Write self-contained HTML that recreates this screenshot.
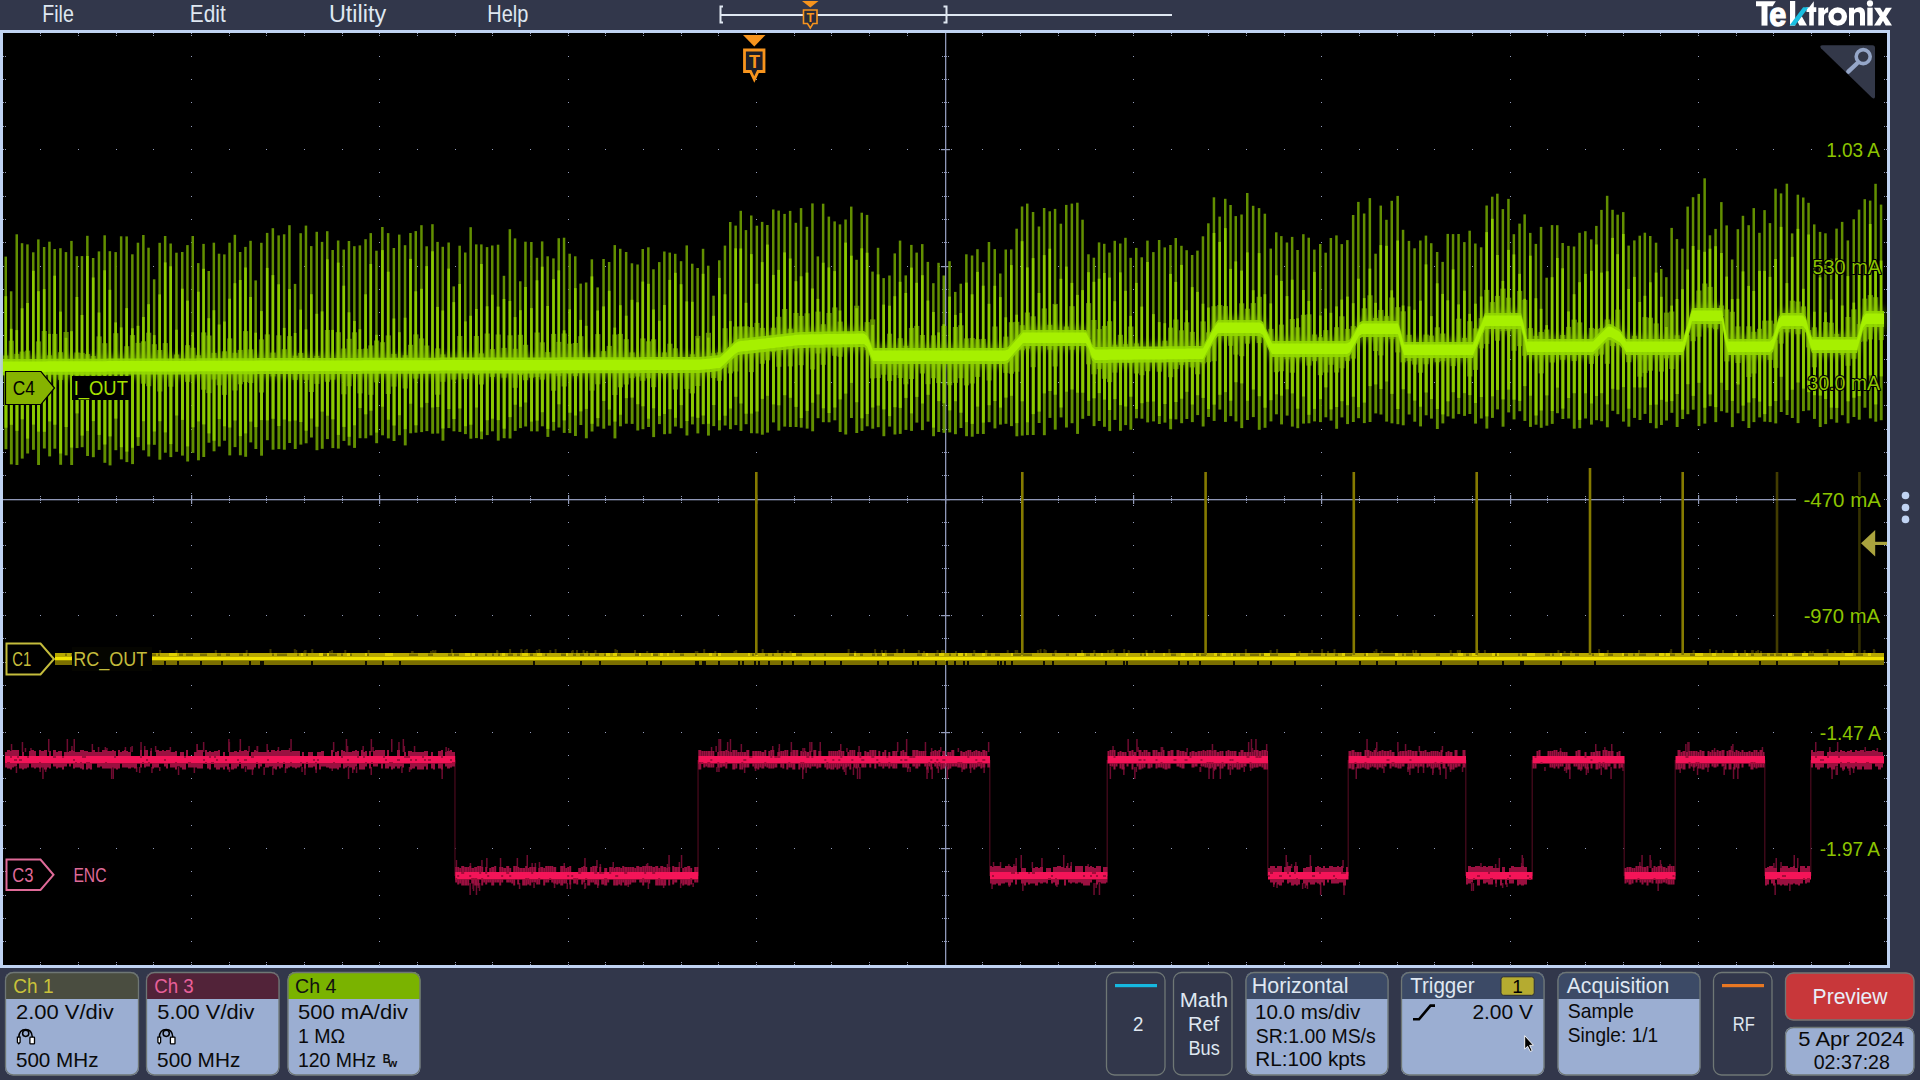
<!DOCTYPE html>
<html><head><meta charset="utf-8"><title>Tektronix</title>
<style>
html,body{margin:0;padding:0;background:#32374b;width:1920px;height:1080px;overflow:hidden}
svg{display:block}
text{font-family:"Liberation Sans", sans-serif}
</style></head><body>
<svg width="1920" height="1080" viewBox="0 0 1920 1080">
<defs><filter id="glow" x="-2%" y="-100%" width="104%" height="300%"><feGaussianBlur stdDeviation="3.5"/></filter></defs>
<rect x="0" y="0" width="1920" height="1080" fill="#32374b"/>

<text transform="translate(42.29,22) scale(0.8529,1)" x="0" y="0" font-size="23" fill="#dfe7f1" text-anchor="start" >File</text>
<text transform="translate(189.80,22) scale(0.9058,1)" x="0" y="0" font-size="23" fill="#dfe7f1" text-anchor="start" >Edit</text>
<text transform="translate(328.96,22) scale(1.0185,1)" x="0" y="0" font-size="23" fill="#dfe7f1" text-anchor="start" >Utility</text>
<text transform="translate(487.26,22) scale(0.8670,1)" x="0" y="0" font-size="23" fill="#dfe7f1" text-anchor="start" >Help</text>
<rect x="720" y="14" width="452" height="2" fill="#dfe7f1"/>
<path d="M723,6.5 H720.5 V22.5 H723" fill="none" stroke="#dfe7f1" stroke-width="2"/>
<path d="M943.5,6.5 H946.5 V22.5 H943.5" fill="none" stroke="#dfe7f1" stroke-width="2"/>
<path d="M802,1 L818.5,1 L810.3,7.5 Z" fill="#f7941d"/>
<path d="M803.5,10 H817 V23.5 H813 L810.3,28 L807.5,23.5 H803.5 Z" fill="#2a2d3a" stroke="#f7941d" stroke-width="1.6"/>
<text x="810.3" y="22" font-size="12.5" fill="#f7941d" text-anchor="middle" font-weight="bold">T</text>
<g fill="#ffffff"><path d="M1756,1.25 H1775.8 L1772.7,6.25 H1756 Z"/><rect x="1761.5" y="6" width="6" height="19.6"/><text x="1769.3" y="25.7" font-size="33" font-weight="bold" stroke="#fff" stroke-width="1.3" transform="translate(1769.3,25.7) scale(0.93,1) translate(-1769.3,-25.7)">e</text><rect x="1790" y="1" width="5.2" height="24.6"/><path d="M1799.4,25.6 H1807 L1801.8,16.3 L1797.6,21.8 Z"/><path d="M1809.2,7.3 L1813.8,1.25 V7.3 H1816.3 V12.1 H1813.8 V25.6 H1809.2 V12.1 H1806.5 V7.3 Z"/><path d="M1818.3,25.6 V7.8 H1824 V10.5 C1825,8.6 1826.5,7.5 1828.2,7.3 V12.4 C1825.6,12.6 1824,14 1824,16.2 V25.6 Z"/><path d="M1849,25.6 V7.8 H1854 V10 C1855.3,8.2 1857.3,7.3 1859.5,7.3 C1863,7.3 1865,9.6 1865,13.6 V25.6 H1860 V14.8 C1860,12.8 1859.2,12 1857.6,12 C1855.6,12 1854,13.2 1854,15.2 V25.6 Z"/><rect x="1867.3" y="7.7" width="5.4" height="17.9"/><circle cx="1870" cy="3.4" r="3.1"/><path d="M1874,7.7 H1880.2 L1883,12.6 L1885.8,7.7 H1891.9 L1886.2,16.4 L1892,25.6 H1885.7 L1883,20.8 L1880.2,25.6 H1874 L1879.8,16.4 Z"/></g><ellipse cx="1837.7" cy="16.55" rx="6.7" ry="6.6" fill="none" stroke="#ffffff" stroke-width="5.4"/><path d="M1789.5,25.4 H1795 L1808.6,7.2 H1803.1 Z" fill="#19bfe2"/>
<rect x="0" y="30" width="1890" height="938" fill="#c0d3f2"/>
<rect x="3" y="33" width="1884" height="932" fill="#000"/>
<g fill="#949dbb"><rect x="3" y="149" width="1" height="1"/><rect x="40" y="149" width="1" height="1"/><rect x="78" y="149" width="1" height="1"/><rect x="116" y="149" width="1" height="1"/><rect x="153" y="149" width="1" height="1"/><rect x="191" y="149" width="1" height="1"/><rect x="229" y="149" width="1" height="1"/><rect x="266" y="149" width="1" height="1"/><rect x="304" y="149" width="1" height="1"/><rect x="342" y="149" width="1" height="1"/><rect x="379" y="149" width="1" height="1"/><rect x="417" y="149" width="1" height="1"/><rect x="455" y="149" width="1" height="1"/><rect x="492" y="149" width="1" height="1"/><rect x="530" y="149" width="1" height="1"/><rect x="568" y="149" width="1" height="1"/><rect x="605" y="149" width="1" height="1"/><rect x="643" y="149" width="1" height="1"/><rect x="681" y="149" width="1" height="1"/><rect x="718" y="149" width="1" height="1"/><rect x="756" y="149" width="1" height="1"/><rect x="794" y="149" width="1" height="1"/><rect x="831" y="149" width="1" height="1"/><rect x="869" y="149" width="1" height="1"/><rect x="907" y="149" width="1" height="1"/><rect x="982" y="149" width="1" height="1"/><rect x="1020" y="149" width="1" height="1"/><rect x="1058" y="149" width="1" height="1"/><rect x="1095" y="149" width="1" height="1"/><rect x="1133" y="149" width="1" height="1"/><rect x="1171" y="149" width="1" height="1"/><rect x="1208" y="149" width="1" height="1"/><rect x="1246" y="149" width="1" height="1"/><rect x="1284" y="149" width="1" height="1"/><rect x="1321" y="149" width="1" height="1"/><rect x="1359" y="149" width="1" height="1"/><rect x="1397" y="149" width="1" height="1"/><rect x="1434" y="149" width="1" height="1"/><rect x="1472" y="149" width="1" height="1"/><rect x="1510" y="149" width="1" height="1"/><rect x="1547" y="149" width="1" height="1"/><rect x="1585" y="149" width="1" height="1"/><rect x="1623" y="149" width="1" height="1"/><rect x="1660" y="149" width="1" height="1"/><rect x="1698" y="149" width="1" height="1"/><rect x="1736" y="149" width="1" height="1"/><rect x="1773" y="149" width="1" height="1"/><rect x="1811" y="149" width="1" height="1"/><rect x="1849" y="149" width="1" height="1"/><rect x="1887" y="149" width="1" height="1"/><rect x="3" y="266" width="1" height="1"/><rect x="40" y="266" width="1" height="1"/><rect x="78" y="266" width="1" height="1"/><rect x="116" y="266" width="1" height="1"/><rect x="153" y="266" width="1" height="1"/><rect x="191" y="266" width="1" height="1"/><rect x="229" y="266" width="1" height="1"/><rect x="266" y="266" width="1" height="1"/><rect x="304" y="266" width="1" height="1"/><rect x="342" y="266" width="1" height="1"/><rect x="379" y="266" width="1" height="1"/><rect x="417" y="266" width="1" height="1"/><rect x="455" y="266" width="1" height="1"/><rect x="492" y="266" width="1" height="1"/><rect x="530" y="266" width="1" height="1"/><rect x="568" y="266" width="1" height="1"/><rect x="605" y="266" width="1" height="1"/><rect x="643" y="266" width="1" height="1"/><rect x="681" y="266" width="1" height="1"/><rect x="718" y="266" width="1" height="1"/><rect x="756" y="266" width="1" height="1"/><rect x="794" y="266" width="1" height="1"/><rect x="831" y="266" width="1" height="1"/><rect x="869" y="266" width="1" height="1"/><rect x="907" y="266" width="1" height="1"/><rect x="982" y="266" width="1" height="1"/><rect x="1020" y="266" width="1" height="1"/><rect x="1058" y="266" width="1" height="1"/><rect x="1095" y="266" width="1" height="1"/><rect x="1133" y="266" width="1" height="1"/><rect x="1171" y="266" width="1" height="1"/><rect x="1208" y="266" width="1" height="1"/><rect x="1246" y="266" width="1" height="1"/><rect x="1284" y="266" width="1" height="1"/><rect x="1321" y="266" width="1" height="1"/><rect x="1359" y="266" width="1" height="1"/><rect x="1397" y="266" width="1" height="1"/><rect x="1434" y="266" width="1" height="1"/><rect x="1472" y="266" width="1" height="1"/><rect x="1510" y="266" width="1" height="1"/><rect x="1547" y="266" width="1" height="1"/><rect x="1585" y="266" width="1" height="1"/><rect x="1623" y="266" width="1" height="1"/><rect x="1660" y="266" width="1" height="1"/><rect x="1698" y="266" width="1" height="1"/><rect x="1736" y="266" width="1" height="1"/><rect x="1773" y="266" width="1" height="1"/><rect x="1811" y="266" width="1" height="1"/><rect x="1849" y="266" width="1" height="1"/><rect x="1887" y="266" width="1" height="1"/><rect x="3" y="382" width="1" height="1"/><rect x="40" y="382" width="1" height="1"/><rect x="78" y="382" width="1" height="1"/><rect x="116" y="382" width="1" height="1"/><rect x="153" y="382" width="1" height="1"/><rect x="191" y="382" width="1" height="1"/><rect x="229" y="382" width="1" height="1"/><rect x="266" y="382" width="1" height="1"/><rect x="304" y="382" width="1" height="1"/><rect x="342" y="382" width="1" height="1"/><rect x="379" y="382" width="1" height="1"/><rect x="417" y="382" width="1" height="1"/><rect x="455" y="382" width="1" height="1"/><rect x="492" y="382" width="1" height="1"/><rect x="530" y="382" width="1" height="1"/><rect x="568" y="382" width="1" height="1"/><rect x="605" y="382" width="1" height="1"/><rect x="643" y="382" width="1" height="1"/><rect x="681" y="382" width="1" height="1"/><rect x="718" y="382" width="1" height="1"/><rect x="756" y="382" width="1" height="1"/><rect x="794" y="382" width="1" height="1"/><rect x="831" y="382" width="1" height="1"/><rect x="869" y="382" width="1" height="1"/><rect x="907" y="382" width="1" height="1"/><rect x="982" y="382" width="1" height="1"/><rect x="1020" y="382" width="1" height="1"/><rect x="1058" y="382" width="1" height="1"/><rect x="1095" y="382" width="1" height="1"/><rect x="1133" y="382" width="1" height="1"/><rect x="1171" y="382" width="1" height="1"/><rect x="1208" y="382" width="1" height="1"/><rect x="1246" y="382" width="1" height="1"/><rect x="1284" y="382" width="1" height="1"/><rect x="1321" y="382" width="1" height="1"/><rect x="1359" y="382" width="1" height="1"/><rect x="1397" y="382" width="1" height="1"/><rect x="1434" y="382" width="1" height="1"/><rect x="1472" y="382" width="1" height="1"/><rect x="1510" y="382" width="1" height="1"/><rect x="1547" y="382" width="1" height="1"/><rect x="1585" y="382" width="1" height="1"/><rect x="1623" y="382" width="1" height="1"/><rect x="1660" y="382" width="1" height="1"/><rect x="1698" y="382" width="1" height="1"/><rect x="1736" y="382" width="1" height="1"/><rect x="1773" y="382" width="1" height="1"/><rect x="1811" y="382" width="1" height="1"/><rect x="1849" y="382" width="1" height="1"/><rect x="1887" y="382" width="1" height="1"/><rect x="3" y="499" width="1" height="1"/><rect x="40" y="499" width="1" height="1"/><rect x="78" y="499" width="1" height="1"/><rect x="116" y="499" width="1" height="1"/><rect x="153" y="499" width="1" height="1"/><rect x="191" y="499" width="1" height="1"/><rect x="229" y="499" width="1" height="1"/><rect x="266" y="499" width="1" height="1"/><rect x="304" y="499" width="1" height="1"/><rect x="342" y="499" width="1" height="1"/><rect x="379" y="499" width="1" height="1"/><rect x="417" y="499" width="1" height="1"/><rect x="455" y="499" width="1" height="1"/><rect x="492" y="499" width="1" height="1"/><rect x="530" y="499" width="1" height="1"/><rect x="568" y="499" width="1" height="1"/><rect x="605" y="499" width="1" height="1"/><rect x="643" y="499" width="1" height="1"/><rect x="681" y="499" width="1" height="1"/><rect x="718" y="499" width="1" height="1"/><rect x="756" y="499" width="1" height="1"/><rect x="794" y="499" width="1" height="1"/><rect x="831" y="499" width="1" height="1"/><rect x="869" y="499" width="1" height="1"/><rect x="907" y="499" width="1" height="1"/><rect x="982" y="499" width="1" height="1"/><rect x="1020" y="499" width="1" height="1"/><rect x="1058" y="499" width="1" height="1"/><rect x="1095" y="499" width="1" height="1"/><rect x="1133" y="499" width="1" height="1"/><rect x="1171" y="499" width="1" height="1"/><rect x="1208" y="499" width="1" height="1"/><rect x="1246" y="499" width="1" height="1"/><rect x="1284" y="499" width="1" height="1"/><rect x="1321" y="499" width="1" height="1"/><rect x="1359" y="499" width="1" height="1"/><rect x="1397" y="499" width="1" height="1"/><rect x="1434" y="499" width="1" height="1"/><rect x="1472" y="499" width="1" height="1"/><rect x="1510" y="499" width="1" height="1"/><rect x="1547" y="499" width="1" height="1"/><rect x="1585" y="499" width="1" height="1"/><rect x="1623" y="499" width="1" height="1"/><rect x="1660" y="499" width="1" height="1"/><rect x="1698" y="499" width="1" height="1"/><rect x="1736" y="499" width="1" height="1"/><rect x="1773" y="499" width="1" height="1"/><rect x="1811" y="499" width="1" height="1"/><rect x="1849" y="499" width="1" height="1"/><rect x="1887" y="499" width="1" height="1"/><rect x="3" y="615" width="1" height="1"/><rect x="40" y="615" width="1" height="1"/><rect x="78" y="615" width="1" height="1"/><rect x="116" y="615" width="1" height="1"/><rect x="153" y="615" width="1" height="1"/><rect x="191" y="615" width="1" height="1"/><rect x="229" y="615" width="1" height="1"/><rect x="266" y="615" width="1" height="1"/><rect x="304" y="615" width="1" height="1"/><rect x="342" y="615" width="1" height="1"/><rect x="379" y="615" width="1" height="1"/><rect x="417" y="615" width="1" height="1"/><rect x="455" y="615" width="1" height="1"/><rect x="492" y="615" width="1" height="1"/><rect x="530" y="615" width="1" height="1"/><rect x="568" y="615" width="1" height="1"/><rect x="605" y="615" width="1" height="1"/><rect x="643" y="615" width="1" height="1"/><rect x="681" y="615" width="1" height="1"/><rect x="718" y="615" width="1" height="1"/><rect x="756" y="615" width="1" height="1"/><rect x="794" y="615" width="1" height="1"/><rect x="831" y="615" width="1" height="1"/><rect x="869" y="615" width="1" height="1"/><rect x="907" y="615" width="1" height="1"/><rect x="982" y="615" width="1" height="1"/><rect x="1020" y="615" width="1" height="1"/><rect x="1058" y="615" width="1" height="1"/><rect x="1095" y="615" width="1" height="1"/><rect x="1133" y="615" width="1" height="1"/><rect x="1171" y="615" width="1" height="1"/><rect x="1208" y="615" width="1" height="1"/><rect x="1246" y="615" width="1" height="1"/><rect x="1284" y="615" width="1" height="1"/><rect x="1321" y="615" width="1" height="1"/><rect x="1359" y="615" width="1" height="1"/><rect x="1397" y="615" width="1" height="1"/><rect x="1434" y="615" width="1" height="1"/><rect x="1472" y="615" width="1" height="1"/><rect x="1510" y="615" width="1" height="1"/><rect x="1547" y="615" width="1" height="1"/><rect x="1585" y="615" width="1" height="1"/><rect x="1623" y="615" width="1" height="1"/><rect x="1660" y="615" width="1" height="1"/><rect x="1698" y="615" width="1" height="1"/><rect x="1736" y="615" width="1" height="1"/><rect x="1773" y="615" width="1" height="1"/><rect x="1811" y="615" width="1" height="1"/><rect x="1849" y="615" width="1" height="1"/><rect x="1887" y="615" width="1" height="1"/><rect x="3" y="732" width="1" height="1"/><rect x="40" y="732" width="1" height="1"/><rect x="78" y="732" width="1" height="1"/><rect x="116" y="732" width="1" height="1"/><rect x="153" y="732" width="1" height="1"/><rect x="191" y="732" width="1" height="1"/><rect x="229" y="732" width="1" height="1"/><rect x="266" y="732" width="1" height="1"/><rect x="304" y="732" width="1" height="1"/><rect x="342" y="732" width="1" height="1"/><rect x="379" y="732" width="1" height="1"/><rect x="417" y="732" width="1" height="1"/><rect x="455" y="732" width="1" height="1"/><rect x="492" y="732" width="1" height="1"/><rect x="530" y="732" width="1" height="1"/><rect x="568" y="732" width="1" height="1"/><rect x="605" y="732" width="1" height="1"/><rect x="643" y="732" width="1" height="1"/><rect x="681" y="732" width="1" height="1"/><rect x="718" y="732" width="1" height="1"/><rect x="756" y="732" width="1" height="1"/><rect x="794" y="732" width="1" height="1"/><rect x="831" y="732" width="1" height="1"/><rect x="869" y="732" width="1" height="1"/><rect x="907" y="732" width="1" height="1"/><rect x="982" y="732" width="1" height="1"/><rect x="1020" y="732" width="1" height="1"/><rect x="1058" y="732" width="1" height="1"/><rect x="1095" y="732" width="1" height="1"/><rect x="1133" y="732" width="1" height="1"/><rect x="1171" y="732" width="1" height="1"/><rect x="1208" y="732" width="1" height="1"/><rect x="1246" y="732" width="1" height="1"/><rect x="1284" y="732" width="1" height="1"/><rect x="1321" y="732" width="1" height="1"/><rect x="1359" y="732" width="1" height="1"/><rect x="1397" y="732" width="1" height="1"/><rect x="1434" y="732" width="1" height="1"/><rect x="1472" y="732" width="1" height="1"/><rect x="1510" y="732" width="1" height="1"/><rect x="1547" y="732" width="1" height="1"/><rect x="1585" y="732" width="1" height="1"/><rect x="1623" y="732" width="1" height="1"/><rect x="1660" y="732" width="1" height="1"/><rect x="1698" y="732" width="1" height="1"/><rect x="1736" y="732" width="1" height="1"/><rect x="1773" y="732" width="1" height="1"/><rect x="1811" y="732" width="1" height="1"/><rect x="1849" y="732" width="1" height="1"/><rect x="1887" y="732" width="1" height="1"/><rect x="3" y="848" width="1" height="1"/><rect x="40" y="848" width="1" height="1"/><rect x="78" y="848" width="1" height="1"/><rect x="116" y="848" width="1" height="1"/><rect x="153" y="848" width="1" height="1"/><rect x="191" y="848" width="1" height="1"/><rect x="229" y="848" width="1" height="1"/><rect x="266" y="848" width="1" height="1"/><rect x="304" y="848" width="1" height="1"/><rect x="342" y="848" width="1" height="1"/><rect x="379" y="848" width="1" height="1"/><rect x="417" y="848" width="1" height="1"/><rect x="455" y="848" width="1" height="1"/><rect x="492" y="848" width="1" height="1"/><rect x="530" y="848" width="1" height="1"/><rect x="568" y="848" width="1" height="1"/><rect x="605" y="848" width="1" height="1"/><rect x="643" y="848" width="1" height="1"/><rect x="681" y="848" width="1" height="1"/><rect x="718" y="848" width="1" height="1"/><rect x="756" y="848" width="1" height="1"/><rect x="794" y="848" width="1" height="1"/><rect x="831" y="848" width="1" height="1"/><rect x="869" y="848" width="1" height="1"/><rect x="907" y="848" width="1" height="1"/><rect x="982" y="848" width="1" height="1"/><rect x="1020" y="848" width="1" height="1"/><rect x="1058" y="848" width="1" height="1"/><rect x="1095" y="848" width="1" height="1"/><rect x="1133" y="848" width="1" height="1"/><rect x="1171" y="848" width="1" height="1"/><rect x="1208" y="848" width="1" height="1"/><rect x="1246" y="848" width="1" height="1"/><rect x="1284" y="848" width="1" height="1"/><rect x="1321" y="848" width="1" height="1"/><rect x="1359" y="848" width="1" height="1"/><rect x="1397" y="848" width="1" height="1"/><rect x="1434" y="848" width="1" height="1"/><rect x="1472" y="848" width="1" height="1"/><rect x="1510" y="848" width="1" height="1"/><rect x="1547" y="848" width="1" height="1"/><rect x="1585" y="848" width="1" height="1"/><rect x="1623" y="848" width="1" height="1"/><rect x="1660" y="848" width="1" height="1"/><rect x="1698" y="848" width="1" height="1"/><rect x="1736" y="848" width="1" height="1"/><rect x="1773" y="848" width="1" height="1"/><rect x="1811" y="848" width="1" height="1"/><rect x="1849" y="848" width="1" height="1"/><rect x="1887" y="848" width="1" height="1"/><rect x="191" y="33" width="1" height="1"/><rect x="191" y="56" width="1" height="1"/><rect x="191" y="79" width="1" height="1"/><rect x="191" y="102" width="1" height="1"/><rect x="191" y="126" width="1" height="1"/><rect x="191" y="149" width="1" height="1"/><rect x="191" y="172" width="1" height="1"/><rect x="191" y="196" width="1" height="1"/><rect x="191" y="219" width="1" height="1"/><rect x="191" y="242" width="1" height="1"/><rect x="191" y="266" width="1" height="1"/><rect x="191" y="289" width="1" height="1"/><rect x="191" y="312" width="1" height="1"/><rect x="191" y="335" width="1" height="1"/><rect x="191" y="359" width="1" height="1"/><rect x="191" y="382" width="1" height="1"/><rect x="191" y="405" width="1" height="1"/><rect x="191" y="429" width="1" height="1"/><rect x="191" y="452" width="1" height="1"/><rect x="191" y="475" width="1" height="1"/><rect x="191" y="499" width="1" height="1"/><rect x="191" y="522" width="1" height="1"/><rect x="191" y="545" width="1" height="1"/><rect x="191" y="568" width="1" height="1"/><rect x="191" y="592" width="1" height="1"/><rect x="191" y="615" width="1" height="1"/><rect x="191" y="638" width="1" height="1"/><rect x="191" y="662" width="1" height="1"/><rect x="191" y="685" width="1" height="1"/><rect x="191" y="708" width="1" height="1"/><rect x="191" y="732" width="1" height="1"/><rect x="191" y="755" width="1" height="1"/><rect x="191" y="778" width="1" height="1"/><rect x="191" y="801" width="1" height="1"/><rect x="191" y="825" width="1" height="1"/><rect x="191" y="848" width="1" height="1"/><rect x="191" y="871" width="1" height="1"/><rect x="191" y="895" width="1" height="1"/><rect x="191" y="918" width="1" height="1"/><rect x="191" y="941" width="1" height="1"/><rect x="191" y="965" width="1" height="1"/><rect x="379" y="33" width="1" height="1"/><rect x="379" y="56" width="1" height="1"/><rect x="379" y="79" width="1" height="1"/><rect x="379" y="102" width="1" height="1"/><rect x="379" y="126" width="1" height="1"/><rect x="379" y="149" width="1" height="1"/><rect x="379" y="172" width="1" height="1"/><rect x="379" y="196" width="1" height="1"/><rect x="379" y="219" width="1" height="1"/><rect x="379" y="242" width="1" height="1"/><rect x="379" y="266" width="1" height="1"/><rect x="379" y="289" width="1" height="1"/><rect x="379" y="312" width="1" height="1"/><rect x="379" y="335" width="1" height="1"/><rect x="379" y="359" width="1" height="1"/><rect x="379" y="382" width="1" height="1"/><rect x="379" y="405" width="1" height="1"/><rect x="379" y="429" width="1" height="1"/><rect x="379" y="452" width="1" height="1"/><rect x="379" y="475" width="1" height="1"/><rect x="379" y="499" width="1" height="1"/><rect x="379" y="522" width="1" height="1"/><rect x="379" y="545" width="1" height="1"/><rect x="379" y="568" width="1" height="1"/><rect x="379" y="592" width="1" height="1"/><rect x="379" y="615" width="1" height="1"/><rect x="379" y="638" width="1" height="1"/><rect x="379" y="662" width="1" height="1"/><rect x="379" y="685" width="1" height="1"/><rect x="379" y="708" width="1" height="1"/><rect x="379" y="732" width="1" height="1"/><rect x="379" y="755" width="1" height="1"/><rect x="379" y="778" width="1" height="1"/><rect x="379" y="801" width="1" height="1"/><rect x="379" y="825" width="1" height="1"/><rect x="379" y="848" width="1" height="1"/><rect x="379" y="871" width="1" height="1"/><rect x="379" y="895" width="1" height="1"/><rect x="379" y="918" width="1" height="1"/><rect x="379" y="941" width="1" height="1"/><rect x="379" y="965" width="1" height="1"/><rect x="568" y="33" width="1" height="1"/><rect x="568" y="56" width="1" height="1"/><rect x="568" y="79" width="1" height="1"/><rect x="568" y="102" width="1" height="1"/><rect x="568" y="126" width="1" height="1"/><rect x="568" y="149" width="1" height="1"/><rect x="568" y="172" width="1" height="1"/><rect x="568" y="196" width="1" height="1"/><rect x="568" y="219" width="1" height="1"/><rect x="568" y="242" width="1" height="1"/><rect x="568" y="266" width="1" height="1"/><rect x="568" y="289" width="1" height="1"/><rect x="568" y="312" width="1" height="1"/><rect x="568" y="335" width="1" height="1"/><rect x="568" y="359" width="1" height="1"/><rect x="568" y="382" width="1" height="1"/><rect x="568" y="405" width="1" height="1"/><rect x="568" y="429" width="1" height="1"/><rect x="568" y="452" width="1" height="1"/><rect x="568" y="475" width="1" height="1"/><rect x="568" y="499" width="1" height="1"/><rect x="568" y="522" width="1" height="1"/><rect x="568" y="545" width="1" height="1"/><rect x="568" y="568" width="1" height="1"/><rect x="568" y="592" width="1" height="1"/><rect x="568" y="615" width="1" height="1"/><rect x="568" y="638" width="1" height="1"/><rect x="568" y="662" width="1" height="1"/><rect x="568" y="685" width="1" height="1"/><rect x="568" y="708" width="1" height="1"/><rect x="568" y="732" width="1" height="1"/><rect x="568" y="755" width="1" height="1"/><rect x="568" y="778" width="1" height="1"/><rect x="568" y="801" width="1" height="1"/><rect x="568" y="825" width="1" height="1"/><rect x="568" y="848" width="1" height="1"/><rect x="568" y="871" width="1" height="1"/><rect x="568" y="895" width="1" height="1"/><rect x="568" y="918" width="1" height="1"/><rect x="568" y="941" width="1" height="1"/><rect x="568" y="965" width="1" height="1"/><rect x="756" y="33" width="1" height="1"/><rect x="756" y="56" width="1" height="1"/><rect x="756" y="79" width="1" height="1"/><rect x="756" y="102" width="1" height="1"/><rect x="756" y="126" width="1" height="1"/><rect x="756" y="149" width="1" height="1"/><rect x="756" y="172" width="1" height="1"/><rect x="756" y="196" width="1" height="1"/><rect x="756" y="219" width="1" height="1"/><rect x="756" y="242" width="1" height="1"/><rect x="756" y="266" width="1" height="1"/><rect x="756" y="289" width="1" height="1"/><rect x="756" y="312" width="1" height="1"/><rect x="756" y="335" width="1" height="1"/><rect x="756" y="359" width="1" height="1"/><rect x="756" y="382" width="1" height="1"/><rect x="756" y="405" width="1" height="1"/><rect x="756" y="429" width="1" height="1"/><rect x="756" y="452" width="1" height="1"/><rect x="756" y="475" width="1" height="1"/><rect x="756" y="499" width="1" height="1"/><rect x="756" y="522" width="1" height="1"/><rect x="756" y="545" width="1" height="1"/><rect x="756" y="568" width="1" height="1"/><rect x="756" y="592" width="1" height="1"/><rect x="756" y="615" width="1" height="1"/><rect x="756" y="638" width="1" height="1"/><rect x="756" y="662" width="1" height="1"/><rect x="756" y="685" width="1" height="1"/><rect x="756" y="708" width="1" height="1"/><rect x="756" y="732" width="1" height="1"/><rect x="756" y="755" width="1" height="1"/><rect x="756" y="778" width="1" height="1"/><rect x="756" y="801" width="1" height="1"/><rect x="756" y="825" width="1" height="1"/><rect x="756" y="848" width="1" height="1"/><rect x="756" y="871" width="1" height="1"/><rect x="756" y="895" width="1" height="1"/><rect x="756" y="918" width="1" height="1"/><rect x="756" y="941" width="1" height="1"/><rect x="756" y="965" width="1" height="1"/><rect x="1133" y="33" width="1" height="1"/><rect x="1133" y="56" width="1" height="1"/><rect x="1133" y="79" width="1" height="1"/><rect x="1133" y="102" width="1" height="1"/><rect x="1133" y="126" width="1" height="1"/><rect x="1133" y="149" width="1" height="1"/><rect x="1133" y="172" width="1" height="1"/><rect x="1133" y="196" width="1" height="1"/><rect x="1133" y="219" width="1" height="1"/><rect x="1133" y="242" width="1" height="1"/><rect x="1133" y="266" width="1" height="1"/><rect x="1133" y="289" width="1" height="1"/><rect x="1133" y="312" width="1" height="1"/><rect x="1133" y="335" width="1" height="1"/><rect x="1133" y="359" width="1" height="1"/><rect x="1133" y="382" width="1" height="1"/><rect x="1133" y="405" width="1" height="1"/><rect x="1133" y="429" width="1" height="1"/><rect x="1133" y="452" width="1" height="1"/><rect x="1133" y="475" width="1" height="1"/><rect x="1133" y="499" width="1" height="1"/><rect x="1133" y="522" width="1" height="1"/><rect x="1133" y="545" width="1" height="1"/><rect x="1133" y="568" width="1" height="1"/><rect x="1133" y="592" width="1" height="1"/><rect x="1133" y="615" width="1" height="1"/><rect x="1133" y="638" width="1" height="1"/><rect x="1133" y="662" width="1" height="1"/><rect x="1133" y="685" width="1" height="1"/><rect x="1133" y="708" width="1" height="1"/><rect x="1133" y="732" width="1" height="1"/><rect x="1133" y="755" width="1" height="1"/><rect x="1133" y="778" width="1" height="1"/><rect x="1133" y="801" width="1" height="1"/><rect x="1133" y="825" width="1" height="1"/><rect x="1133" y="848" width="1" height="1"/><rect x="1133" y="871" width="1" height="1"/><rect x="1133" y="895" width="1" height="1"/><rect x="1133" y="918" width="1" height="1"/><rect x="1133" y="941" width="1" height="1"/><rect x="1133" y="965" width="1" height="1"/><rect x="1321" y="33" width="1" height="1"/><rect x="1321" y="56" width="1" height="1"/><rect x="1321" y="79" width="1" height="1"/><rect x="1321" y="102" width="1" height="1"/><rect x="1321" y="126" width="1" height="1"/><rect x="1321" y="149" width="1" height="1"/><rect x="1321" y="172" width="1" height="1"/><rect x="1321" y="196" width="1" height="1"/><rect x="1321" y="219" width="1" height="1"/><rect x="1321" y="242" width="1" height="1"/><rect x="1321" y="266" width="1" height="1"/><rect x="1321" y="289" width="1" height="1"/><rect x="1321" y="312" width="1" height="1"/><rect x="1321" y="335" width="1" height="1"/><rect x="1321" y="359" width="1" height="1"/><rect x="1321" y="382" width="1" height="1"/><rect x="1321" y="405" width="1" height="1"/><rect x="1321" y="429" width="1" height="1"/><rect x="1321" y="452" width="1" height="1"/><rect x="1321" y="475" width="1" height="1"/><rect x="1321" y="499" width="1" height="1"/><rect x="1321" y="522" width="1" height="1"/><rect x="1321" y="545" width="1" height="1"/><rect x="1321" y="568" width="1" height="1"/><rect x="1321" y="592" width="1" height="1"/><rect x="1321" y="615" width="1" height="1"/><rect x="1321" y="638" width="1" height="1"/><rect x="1321" y="662" width="1" height="1"/><rect x="1321" y="685" width="1" height="1"/><rect x="1321" y="708" width="1" height="1"/><rect x="1321" y="732" width="1" height="1"/><rect x="1321" y="755" width="1" height="1"/><rect x="1321" y="778" width="1" height="1"/><rect x="1321" y="801" width="1" height="1"/><rect x="1321" y="825" width="1" height="1"/><rect x="1321" y="848" width="1" height="1"/><rect x="1321" y="871" width="1" height="1"/><rect x="1321" y="895" width="1" height="1"/><rect x="1321" y="918" width="1" height="1"/><rect x="1321" y="941" width="1" height="1"/><rect x="1321" y="965" width="1" height="1"/><rect x="1510" y="33" width="1" height="1"/><rect x="1510" y="56" width="1" height="1"/><rect x="1510" y="79" width="1" height="1"/><rect x="1510" y="102" width="1" height="1"/><rect x="1510" y="126" width="1" height="1"/><rect x="1510" y="149" width="1" height="1"/><rect x="1510" y="172" width="1" height="1"/><rect x="1510" y="196" width="1" height="1"/><rect x="1510" y="219" width="1" height="1"/><rect x="1510" y="242" width="1" height="1"/><rect x="1510" y="266" width="1" height="1"/><rect x="1510" y="289" width="1" height="1"/><rect x="1510" y="312" width="1" height="1"/><rect x="1510" y="335" width="1" height="1"/><rect x="1510" y="359" width="1" height="1"/><rect x="1510" y="382" width="1" height="1"/><rect x="1510" y="405" width="1" height="1"/><rect x="1510" y="429" width="1" height="1"/><rect x="1510" y="452" width="1" height="1"/><rect x="1510" y="475" width="1" height="1"/><rect x="1510" y="499" width="1" height="1"/><rect x="1510" y="522" width="1" height="1"/><rect x="1510" y="545" width="1" height="1"/><rect x="1510" y="568" width="1" height="1"/><rect x="1510" y="592" width="1" height="1"/><rect x="1510" y="615" width="1" height="1"/><rect x="1510" y="638" width="1" height="1"/><rect x="1510" y="662" width="1" height="1"/><rect x="1510" y="685" width="1" height="1"/><rect x="1510" y="708" width="1" height="1"/><rect x="1510" y="732" width="1" height="1"/><rect x="1510" y="755" width="1" height="1"/><rect x="1510" y="778" width="1" height="1"/><rect x="1510" y="801" width="1" height="1"/><rect x="1510" y="825" width="1" height="1"/><rect x="1510" y="848" width="1" height="1"/><rect x="1510" y="871" width="1" height="1"/><rect x="1510" y="895" width="1" height="1"/><rect x="1510" y="918" width="1" height="1"/><rect x="1510" y="941" width="1" height="1"/><rect x="1510" y="965" width="1" height="1"/><rect x="1698" y="33" width="1" height="1"/><rect x="1698" y="56" width="1" height="1"/><rect x="1698" y="79" width="1" height="1"/><rect x="1698" y="102" width="1" height="1"/><rect x="1698" y="126" width="1" height="1"/><rect x="1698" y="149" width="1" height="1"/><rect x="1698" y="172" width="1" height="1"/><rect x="1698" y="196" width="1" height="1"/><rect x="1698" y="219" width="1" height="1"/><rect x="1698" y="242" width="1" height="1"/><rect x="1698" y="266" width="1" height="1"/><rect x="1698" y="289" width="1" height="1"/><rect x="1698" y="312" width="1" height="1"/><rect x="1698" y="335" width="1" height="1"/><rect x="1698" y="359" width="1" height="1"/><rect x="1698" y="382" width="1" height="1"/><rect x="1698" y="405" width="1" height="1"/><rect x="1698" y="429" width="1" height="1"/><rect x="1698" y="452" width="1" height="1"/><rect x="1698" y="475" width="1" height="1"/><rect x="1698" y="499" width="1" height="1"/><rect x="1698" y="522" width="1" height="1"/><rect x="1698" y="545" width="1" height="1"/><rect x="1698" y="568" width="1" height="1"/><rect x="1698" y="592" width="1" height="1"/><rect x="1698" y="615" width="1" height="1"/><rect x="1698" y="638" width="1" height="1"/><rect x="1698" y="662" width="1" height="1"/><rect x="1698" y="685" width="1" height="1"/><rect x="1698" y="708" width="1" height="1"/><rect x="1698" y="732" width="1" height="1"/><rect x="1698" y="755" width="1" height="1"/><rect x="1698" y="778" width="1" height="1"/><rect x="1698" y="801" width="1" height="1"/><rect x="1698" y="825" width="1" height="1"/><rect x="1698" y="848" width="1" height="1"/><rect x="1698" y="871" width="1" height="1"/><rect x="1698" y="895" width="1" height="1"/><rect x="1698" y="918" width="1" height="1"/><rect x="1698" y="941" width="1" height="1"/><rect x="1698" y="965" width="1" height="1"/><rect x="40" y="33" width="1" height="1"/><rect x="40" y="35" width="1" height="1"/><rect x="40" y="962" width="1" height="1"/><rect x="40" y="964" width="1" height="1"/><rect x="78" y="33" width="1" height="1"/><rect x="78" y="35" width="1" height="1"/><rect x="78" y="962" width="1" height="1"/><rect x="78" y="964" width="1" height="1"/><rect x="116" y="33" width="1" height="1"/><rect x="116" y="35" width="1" height="1"/><rect x="116" y="962" width="1" height="1"/><rect x="116" y="964" width="1" height="1"/><rect x="153" y="33" width="1" height="1"/><rect x="153" y="35" width="1" height="1"/><rect x="153" y="962" width="1" height="1"/><rect x="153" y="964" width="1" height="1"/><rect x="191" y="33" width="1" height="1"/><rect x="191" y="35" width="1" height="1"/><rect x="191" y="962" width="1" height="1"/><rect x="191" y="964" width="1" height="1"/><rect x="229" y="33" width="1" height="1"/><rect x="229" y="35" width="1" height="1"/><rect x="229" y="962" width="1" height="1"/><rect x="229" y="964" width="1" height="1"/><rect x="266" y="33" width="1" height="1"/><rect x="266" y="35" width="1" height="1"/><rect x="266" y="962" width="1" height="1"/><rect x="266" y="964" width="1" height="1"/><rect x="304" y="33" width="1" height="1"/><rect x="304" y="35" width="1" height="1"/><rect x="304" y="962" width="1" height="1"/><rect x="304" y="964" width="1" height="1"/><rect x="342" y="33" width="1" height="1"/><rect x="342" y="35" width="1" height="1"/><rect x="342" y="962" width="1" height="1"/><rect x="342" y="964" width="1" height="1"/><rect x="379" y="33" width="1" height="1"/><rect x="379" y="35" width="1" height="1"/><rect x="379" y="962" width="1" height="1"/><rect x="379" y="964" width="1" height="1"/><rect x="417" y="33" width="1" height="1"/><rect x="417" y="35" width="1" height="1"/><rect x="417" y="962" width="1" height="1"/><rect x="417" y="964" width="1" height="1"/><rect x="455" y="33" width="1" height="1"/><rect x="455" y="35" width="1" height="1"/><rect x="455" y="962" width="1" height="1"/><rect x="455" y="964" width="1" height="1"/><rect x="492" y="33" width="1" height="1"/><rect x="492" y="35" width="1" height="1"/><rect x="492" y="962" width="1" height="1"/><rect x="492" y="964" width="1" height="1"/><rect x="530" y="33" width="1" height="1"/><rect x="530" y="35" width="1" height="1"/><rect x="530" y="962" width="1" height="1"/><rect x="530" y="964" width="1" height="1"/><rect x="568" y="33" width="1" height="1"/><rect x="568" y="35" width="1" height="1"/><rect x="568" y="962" width="1" height="1"/><rect x="568" y="964" width="1" height="1"/><rect x="605" y="33" width="1" height="1"/><rect x="605" y="35" width="1" height="1"/><rect x="605" y="962" width="1" height="1"/><rect x="605" y="964" width="1" height="1"/><rect x="643" y="33" width="1" height="1"/><rect x="643" y="35" width="1" height="1"/><rect x="643" y="962" width="1" height="1"/><rect x="643" y="964" width="1" height="1"/><rect x="681" y="33" width="1" height="1"/><rect x="681" y="35" width="1" height="1"/><rect x="681" y="962" width="1" height="1"/><rect x="681" y="964" width="1" height="1"/><rect x="718" y="33" width="1" height="1"/><rect x="718" y="35" width="1" height="1"/><rect x="718" y="962" width="1" height="1"/><rect x="718" y="964" width="1" height="1"/><rect x="756" y="33" width="1" height="1"/><rect x="756" y="35" width="1" height="1"/><rect x="756" y="962" width="1" height="1"/><rect x="756" y="964" width="1" height="1"/><rect x="794" y="33" width="1" height="1"/><rect x="794" y="35" width="1" height="1"/><rect x="794" y="962" width="1" height="1"/><rect x="794" y="964" width="1" height="1"/><rect x="831" y="33" width="1" height="1"/><rect x="831" y="35" width="1" height="1"/><rect x="831" y="962" width="1" height="1"/><rect x="831" y="964" width="1" height="1"/><rect x="869" y="33" width="1" height="1"/><rect x="869" y="35" width="1" height="1"/><rect x="869" y="962" width="1" height="1"/><rect x="869" y="964" width="1" height="1"/><rect x="907" y="33" width="1" height="1"/><rect x="907" y="35" width="1" height="1"/><rect x="907" y="962" width="1" height="1"/><rect x="907" y="964" width="1" height="1"/><rect x="945" y="33" width="1" height="1"/><rect x="945" y="35" width="1" height="1"/><rect x="945" y="962" width="1" height="1"/><rect x="945" y="964" width="1" height="1"/><rect x="982" y="33" width="1" height="1"/><rect x="982" y="35" width="1" height="1"/><rect x="982" y="962" width="1" height="1"/><rect x="982" y="964" width="1" height="1"/><rect x="1020" y="33" width="1" height="1"/><rect x="1020" y="35" width="1" height="1"/><rect x="1020" y="962" width="1" height="1"/><rect x="1020" y="964" width="1" height="1"/><rect x="1058" y="33" width="1" height="1"/><rect x="1058" y="35" width="1" height="1"/><rect x="1058" y="962" width="1" height="1"/><rect x="1058" y="964" width="1" height="1"/><rect x="1095" y="33" width="1" height="1"/><rect x="1095" y="35" width="1" height="1"/><rect x="1095" y="962" width="1" height="1"/><rect x="1095" y="964" width="1" height="1"/><rect x="1133" y="33" width="1" height="1"/><rect x="1133" y="35" width="1" height="1"/><rect x="1133" y="962" width="1" height="1"/><rect x="1133" y="964" width="1" height="1"/><rect x="1171" y="33" width="1" height="1"/><rect x="1171" y="35" width="1" height="1"/><rect x="1171" y="962" width="1" height="1"/><rect x="1171" y="964" width="1" height="1"/><rect x="1208" y="33" width="1" height="1"/><rect x="1208" y="35" width="1" height="1"/><rect x="1208" y="962" width="1" height="1"/><rect x="1208" y="964" width="1" height="1"/><rect x="1246" y="33" width="1" height="1"/><rect x="1246" y="35" width="1" height="1"/><rect x="1246" y="962" width="1" height="1"/><rect x="1246" y="964" width="1" height="1"/><rect x="1284" y="33" width="1" height="1"/><rect x="1284" y="35" width="1" height="1"/><rect x="1284" y="962" width="1" height="1"/><rect x="1284" y="964" width="1" height="1"/><rect x="1321" y="33" width="1" height="1"/><rect x="1321" y="35" width="1" height="1"/><rect x="1321" y="962" width="1" height="1"/><rect x="1321" y="964" width="1" height="1"/><rect x="1359" y="33" width="1" height="1"/><rect x="1359" y="35" width="1" height="1"/><rect x="1359" y="962" width="1" height="1"/><rect x="1359" y="964" width="1" height="1"/><rect x="1397" y="33" width="1" height="1"/><rect x="1397" y="35" width="1" height="1"/><rect x="1397" y="962" width="1" height="1"/><rect x="1397" y="964" width="1" height="1"/><rect x="1434" y="33" width="1" height="1"/><rect x="1434" y="35" width="1" height="1"/><rect x="1434" y="962" width="1" height="1"/><rect x="1434" y="964" width="1" height="1"/><rect x="1472" y="33" width="1" height="1"/><rect x="1472" y="35" width="1" height="1"/><rect x="1472" y="962" width="1" height="1"/><rect x="1472" y="964" width="1" height="1"/><rect x="1510" y="33" width="1" height="1"/><rect x="1510" y="35" width="1" height="1"/><rect x="1510" y="962" width="1" height="1"/><rect x="1510" y="964" width="1" height="1"/><rect x="1547" y="33" width="1" height="1"/><rect x="1547" y="35" width="1" height="1"/><rect x="1547" y="962" width="1" height="1"/><rect x="1547" y="964" width="1" height="1"/><rect x="1585" y="33" width="1" height="1"/><rect x="1585" y="35" width="1" height="1"/><rect x="1585" y="962" width="1" height="1"/><rect x="1585" y="964" width="1" height="1"/><rect x="1623" y="33" width="1" height="1"/><rect x="1623" y="35" width="1" height="1"/><rect x="1623" y="962" width="1" height="1"/><rect x="1623" y="964" width="1" height="1"/><rect x="1660" y="33" width="1" height="1"/><rect x="1660" y="35" width="1" height="1"/><rect x="1660" y="962" width="1" height="1"/><rect x="1660" y="964" width="1" height="1"/><rect x="1698" y="33" width="1" height="1"/><rect x="1698" y="35" width="1" height="1"/><rect x="1698" y="962" width="1" height="1"/><rect x="1698" y="964" width="1" height="1"/><rect x="1736" y="33" width="1" height="1"/><rect x="1736" y="35" width="1" height="1"/><rect x="1736" y="962" width="1" height="1"/><rect x="1736" y="964" width="1" height="1"/><rect x="1773" y="33" width="1" height="1"/><rect x="1773" y="35" width="1" height="1"/><rect x="1773" y="962" width="1" height="1"/><rect x="1773" y="964" width="1" height="1"/><rect x="1811" y="33" width="1" height="1"/><rect x="1811" y="35" width="1" height="1"/><rect x="1811" y="962" width="1" height="1"/><rect x="1811" y="964" width="1" height="1"/><rect x="1849" y="33" width="1" height="1"/><rect x="1849" y="35" width="1" height="1"/><rect x="1849" y="962" width="1" height="1"/><rect x="1849" y="964" width="1" height="1"/><rect x="3" y="56" width="1" height="1"/><rect x="5" y="56" width="1" height="1"/><rect x="1884" y="56" width="1" height="1"/><rect x="1886" y="56" width="1" height="1"/><rect x="3" y="79" width="1" height="1"/><rect x="5" y="79" width="1" height="1"/><rect x="1884" y="79" width="1" height="1"/><rect x="1886" y="79" width="1" height="1"/><rect x="3" y="102" width="1" height="1"/><rect x="5" y="102" width="1" height="1"/><rect x="1884" y="102" width="1" height="1"/><rect x="1886" y="102" width="1" height="1"/><rect x="3" y="126" width="1" height="1"/><rect x="5" y="126" width="1" height="1"/><rect x="1884" y="126" width="1" height="1"/><rect x="1886" y="126" width="1" height="1"/><rect x="3" y="149" width="1" height="1"/><rect x="5" y="149" width="1" height="1"/><rect x="1884" y="149" width="1" height="1"/><rect x="1886" y="149" width="1" height="1"/><rect x="3" y="172" width="1" height="1"/><rect x="5" y="172" width="1" height="1"/><rect x="1884" y="172" width="1" height="1"/><rect x="1886" y="172" width="1" height="1"/><rect x="3" y="196" width="1" height="1"/><rect x="5" y="196" width="1" height="1"/><rect x="1884" y="196" width="1" height="1"/><rect x="1886" y="196" width="1" height="1"/><rect x="3" y="219" width="1" height="1"/><rect x="5" y="219" width="1" height="1"/><rect x="1884" y="219" width="1" height="1"/><rect x="1886" y="219" width="1" height="1"/><rect x="3" y="242" width="1" height="1"/><rect x="5" y="242" width="1" height="1"/><rect x="1884" y="242" width="1" height="1"/><rect x="1886" y="242" width="1" height="1"/><rect x="3" y="266" width="1" height="1"/><rect x="5" y="266" width="1" height="1"/><rect x="1884" y="266" width="1" height="1"/><rect x="1886" y="266" width="1" height="1"/><rect x="3" y="289" width="1" height="1"/><rect x="5" y="289" width="1" height="1"/><rect x="1884" y="289" width="1" height="1"/><rect x="1886" y="289" width="1" height="1"/><rect x="3" y="312" width="1" height="1"/><rect x="5" y="312" width="1" height="1"/><rect x="1884" y="312" width="1" height="1"/><rect x="1886" y="312" width="1" height="1"/><rect x="3" y="335" width="1" height="1"/><rect x="5" y="335" width="1" height="1"/><rect x="1884" y="335" width="1" height="1"/><rect x="1886" y="335" width="1" height="1"/><rect x="3" y="359" width="1" height="1"/><rect x="5" y="359" width="1" height="1"/><rect x="1884" y="359" width="1" height="1"/><rect x="1886" y="359" width="1" height="1"/><rect x="3" y="382" width="1" height="1"/><rect x="5" y="382" width="1" height="1"/><rect x="1884" y="382" width="1" height="1"/><rect x="1886" y="382" width="1" height="1"/><rect x="3" y="405" width="1" height="1"/><rect x="5" y="405" width="1" height="1"/><rect x="1884" y="405" width="1" height="1"/><rect x="1886" y="405" width="1" height="1"/><rect x="3" y="429" width="1" height="1"/><rect x="5" y="429" width="1" height="1"/><rect x="1884" y="429" width="1" height="1"/><rect x="1886" y="429" width="1" height="1"/><rect x="3" y="452" width="1" height="1"/><rect x="5" y="452" width="1" height="1"/><rect x="1884" y="452" width="1" height="1"/><rect x="1886" y="452" width="1" height="1"/><rect x="3" y="475" width="1" height="1"/><rect x="5" y="475" width="1" height="1"/><rect x="1884" y="475" width="1" height="1"/><rect x="1886" y="475" width="1" height="1"/><rect x="3" y="499" width="1" height="1"/><rect x="5" y="499" width="1" height="1"/><rect x="1884" y="499" width="1" height="1"/><rect x="1886" y="499" width="1" height="1"/><rect x="3" y="522" width="1" height="1"/><rect x="5" y="522" width="1" height="1"/><rect x="1884" y="522" width="1" height="1"/><rect x="1886" y="522" width="1" height="1"/><rect x="3" y="545" width="1" height="1"/><rect x="5" y="545" width="1" height="1"/><rect x="1884" y="545" width="1" height="1"/><rect x="1886" y="545" width="1" height="1"/><rect x="3" y="568" width="1" height="1"/><rect x="5" y="568" width="1" height="1"/><rect x="1884" y="568" width="1" height="1"/><rect x="1886" y="568" width="1" height="1"/><rect x="3" y="592" width="1" height="1"/><rect x="5" y="592" width="1" height="1"/><rect x="1884" y="592" width="1" height="1"/><rect x="1886" y="592" width="1" height="1"/><rect x="3" y="615" width="1" height="1"/><rect x="5" y="615" width="1" height="1"/><rect x="1884" y="615" width="1" height="1"/><rect x="1886" y="615" width="1" height="1"/><rect x="3" y="638" width="1" height="1"/><rect x="5" y="638" width="1" height="1"/><rect x="1884" y="638" width="1" height="1"/><rect x="1886" y="638" width="1" height="1"/><rect x="3" y="662" width="1" height="1"/><rect x="5" y="662" width="1" height="1"/><rect x="1884" y="662" width="1" height="1"/><rect x="1886" y="662" width="1" height="1"/><rect x="3" y="685" width="1" height="1"/><rect x="5" y="685" width="1" height="1"/><rect x="1884" y="685" width="1" height="1"/><rect x="1886" y="685" width="1" height="1"/><rect x="3" y="708" width="1" height="1"/><rect x="5" y="708" width="1" height="1"/><rect x="1884" y="708" width="1" height="1"/><rect x="1886" y="708" width="1" height="1"/><rect x="3" y="732" width="1" height="1"/><rect x="5" y="732" width="1" height="1"/><rect x="1884" y="732" width="1" height="1"/><rect x="1886" y="732" width="1" height="1"/><rect x="3" y="755" width="1" height="1"/><rect x="5" y="755" width="1" height="1"/><rect x="1884" y="755" width="1" height="1"/><rect x="1886" y="755" width="1" height="1"/><rect x="3" y="778" width="1" height="1"/><rect x="5" y="778" width="1" height="1"/><rect x="1884" y="778" width="1" height="1"/><rect x="1886" y="778" width="1" height="1"/><rect x="3" y="801" width="1" height="1"/><rect x="5" y="801" width="1" height="1"/><rect x="1884" y="801" width="1" height="1"/><rect x="1886" y="801" width="1" height="1"/><rect x="3" y="825" width="1" height="1"/><rect x="5" y="825" width="1" height="1"/><rect x="1884" y="825" width="1" height="1"/><rect x="1886" y="825" width="1" height="1"/><rect x="3" y="848" width="1" height="1"/><rect x="5" y="848" width="1" height="1"/><rect x="1884" y="848" width="1" height="1"/><rect x="1886" y="848" width="1" height="1"/><rect x="3" y="871" width="1" height="1"/><rect x="5" y="871" width="1" height="1"/><rect x="1884" y="871" width="1" height="1"/><rect x="1886" y="871" width="1" height="1"/><rect x="3" y="895" width="1" height="1"/><rect x="5" y="895" width="1" height="1"/><rect x="1884" y="895" width="1" height="1"/><rect x="1886" y="895" width="1" height="1"/><rect x="3" y="918" width="1" height="1"/><rect x="5" y="918" width="1" height="1"/><rect x="1884" y="918" width="1" height="1"/><rect x="1886" y="918" width="1" height="1"/><rect x="3" y="941" width="1" height="1"/><rect x="5" y="941" width="1" height="1"/><rect x="1884" y="941" width="1" height="1"/><rect x="1886" y="941" width="1" height="1"/><rect x="40" y="496" width="1" height="1"/><rect x="40" y="502" width="1" height="1"/><rect x="40" y="498" width="1" height="3"/><rect x="78" y="496" width="1" height="1"/><rect x="78" y="502" width="1" height="1"/><rect x="78" y="498" width="1" height="3"/><rect x="116" y="496" width="1" height="1"/><rect x="116" y="502" width="1" height="1"/><rect x="116" y="498" width="1" height="3"/><rect x="153" y="496" width="1" height="1"/><rect x="153" y="502" width="1" height="1"/><rect x="153" y="498" width="1" height="3"/><rect x="191" y="493" width="1" height="1"/><rect x="191" y="505" width="1" height="1"/><rect x="191" y="495" width="1.2" height="9"/><rect x="229" y="496" width="1" height="1"/><rect x="229" y="502" width="1" height="1"/><rect x="229" y="498" width="1" height="3"/><rect x="266" y="496" width="1" height="1"/><rect x="266" y="502" width="1" height="1"/><rect x="266" y="498" width="1" height="3"/><rect x="304" y="496" width="1" height="1"/><rect x="304" y="502" width="1" height="1"/><rect x="304" y="498" width="1" height="3"/><rect x="342" y="496" width="1" height="1"/><rect x="342" y="502" width="1" height="1"/><rect x="342" y="498" width="1" height="3"/><rect x="379" y="493" width="1" height="1"/><rect x="379" y="505" width="1" height="1"/><rect x="379" y="495" width="1.2" height="9"/><rect x="417" y="496" width="1" height="1"/><rect x="417" y="502" width="1" height="1"/><rect x="417" y="498" width="1" height="3"/><rect x="455" y="496" width="1" height="1"/><rect x="455" y="502" width="1" height="1"/><rect x="455" y="498" width="1" height="3"/><rect x="492" y="496" width="1" height="1"/><rect x="492" y="502" width="1" height="1"/><rect x="492" y="498" width="1" height="3"/><rect x="530" y="496" width="1" height="1"/><rect x="530" y="502" width="1" height="1"/><rect x="530" y="498" width="1" height="3"/><rect x="568" y="493" width="1" height="1"/><rect x="568" y="505" width="1" height="1"/><rect x="568" y="495" width="1.2" height="9"/><rect x="605" y="496" width="1" height="1"/><rect x="605" y="502" width="1" height="1"/><rect x="605" y="498" width="1" height="3"/><rect x="643" y="496" width="1" height="1"/><rect x="643" y="502" width="1" height="1"/><rect x="643" y="498" width="1" height="3"/><rect x="681" y="496" width="1" height="1"/><rect x="681" y="502" width="1" height="1"/><rect x="681" y="498" width="1" height="3"/><rect x="718" y="496" width="1" height="1"/><rect x="718" y="502" width="1" height="1"/><rect x="718" y="498" width="1" height="3"/><rect x="756" y="493" width="1" height="1"/><rect x="756" y="505" width="1" height="1"/><rect x="756" y="495" width="1.2" height="9"/><rect x="794" y="496" width="1" height="1"/><rect x="794" y="502" width="1" height="1"/><rect x="794" y="498" width="1" height="3"/><rect x="831" y="496" width="1" height="1"/><rect x="831" y="502" width="1" height="1"/><rect x="831" y="498" width="1" height="3"/><rect x="869" y="496" width="1" height="1"/><rect x="869" y="502" width="1" height="1"/><rect x="869" y="498" width="1" height="3"/><rect x="907" y="496" width="1" height="1"/><rect x="907" y="502" width="1" height="1"/><rect x="907" y="498" width="1" height="3"/><rect x="945" y="493" width="1" height="1"/><rect x="945" y="505" width="1" height="1"/><rect x="945" y="495" width="1.2" height="9"/><rect x="982" y="496" width="1" height="1"/><rect x="982" y="502" width="1" height="1"/><rect x="982" y="498" width="1" height="3"/><rect x="1020" y="496" width="1" height="1"/><rect x="1020" y="502" width="1" height="1"/><rect x="1020" y="498" width="1" height="3"/><rect x="1058" y="496" width="1" height="1"/><rect x="1058" y="502" width="1" height="1"/><rect x="1058" y="498" width="1" height="3"/><rect x="1095" y="496" width="1" height="1"/><rect x="1095" y="502" width="1" height="1"/><rect x="1095" y="498" width="1" height="3"/><rect x="1133" y="493" width="1" height="1"/><rect x="1133" y="505" width="1" height="1"/><rect x="1133" y="495" width="1.2" height="9"/><rect x="1171" y="496" width="1" height="1"/><rect x="1171" y="502" width="1" height="1"/><rect x="1171" y="498" width="1" height="3"/><rect x="1208" y="496" width="1" height="1"/><rect x="1208" y="502" width="1" height="1"/><rect x="1208" y="498" width="1" height="3"/><rect x="1246" y="496" width="1" height="1"/><rect x="1246" y="502" width="1" height="1"/><rect x="1246" y="498" width="1" height="3"/><rect x="1284" y="496" width="1" height="1"/><rect x="1284" y="502" width="1" height="1"/><rect x="1284" y="498" width="1" height="3"/><rect x="1321" y="493" width="1" height="1"/><rect x="1321" y="505" width="1" height="1"/><rect x="1321" y="495" width="1.2" height="9"/><rect x="1359" y="496" width="1" height="1"/><rect x="1359" y="502" width="1" height="1"/><rect x="1359" y="498" width="1" height="3"/><rect x="1397" y="496" width="1" height="1"/><rect x="1397" y="502" width="1" height="1"/><rect x="1397" y="498" width="1" height="3"/><rect x="1434" y="496" width="1" height="1"/><rect x="1434" y="502" width="1" height="1"/><rect x="1434" y="498" width="1" height="3"/><rect x="1472" y="496" width="1" height="1"/><rect x="1472" y="502" width="1" height="1"/><rect x="1472" y="498" width="1" height="3"/><rect x="1510" y="493" width="1" height="1"/><rect x="1510" y="505" width="1" height="1"/><rect x="1510" y="495" width="1.2" height="9"/><rect x="1547" y="496" width="1" height="1"/><rect x="1547" y="502" width="1" height="1"/><rect x="1547" y="498" width="1" height="3"/><rect x="1585" y="496" width="1" height="1"/><rect x="1585" y="502" width="1" height="1"/><rect x="1585" y="498" width="1" height="3"/><rect x="1623" y="496" width="1" height="1"/><rect x="1623" y="502" width="1" height="1"/><rect x="1623" y="498" width="1" height="3"/><rect x="1660" y="496" width="1" height="1"/><rect x="1660" y="502" width="1" height="1"/><rect x="1660" y="498" width="1" height="3"/><rect x="1698" y="493" width="1" height="1"/><rect x="1698" y="505" width="1" height="1"/><rect x="1698" y="495" width="1.2" height="9"/><rect x="1736" y="496" width="1" height="1"/><rect x="1736" y="502" width="1" height="1"/><rect x="1736" y="498" width="1" height="3"/><rect x="1773" y="496" width="1" height="1"/><rect x="1773" y="502" width="1" height="1"/><rect x="1773" y="498" width="1" height="3"/><rect x="942" y="56" width="1" height="1"/><rect x="948" y="56" width="1" height="1"/><rect x="944" y="56" width="3" height="1"/><rect x="942" y="79" width="1" height="1"/><rect x="948" y="79" width="1" height="1"/><rect x="944" y="79" width="3" height="1"/><rect x="942" y="102" width="1" height="1"/><rect x="948" y="102" width="1" height="1"/><rect x="944" y="102" width="3" height="1"/><rect x="942" y="126" width="1" height="1"/><rect x="948" y="126" width="1" height="1"/><rect x="944" y="126" width="3" height="1"/><rect x="939" y="149" width="1" height="1"/><rect x="951" y="149" width="1" height="1"/><rect x="941" y="149" width="9" height="1.2"/><rect x="942" y="172" width="1" height="1"/><rect x="948" y="172" width="1" height="1"/><rect x="944" y="172" width="3" height="1"/><rect x="942" y="196" width="1" height="1"/><rect x="948" y="196" width="1" height="1"/><rect x="944" y="196" width="3" height="1"/><rect x="942" y="219" width="1" height="1"/><rect x="948" y="219" width="1" height="1"/><rect x="944" y="219" width="3" height="1"/><rect x="942" y="242" width="1" height="1"/><rect x="948" y="242" width="1" height="1"/><rect x="944" y="242" width="3" height="1"/><rect x="939" y="266" width="1" height="1"/><rect x="951" y="266" width="1" height="1"/><rect x="941" y="266" width="9" height="1.2"/><rect x="942" y="289" width="1" height="1"/><rect x="948" y="289" width="1" height="1"/><rect x="944" y="289" width="3" height="1"/><rect x="942" y="312" width="1" height="1"/><rect x="948" y="312" width="1" height="1"/><rect x="944" y="312" width="3" height="1"/><rect x="942" y="335" width="1" height="1"/><rect x="948" y="335" width="1" height="1"/><rect x="944" y="335" width="3" height="1"/><rect x="942" y="359" width="1" height="1"/><rect x="948" y="359" width="1" height="1"/><rect x="944" y="359" width="3" height="1"/><rect x="939" y="382" width="1" height="1"/><rect x="951" y="382" width="1" height="1"/><rect x="941" y="382" width="9" height="1.2"/><rect x="942" y="405" width="1" height="1"/><rect x="948" y="405" width="1" height="1"/><rect x="944" y="405" width="3" height="1"/><rect x="942" y="429" width="1" height="1"/><rect x="948" y="429" width="1" height="1"/><rect x="944" y="429" width="3" height="1"/><rect x="942" y="452" width="1" height="1"/><rect x="948" y="452" width="1" height="1"/><rect x="944" y="452" width="3" height="1"/><rect x="942" y="475" width="1" height="1"/><rect x="948" y="475" width="1" height="1"/><rect x="944" y="475" width="3" height="1"/><rect x="939" y="499" width="1" height="1"/><rect x="951" y="499" width="1" height="1"/><rect x="941" y="499" width="9" height="1.2"/><rect x="942" y="522" width="1" height="1"/><rect x="948" y="522" width="1" height="1"/><rect x="944" y="522" width="3" height="1"/><rect x="942" y="545" width="1" height="1"/><rect x="948" y="545" width="1" height="1"/><rect x="944" y="545" width="3" height="1"/><rect x="942" y="568" width="1" height="1"/><rect x="948" y="568" width="1" height="1"/><rect x="944" y="568" width="3" height="1"/><rect x="942" y="592" width="1" height="1"/><rect x="948" y="592" width="1" height="1"/><rect x="944" y="592" width="3" height="1"/><rect x="939" y="615" width="1" height="1"/><rect x="951" y="615" width="1" height="1"/><rect x="941" y="615" width="9" height="1.2"/><rect x="942" y="638" width="1" height="1"/><rect x="948" y="638" width="1" height="1"/><rect x="944" y="638" width="3" height="1"/><rect x="942" y="662" width="1" height="1"/><rect x="948" y="662" width="1" height="1"/><rect x="944" y="662" width="3" height="1"/><rect x="942" y="685" width="1" height="1"/><rect x="948" y="685" width="1" height="1"/><rect x="944" y="685" width="3" height="1"/><rect x="942" y="708" width="1" height="1"/><rect x="948" y="708" width="1" height="1"/><rect x="944" y="708" width="3" height="1"/><rect x="939" y="732" width="1" height="1"/><rect x="951" y="732" width="1" height="1"/><rect x="941" y="732" width="9" height="1.2"/><rect x="942" y="755" width="1" height="1"/><rect x="948" y="755" width="1" height="1"/><rect x="944" y="755" width="3" height="1"/><rect x="942" y="778" width="1" height="1"/><rect x="948" y="778" width="1" height="1"/><rect x="944" y="778" width="3" height="1"/><rect x="942" y="801" width="1" height="1"/><rect x="948" y="801" width="1" height="1"/><rect x="944" y="801" width="3" height="1"/><rect x="942" y="825" width="1" height="1"/><rect x="948" y="825" width="1" height="1"/><rect x="944" y="825" width="3" height="1"/><rect x="939" y="848" width="1" height="1"/><rect x="951" y="848" width="1" height="1"/><rect x="941" y="848" width="9" height="1.2"/><rect x="942" y="871" width="1" height="1"/><rect x="948" y="871" width="1" height="1"/><rect x="944" y="871" width="3" height="1"/><rect x="942" y="895" width="1" height="1"/><rect x="948" y="895" width="1" height="1"/><rect x="944" y="895" width="3" height="1"/><rect x="942" y="918" width="1" height="1"/><rect x="948" y="918" width="1" height="1"/><rect x="944" y="918" width="3" height="1"/><rect x="942" y="941" width="1" height="1"/><rect x="948" y="941" width="1" height="1"/><rect x="944" y="941" width="3" height="1"/></g><rect x="945" y="33" width="1.3" height="932" fill="#8f98b8"/><rect x="3" y="499" width="1793" height="1.3" fill="#8f98b8"/>
<!--WAVES-->
<rect x="1823.8" y="140.0" width="60.2" height="20" fill="#000"/>
<rect x="1809.9" y="256.5" width="74.1" height="20" fill="#000"/>
<rect x="1804.0" y="373.0" width="80.0" height="20" fill="#000"/>
<rect x="1800.0" y="489.5" width="84.0" height="20" fill="#000"/>
<rect x="1800.7" y="606.0" width="83.3" height="20" fill="#000"/>
<rect x="1816.0" y="722.5" width="68.0" height="20" fill="#000"/>
<rect x="1816.5" y="839.0" width="67.5" height="20" fill="#000"/>
<g><g fill="#628f00"><rect x="4.5" y="256.6" width="2.5" height="110.4"/><rect x="9.9" y="291.3" width="2.5" height="75.7"/><rect x="15.5" y="234.3" width="2.5" height="132.7"/><rect x="20.8" y="243.2" width="2.5" height="123.8"/><rect x="26.2" y="244.4" width="2.5" height="122.5"/><rect x="32.0" y="252.3" width="2.5" height="114.7"/><rect x="37.1" y="239.4" width="2.5" height="127.5"/><rect x="42.9" y="247.0" width="2.5" height="119.9"/><rect x="48.2" y="241.7" width="2.5" height="125.2"/><rect x="53.4" y="249.0" width="2.5" height="117.9"/><rect x="59.2" y="248.2" width="2.5" height="118.6"/><rect x="64.7" y="252.1" width="2.5" height="114.6"/><rect x="70.2" y="240.9" width="2.5" height="125.9"/><rect x="75.6" y="256.2" width="2.5" height="110.6"/><rect x="80.7" y="256.1" width="2.5" height="110.6"/><rect x="86.1" y="235.8" width="2.5" height="130.9"/><rect x="91.9" y="258.0" width="2.5" height="108.7"/><rect x="97.7" y="251.4" width="2.5" height="115.3"/><rect x="103.4" y="235.3" width="2.5" height="131.4"/><rect x="108.6" y="251.2" width="2.5" height="115.4"/><rect x="114.4" y="252.1" width="2.5" height="114.5"/><rect x="119.9" y="236.3" width="2.5" height="130.3"/><rect x="125.4" y="236.4" width="2.5" height="130.2"/><rect x="131.1" y="254.3" width="2.5" height="112.3"/><rect x="136.7" y="242.7" width="2.5" height="123.9"/><rect x="142.1" y="235.0" width="2.5" height="131.6"/><rect x="147.3" y="247.7" width="2.5" height="118.8"/><rect x="152.9" y="279.3" width="2.5" height="87.2"/><rect x="158.4" y="242.8" width="2.5" height="123.6"/><rect x="163.9" y="236.0" width="2.5" height="130.4"/><rect x="169.4" y="243.5" width="2.5" height="122.9"/><rect x="175.2" y="252.7" width="2.5" height="113.7"/><rect x="181.0" y="252.0" width="2.5" height="114.4"/><rect x="186.2" y="245.1" width="2.5" height="121.2"/><rect x="191.5" y="236.0" width="2.5" height="130.4"/><rect x="197.0" y="263.1" width="2.5" height="103.3"/><rect x="202.3" y="243.9" width="2.5" height="122.4"/><rect x="207.5" y="271.0" width="2.5" height="95.3"/><rect x="212.6" y="242.7" width="2.5" height="123.6"/><rect x="217.8" y="253.7" width="2.5" height="112.6"/><rect x="223.1" y="254.4" width="2.5" height="111.9"/><rect x="228.3" y="242.7" width="2.5" height="123.5"/><rect x="233.6" y="234.8" width="2.5" height="131.4"/><rect x="238.9" y="252.0" width="2.5" height="114.2"/><rect x="244.2" y="246.9" width="2.5" height="119.3"/><rect x="249.3" y="240.8" width="2.5" height="125.4"/><rect x="254.4" y="280.4" width="2.5" height="85.7"/><rect x="260.1" y="242.8" width="2.5" height="123.4"/><rect x="265.9" y="232.9" width="2.5" height="133.3"/><rect x="271.6" y="228.2" width="2.5" height="137.9"/><rect x="277.4" y="235.4" width="2.5" height="130.7"/><rect x="282.9" y="234.3" width="2.5" height="131.7"/><rect x="288.2" y="225.2" width="2.5" height="140.9"/><rect x="293.8" y="283.9" width="2.5" height="82.2"/><rect x="299.4" y="233.2" width="2.5" height="132.8"/><rect x="304.7" y="225.6" width="2.5" height="140.4"/><rect x="310.0" y="246.1" width="2.5" height="119.9"/><rect x="315.5" y="231.8" width="2.5" height="134.1"/><rect x="320.8" y="241.9" width="2.5" height="124.0"/><rect x="326.0" y="231.2" width="2.5" height="134.8"/><rect x="331.4" y="250.0" width="2.5" height="115.9"/><rect x="336.9" y="240.5" width="2.5" height="125.4"/><rect x="342.5" y="249.6" width="2.5" height="116.3"/><rect x="347.7" y="241.0" width="2.5" height="124.9"/><rect x="353.1" y="246.2" width="2.5" height="119.7"/><rect x="358.6" y="245.4" width="2.5" height="120.4"/><rect x="364.3" y="239.2" width="2.5" height="126.6"/><rect x="369.5" y="233.1" width="2.5" height="132.7"/><rect x="375.2" y="250.7" width="2.5" height="115.1"/><rect x="381.1" y="227.0" width="2.5" height="138.8"/><rect x="386.9" y="233.1" width="2.5" height="132.7"/><rect x="392.6" y="248.0" width="2.5" height="117.8"/><rect x="398.0" y="234.6" width="2.5" height="131.1"/><rect x="403.8" y="245.2" width="2.5" height="120.5"/><rect x="409.2" y="233.0" width="2.5" height="132.7"/><rect x="414.5" y="231.1" width="2.5" height="134.6"/><rect x="420.2" y="225.2" width="2.5" height="140.5"/><rect x="425.4" y="246.3" width="2.5" height="119.4"/><rect x="431.2" y="224.2" width="2.5" height="141.4"/><rect x="436.3" y="241.9" width="2.5" height="123.8"/><rect x="441.5" y="246.8" width="2.5" height="118.8"/><rect x="447.4" y="242.5" width="2.5" height="123.1"/><rect x="452.5" y="286.4" width="2.5" height="79.3"/><rect x="458.4" y="245.7" width="2.5" height="119.9"/><rect x="464.0" y="252.5" width="2.5" height="113.1"/><rect x="469.4" y="227.2" width="2.5" height="138.4"/><rect x="475.0" y="244.4" width="2.5" height="121.1"/><rect x="480.1" y="244.4" width="2.5" height="121.2"/><rect x="485.8" y="247.1" width="2.5" height="118.5"/><rect x="491.0" y="245.5" width="2.5" height="120.0"/><rect x="496.8" y="244.7" width="2.5" height="120.8"/><rect x="502.7" y="275.8" width="2.5" height="89.7"/><rect x="508.6" y="229.2" width="2.5" height="136.3"/><rect x="513.8" y="238.4" width="2.5" height="127.0"/><rect x="519.0" y="281.3" width="2.5" height="84.2"/><rect x="524.2" y="241.7" width="2.5" height="123.7"/><rect x="530.1" y="242.0" width="2.5" height="123.4"/><rect x="535.7" y="257.8" width="2.5" height="107.6"/><rect x="540.9" y="241.4" width="2.5" height="124.0"/><rect x="546.4" y="256.3" width="2.5" height="109.1"/><rect x="552.2" y="258.4" width="2.5" height="106.9"/><rect x="557.5" y="238.2" width="2.5" height="127.1"/><rect x="562.8" y="237.7" width="2.5" height="127.7"/><rect x="568.4" y="253.7" width="2.5" height="111.6"/><rect x="574.0" y="256.3" width="2.5" height="109.1"/><rect x="579.4" y="283.6" width="2.5" height="81.7"/><rect x="584.9" y="282.5" width="2.5" height="82.8"/><rect x="590.6" y="259.3" width="2.5" height="106.0"/><rect x="596.4" y="287.4" width="2.5" height="77.8"/><rect x="602.3" y="259.0" width="2.5" height="106.3"/><rect x="607.9" y="262.0" width="2.5" height="103.2"/><rect x="613.5" y="245.1" width="2.5" height="120.1"/><rect x="619.0" y="248.8" width="2.5" height="116.4"/><rect x="624.9" y="252.0" width="2.5" height="113.2"/><rect x="630.7" y="263.3" width="2.5" height="101.9"/><rect x="636.3" y="264.5" width="2.5" height="100.6"/><rect x="641.5" y="249.0" width="2.5" height="116.1"/><rect x="647.1" y="247.3" width="2.5" height="117.8"/><rect x="652.2" y="269.3" width="2.5" height="95.8"/><rect x="658.0" y="262.1" width="2.5" height="103.0"/><rect x="663.1" y="251.5" width="2.5" height="113.6"/><rect x="668.5" y="252.6" width="2.5" height="112.5"/><rect x="674.0" y="253.8" width="2.5" height="111.3"/><rect x="679.8" y="261.2" width="2.5" height="103.9"/><rect x="685.5" y="245.4" width="2.5" height="119.6"/><rect x="691.0" y="263.7" width="2.5" height="101.3"/><rect x="696.4" y="268.0" width="2.5" height="97.0"/><rect x="701.8" y="248.8" width="2.5" height="116.0"/><rect x="707.0" y="265.7" width="2.5" height="98.6"/><rect x="712.3" y="295.7" width="2.5" height="68.1"/><rect x="718.0" y="260.3" width="2.5" height="102.9"/><rect x="723.7" y="245.6" width="2.5" height="113.9"/><rect x="729.0" y="222.0" width="2.5" height="132.5"/><rect x="734.4" y="225.6" width="2.5" height="123.9"/><rect x="739.5" y="210.8" width="2.5" height="136.0"/><rect x="744.7" y="230.1" width="2.5" height="116.0"/><rect x="750.0" y="215.5" width="2.5" height="130.1"/><rect x="755.6" y="225.7" width="2.5" height="119.2"/><rect x="760.9" y="221.9" width="2.5" height="122.5"/><rect x="766.1" y="225.0" width="2.5" height="118.8"/><rect x="772.0" y="209.5" width="2.5" height="133.6"/><rect x="777.4" y="210.6" width="2.5" height="131.9"/><rect x="783.3" y="213.9" width="2.5" height="127.9"/><rect x="788.9" y="210.9" width="2.5" height="130.3"/><rect x="794.6" y="222.8" width="2.5" height="117.8"/><rect x="799.8" y="208.1" width="2.5" height="131.9"/><rect x="805.7" y="226.8" width="2.5" height="113.1"/><rect x="811.2" y="203.4" width="2.5" height="136.4"/><rect x="816.6" y="256.4" width="2.5" height="83.3"/><rect x="821.9" y="203.7" width="2.5" height="136.0"/><rect x="827.6" y="216.6" width="2.5" height="123.0"/><rect x="833.4" y="221.4" width="2.5" height="118.1"/><rect x="838.7" y="224.4" width="2.5" height="115.0"/><rect x="844.3" y="219.5" width="2.5" height="119.8"/><rect x="850.0" y="206.6" width="2.5" height="132.6"/><rect x="855.3" y="259.8" width="2.5" height="79.4"/><rect x="860.5" y="212.7" width="2.5" height="126.3"/><rect x="865.8" y="214.9" width="2.5" height="124.1"/><rect x="871.3" y="271.6" width="2.5" height="80.3"/><rect x="876.8" y="247.8" width="2.5" height="108.2"/><rect x="882.4" y="278.1" width="2.5" height="77.9"/><rect x="888.2" y="275.5" width="2.5" height="80.5"/><rect x="893.5" y="253.4" width="2.5" height="102.6"/><rect x="898.8" y="240.6" width="2.5" height="115.4"/><rect x="904.5" y="275.4" width="2.5" height="80.6"/><rect x="910.1" y="244.9" width="2.5" height="111.1"/><rect x="915.4" y="252.6" width="2.5" height="103.4"/><rect x="921.0" y="244.1" width="2.5" height="111.9"/><rect x="926.6" y="261.9" width="2.5" height="94.1"/><rect x="932.1" y="283.2" width="2.5" height="72.8"/><rect x="937.3" y="262.8" width="2.5" height="93.2"/><rect x="942.5" y="275.5" width="2.5" height="80.5"/><rect x="948.3" y="261.2" width="2.5" height="94.8"/><rect x="954.0" y="291.9" width="2.5" height="64.1"/><rect x="959.5" y="283.7" width="2.5" height="72.3"/><rect x="965.1" y="254.3" width="2.5" height="101.7"/><rect x="970.8" y="255.5" width="2.5" height="100.5"/><rect x="976.2" y="249.2" width="2.5" height="106.8"/><rect x="981.9" y="262.2" width="2.5" height="93.8"/><rect x="987.7" y="242.0" width="2.5" height="114.0"/><rect x="993.5" y="249.1" width="2.5" height="106.9"/><rect x="999.0" y="273.5" width="2.5" height="82.5"/><rect x="1004.5" y="249.5" width="2.5" height="106.5"/><rect x="1010.0" y="249.4" width="2.5" height="103.2"/><rect x="1015.4" y="228.7" width="2.5" height="117.9"/><rect x="1020.8" y="206.5" width="2.5" height="133.9"/><rect x="1026.0" y="203.6" width="2.5" height="134.4"/><rect x="1031.8" y="212.0" width="2.5" height="126.0"/><rect x="1037.7" y="226.5" width="2.5" height="111.5"/><rect x="1042.9" y="208.0" width="2.5" height="130.0"/><rect x="1048.5" y="211.3" width="2.5" height="126.7"/><rect x="1053.8" y="208.9" width="2.5" height="129.1"/><rect x="1059.6" y="223.7" width="2.5" height="114.3"/><rect x="1065.0" y="204.9" width="2.5" height="133.1"/><rect x="1070.6" y="203.6" width="2.5" height="134.4"/><rect x="1076.1" y="202.7" width="2.5" height="135.3"/><rect x="1081.3" y="219.7" width="2.5" height="118.3"/><rect x="1087.2" y="254.3" width="2.5" height="84.2"/><rect x="1092.6" y="257.7" width="2.5" height="96.1"/><rect x="1097.8" y="242.4" width="2.5" height="112.6"/><rect x="1103.0" y="243.8" width="2.5" height="111.1"/><rect x="1108.2" y="252.6" width="2.5" height="102.3"/><rect x="1113.5" y="240.8" width="2.5" height="114.0"/><rect x="1119.0" y="243.5" width="2.5" height="111.3"/><rect x="1124.2" y="237.8" width="2.5" height="116.9"/><rect x="1129.4" y="257.8" width="2.5" height="96.8"/><rect x="1135.0" y="247.9" width="2.5" height="106.7"/><rect x="1140.5" y="257.3" width="2.5" height="97.3"/><rect x="1146.2" y="240.6" width="2.5" height="113.9"/><rect x="1152.1" y="252.1" width="2.5" height="102.4"/><rect x="1157.9" y="240.0" width="2.5" height="114.4"/><rect x="1163.5" y="247.4" width="2.5" height="106.9"/><rect x="1169.2" y="245.0" width="2.5" height="109.3"/><rect x="1174.5" y="238.0" width="2.5" height="116.2"/><rect x="1180.2" y="245.8" width="2.5" height="108.4"/><rect x="1185.4" y="250.2" width="2.5" height="104.0"/><rect x="1190.9" y="255.0" width="2.5" height="99.1"/><rect x="1196.2" y="250.6" width="2.5" height="103.4"/><rect x="1201.7" y="236.3" width="2.5" height="117.7"/><rect x="1207.1" y="223.3" width="2.5" height="123.1"/><rect x="1212.7" y="197.3" width="2.5" height="138.6"/><rect x="1218.4" y="216.6" width="2.5" height="111.4"/><rect x="1224.0" y="198.8" width="2.5" height="129.2"/><rect x="1229.3" y="205.0" width="2.5" height="123.0"/><rect x="1234.5" y="216.1" width="2.5" height="111.9"/><rect x="1240.3" y="214.5" width="2.5" height="113.5"/><rect x="1246.0" y="193.0" width="2.5" height="135.0"/><rect x="1251.9" y="205.8" width="2.5" height="122.2"/><rect x="1257.8" y="208.1" width="2.5" height="119.9"/><rect x="1263.6" y="213.7" width="2.5" height="117.7"/><rect x="1269.5" y="248.6" width="2.5" height="95.0"/><rect x="1275.0" y="232.3" width="2.5" height="116.7"/><rect x="1280.1" y="236.1" width="2.5" height="112.9"/><rect x="1285.7" y="242.5" width="2.5" height="106.5"/><rect x="1290.9" y="236.9" width="2.5" height="112.1"/><rect x="1296.3" y="250.0" width="2.5" height="99.0"/><rect x="1302.1" y="234.2" width="2.5" height="114.8"/><rect x="1307.5" y="237.7" width="2.5" height="111.3"/><rect x="1313.1" y="249.6" width="2.5" height="99.4"/><rect x="1319.0" y="244.0" width="2.5" height="105.0"/><rect x="1324.4" y="252.7" width="2.5" height="96.3"/><rect x="1329.6" y="238.0" width="2.5" height="111.0"/><rect x="1335.2" y="235.4" width="2.5" height="113.6"/><rect x="1340.5" y="244.1" width="2.5" height="104.9"/><rect x="1346.1" y="240.1" width="2.5" height="108.9"/><rect x="1351.9" y="215.0" width="2.5" height="128.8"/><rect x="1357.1" y="201.9" width="2.5" height="132.3"/><rect x="1362.9" y="213.5" width="2.5" height="115.5"/><rect x="1368.6" y="198.1" width="2.5" height="130.9"/><rect x="1374.3" y="253.7" width="2.5" height="75.3"/><rect x="1379.5" y="205.6" width="2.5" height="123.4"/><rect x="1385.2" y="219.8" width="2.5" height="109.2"/><rect x="1390.5" y="200.8" width="2.5" height="128.2"/><rect x="1396.4" y="195.9" width="2.5" height="133.1"/><rect x="1401.8" y="229.8" width="2.5" height="112.5"/><rect x="1407.7" y="240.9" width="2.5" height="109.1"/><rect x="1413.3" y="248.3" width="2.5" height="101.7"/><rect x="1419.1" y="240.5" width="2.5" height="109.5"/><rect x="1424.7" y="235.6" width="2.5" height="114.4"/><rect x="1430.0" y="243.2" width="2.5" height="106.8"/><rect x="1435.9" y="252.0" width="2.5" height="98.0"/><rect x="1441.4" y="261.9" width="2.5" height="88.1"/><rect x="1446.5" y="233.9" width="2.5" height="116.1"/><rect x="1451.8" y="234.1" width="2.5" height="115.9"/><rect x="1457.3" y="234.0" width="2.5" height="116.0"/><rect x="1463.1" y="242.1" width="2.5" height="107.9"/><rect x="1468.4" y="230.7" width="2.5" height="119.3"/><rect x="1474.1" y="243.5" width="2.5" height="103.8"/><rect x="1479.9" y="247.3" width="2.5" height="86.0"/><rect x="1485.4" y="205.5" width="2.5" height="115.5"/><rect x="1491.0" y="196.7" width="2.5" height="124.3"/><rect x="1496.1" y="193.7" width="2.5" height="127.3"/><rect x="1501.6" y="209.1" width="2.5" height="111.9"/><rect x="1507.2" y="198.9" width="2.5" height="122.1"/><rect x="1512.6" y="234.2" width="2.5" height="86.8"/><rect x="1518.3" y="223.6" width="2.5" height="97.4"/><rect x="1523.4" y="214.4" width="2.5" height="113.9"/><rect x="1529.0" y="232.9" width="2.5" height="114.1"/><rect x="1534.6" y="243.9" width="2.5" height="103.1"/><rect x="1539.8" y="226.9" width="2.5" height="120.1"/><rect x="1545.4" y="277.7" width="2.5" height="69.3"/><rect x="1550.8" y="225.1" width="2.5" height="121.9"/><rect x="1556.0" y="225.2" width="2.5" height="121.8"/><rect x="1561.4" y="243.0" width="2.5" height="104.0"/><rect x="1567.2" y="245.9" width="2.5" height="101.1"/><rect x="1572.8" y="246.5" width="2.5" height="100.5"/><rect x="1578.3" y="232.8" width="2.5" height="114.2"/><rect x="1584.1" y="231.2" width="2.5" height="115.8"/><rect x="1590.0" y="239.4" width="2.5" height="107.6"/><rect x="1595.1" y="225.9" width="2.5" height="119.0"/><rect x="1600.2" y="209.9" width="2.5" height="129.8"/><rect x="1605.9" y="195.8" width="2.5" height="138.3"/><rect x="1611.3" y="209.8" width="2.5" height="122.5"/><rect x="1616.4" y="214.7" width="2.5" height="120.6"/><rect x="1622.0" y="212.1" width="2.5" height="127.8"/><rect x="1627.4" y="245.6" width="2.5" height="101.4"/><rect x="1633.1" y="240.4" width="2.5" height="106.6"/><rect x="1638.5" y="235.7" width="2.5" height="111.3"/><rect x="1643.6" y="232.7" width="2.5" height="114.3"/><rect x="1649.0" y="236.0" width="2.5" height="111.0"/><rect x="1654.8" y="242.7" width="2.5" height="104.3"/><rect x="1660.0" y="268.9" width="2.5" height="78.1"/><rect x="1665.1" y="277.2" width="2.5" height="69.8"/><rect x="1670.4" y="227.9" width="2.5" height="119.1"/><rect x="1675.7" y="239.1" width="2.5" height="107.9"/><rect x="1681.2" y="248.7" width="2.5" height="98.3"/><rect x="1686.4" y="206.6" width="2.5" height="128.5"/><rect x="1691.8" y="197.2" width="2.5" height="119.5"/><rect x="1697.5" y="193.9" width="2.5" height="122.1"/><rect x="1703.4" y="178.3" width="2.5" height="137.7"/><rect x="1708.7" y="235.3" width="2.5" height="80.7"/><rect x="1714.3" y="228.9" width="2.5" height="87.1"/><rect x="1720.1" y="202.1" width="2.5" height="113.9"/><rect x="1725.4" y="225.4" width="2.5" height="111.8"/><rect x="1730.9" y="259.5" width="2.5" height="87.5"/><rect x="1736.6" y="229.2" width="2.5" height="117.8"/><rect x="1741.7" y="215.8" width="2.5" height="131.2"/><rect x="1747.4" y="225.2" width="2.5" height="121.8"/><rect x="1752.5" y="208.1" width="2.5" height="138.9"/><rect x="1758.2" y="232.8" width="2.5" height="114.2"/><rect x="1763.3" y="210.1" width="2.5" height="136.9"/><rect x="1768.7" y="223.1" width="2.5" height="123.9"/><rect x="1774.3" y="188.7" width="2.5" height="150.7"/><rect x="1779.8" y="193.4" width="2.5" height="128.1"/><rect x="1785.6" y="183.7" width="2.5" height="137.3"/><rect x="1790.9" y="233.4" width="2.5" height="87.6"/><rect x="1796.6" y="194.7" width="2.5" height="126.3"/><rect x="1802.0" y="197.5" width="2.5" height="123.5"/><rect x="1807.3" y="202.8" width="2.5" height="127.3"/><rect x="1813.0" y="224.4" width="2.5" height="120.6"/><rect x="1818.8" y="231.9" width="2.5" height="113.1"/><rect x="1824.2" y="233.3" width="2.5" height="111.7"/><rect x="1829.9" y="258.8" width="2.5" height="86.2"/><rect x="1835.3" y="228.6" width="2.5" height="116.4"/><rect x="1840.9" y="221.9" width="2.5" height="123.1"/><rect x="1846.6" y="240.4" width="2.5" height="104.6"/><rect x="1852.5" y="219.3" width="2.5" height="125.7"/><rect x="1857.8" y="209.6" width="2.5" height="132.4"/><rect x="1863.5" y="199.2" width="2.5" height="121.5"/><rect x="1868.9" y="200.6" width="2.5" height="118.4"/><rect x="1874.3" y="183.8" width="2.5" height="135.2"/><rect x="1879.8" y="204.6" width="2.5" height="114.4"/><rect x="4.5" y="367.0" width="2.9" height="82.2"/><rect x="9.9" y="367.0" width="2.9" height="97.4"/><rect x="15.5" y="367.0" width="2.9" height="98.0"/><rect x="20.8" y="366.9" width="2.9" height="91.7"/><rect x="26.2" y="366.9" width="2.9" height="86.6"/><rect x="32.0" y="366.9" width="2.9" height="82.9"/><rect x="37.1" y="366.9" width="2.9" height="98.1"/><rect x="42.9" y="366.9" width="2.9" height="81.6"/><rect x="48.2" y="366.8" width="2.9" height="89.6"/><rect x="53.4" y="366.8" width="2.9" height="81.9"/><rect x="59.2" y="366.8" width="2.9" height="98.0"/><rect x="64.7" y="366.8" width="2.9" height="88.6"/><rect x="70.2" y="366.8" width="2.9" height="98.2"/><rect x="75.6" y="366.8" width="2.9" height="81.3"/><rect x="80.7" y="366.7" width="2.9" height="80.5"/><rect x="86.1" y="366.7" width="2.9" height="89.3"/><rect x="91.9" y="366.7" width="2.9" height="90.5"/><rect x="97.7" y="366.7" width="2.9" height="83.2"/><rect x="103.4" y="366.7" width="2.9" height="96.1"/><rect x="108.6" y="366.6" width="2.9" height="98.8"/><rect x="114.4" y="366.6" width="2.9" height="83.6"/><rect x="119.9" y="366.6" width="2.9" height="92.8"/><rect x="125.4" y="366.6" width="2.9" height="95.5"/><rect x="131.1" y="366.6" width="2.9" height="97.5"/><rect x="136.7" y="366.5" width="2.9" height="79.4"/><rect x="142.1" y="366.5" width="2.9" height="83.8"/><rect x="147.3" y="366.5" width="2.9" height="90.0"/><rect x="152.9" y="366.5" width="2.9" height="78.3"/><rect x="158.4" y="366.5" width="2.9" height="93.2"/><rect x="163.9" y="366.5" width="2.9" height="86.2"/><rect x="169.4" y="366.4" width="2.9" height="90.7"/><rect x="175.2" y="366.4" width="2.9" height="85.4"/><rect x="181.0" y="366.4" width="2.9" height="89.2"/><rect x="186.2" y="366.4" width="2.9" height="95.1"/><rect x="191.5" y="366.4" width="2.9" height="86.5"/><rect x="197.0" y="366.3" width="2.9" height="94.0"/><rect x="202.3" y="366.3" width="2.9" height="90.7"/><rect x="207.5" y="366.3" width="2.9" height="76.4"/><rect x="212.6" y="366.3" width="2.9" height="85.0"/><rect x="217.8" y="366.3" width="2.9" height="80.2"/><rect x="223.1" y="366.3" width="2.9" height="74.4"/><rect x="228.3" y="366.2" width="2.9" height="89.2"/><rect x="233.6" y="366.2" width="2.9" height="80.9"/><rect x="238.9" y="366.2" width="2.9" height="89.1"/><rect x="244.2" y="366.2" width="2.9" height="90.6"/><rect x="249.3" y="366.2" width="2.9" height="76.2"/><rect x="254.4" y="366.2" width="2.9" height="82.8"/><rect x="260.1" y="366.1" width="2.9" height="89.6"/><rect x="265.9" y="366.1" width="2.9" height="74.1"/><rect x="271.6" y="366.1" width="2.9" height="83.6"/><rect x="277.4" y="366.1" width="2.9" height="83.0"/><rect x="282.9" y="366.1" width="2.9" height="83.6"/><rect x="288.2" y="366.0" width="2.9" height="77.0"/><rect x="293.8" y="366.0" width="2.9" height="83.0"/><rect x="299.4" y="366.0" width="2.9" height="78.6"/><rect x="304.7" y="366.0" width="2.9" height="77.3"/><rect x="310.0" y="366.0" width="2.9" height="71.5"/><rect x="315.5" y="366.0" width="2.9" height="84.2"/><rect x="320.8" y="365.9" width="2.9" height="82.9"/><rect x="326.0" y="365.9" width="2.9" height="73.2"/><rect x="331.4" y="365.9" width="2.9" height="82.2"/><rect x="336.9" y="365.9" width="2.9" height="82.7"/><rect x="342.5" y="365.9" width="2.9" height="75.0"/><rect x="347.7" y="365.9" width="2.9" height="79.6"/><rect x="353.1" y="365.9" width="2.9" height="82.0"/><rect x="358.6" y="365.9" width="2.9" height="72.3"/><rect x="364.3" y="365.8" width="2.9" height="72.5"/><rect x="369.5" y="365.8" width="2.9" height="69.6"/><rect x="375.2" y="365.8" width="2.9" height="77.4"/><rect x="381.1" y="365.8" width="2.9" height="69.5"/><rect x="386.9" y="365.8" width="2.9" height="72.6"/><rect x="392.6" y="365.8" width="2.9" height="75.2"/><rect x="398.0" y="365.8" width="2.9" height="69.4"/><rect x="403.8" y="365.7" width="2.9" height="79.7"/><rect x="409.2" y="365.7" width="2.9" height="67.6"/><rect x="414.5" y="365.7" width="2.9" height="67.0"/><rect x="420.2" y="365.7" width="2.9" height="66.4"/><rect x="425.4" y="365.7" width="2.9" height="65.4"/><rect x="431.2" y="365.7" width="2.9" height="68.0"/><rect x="436.3" y="365.7" width="2.9" height="67.8"/><rect x="441.5" y="365.6" width="2.9" height="75.1"/><rect x="447.4" y="365.6" width="2.9" height="62.5"/><rect x="452.5" y="365.6" width="2.9" height="65.7"/><rect x="458.4" y="365.6" width="2.9" height="66.3"/><rect x="464.0" y="365.6" width="2.9" height="68.5"/><rect x="469.4" y="365.6" width="2.9" height="73.1"/><rect x="475.0" y="365.6" width="2.9" height="72.5"/><rect x="480.1" y="365.5" width="2.9" height="73.7"/><rect x="485.8" y="365.5" width="2.9" height="69.6"/><rect x="491.0" y="365.5" width="2.9" height="65.8"/><rect x="496.8" y="365.5" width="2.9" height="75.1"/><rect x="502.7" y="365.5" width="2.9" height="72.7"/><rect x="508.6" y="365.5" width="2.9" height="73.0"/><rect x="513.8" y="365.5" width="2.9" height="65.4"/><rect x="519.0" y="365.5" width="2.9" height="62.6"/><rect x="524.2" y="365.4" width="2.9" height="61.1"/><rect x="530.1" y="365.4" width="2.9" height="65.9"/><rect x="535.7" y="365.4" width="2.9" height="66.0"/><rect x="540.9" y="365.4" width="2.9" height="60.9"/><rect x="546.4" y="365.4" width="2.9" height="71.5"/><rect x="552.2" y="365.4" width="2.9" height="65.2"/><rect x="557.5" y="365.4" width="2.9" height="62.1"/><rect x="562.8" y="365.3" width="2.9" height="67.6"/><rect x="568.4" y="365.3" width="2.9" height="67.8"/><rect x="574.0" y="365.3" width="2.9" height="70.7"/><rect x="579.4" y="365.3" width="2.9" height="59.7"/><rect x="584.9" y="365.3" width="2.9" height="73.0"/><rect x="590.6" y="365.3" width="2.9" height="66.2"/><rect x="596.4" y="365.3" width="2.9" height="61.2"/><rect x="602.3" y="365.2" width="2.9" height="63.5"/><rect x="607.9" y="365.2" width="2.9" height="60.4"/><rect x="613.5" y="365.2" width="2.9" height="73.2"/><rect x="619.0" y="365.2" width="2.9" height="61.1"/><rect x="624.9" y="365.2" width="2.9" height="58.5"/><rect x="630.7" y="365.2" width="2.9" height="58.7"/><rect x="636.3" y="365.2" width="2.9" height="65.3"/><rect x="641.5" y="365.1" width="2.9" height="64.1"/><rect x="647.1" y="365.1" width="2.9" height="61.9"/><rect x="652.2" y="365.1" width="2.9" height="72.0"/><rect x="658.0" y="365.1" width="2.9" height="59.0"/><rect x="663.1" y="365.1" width="2.9" height="69.1"/><rect x="668.5" y="365.1" width="2.9" height="68.6"/><rect x="674.0" y="365.1" width="2.9" height="61.4"/><rect x="679.8" y="365.1" width="2.9" height="63.1"/><rect x="685.5" y="365.0" width="2.9" height="70.5"/><rect x="691.0" y="365.0" width="2.9" height="59.4"/><rect x="696.4" y="365.0" width="2.9" height="68.4"/><rect x="701.8" y="364.8" width="2.9" height="59.4"/><rect x="707.0" y="364.3" width="2.9" height="71.3"/><rect x="712.3" y="363.8" width="2.9" height="62.3"/><rect x="718.0" y="363.2" width="2.9" height="67.2"/><rect x="723.7" y="359.5" width="2.9" height="66.0"/><rect x="729.0" y="354.5" width="2.9" height="74.7"/><rect x="734.4" y="349.5" width="2.9" height="75.6"/><rect x="739.5" y="346.7" width="2.9" height="84.2"/><rect x="744.7" y="346.1" width="2.9" height="78.1"/><rect x="750.0" y="345.6" width="2.9" height="87.6"/><rect x="755.6" y="344.9" width="2.9" height="88.5"/><rect x="760.9" y="344.3" width="2.9" height="90.4"/><rect x="766.1" y="343.8" width="2.9" height="88.8"/><rect x="772.0" y="343.1" width="2.9" height="79.3"/><rect x="777.4" y="342.5" width="2.9" height="88.1"/><rect x="783.3" y="341.9" width="2.9" height="84.7"/><rect x="788.9" y="341.2" width="2.9" height="85.8"/><rect x="794.6" y="340.6" width="2.9" height="86.4"/><rect x="799.8" y="340.0" width="2.9" height="87.6"/><rect x="805.7" y="339.9" width="2.9" height="88.7"/><rect x="811.2" y="339.8" width="2.9" height="91.5"/><rect x="816.6" y="339.7" width="2.9" height="78.5"/><rect x="821.9" y="339.7" width="2.9" height="82.5"/><rect x="827.6" y="339.6" width="2.9" height="82.7"/><rect x="833.4" y="339.5" width="2.9" height="80.8"/><rect x="838.7" y="339.4" width="2.9" height="92.6"/><rect x="844.3" y="339.3" width="2.9" height="95.2"/><rect x="850.0" y="339.2" width="2.9" height="78.8"/><rect x="855.3" y="339.2" width="2.9" height="93.8"/><rect x="860.5" y="339.1" width="2.9" height="91.8"/><rect x="865.8" y="339.0" width="2.9" height="87.3"/><rect x="871.3" y="351.9" width="2.9" height="76.8"/><rect x="876.8" y="356.0" width="2.9" height="71.2"/><rect x="882.4" y="356.0" width="2.9" height="80.2"/><rect x="888.2" y="356.0" width="2.9" height="70.6"/><rect x="893.5" y="356.0" width="2.9" height="78.5"/><rect x="898.8" y="356.0" width="2.9" height="77.9"/><rect x="904.5" y="356.0" width="2.9" height="73.9"/><rect x="910.1" y="356.0" width="2.9" height="74.9"/><rect x="915.4" y="356.0" width="2.9" height="66.6"/><rect x="921.0" y="356.0" width="2.9" height="74.1"/><rect x="926.6" y="356.0" width="2.9" height="65.6"/><rect x="932.1" y="356.0" width="2.9" height="80.2"/><rect x="937.3" y="356.0" width="2.9" height="76.0"/><rect x="942.5" y="356.0" width="2.9" height="76.8"/><rect x="948.3" y="356.0" width="2.9" height="76.4"/><rect x="954.0" y="356.0" width="2.9" height="78.2"/><rect x="959.5" y="356.0" width="2.9" height="72.0"/><rect x="965.1" y="356.0" width="2.9" height="80.2"/><rect x="970.8" y="356.0" width="2.9" height="80.7"/><rect x="976.2" y="356.0" width="2.9" height="77.9"/><rect x="981.9" y="356.0" width="2.9" height="78.0"/><rect x="987.7" y="356.0" width="2.9" height="66.2"/><rect x="993.5" y="356.0" width="2.9" height="72.4"/><rect x="999.0" y="356.0" width="2.9" height="68.6"/><rect x="1004.5" y="356.0" width="2.9" height="67.8"/><rect x="1010.0" y="352.6" width="2.9" height="73.5"/><rect x="1015.4" y="346.6" width="2.9" height="89.7"/><rect x="1020.8" y="340.5" width="2.9" height="95.1"/><rect x="1026.0" y="338.0" width="2.9" height="97.1"/><rect x="1031.8" y="338.0" width="2.9" height="97.0"/><rect x="1037.7" y="338.0" width="2.9" height="85.0"/><rect x="1042.9" y="338.0" width="2.9" height="97.2"/><rect x="1048.5" y="338.0" width="2.9" height="79.9"/><rect x="1053.8" y="338.0" width="2.9" height="91.6"/><rect x="1059.6" y="338.0" width="2.9" height="79.4"/><rect x="1065.0" y="338.0" width="2.9" height="89.5"/><rect x="1070.6" y="338.0" width="2.9" height="85.2"/><rect x="1076.1" y="338.0" width="2.9" height="95.9"/><rect x="1081.3" y="338.0" width="2.9" height="80.8"/><rect x="1087.2" y="338.5" width="2.9" height="77.4"/><rect x="1092.6" y="353.7" width="2.9" height="72.4"/><rect x="1097.8" y="355.0" width="2.9" height="66.0"/><rect x="1103.0" y="354.9" width="2.9" height="71.9"/><rect x="1108.2" y="354.9" width="2.9" height="76.2"/><rect x="1113.5" y="354.8" width="2.9" height="65.1"/><rect x="1119.0" y="354.8" width="2.9" height="76.0"/><rect x="1124.2" y="354.7" width="2.9" height="70.4"/><rect x="1129.4" y="354.7" width="2.9" height="75.0"/><rect x="1135.0" y="354.6" width="2.9" height="63.7"/><rect x="1140.5" y="354.6" width="2.9" height="64.1"/><rect x="1146.2" y="354.5" width="2.9" height="67.9"/><rect x="1152.1" y="354.5" width="2.9" height="66.9"/><rect x="1157.9" y="354.4" width="2.9" height="69.6"/><rect x="1163.5" y="354.4" width="2.9" height="68.2"/><rect x="1169.2" y="354.3" width="2.9" height="75.0"/><rect x="1174.5" y="354.3" width="2.9" height="65.1"/><rect x="1180.2" y="354.2" width="2.9" height="69.0"/><rect x="1185.4" y="354.2" width="2.9" height="64.8"/><rect x="1190.9" y="354.1" width="2.9" height="68.0"/><rect x="1196.2" y="354.1" width="2.9" height="61.0"/><rect x="1201.7" y="354.0" width="2.9" height="72.5"/><rect x="1207.1" y="346.4" width="2.9" height="70.6"/><rect x="1212.7" y="335.9" width="2.9" height="85.0"/><rect x="1218.4" y="328.0" width="2.9" height="81.6"/><rect x="1224.0" y="328.0" width="2.9" height="93.9"/><rect x="1229.3" y="328.0" width="2.9" height="88.1"/><rect x="1234.5" y="328.0" width="2.9" height="93.4"/><rect x="1240.3" y="328.0" width="2.9" height="100.1"/><rect x="1246.0" y="328.0" width="2.9" height="92.0"/><rect x="1251.9" y="328.0" width="2.9" height="89.1"/><rect x="1257.8" y="328.0" width="2.9" height="101.8"/><rect x="1263.6" y="331.5" width="2.9" height="96.3"/><rect x="1269.5" y="343.7" width="2.9" height="77.7"/><rect x="1275.0" y="349.0" width="2.9" height="65.3"/><rect x="1280.1" y="349.0" width="2.9" height="75.4"/><rect x="1285.7" y="349.0" width="2.9" height="66.6"/><rect x="1290.9" y="349.0" width="2.9" height="77.6"/><rect x="1296.3" y="349.0" width="2.9" height="79.2"/><rect x="1302.1" y="349.0" width="2.9" height="74.6"/><rect x="1307.5" y="349.0" width="2.9" height="74.3"/><rect x="1313.1" y="349.0" width="2.9" height="72.4"/><rect x="1319.0" y="349.0" width="2.9" height="73.1"/><rect x="1324.4" y="349.0" width="2.9" height="68.3"/><rect x="1329.6" y="349.0" width="2.9" height="71.6"/><rect x="1335.2" y="349.0" width="2.9" height="79.8"/><rect x="1340.5" y="349.0" width="2.9" height="68.4"/><rect x="1346.1" y="349.0" width="2.9" height="75.1"/><rect x="1351.9" y="343.8" width="2.9" height="78.2"/><rect x="1357.1" y="334.2" width="2.9" height="84.0"/><rect x="1362.9" y="329.0" width="2.9" height="94.1"/><rect x="1368.6" y="329.0" width="2.9" height="93.0"/><rect x="1374.3" y="329.0" width="2.9" height="84.4"/><rect x="1379.5" y="329.0" width="2.9" height="85.5"/><rect x="1385.2" y="329.0" width="2.9" height="92.6"/><rect x="1390.5" y="329.0" width="2.9" height="94.3"/><rect x="1396.4" y="329.0" width="2.9" height="95.2"/><rect x="1401.8" y="342.3" width="2.9" height="83.0"/><rect x="1407.7" y="350.0" width="2.9" height="64.5"/><rect x="1413.3" y="350.0" width="2.9" height="71.7"/><rect x="1419.1" y="350.0" width="2.9" height="76.4"/><rect x="1424.7" y="350.0" width="2.9" height="65.3"/><rect x="1430.0" y="350.0" width="2.9" height="68.6"/><rect x="1435.9" y="350.0" width="2.9" height="79.0"/><rect x="1441.4" y="350.0" width="2.9" height="73.4"/><rect x="1446.5" y="350.0" width="2.9" height="66.4"/><rect x="1451.8" y="350.0" width="2.9" height="68.6"/><rect x="1457.3" y="350.0" width="2.9" height="64.1"/><rect x="1463.1" y="350.0" width="2.9" height="65.9"/><rect x="1468.4" y="350.0" width="2.9" height="64.0"/><rect x="1474.1" y="347.2" width="2.9" height="76.4"/><rect x="1479.9" y="333.3" width="2.9" height="85.2"/><rect x="1485.4" y="321.0" width="2.9" height="107.6"/><rect x="1491.0" y="321.0" width="2.9" height="96.9"/><rect x="1496.1" y="321.0" width="2.9" height="88.4"/><rect x="1501.6" y="321.0" width="2.9" height="105.7"/><rect x="1507.2" y="321.0" width="2.9" height="91.4"/><rect x="1512.6" y="321.0" width="2.9" height="98.4"/><rect x="1518.3" y="321.0" width="2.9" height="90.2"/><rect x="1523.4" y="328.3" width="2.9" height="92.6"/><rect x="1529.0" y="347.0" width="2.9" height="79.9"/><rect x="1534.6" y="347.0" width="2.9" height="77.7"/><rect x="1539.8" y="347.0" width="2.9" height="80.8"/><rect x="1545.4" y="347.0" width="2.9" height="78.7"/><rect x="1550.8" y="347.0" width="2.9" height="76.9"/><rect x="1556.0" y="347.0" width="2.9" height="66.2"/><rect x="1561.4" y="347.0" width="2.9" height="72.0"/><rect x="1567.2" y="347.0" width="2.9" height="71.5"/><rect x="1572.8" y="347.0" width="2.9" height="81.7"/><rect x="1578.3" y="347.0" width="2.9" height="81.2"/><rect x="1584.1" y="347.0" width="2.9" height="71.5"/><rect x="1590.0" y="347.0" width="2.9" height="77.6"/><rect x="1595.1" y="344.9" width="2.9" height="75.3"/><rect x="1600.2" y="339.8" width="2.9" height="81.4"/><rect x="1605.9" y="334.1" width="2.9" height="93.2"/><rect x="1611.3" y="332.3" width="2.9" height="78.5"/><rect x="1616.4" y="335.3" width="2.9" height="78.9"/><rect x="1622.0" y="339.8" width="2.9" height="81.8"/><rect x="1627.4" y="347.0" width="2.9" height="79.7"/><rect x="1633.1" y="347.0" width="2.9" height="70.9"/><rect x="1638.5" y="347.0" width="2.9" height="73.0"/><rect x="1643.6" y="347.0" width="2.9" height="66.9"/><rect x="1649.0" y="347.0" width="2.9" height="76.1"/><rect x="1654.8" y="347.0" width="2.9" height="81.3"/><rect x="1660.0" y="347.0" width="2.9" height="78.0"/><rect x="1665.1" y="347.0" width="2.9" height="73.5"/><rect x="1670.4" y="347.0" width="2.9" height="65.8"/><rect x="1675.7" y="347.0" width="2.9" height="80.0"/><rect x="1681.2" y="347.0" width="2.9" height="72.0"/><rect x="1686.4" y="335.1" width="2.9" height="79.1"/><rect x="1691.8" y="316.7" width="2.9" height="93.0"/><rect x="1697.5" y="316.0" width="2.9" height="110.1"/><rect x="1703.4" y="316.0" width="2.9" height="107.6"/><rect x="1708.7" y="316.0" width="2.9" height="90.2"/><rect x="1714.3" y="316.0" width="2.9" height="106.1"/><rect x="1720.1" y="316.0" width="2.9" height="95.2"/><rect x="1725.4" y="337.2" width="2.9" height="75.5"/><rect x="1730.9" y="347.0" width="2.9" height="80.1"/><rect x="1736.6" y="347.0" width="2.9" height="66.3"/><rect x="1741.7" y="347.0" width="2.9" height="74.1"/><rect x="1747.4" y="347.0" width="2.9" height="81.0"/><rect x="1752.5" y="347.0" width="2.9" height="75.1"/><rect x="1758.2" y="347.0" width="2.9" height="70.4"/><rect x="1763.3" y="347.0" width="2.9" height="74.7"/><rect x="1768.7" y="347.0" width="2.9" height="75.1"/><rect x="1774.3" y="339.5" width="2.9" height="83.9"/><rect x="1779.8" y="321.5" width="2.9" height="90.5"/><rect x="1785.6" y="321.0" width="2.9" height="94.0"/><rect x="1790.9" y="321.0" width="2.9" height="97.0"/><rect x="1796.6" y="321.0" width="2.9" height="102.1"/><rect x="1802.0" y="321.0" width="2.9" height="90.1"/><rect x="1807.3" y="330.1" width="2.9" height="80.3"/><rect x="1813.0" y="345.0" width="2.9" height="73.9"/><rect x="1818.8" y="345.0" width="2.9" height="82.0"/><rect x="1824.2" y="345.0" width="2.9" height="79.1"/><rect x="1829.9" y="345.0" width="2.9" height="74.2"/><rect x="1835.3" y="345.0" width="2.9" height="77.7"/><rect x="1840.9" y="345.0" width="2.9" height="70.2"/><rect x="1846.6" y="345.0" width="2.9" height="78.3"/><rect x="1852.5" y="345.0" width="2.9" height="72.0"/><rect x="1857.8" y="342.0" width="2.9" height="77.7"/><rect x="1863.5" y="320.7" width="2.9" height="87.0"/><rect x="1868.9" y="319.0" width="2.9" height="99.4"/><rect x="1874.3" y="319.0" width="2.9" height="102.7"/><rect x="1879.8" y="319.0" width="2.9" height="101.2"/></g><g fill="#72a800" opacity="0.75"><rect x="3.3" y="355.5" width="5.2" height="11.5"/><rect x="3.3" y="367.0" width="5.2" height="8.8"/><rect x="8.7" y="340.7" width="5.2" height="26.3"/><rect x="14.3" y="353.9" width="5.2" height="13.1"/><rect x="14.3" y="367.0" width="5.2" height="26.0"/><rect x="19.6" y="351.6" width="5.2" height="15.4"/><rect x="25.0" y="350.6" width="5.2" height="16.3"/><rect x="25.0" y="366.9" width="5.2" height="19.6"/><rect x="30.8" y="366.9" width="5.2" height="18.8"/><rect x="35.9" y="341.4" width="5.2" height="25.5"/><rect x="35.9" y="366.9" width="5.2" height="18.0"/><rect x="41.7" y="331.0" width="5.2" height="35.8"/><rect x="47.0" y="355.3" width="5.2" height="11.5"/><rect x="52.2" y="333.9" width="5.2" height="33.0"/><rect x="58.0" y="352.2" width="5.2" height="14.6"/><rect x="58.0" y="366.8" width="5.2" height="13.1"/><rect x="63.5" y="332.0" width="5.2" height="34.8"/><rect x="74.4" y="352.5" width="5.2" height="14.2"/><rect x="74.4" y="366.8" width="5.2" height="9.2"/><rect x="79.5" y="352.9" width="5.2" height="13.9"/><rect x="79.5" y="366.7" width="5.2" height="15.6"/><rect x="84.9" y="354.1" width="5.2" height="12.7"/><rect x="84.9" y="366.7" width="5.2" height="13.8"/><rect x="90.7" y="356.0" width="5.2" height="10.7"/><rect x="90.7" y="366.7" width="5.2" height="29.5"/><rect x="96.5" y="336.4" width="5.2" height="30.3"/><rect x="96.5" y="366.7" width="5.2" height="12.9"/><rect x="102.2" y="343.2" width="5.2" height="23.5"/><rect x="102.2" y="366.7" width="5.2" height="8.6"/><rect x="113.2" y="333.2" width="5.2" height="33.4"/><rect x="124.2" y="346.2" width="5.2" height="20.4"/><rect x="129.9" y="335.1" width="5.2" height="31.5"/><rect x="135.5" y="342.9" width="5.2" height="23.7"/><rect x="140.9" y="341.3" width="5.2" height="25.2"/><rect x="140.9" y="366.5" width="5.2" height="17.2"/><rect x="146.1" y="332.7" width="5.2" height="33.9"/><rect x="146.1" y="366.5" width="5.2" height="19.7"/><rect x="151.7" y="344.2" width="5.2" height="22.3"/><rect x="157.2" y="350.0" width="5.2" height="16.5"/><rect x="157.2" y="366.5" width="5.2" height="25.0"/><rect x="162.7" y="343.1" width="5.2" height="23.3"/><rect x="168.2" y="366.4" width="5.2" height="20.3"/><rect x="174.0" y="354.5" width="5.2" height="11.9"/><rect x="185.0" y="345.2" width="5.2" height="21.2"/><rect x="185.0" y="366.4" width="5.2" height="15.5"/><rect x="190.3" y="347.7" width="5.2" height="18.6"/><rect x="195.8" y="355.3" width="5.2" height="11.0"/><rect x="201.1" y="332.4" width="5.2" height="33.9"/><rect x="201.1" y="366.3" width="5.2" height="23.4"/><rect x="206.3" y="335.5" width="5.2" height="30.8"/><rect x="206.3" y="366.3" width="5.2" height="26.8"/><rect x="211.4" y="352.9" width="5.2" height="13.4"/><rect x="211.4" y="366.3" width="5.2" height="13.2"/><rect x="216.6" y="366.3" width="5.2" height="19.0"/><rect x="221.9" y="351.3" width="5.2" height="14.9"/><rect x="221.9" y="366.3" width="5.2" height="28.6"/><rect x="227.1" y="338.4" width="5.2" height="27.9"/><rect x="232.4" y="352.8" width="5.2" height="13.4"/><rect x="232.4" y="366.2" width="5.2" height="24.3"/><rect x="237.7" y="349.9" width="5.2" height="16.3"/><rect x="237.7" y="366.2" width="5.2" height="18.1"/><rect x="243.0" y="331.1" width="5.2" height="35.1"/><rect x="243.0" y="366.2" width="5.2" height="15.8"/><rect x="248.1" y="349.3" width="5.2" height="16.9"/><rect x="248.1" y="366.2" width="5.2" height="16.8"/><rect x="258.9" y="339.4" width="5.2" height="26.7"/><rect x="258.9" y="366.1" width="5.2" height="26.4"/><rect x="264.7" y="334.4" width="5.2" height="31.7"/><rect x="270.4" y="352.6" width="5.2" height="13.5"/><rect x="270.4" y="366.1" width="5.2" height="10.3"/><rect x="276.2" y="335.3" width="5.2" height="30.7"/><rect x="281.7" y="349.2" width="5.2" height="16.9"/><rect x="287.0" y="336.1" width="5.2" height="29.9"/><rect x="292.6" y="355.7" width="5.2" height="10.3"/><rect x="292.6" y="366.0" width="5.2" height="13.9"/><rect x="298.2" y="352.9" width="5.2" height="13.1"/><rect x="303.5" y="366.0" width="5.2" height="13.9"/><rect x="308.8" y="366.0" width="5.2" height="26.0"/><rect x="314.3" y="355.9" width="5.2" height="10.1"/><rect x="314.3" y="366.0" width="5.2" height="17.9"/><rect x="324.8" y="330.0" width="5.2" height="36.0"/><rect x="324.8" y="365.9" width="5.2" height="15.9"/><rect x="330.2" y="365.9" width="5.2" height="13.8"/><rect x="335.7" y="332.2" width="5.2" height="33.7"/><rect x="341.3" y="348.5" width="5.2" height="17.4"/><rect x="341.3" y="365.9" width="5.2" height="28.4"/><rect x="346.5" y="338.8" width="5.2" height="27.1"/><rect x="346.5" y="365.9" width="5.2" height="20.3"/><rect x="351.9" y="332.3" width="5.2" height="33.6"/><rect x="357.4" y="349.1" width="5.2" height="16.7"/><rect x="357.4" y="365.9" width="5.2" height="27.5"/><rect x="363.1" y="348.6" width="5.2" height="17.2"/><rect x="368.3" y="345.4" width="5.2" height="20.4"/><rect x="368.3" y="365.8" width="5.2" height="29.0"/><rect x="374.0" y="340.5" width="5.2" height="25.3"/><rect x="374.0" y="365.8" width="5.2" height="16.6"/><rect x="379.9" y="342.2" width="5.2" height="23.6"/><rect x="385.7" y="335.4" width="5.2" height="30.3"/><rect x="385.7" y="365.8" width="5.2" height="28.2"/><rect x="391.4" y="353.9" width="5.2" height="11.8"/><rect x="391.4" y="365.8" width="5.2" height="20.8"/><rect x="402.6" y="355.2" width="5.2" height="10.6"/><rect x="402.6" y="365.7" width="5.2" height="22.8"/><rect x="408.0" y="344.8" width="5.2" height="20.9"/><rect x="413.3" y="334.4" width="5.2" height="31.3"/><rect x="413.3" y="365.7" width="5.2" height="12.9"/><rect x="419.0" y="338.4" width="5.2" height="27.3"/><rect x="424.2" y="345.5" width="5.2" height="20.2"/><rect x="435.1" y="348.4" width="5.2" height="17.3"/><rect x="435.1" y="365.7" width="5.2" height="29.0"/><rect x="440.3" y="354.4" width="5.2" height="11.3"/><rect x="440.3" y="365.6" width="5.2" height="16.2"/><rect x="451.3" y="365.6" width="5.2" height="14.0"/><rect x="457.2" y="336.0" width="5.2" height="29.6"/><rect x="462.8" y="365.6" width="5.2" height="13.5"/><rect x="473.8" y="336.0" width="5.2" height="29.6"/><rect x="473.8" y="365.6" width="5.2" height="9.4"/><rect x="478.9" y="353.4" width="5.2" height="12.2"/><rect x="478.9" y="365.5" width="5.2" height="19.0"/><rect x="484.6" y="333.5" width="5.2" height="32.0"/><rect x="489.8" y="349.1" width="5.2" height="16.4"/><rect x="489.8" y="365.5" width="5.2" height="11.4"/><rect x="495.6" y="334.5" width="5.2" height="31.0"/><rect x="501.5" y="347.9" width="5.2" height="17.6"/><rect x="501.5" y="365.5" width="5.2" height="12.2"/><rect x="507.4" y="335.3" width="5.2" height="30.2"/><rect x="512.6" y="348.8" width="5.2" height="16.6"/><rect x="512.6" y="365.5" width="5.2" height="22.3"/><rect x="517.8" y="334.8" width="5.2" height="30.7"/><rect x="517.8" y="365.5" width="5.2" height="9.4"/><rect x="523.0" y="344.8" width="5.2" height="20.7"/><rect x="523.0" y="365.4" width="5.2" height="14.8"/><rect x="528.9" y="365.4" width="5.2" height="12.3"/><rect x="534.5" y="332.5" width="5.2" height="33.0"/><rect x="534.5" y="365.4" width="5.2" height="11.6"/><rect x="539.7" y="342.3" width="5.2" height="23.1"/><rect x="539.7" y="365.4" width="5.2" height="14.2"/><rect x="545.2" y="352.1" width="5.2" height="13.3"/><rect x="551.0" y="333.9" width="5.2" height="31.4"/><rect x="551.0" y="365.4" width="5.2" height="25.3"/><rect x="556.3" y="341.9" width="5.2" height="23.5"/><rect x="556.3" y="365.4" width="5.2" height="10.7"/><rect x="561.6" y="333.5" width="5.2" height="31.8"/><rect x="561.6" y="365.3" width="5.2" height="21.2"/><rect x="567.2" y="343.7" width="5.2" height="21.6"/><rect x="567.2" y="365.3" width="5.2" height="8.5"/><rect x="572.8" y="343.0" width="5.2" height="22.3"/><rect x="572.8" y="365.3" width="5.2" height="10.8"/><rect x="578.2" y="336.2" width="5.2" height="29.1"/><rect x="589.4" y="365.3" width="5.2" height="25.3"/><rect x="595.2" y="334.1" width="5.2" height="31.2"/><rect x="595.2" y="365.3" width="5.2" height="19.0"/><rect x="601.1" y="351.1" width="5.2" height="14.2"/><rect x="606.7" y="345.9" width="5.2" height="19.4"/><rect x="612.3" y="334.5" width="5.2" height="30.7"/><rect x="612.3" y="365.2" width="5.2" height="29.8"/><rect x="617.8" y="333.9" width="5.2" height="31.3"/><rect x="617.8" y="365.2" width="5.2" height="22.1"/><rect x="623.7" y="339.2" width="5.2" height="26.0"/><rect x="623.7" y="365.2" width="5.2" height="19.3"/><rect x="629.5" y="352.4" width="5.2" height="12.8"/><rect x="629.5" y="365.2" width="5.2" height="12.9"/><rect x="635.1" y="365.2" width="5.2" height="11.3"/><rect x="640.3" y="338.4" width="5.2" height="26.8"/><rect x="640.3" y="365.1" width="5.2" height="15.7"/><rect x="645.9" y="341.3" width="5.2" height="23.8"/><rect x="645.9" y="365.1" width="5.2" height="13.2"/><rect x="651.0" y="339.3" width="5.2" height="25.8"/><rect x="651.0" y="365.1" width="5.2" height="22.1"/><rect x="661.9" y="352.4" width="5.2" height="12.7"/><rect x="661.9" y="365.1" width="5.2" height="8.9"/><rect x="667.3" y="343.7" width="5.2" height="21.3"/><rect x="672.8" y="348.3" width="5.2" height="16.8"/><rect x="672.8" y="365.1" width="5.2" height="24.4"/><rect x="684.3" y="365.0" width="5.2" height="23.9"/><rect x="689.8" y="354.3" width="5.2" height="10.7"/><rect x="689.8" y="365.0" width="5.2" height="28.4"/><rect x="695.2" y="335.9" width="5.2" height="29.2"/><rect x="695.2" y="365.0" width="5.2" height="21.0"/><rect x="705.8" y="332.8" width="5.2" height="31.5"/><rect x="711.1" y="353.2" width="5.2" height="10.5"/><rect x="711.1" y="363.8" width="5.2" height="14.2"/><rect x="716.8" y="352.4" width="5.2" height="10.8"/><rect x="716.8" y="363.2" width="5.2" height="17.6"/><rect x="722.5" y="328.2" width="5.2" height="31.3"/><rect x="722.5" y="359.5" width="5.2" height="8.0"/><rect x="727.8" y="354.5" width="5.2" height="18.9"/><rect x="733.2" y="326.5" width="5.2" height="23.0"/><rect x="733.2" y="349.5" width="5.2" height="22.0"/><rect x="738.3" y="326.5" width="5.2" height="20.3"/><rect x="743.5" y="326.3" width="5.2" height="19.9"/><rect x="748.8" y="327.1" width="5.2" height="18.5"/><rect x="748.8" y="345.6" width="5.2" height="26.5"/><rect x="754.4" y="322.9" width="5.2" height="22.0"/><rect x="759.7" y="327.9" width="5.2" height="16.4"/><rect x="759.7" y="344.3" width="5.2" height="19.5"/><rect x="764.9" y="343.8" width="5.2" height="16.5"/><rect x="770.8" y="327.7" width="5.2" height="15.4"/><rect x="770.8" y="343.1" width="5.2" height="8.7"/><rect x="776.2" y="316.8" width="5.2" height="25.7"/><rect x="776.2" y="342.5" width="5.2" height="24.3"/><rect x="782.1" y="309.0" width="5.2" height="32.9"/><rect x="787.7" y="328.7" width="5.2" height="12.5"/><rect x="787.7" y="341.2" width="5.2" height="25.2"/><rect x="793.4" y="313.0" width="5.2" height="27.6"/><rect x="798.6" y="315.9" width="5.2" height="24.1"/><rect x="798.6" y="340.0" width="5.2" height="25.2"/><rect x="804.5" y="313.3" width="5.2" height="26.6"/><rect x="810.0" y="339.8" width="5.2" height="29.7"/><rect x="815.4" y="311.6" width="5.2" height="28.2"/><rect x="815.4" y="339.7" width="5.2" height="13.8"/><rect x="820.7" y="324.2" width="5.2" height="15.5"/><rect x="820.7" y="339.7" width="5.2" height="25.1"/><rect x="826.4" y="313.0" width="5.2" height="26.6"/><rect x="832.2" y="307.4" width="5.2" height="32.1"/><rect x="832.2" y="339.5" width="5.2" height="16.3"/><rect x="837.5" y="321.6" width="5.2" height="17.8"/><rect x="837.5" y="339.4" width="5.2" height="17.4"/><rect x="854.1" y="305.7" width="5.2" height="33.5"/><rect x="864.6" y="322.1" width="5.2" height="16.9"/><rect x="864.6" y="339.0" width="5.2" height="11.1"/><rect x="870.1" y="319.4" width="5.2" height="32.4"/><rect x="870.1" y="351.9" width="5.2" height="26.5"/><rect x="875.6" y="356.0" width="5.2" height="22.0"/><rect x="881.2" y="356.0" width="5.2" height="18.7"/><rect x="887.0" y="333.7" width="5.2" height="22.3"/><rect x="887.0" y="356.0" width="5.2" height="25.0"/><rect x="892.3" y="356.0" width="5.2" height="19.1"/><rect x="897.6" y="338.2" width="5.2" height="17.8"/><rect x="897.6" y="356.0" width="5.2" height="22.0"/><rect x="903.3" y="345.8" width="5.2" height="10.2"/><rect x="903.3" y="356.0" width="5.2" height="28.3"/><rect x="908.9" y="327.9" width="5.2" height="28.1"/><rect x="908.9" y="356.0" width="5.2" height="23.0"/><rect x="914.2" y="325.9" width="5.2" height="30.1"/><rect x="919.8" y="335.0" width="5.2" height="21.0"/><rect x="919.8" y="356.0" width="5.2" height="17.5"/><rect x="925.4" y="356.0" width="5.2" height="28.2"/><rect x="930.9" y="335.3" width="5.2" height="20.7"/><rect x="930.9" y="356.0" width="5.2" height="22.2"/><rect x="936.1" y="356.0" width="5.2" height="27.1"/><rect x="941.3" y="325.9" width="5.2" height="30.1"/><rect x="947.1" y="356.0" width="5.2" height="29.2"/><rect x="952.8" y="327.0" width="5.2" height="29.0"/><rect x="952.8" y="356.0" width="5.2" height="26.9"/><rect x="958.3" y="325.3" width="5.2" height="30.7"/><rect x="958.3" y="356.0" width="5.2" height="22.2"/><rect x="963.9" y="338.4" width="5.2" height="17.6"/><rect x="963.9" y="356.0" width="5.2" height="29.4"/><rect x="969.6" y="338.0" width="5.2" height="18.0"/><rect x="969.6" y="356.0" width="5.2" height="27.5"/><rect x="975.0" y="339.2" width="5.2" height="16.8"/><rect x="975.0" y="356.0" width="5.2" height="20.9"/><rect x="980.7" y="338.9" width="5.2" height="17.1"/><rect x="986.5" y="356.0" width="5.2" height="24.5"/><rect x="992.3" y="326.5" width="5.2" height="29.5"/><rect x="1003.3" y="336.6" width="5.2" height="19.4"/><rect x="1003.3" y="356.0" width="5.2" height="16.9"/><rect x="1008.8" y="322.2" width="5.2" height="30.5"/><rect x="1008.8" y="352.6" width="5.2" height="21.1"/><rect x="1014.2" y="321.8" width="5.2" height="24.7"/><rect x="1014.2" y="346.6" width="5.2" height="25.1"/><rect x="1019.6" y="325.2" width="5.2" height="15.2"/><rect x="1019.6" y="340.5" width="5.2" height="9.8"/><rect x="1024.8" y="312.5" width="5.2" height="25.5"/><rect x="1024.8" y="338.0" width="5.2" height="10.6"/><rect x="1030.6" y="316.3" width="5.2" height="21.7"/><rect x="1030.6" y="338.0" width="5.2" height="29.2"/><rect x="1041.7" y="308.4" width="5.2" height="29.6"/><rect x="1047.3" y="324.8" width="5.2" height="13.2"/><rect x="1047.3" y="338.0" width="5.2" height="11.7"/><rect x="1052.6" y="303.9" width="5.2" height="34.1"/><rect x="1052.6" y="338.0" width="5.2" height="28.5"/><rect x="1063.8" y="326.5" width="5.2" height="11.5"/><rect x="1069.4" y="306.2" width="5.2" height="31.8"/><rect x="1069.4" y="338.0" width="5.2" height="11.7"/><rect x="1086.0" y="303.1" width="5.2" height="35.4"/><rect x="1086.0" y="338.5" width="5.2" height="25.8"/><rect x="1091.4" y="320.0" width="5.2" height="33.7"/><rect x="1091.4" y="353.7" width="5.2" height="20.6"/><rect x="1096.6" y="329.1" width="5.2" height="25.8"/><rect x="1096.6" y="355.0" width="5.2" height="14.0"/><rect x="1101.8" y="325.9" width="5.2" height="29.1"/><rect x="1101.8" y="354.9" width="5.2" height="23.9"/><rect x="1107.0" y="321.2" width="5.2" height="33.7"/><rect x="1107.0" y="354.9" width="5.2" height="27.2"/><rect x="1112.3" y="344.7" width="5.2" height="10.1"/><rect x="1112.3" y="354.8" width="5.2" height="17.8"/><rect x="1117.8" y="334.8" width="5.2" height="19.9"/><rect x="1123.0" y="344.2" width="5.2" height="10.5"/><rect x="1128.2" y="326.5" width="5.2" height="28.2"/><rect x="1128.2" y="354.7" width="5.2" height="8.4"/><rect x="1133.8" y="343.4" width="5.2" height="11.2"/><rect x="1133.8" y="354.6" width="5.2" height="18.9"/><rect x="1139.3" y="354.6" width="5.2" height="20.6"/><rect x="1145.0" y="354.5" width="5.2" height="16.7"/><rect x="1156.7" y="354.4" width="5.2" height="17.3"/><rect x="1162.3" y="340.7" width="5.2" height="13.6"/><rect x="1168.0" y="327.6" width="5.2" height="26.7"/><rect x="1168.0" y="354.3" width="5.2" height="22.9"/><rect x="1173.3" y="319.5" width="5.2" height="34.7"/><rect x="1173.3" y="354.3" width="5.2" height="14.7"/><rect x="1179.0" y="330.3" width="5.2" height="23.9"/><rect x="1179.0" y="354.2" width="5.2" height="10.7"/><rect x="1184.2" y="322.3" width="5.2" height="31.8"/><rect x="1189.7" y="331.9" width="5.2" height="22.2"/><rect x="1189.7" y="354.1" width="5.2" height="13.3"/><rect x="1195.0" y="354.1" width="5.2" height="20.2"/><rect x="1200.5" y="321.4" width="5.2" height="32.7"/><rect x="1200.5" y="354.0" width="5.2" height="9.4"/><rect x="1205.9" y="332.4" width="5.2" height="14.0"/><rect x="1205.9" y="346.4" width="5.2" height="15.8"/><rect x="1211.5" y="306.2" width="5.2" height="29.8"/><rect x="1211.5" y="335.9" width="5.2" height="25.3"/><rect x="1217.2" y="305.1" width="5.2" height="22.9"/><rect x="1222.8" y="306.1" width="5.2" height="21.9"/><rect x="1228.1" y="328.0" width="5.2" height="17.8"/><rect x="1233.3" y="328.0" width="5.2" height="26.6"/><rect x="1239.1" y="303.3" width="5.2" height="24.7"/><rect x="1239.1" y="328.0" width="5.2" height="28.2"/><rect x="1244.8" y="308.7" width="5.2" height="19.3"/><rect x="1244.8" y="328.0" width="5.2" height="15.7"/><rect x="1250.7" y="303.1" width="5.2" height="24.9"/><rect x="1256.6" y="296.8" width="5.2" height="31.2"/><rect x="1256.6" y="328.0" width="5.2" height="15.0"/><rect x="1268.3" y="328.9" width="5.2" height="14.7"/><rect x="1273.8" y="349.0" width="5.2" height="23.2"/><rect x="1278.9" y="324.6" width="5.2" height="24.4"/><rect x="1278.9" y="349.0" width="5.2" height="22.2"/><rect x="1284.5" y="349.0" width="5.2" height="10.2"/><rect x="1289.7" y="319.0" width="5.2" height="30.0"/><rect x="1289.7" y="349.0" width="5.2" height="23.7"/><rect x="1295.1" y="327.3" width="5.2" height="21.7"/><rect x="1295.1" y="349.0" width="5.2" height="9.2"/><rect x="1300.9" y="314.8" width="5.2" height="34.2"/><rect x="1306.3" y="314.3" width="5.2" height="34.7"/><rect x="1306.3" y="349.0" width="5.2" height="16.6"/><rect x="1311.9" y="334.5" width="5.2" height="14.5"/><rect x="1311.9" y="349.0" width="5.2" height="12.1"/><rect x="1317.8" y="337.3" width="5.2" height="11.7"/><rect x="1317.8" y="349.0" width="5.2" height="26.2"/><rect x="1323.2" y="330.1" width="5.2" height="18.9"/><rect x="1323.2" y="349.0" width="5.2" height="23.5"/><rect x="1328.4" y="349.0" width="5.2" height="15.8"/><rect x="1334.0" y="327.2" width="5.2" height="21.8"/><rect x="1334.0" y="349.0" width="5.2" height="23.5"/><rect x="1339.3" y="316.3" width="5.2" height="32.7"/><rect x="1339.3" y="349.0" width="5.2" height="19.3"/><rect x="1344.9" y="328.9" width="5.2" height="20.1"/><rect x="1344.9" y="349.0" width="5.2" height="11.9"/><rect x="1350.7" y="326.1" width="5.2" height="17.7"/><rect x="1350.7" y="343.8" width="5.2" height="14.8"/><rect x="1361.7" y="308.3" width="5.2" height="20.7"/><rect x="1367.4" y="295.3" width="5.2" height="33.7"/><rect x="1373.1" y="318.0" width="5.2" height="11.0"/><rect x="1373.1" y="329.0" width="5.2" height="22.0"/><rect x="1378.3" y="309.9" width="5.2" height="19.1"/><rect x="1378.3" y="329.0" width="5.2" height="26.4"/><rect x="1384.0" y="316.1" width="5.2" height="12.9"/><rect x="1389.3" y="297.5" width="5.2" height="31.5"/><rect x="1389.3" y="329.0" width="5.2" height="10.0"/><rect x="1395.2" y="307.2" width="5.2" height="21.8"/><rect x="1395.2" y="329.0" width="5.2" height="23.4"/><rect x="1400.6" y="311.3" width="5.2" height="30.9"/><rect x="1400.6" y="342.3" width="5.2" height="20.0"/><rect x="1406.5" y="334.8" width="5.2" height="15.2"/><rect x="1406.5" y="350.0" width="5.2" height="11.0"/><rect x="1412.1" y="350.0" width="5.2" height="14.6"/><rect x="1417.9" y="350.0" width="5.2" height="22.7"/><rect x="1423.5" y="334.6" width="5.2" height="15.4"/><rect x="1423.5" y="350.0" width="5.2" height="14.2"/><rect x="1428.8" y="335.6" width="5.2" height="14.4"/><rect x="1428.8" y="350.0" width="5.2" height="8.2"/><rect x="1434.7" y="327.3" width="5.2" height="22.7"/><rect x="1434.7" y="350.0" width="5.2" height="12.2"/><rect x="1440.2" y="333.5" width="5.2" height="16.5"/><rect x="1440.2" y="350.0" width="5.2" height="11.1"/><rect x="1450.6" y="350.0" width="5.2" height="16.1"/><rect x="1456.1" y="318.7" width="5.2" height="31.3"/><rect x="1461.9" y="337.9" width="5.2" height="12.1"/><rect x="1467.2" y="321.2" width="5.2" height="28.8"/><rect x="1467.2" y="350.0" width="5.2" height="26.5"/><rect x="1472.9" y="328.4" width="5.2" height="18.8"/><rect x="1472.9" y="347.2" width="5.2" height="22.7"/><rect x="1478.7" y="318.2" width="5.2" height="15.1"/><rect x="1478.7" y="333.3" width="5.2" height="15.1"/><rect x="1484.2" y="289.9" width="5.2" height="31.1"/><rect x="1484.2" y="321.0" width="5.2" height="22.9"/><rect x="1489.8" y="302.1" width="5.2" height="18.9"/><rect x="1494.9" y="295.9" width="5.2" height="25.1"/><rect x="1494.9" y="321.0" width="5.2" height="19.7"/><rect x="1500.4" y="288.6" width="5.2" height="32.4"/><rect x="1500.4" y="321.0" width="5.2" height="10.1"/><rect x="1506.0" y="297.7" width="5.2" height="23.3"/><rect x="1506.0" y="321.0" width="5.2" height="9.8"/><rect x="1511.4" y="321.0" width="5.2" height="29.8"/><rect x="1517.1" y="290.9" width="5.2" height="30.1"/><rect x="1517.1" y="321.0" width="5.2" height="25.1"/><rect x="1522.2" y="299.9" width="5.2" height="28.4"/><rect x="1522.2" y="328.3" width="5.2" height="27.5"/><rect x="1527.8" y="328.1" width="5.2" height="18.9"/><rect x="1533.4" y="335.9" width="5.2" height="11.1"/><rect x="1538.6" y="332.0" width="5.2" height="15.0"/><rect x="1538.6" y="347.0" width="5.2" height="26.4"/><rect x="1544.2" y="329.5" width="5.2" height="17.5"/><rect x="1549.6" y="347.0" width="5.2" height="15.5"/><rect x="1560.2" y="335.0" width="5.2" height="12.0"/><rect x="1560.2" y="347.0" width="5.2" height="12.8"/><rect x="1566.0" y="326.9" width="5.2" height="20.1"/><rect x="1566.0" y="347.0" width="5.2" height="8.1"/><rect x="1571.6" y="319.6" width="5.2" height="27.4"/><rect x="1571.6" y="347.0" width="5.2" height="14.0"/><rect x="1577.1" y="322.4" width="5.2" height="24.6"/><rect x="1588.8" y="327.9" width="5.2" height="19.1"/><rect x="1588.8" y="347.0" width="5.2" height="16.9"/><rect x="1593.9" y="328.8" width="5.2" height="16.1"/><rect x="1593.9" y="344.9" width="5.2" height="11.0"/><rect x="1599.0" y="328.1" width="5.2" height="11.7"/><rect x="1599.0" y="339.8" width="5.2" height="14.8"/><rect x="1604.7" y="319.5" width="5.2" height="14.6"/><rect x="1604.7" y="334.1" width="5.2" height="29.7"/><rect x="1610.1" y="332.3" width="5.2" height="13.7"/><rect x="1615.2" y="309.6" width="5.2" height="25.7"/><rect x="1626.2" y="347.0" width="5.2" height="15.2"/><rect x="1631.9" y="335.8" width="5.2" height="11.2"/><rect x="1637.3" y="347.0" width="5.2" height="29.7"/><rect x="1642.4" y="317.1" width="5.2" height="29.9"/><rect x="1642.4" y="347.0" width="5.2" height="25.9"/><rect x="1647.8" y="317.7" width="5.2" height="29.3"/><rect x="1647.8" y="347.0" width="5.2" height="23.7"/><rect x="1653.6" y="323.4" width="5.2" height="23.6"/><rect x="1658.8" y="347.0" width="5.2" height="24.6"/><rect x="1663.9" y="312.6" width="5.2" height="34.4"/><rect x="1663.9" y="347.0" width="5.2" height="11.3"/><rect x="1669.2" y="311.5" width="5.2" height="35.5"/><rect x="1669.2" y="347.0" width="5.2" height="22.0"/><rect x="1674.5" y="335.3" width="5.2" height="11.7"/><rect x="1690.6" y="316.7" width="5.2" height="24.5"/><rect x="1696.3" y="290.5" width="5.2" height="25.5"/><rect x="1696.3" y="316.0" width="5.2" height="20.7"/><rect x="1702.2" y="283.5" width="5.2" height="32.5"/><rect x="1707.5" y="286.9" width="5.2" height="29.1"/><rect x="1707.5" y="316.0" width="5.2" height="11.7"/><rect x="1713.1" y="316.0" width="5.2" height="13.2"/><rect x="1718.9" y="305.5" width="5.2" height="10.5"/><rect x="1724.2" y="309.4" width="5.2" height="27.8"/><rect x="1724.2" y="337.2" width="5.2" height="24.2"/><rect x="1729.7" y="311.8" width="5.2" height="35.2"/><rect x="1735.4" y="326.4" width="5.2" height="20.6"/><rect x="1735.4" y="347.0" width="5.2" height="16.0"/><rect x="1746.2" y="326.3" width="5.2" height="20.7"/><rect x="1746.2" y="347.0" width="5.2" height="30.0"/><rect x="1751.3" y="331.8" width="5.2" height="15.2"/><rect x="1751.3" y="347.0" width="5.2" height="26.5"/><rect x="1757.0" y="328.8" width="5.2" height="18.2"/><rect x="1762.1" y="320.6" width="5.2" height="26.4"/><rect x="1767.5" y="320.6" width="5.2" height="26.4"/><rect x="1767.5" y="347.0" width="5.2" height="12.9"/><rect x="1773.1" y="323.7" width="5.2" height="15.8"/><rect x="1773.1" y="339.5" width="5.2" height="28.4"/><rect x="1778.6" y="321.5" width="5.2" height="22.1"/><rect x="1784.4" y="321.0" width="5.2" height="11.4"/><rect x="1789.7" y="300.7" width="5.2" height="20.3"/><rect x="1795.4" y="301.5" width="5.2" height="19.5"/><rect x="1795.4" y="321.0" width="5.2" height="13.2"/><rect x="1800.8" y="306.4" width="5.2" height="14.6"/><rect x="1806.1" y="330.1" width="5.2" height="17.3"/><rect x="1811.8" y="327.3" width="5.2" height="17.7"/><rect x="1811.8" y="345.0" width="5.2" height="22.3"/><rect x="1823.0" y="322.1" width="5.2" height="22.9"/><rect x="1828.7" y="322.7" width="5.2" height="22.3"/><rect x="1834.1" y="333.9" width="5.2" height="11.1"/><rect x="1839.7" y="345.0" width="5.2" height="9.9"/><rect x="1845.4" y="317.0" width="5.2" height="28.0"/><rect x="1845.4" y="345.0" width="5.2" height="20.8"/><rect x="1851.3" y="309.3" width="5.2" height="35.7"/><rect x="1851.3" y="345.0" width="5.2" height="13.8"/><rect x="1856.6" y="324.1" width="5.2" height="17.9"/><rect x="1862.3" y="298.6" width="5.2" height="22.1"/><rect x="1862.3" y="320.7" width="5.2" height="20.8"/><rect x="1867.7" y="295.1" width="5.2" height="23.9"/><rect x="1867.7" y="319.0" width="5.2" height="20.4"/><rect x="1873.1" y="297.2" width="5.2" height="21.8"/><rect x="1878.6" y="319.0" width="5.2" height="21.1"/></g><path d="M3,356.0 L6,356.0 L9,356.0 L12,356.0 L15,356.0 L18,355.9 L21,355.9 L24,355.9 L27,355.9 L30,355.9 L33,355.9 L36,355.9 L39,355.9 L42,355.9 L45,355.9 L48,355.8 L51,355.8 L54,355.8 L57,355.8 L60,355.8 L63,355.8 L66,355.8 L69,355.8 L72,355.8 L75,355.8 L78,355.7 L81,355.7 L84,355.7 L87,355.7 L90,355.7 L93,355.7 L96,355.7 L99,355.7 L102,355.7 L105,355.7 L108,355.6 L111,355.6 L114,355.6 L117,355.6 L120,355.6 L123,355.6 L126,355.6 L129,355.6 L132,355.6 L135,355.6 L138,355.5 L141,355.5 L144,355.5 L147,355.5 L150,355.5 L153,355.5 L156,355.5 L159,355.5 L162,355.5 L165,355.5 L168,355.4 L171,355.4 L174,355.4 L177,355.4 L180,355.4 L183,355.4 L186,355.4 L189,355.4 L192,355.4 L195,355.4 L198,355.3 L201,355.3 L204,355.3 L207,355.3 L210,355.3 L213,355.3 L216,355.3 L219,355.3 L222,355.3 L225,355.3 L228,355.2 L231,355.2 L234,355.2 L237,355.2 L240,355.2 L243,355.2 L246,355.2 L249,355.2 L252,355.2 L255,355.2 L258,355.1 L261,355.1 L264,355.1 L267,355.1 L270,355.1 L273,355.1 L276,355.1 L279,355.1 L282,355.1 L285,355.1 L288,355.0 L291,355.0 L294,355.0 L297,355.0 L300,355.0 L303,355.0 L306,355.0 L309,355.0 L312,355.0 L315,355.0 L318,355.0 L321,354.9 L324,354.9 L327,354.9 L330,354.9 L333,354.9 L336,354.9 L339,354.9 L342,354.9 L345,354.9 L348,354.9 L351,354.9 L354,354.9 L357,354.9 L360,354.9 L363,354.8 L366,354.8 L369,354.8 L372,354.8 L375,354.8 L378,354.8 L381,354.8 L384,354.8 L387,354.8 L390,354.8 L393,354.8 L396,354.8 L399,354.8 L402,354.7 L405,354.7 L408,354.7 L411,354.7 L414,354.7 L417,354.7 L420,354.7 L423,354.7 L426,354.7 L429,354.7 L432,354.7 L435,354.7 L438,354.7 L441,354.6 L444,354.6 L447,354.6 L450,354.6 L453,354.6 L456,354.6 L459,354.6 L462,354.6 L465,354.6 L468,354.6 L471,354.6 L474,354.6 L477,354.6 L480,354.6 L483,354.5 L486,354.5 L489,354.5 L492,354.5 L495,354.5 L498,354.5 L501,354.5 L504,354.5 L507,354.5 L510,354.5 L513,354.5 L516,354.5 L519,354.5 L522,354.4 L525,354.4 L528,354.4 L531,354.4 L534,354.4 L537,354.4 L540,354.4 L543,354.4 L546,354.4 L549,354.4 L552,354.4 L555,354.4 L558,354.4 L561,354.3 L564,354.3 L567,354.3 L570,354.3 L573,354.3 L576,354.3 L579,354.3 L582,354.3 L585,354.3 L588,354.3 L591,354.3 L594,354.3 L597,354.3 L600,354.2 L603,354.2 L606,354.2 L609,354.2 L612,354.2 L615,354.2 L618,354.2 L621,354.2 L624,354.2 L627,354.2 L630,354.2 L633,354.2 L636,354.2 L639,354.2 L642,354.1 L645,354.1 L648,354.1 L651,354.1 L654,354.1 L657,354.1 L660,354.1 L663,354.1 L666,354.1 L669,354.1 L672,354.1 L675,354.1 L678,354.1 L681,354.0 L684,354.0 L687,354.0 L690,354.0 L693,354.0 L696,354.0 L699,354.0 L702,353.8 L705,353.5 L708,353.2 L711,352.9 L714,352.6 L717,352.3 L720,352.0 L723,349.2 L726,346.4 L729,343.5 L732,340.7 L735,337.9 L738,335.9 L741,335.6 L744,335.2 L747,334.9 L750,334.6 L753,334.2 L756,333.9 L759,333.6 L762,333.2 L765,332.9 L768,332.6 L771,332.2 L774,331.9 L777,331.6 L780,331.2 L783,330.9 L786,330.6 L789,330.2 L792,329.9 L795,329.6 L798,329.2 L801,329.0 L804,328.9 L807,328.9 L810,328.8 L813,328.8 L816,328.8 L819,328.7 L822,328.7 L825,328.6 L828,328.6 L831,328.5 L834,328.5 L837,328.4 L840,328.4 L843,328.3 L846,328.3 L849,328.3 L852,328.2 L855,328.2 L858,328.1 L861,328.1 L864,328.0 L867,330.4 L870,337.7 L873,345.0 L876,345.0 L879,345.0 L882,345.0 L885,345.0 L888,345.0 L891,345.0 L894,345.0 L897,345.0 L900,345.0 L903,345.0 L906,345.0 L909,345.0 L912,345.0 L915,345.0 L918,345.0 L921,345.0 L924,345.0 L927,345.0 L930,345.0 L933,345.0 L936,345.0 L939,345.0 L942,345.0 L945,345.0 L948,345.0 L951,345.0 L954,345.0 L957,345.0 L960,345.0 L963,345.0 L966,345.0 L969,345.0 L972,345.0 L975,345.0 L978,345.0 L981,345.0 L984,345.0 L987,345.0 L990,345.0 L993,345.0 L996,345.0 L999,345.0 L1002,345.0 L1005,345.0 L1008,343.9 L1011,340.5 L1014,337.1 L1017,333.8 L1020,330.4 L1023,327.0 L1026,327.0 L1029,327.0 L1032,327.0 L1035,327.0 L1038,327.0 L1041,327.0 L1044,327.0 L1047,327.0 L1050,327.0 L1053,327.0 L1056,327.0 L1059,327.0 L1062,327.0 L1065,327.0 L1068,327.0 L1071,327.0 L1074,327.0 L1077,327.0 L1080,327.0 L1083,327.0 L1086,327.0 L1089,332.7 L1092,341.2 L1095,344.0 L1098,344.0 L1101,343.9 L1104,343.9 L1107,343.9 L1110,343.8 L1113,343.8 L1116,343.8 L1119,343.8 L1122,343.7 L1125,343.7 L1128,343.7 L1131,343.7 L1134,343.6 L1137,343.6 L1140,343.6 L1143,343.5 L1146,343.5 L1149,343.5 L1152,343.5 L1155,343.4 L1158,343.4 L1161,343.4 L1164,343.4 L1167,343.3 L1170,343.3 L1173,343.3 L1176,343.2 L1179,343.2 L1182,343.2 L1185,343.2 L1188,343.1 L1191,343.1 L1194,343.1 L1197,343.1 L1200,343.0 L1203,343.0 L1206,337.4 L1209,331.9 L1212,326.3 L1215,320.7 L1218,317.0 L1221,317.0 L1224,317.0 L1227,317.0 L1230,317.0 L1233,317.0 L1236,317.0 L1239,317.0 L1242,317.0 L1245,317.0 L1248,317.0 L1251,317.0 L1254,317.0 L1257,317.0 L1260,317.0 L1263,319.1 L1266,325.4 L1269,331.7 L1272,338.0 L1275,338.0 L1278,338.0 L1281,338.0 L1284,338.0 L1287,338.0 L1290,338.0 L1293,338.0 L1296,338.0 L1299,338.0 L1302,338.0 L1305,338.0 L1308,338.0 L1311,338.0 L1314,338.0 L1317,338.0 L1320,338.0 L1323,338.0 L1326,338.0 L1329,338.0 L1332,338.0 L1335,338.0 L1338,338.0 L1341,338.0 L1344,338.0 L1347,338.0 L1350,336.2 L1353,330.7 L1356,325.3 L1359,319.8 L1362,318.0 L1365,318.0 L1368,318.0 L1371,318.0 L1374,318.0 L1377,318.0 L1380,318.0 L1383,318.0 L1386,318.0 L1389,318.0 L1392,318.0 L1395,318.0 L1398,318.0 L1401,328.5 L1404,339.0 L1407,339.0 L1410,339.0 L1413,339.0 L1416,339.0 L1419,339.0 L1422,339.0 L1425,339.0 L1428,339.0 L1431,339.0 L1434,339.0 L1437,339.0 L1440,339.0 L1443,339.0 L1446,339.0 L1449,339.0 L1452,339.0 L1455,339.0 L1458,339.0 L1461,339.0 L1464,339.0 L1467,339.0 L1470,339.0 L1473,339.0 L1476,331.8 L1479,324.5 L1482,317.2 L1485,310.0 L1488,310.0 L1491,310.0 L1494,310.0 L1497,310.0 L1500,310.0 L1503,310.0 L1506,310.0 L1509,310.0 L1512,310.0 L1515,310.0 L1518,310.0 L1521,310.0 L1524,320.4 L1527,336.0 L1530,336.0 L1533,336.0 L1536,336.0 L1539,336.0 L1542,336.0 L1545,336.0 L1548,336.0 L1551,336.0 L1554,336.0 L1557,336.0 L1560,336.0 L1563,336.0 L1566,336.0 L1569,336.0 L1572,336.0 L1575,336.0 L1578,336.0 L1581,336.0 L1584,336.0 L1587,336.0 L1590,336.0 L1593,336.0 L1596,333.0 L1599,330.0 L1602,327.0 L1605,324.0 L1608,321.0 L1611,321.2 L1614,322.9 L1617,324.7 L1620,326.4 L1623,330.6 L1626,336.0 L1629,336.0 L1632,336.0 L1635,336.0 L1638,336.0 L1641,336.0 L1644,336.0 L1647,336.0 L1650,336.0 L1653,336.0 L1656,336.0 L1659,336.0 L1662,336.0 L1665,336.0 L1668,336.0 L1671,336.0 L1674,336.0 L1677,336.0 L1680,336.0 L1683,336.0 L1686,325.7 L1689,315.3 L1692,305.0 L1695,305.0 L1698,305.0 L1701,305.0 L1704,305.0 L1707,305.0 L1710,305.0 L1713,305.0 L1716,305.0 L1719,305.0 L1722,305.0 L1725,323.6 L1728,336.0 L1731,336.0 L1734,336.0 L1737,336.0 L1740,336.0 L1743,336.0 L1746,336.0 L1749,336.0 L1752,336.0 L1755,336.0 L1758,336.0 L1761,336.0 L1764,336.0 L1767,336.0 L1770,336.0 L1773,332.8 L1776,323.0 L1779,313.2 L1782,310.0 L1785,310.0 L1788,310.0 L1791,310.0 L1794,310.0 L1797,310.0 L1800,310.0 L1803,310.0 L1806,314.0 L1809,326.0 L1812,334.0 L1815,334.0 L1818,334.0 L1821,334.0 L1824,334.0 L1827,334.0 L1830,334.0 L1833,334.0 L1836,334.0 L1839,334.0 L1842,334.0 L1845,334.0 L1848,334.0 L1851,334.0 L1854,334.0 L1857,334.0 L1860,322.9 L1863,311.7 L1866,308.0 L1869,308.0 L1872,308.0 L1875,308.0 L1878,308.0 L1881,308.0 L1884,308.0 L1884,330.0 L1881,330.0 L1878,330.0 L1875,330.0 L1872,330.0 L1869,330.0 L1866,330.0 L1863,333.7 L1860,344.9 L1857,356.0 L1854,356.0 L1851,356.0 L1848,356.0 L1845,356.0 L1842,356.0 L1839,356.0 L1836,356.0 L1833,356.0 L1830,356.0 L1827,356.0 L1824,356.0 L1821,356.0 L1818,356.0 L1815,356.0 L1812,356.0 L1809,348.0 L1806,336.0 L1803,332.0 L1800,332.0 L1797,332.0 L1794,332.0 L1791,332.0 L1788,332.0 L1785,332.0 L1782,332.0 L1779,335.2 L1776,345.0 L1773,354.8 L1770,358.0 L1767,358.0 L1764,358.0 L1761,358.0 L1758,358.0 L1755,358.0 L1752,358.0 L1749,358.0 L1746,358.0 L1743,358.0 L1740,358.0 L1737,358.0 L1734,358.0 L1731,358.0 L1728,358.0 L1725,345.6 L1722,327.0 L1719,327.0 L1716,327.0 L1713,327.0 L1710,327.0 L1707,327.0 L1704,327.0 L1701,327.0 L1698,327.0 L1695,327.0 L1692,327.0 L1689,337.3 L1686,347.7 L1683,358.0 L1680,358.0 L1677,358.0 L1674,358.0 L1671,358.0 L1668,358.0 L1665,358.0 L1662,358.0 L1659,358.0 L1656,358.0 L1653,358.0 L1650,358.0 L1647,358.0 L1644,358.0 L1641,358.0 L1638,358.0 L1635,358.0 L1632,358.0 L1629,358.0 L1626,358.0 L1623,352.6 L1620,348.4 L1617,346.7 L1614,344.9 L1611,343.2 L1608,343.0 L1605,346.0 L1602,349.0 L1599,352.0 L1596,355.0 L1593,358.0 L1590,358.0 L1587,358.0 L1584,358.0 L1581,358.0 L1578,358.0 L1575,358.0 L1572,358.0 L1569,358.0 L1566,358.0 L1563,358.0 L1560,358.0 L1557,358.0 L1554,358.0 L1551,358.0 L1548,358.0 L1545,358.0 L1542,358.0 L1539,358.0 L1536,358.0 L1533,358.0 L1530,358.0 L1527,358.0 L1524,342.4 L1521,332.0 L1518,332.0 L1515,332.0 L1512,332.0 L1509,332.0 L1506,332.0 L1503,332.0 L1500,332.0 L1497,332.0 L1494,332.0 L1491,332.0 L1488,332.0 L1485,332.0 L1482,339.2 L1479,346.5 L1476,353.8 L1473,361.0 L1470,361.0 L1467,361.0 L1464,361.0 L1461,361.0 L1458,361.0 L1455,361.0 L1452,361.0 L1449,361.0 L1446,361.0 L1443,361.0 L1440,361.0 L1437,361.0 L1434,361.0 L1431,361.0 L1428,361.0 L1425,361.0 L1422,361.0 L1419,361.0 L1416,361.0 L1413,361.0 L1410,361.0 L1407,361.0 L1404,361.0 L1401,350.5 L1398,340.0 L1395,340.0 L1392,340.0 L1389,340.0 L1386,340.0 L1383,340.0 L1380,340.0 L1377,340.0 L1374,340.0 L1371,340.0 L1368,340.0 L1365,340.0 L1362,340.0 L1359,341.8 L1356,347.3 L1353,352.7 L1350,358.2 L1347,360.0 L1344,360.0 L1341,360.0 L1338,360.0 L1335,360.0 L1332,360.0 L1329,360.0 L1326,360.0 L1323,360.0 L1320,360.0 L1317,360.0 L1314,360.0 L1311,360.0 L1308,360.0 L1305,360.0 L1302,360.0 L1299,360.0 L1296,360.0 L1293,360.0 L1290,360.0 L1287,360.0 L1284,360.0 L1281,360.0 L1278,360.0 L1275,360.0 L1272,360.0 L1269,353.7 L1266,347.4 L1263,341.1 L1260,339.0 L1257,339.0 L1254,339.0 L1251,339.0 L1248,339.0 L1245,339.0 L1242,339.0 L1239,339.0 L1236,339.0 L1233,339.0 L1230,339.0 L1227,339.0 L1224,339.0 L1221,339.0 L1218,339.0 L1215,342.7 L1212,348.3 L1209,353.9 L1206,359.4 L1203,365.0 L1200,365.0 L1197,365.1 L1194,365.1 L1191,365.1 L1188,365.1 L1185,365.2 L1182,365.2 L1179,365.2 L1176,365.2 L1173,365.3 L1170,365.3 L1167,365.3 L1164,365.4 L1161,365.4 L1158,365.4 L1155,365.4 L1152,365.5 L1149,365.5 L1146,365.5 L1143,365.5 L1140,365.6 L1137,365.6 L1134,365.6 L1131,365.7 L1128,365.7 L1125,365.7 L1122,365.7 L1119,365.8 L1116,365.8 L1113,365.8 L1110,365.8 L1107,365.9 L1104,365.9 L1101,365.9 L1098,366.0 L1095,366.0 L1092,363.2 L1089,354.7 L1086,349.0 L1083,349.0 L1080,349.0 L1077,349.0 L1074,349.0 L1071,349.0 L1068,349.0 L1065,349.0 L1062,349.0 L1059,349.0 L1056,349.0 L1053,349.0 L1050,349.0 L1047,349.0 L1044,349.0 L1041,349.0 L1038,349.0 L1035,349.0 L1032,349.0 L1029,349.0 L1026,349.0 L1023,349.0 L1020,352.4 L1017,355.8 L1014,359.1 L1011,362.5 L1008,365.9 L1005,367.0 L1002,367.0 L999,367.0 L996,367.0 L993,367.0 L990,367.0 L987,367.0 L984,367.0 L981,367.0 L978,367.0 L975,367.0 L972,367.0 L969,367.0 L966,367.0 L963,367.0 L960,367.0 L957,367.0 L954,367.0 L951,367.0 L948,367.0 L945,367.0 L942,367.0 L939,367.0 L936,367.0 L933,367.0 L930,367.0 L927,367.0 L924,367.0 L921,367.0 L918,367.0 L915,367.0 L912,367.0 L909,367.0 L906,367.0 L903,367.0 L900,367.0 L897,367.0 L894,367.0 L891,367.0 L888,367.0 L885,367.0 L882,367.0 L879,367.0 L876,367.0 L873,367.0 L870,359.7 L867,352.4 L864,350.0 L861,350.1 L858,350.1 L855,350.2 L852,350.2 L849,350.3 L846,350.3 L843,350.3 L840,350.4 L837,350.4 L834,350.5 L831,350.5 L828,350.6 L825,350.6 L822,350.7 L819,350.7 L816,350.8 L813,350.8 L810,350.8 L807,350.9 L804,350.9 L801,351.0 L798,351.2 L795,351.6 L792,351.9 L789,352.2 L786,352.6 L783,352.9 L780,353.2 L777,353.6 L774,353.9 L771,354.2 L768,354.6 L765,354.9 L762,355.2 L759,355.6 L756,355.9 L753,356.2 L750,356.6 L747,356.9 L744,357.2 L741,357.6 L738,357.9 L735,359.9 L732,362.7 L729,365.5 L726,368.4 L723,371.2 L720,374.0 L717,374.3 L714,374.6 L711,374.9 L708,375.2 L705,375.5 L702,375.8 L699,376.0 L696,376.0 L693,376.0 L690,376.0 L687,376.0 L684,376.0 L681,376.0 L678,376.1 L675,376.1 L672,376.1 L669,376.1 L666,376.1 L663,376.1 L660,376.1 L657,376.1 L654,376.1 L651,376.1 L648,376.1 L645,376.1 L642,376.1 L639,376.2 L636,376.2 L633,376.2 L630,376.2 L627,376.2 L624,376.2 L621,376.2 L618,376.2 L615,376.2 L612,376.2 L609,376.2 L606,376.2 L603,376.2 L600,376.2 L597,376.3 L594,376.3 L591,376.3 L588,376.3 L585,376.3 L582,376.3 L579,376.3 L576,376.3 L573,376.3 L570,376.3 L567,376.3 L564,376.3 L561,376.3 L558,376.4 L555,376.4 L552,376.4 L549,376.4 L546,376.4 L543,376.4 L540,376.4 L537,376.4 L534,376.4 L531,376.4 L528,376.4 L525,376.4 L522,376.4 L519,376.5 L516,376.5 L513,376.5 L510,376.5 L507,376.5 L504,376.5 L501,376.5 L498,376.5 L495,376.5 L492,376.5 L489,376.5 L486,376.5 L483,376.5 L480,376.6 L477,376.6 L474,376.6 L471,376.6 L468,376.6 L465,376.6 L462,376.6 L459,376.6 L456,376.6 L453,376.6 L450,376.6 L447,376.6 L444,376.6 L441,376.6 L438,376.7 L435,376.7 L432,376.7 L429,376.7 L426,376.7 L423,376.7 L420,376.7 L417,376.7 L414,376.7 L411,376.7 L408,376.7 L405,376.7 L402,376.7 L399,376.8 L396,376.8 L393,376.8 L390,376.8 L387,376.8 L384,376.8 L381,376.8 L378,376.8 L375,376.8 L372,376.8 L369,376.8 L366,376.8 L363,376.8 L360,376.9 L357,376.9 L354,376.9 L351,376.9 L348,376.9 L345,376.9 L342,376.9 L339,376.9 L336,376.9 L333,376.9 L330,376.9 L327,376.9 L324,376.9 L321,376.9 L318,377.0 L315,377.0 L312,377.0 L309,377.0 L306,377.0 L303,377.0 L300,377.0 L297,377.0 L294,377.0 L291,377.0 L288,377.0 L285,377.1 L282,377.1 L279,377.1 L276,377.1 L273,377.1 L270,377.1 L267,377.1 L264,377.1 L261,377.1 L258,377.1 L255,377.2 L252,377.2 L249,377.2 L246,377.2 L243,377.2 L240,377.2 L237,377.2 L234,377.2 L231,377.2 L228,377.2 L225,377.3 L222,377.3 L219,377.3 L216,377.3 L213,377.3 L210,377.3 L207,377.3 L204,377.3 L201,377.3 L198,377.3 L195,377.4 L192,377.4 L189,377.4 L186,377.4 L183,377.4 L180,377.4 L177,377.4 L174,377.4 L171,377.4 L168,377.4 L165,377.5 L162,377.5 L159,377.5 L156,377.5 L153,377.5 L150,377.5 L147,377.5 L144,377.5 L141,377.5 L138,377.5 L135,377.6 L132,377.6 L129,377.6 L126,377.6 L123,377.6 L120,377.6 L117,377.6 L114,377.6 L111,377.6 L108,377.6 L105,377.7 L102,377.7 L99,377.7 L96,377.7 L93,377.7 L90,377.7 L87,377.7 L84,377.7 L81,377.7 L78,377.7 L75,377.8 L72,377.8 L69,377.8 L66,377.8 L63,377.8 L60,377.8 L57,377.8 L54,377.8 L51,377.8 L48,377.8 L45,377.9 L42,377.9 L39,377.9 L36,377.9 L33,377.9 L30,377.9 L27,377.9 L24,377.9 L21,377.9 L18,377.9 L15,378.0 L12,378.0 L9,378.0 L6,378.0 L3,378.0 Z" fill="#88cc00" opacity="0.55" filter="url(#glow)"/><g fill="#8cca00"><rect x="4.5" y="296.2" width="2.6" height="72.7"/><rect x="9.9" y="328.8" width="2.6" height="40.2"/><rect x="15.5" y="330.1" width="2.6" height="38.9"/><rect x="20.8" y="308.3" width="2.6" height="60.6"/><rect x="26.2" y="303.0" width="2.6" height="65.9"/><rect x="32.0" y="270.8" width="2.6" height="98.1"/><rect x="37.1" y="291.2" width="2.6" height="77.7"/><rect x="42.9" y="289.1" width="2.6" height="79.7"/><rect x="48.2" y="333.9" width="2.6" height="35.0"/><rect x="53.4" y="275.7" width="2.6" height="93.1"/><rect x="59.2" y="311.6" width="2.6" height="57.2"/><rect x="64.7" y="337.8" width="2.6" height="30.9"/><rect x="70.2" y="331.2" width="2.6" height="37.5"/><rect x="75.6" y="297.0" width="2.6" height="71.7"/><rect x="80.7" y="315.0" width="2.6" height="53.8"/><rect x="86.1" y="256.0" width="2.6" height="112.7"/><rect x="91.9" y="277.5" width="2.6" height="91.2"/><rect x="97.7" y="312.5" width="2.6" height="56.2"/><rect x="103.4" y="270.3" width="2.6" height="98.4"/><rect x="108.6" y="289.8" width="2.6" height="78.8"/><rect x="114.4" y="322.4" width="2.6" height="46.2"/><rect x="119.9" y="327.4" width="2.6" height="41.2"/><rect x="125.4" y="308.1" width="2.6" height="60.5"/><rect x="131.1" y="328.3" width="2.6" height="40.3"/><rect x="136.7" y="325.8" width="2.6" height="42.7"/><rect x="142.1" y="317.0" width="2.6" height="51.6"/><rect x="147.3" y="304.2" width="2.6" height="64.4"/><rect x="152.9" y="335.1" width="2.6" height="33.4"/><rect x="158.4" y="294.4" width="2.6" height="74.1"/><rect x="163.9" y="262.4" width="2.6" height="106.0"/><rect x="169.4" y="266.3" width="2.6" height="102.1"/><rect x="175.2" y="329.7" width="2.6" height="38.7"/><rect x="181.0" y="288.7" width="2.6" height="79.7"/><rect x="186.2" y="300.6" width="2.6" height="67.8"/><rect x="191.5" y="332.3" width="2.6" height="36.1"/><rect x="197.0" y="291.7" width="2.6" height="76.7"/><rect x="202.3" y="268.8" width="2.6" height="99.6"/><rect x="207.5" y="318.2" width="2.6" height="50.2"/><rect x="212.6" y="310.2" width="2.6" height="58.1"/><rect x="217.8" y="324.5" width="2.6" height="43.8"/><rect x="223.1" y="321.5" width="2.6" height="46.8"/><rect x="228.3" y="298.7" width="2.6" height="69.6"/><rect x="233.6" y="283.2" width="2.6" height="85.0"/><rect x="238.9" y="280.0" width="2.6" height="88.2"/><rect x="244.2" y="267.5" width="2.6" height="100.7"/><rect x="249.3" y="297.0" width="2.6" height="71.2"/><rect x="254.4" y="332.7" width="2.6" height="35.4"/><rect x="260.1" y="311.1" width="2.6" height="57.0"/><rect x="265.9" y="267.9" width="2.6" height="100.3"/><rect x="271.6" y="275.1" width="2.6" height="93.0"/><rect x="277.4" y="284.3" width="2.6" height="83.8"/><rect x="282.9" y="327.9" width="2.6" height="40.2"/><rect x="288.2" y="289.1" width="2.6" height="79.0"/><rect x="293.8" y="333.0" width="2.6" height="35.1"/><rect x="299.4" y="309.6" width="2.6" height="58.4"/><rect x="304.7" y="329.4" width="2.6" height="38.6"/><rect x="310.0" y="294.2" width="2.6" height="73.8"/><rect x="315.5" y="313.8" width="2.6" height="54.1"/><rect x="320.8" y="311.4" width="2.6" height="56.5"/><rect x="326.0" y="259.3" width="2.6" height="108.6"/><rect x="331.4" y="329.9" width="2.6" height="38.1"/><rect x="336.9" y="262.6" width="2.6" height="105.3"/><rect x="342.5" y="285.7" width="2.6" height="82.2"/><rect x="347.7" y="312.3" width="2.6" height="55.5"/><rect x="353.1" y="321.0" width="2.6" height="46.8"/><rect x="358.6" y="329.2" width="2.6" height="38.7"/><rect x="364.3" y="294.3" width="2.6" height="73.5"/><rect x="369.5" y="264.0" width="2.6" height="103.9"/><rect x="375.2" y="334.8" width="2.6" height="33.0"/><rect x="381.1" y="250.1" width="2.6" height="117.7"/><rect x="386.9" y="271.7" width="2.6" height="96.1"/><rect x="392.6" y="318.5" width="2.6" height="49.2"/><rect x="398.0" y="332.2" width="2.6" height="35.6"/><rect x="403.8" y="317.7" width="2.6" height="50.0"/><rect x="409.2" y="258.9" width="2.6" height="108.8"/><rect x="414.5" y="291.3" width="2.6" height="76.4"/><rect x="420.2" y="288.8" width="2.6" height="78.9"/><rect x="425.4" y="266.1" width="2.6" height="101.6"/><rect x="431.2" y="251.3" width="2.6" height="116.4"/><rect x="436.3" y="306.9" width="2.6" height="60.7"/><rect x="441.5" y="310.5" width="2.6" height="57.1"/><rect x="447.4" y="268.6" width="2.6" height="99.0"/><rect x="452.5" y="302.1" width="2.6" height="65.6"/><rect x="458.4" y="284.0" width="2.6" height="83.6"/><rect x="464.0" y="321.4" width="2.6" height="46.2"/><rect x="469.4" y="315.8" width="2.6" height="51.8"/><rect x="475.0" y="309.0" width="2.6" height="58.6"/><rect x="480.1" y="264.0" width="2.6" height="103.6"/><rect x="485.8" y="306.3" width="2.6" height="61.3"/><rect x="491.0" y="294.7" width="2.6" height="72.8"/><rect x="496.8" y="306.6" width="2.6" height="60.9"/><rect x="502.7" y="299.0" width="2.6" height="68.5"/><rect x="508.6" y="301.0" width="2.6" height="66.5"/><rect x="513.8" y="317.1" width="2.6" height="50.4"/><rect x="519.0" y="310.2" width="2.6" height="57.3"/><rect x="524.2" y="287.0" width="2.6" height="80.4"/><rect x="530.1" y="308.1" width="2.6" height="59.3"/><rect x="535.7" y="280.3" width="2.6" height="87.1"/><rect x="540.9" y="266.7" width="2.6" height="100.7"/><rect x="546.4" y="306.0" width="2.6" height="61.4"/><rect x="552.2" y="279.2" width="2.6" height="88.2"/><rect x="557.5" y="270.3" width="2.6" height="97.0"/><rect x="562.8" y="330.3" width="2.6" height="37.1"/><rect x="568.4" y="309.3" width="2.6" height="58.0"/><rect x="574.0" y="288.1" width="2.6" height="79.2"/><rect x="579.4" y="319.9" width="2.6" height="47.4"/><rect x="584.9" y="325.8" width="2.6" height="41.4"/><rect x="590.6" y="276.4" width="2.6" height="90.9"/><rect x="596.4" y="310.5" width="2.6" height="56.8"/><rect x="602.3" y="306.4" width="2.6" height="60.8"/><rect x="607.9" y="290.8" width="2.6" height="76.4"/><rect x="613.5" y="327.6" width="2.6" height="39.6"/><rect x="619.0" y="305.2" width="2.6" height="62.0"/><rect x="624.9" y="315.7" width="2.6" height="51.5"/><rect x="630.7" y="299.8" width="2.6" height="67.4"/><rect x="636.3" y="302.3" width="2.6" height="64.8"/><rect x="641.5" y="281.6" width="2.6" height="85.5"/><rect x="647.1" y="283.8" width="2.6" height="83.3"/><rect x="652.2" y="309.5" width="2.6" height="57.6"/><rect x="658.0" y="320.8" width="2.6" height="46.3"/><rect x="663.1" y="305.0" width="2.6" height="62.1"/><rect x="668.5" y="279.9" width="2.6" height="87.2"/><rect x="674.0" y="272.8" width="2.6" height="94.3"/><rect x="679.8" y="284.2" width="2.6" height="82.8"/><rect x="685.5" y="301.4" width="2.6" height="65.6"/><rect x="691.0" y="301.8" width="2.6" height="65.2"/><rect x="696.4" y="338.3" width="2.6" height="28.7"/><rect x="701.8" y="273.8" width="2.6" height="93.0"/><rect x="707.0" y="337.6" width="2.6" height="28.7"/><rect x="712.3" y="315.8" width="2.6" height="50.0"/><rect x="718.0" y="277.9" width="2.6" height="87.3"/><rect x="723.7" y="294.3" width="2.6" height="67.2"/><rect x="729.0" y="321.1" width="2.6" height="35.5"/><rect x="734.4" y="248.3" width="2.6" height="103.2"/><rect x="739.5" y="248.5" width="2.6" height="100.2"/><rect x="744.7" y="302.8" width="2.6" height="45.4"/><rect x="750.0" y="254.1" width="2.6" height="93.4"/><rect x="755.6" y="283.8" width="2.6" height="63.2"/><rect x="760.9" y="262.1" width="2.6" height="84.3"/><rect x="766.1" y="244.6" width="2.6" height="101.2"/><rect x="772.0" y="274.9" width="2.6" height="70.3"/><rect x="777.4" y="269.9" width="2.6" height="74.6"/><rect x="783.3" y="252.4" width="2.6" height="91.5"/><rect x="788.9" y="258.5" width="2.6" height="84.7"/><rect x="794.6" y="281.2" width="2.6" height="61.4"/><rect x="799.8" y="276.3" width="2.6" height="65.7"/><rect x="805.7" y="272.6" width="2.6" height="69.3"/><rect x="811.2" y="288.5" width="2.6" height="53.3"/><rect x="816.6" y="298.9" width="2.6" height="42.8"/><rect x="821.9" y="262.7" width="2.6" height="79.0"/><rect x="827.6" y="267.4" width="2.6" height="74.2"/><rect x="833.4" y="271.1" width="2.6" height="70.4"/><rect x="838.7" y="310.5" width="2.6" height="30.9"/><rect x="844.3" y="242.6" width="2.6" height="98.7"/><rect x="850.0" y="255.7" width="2.6" height="85.5"/><rect x="855.3" y="308.2" width="2.6" height="33.0"/><rect x="860.5" y="248.3" width="2.6" height="92.8"/><rect x="865.8" y="252.7" width="2.6" height="88.3"/><rect x="871.3" y="324.8" width="2.6" height="29.0"/><rect x="876.8" y="274.4" width="2.6" height="83.6"/><rect x="882.4" y="304.6" width="2.6" height="53.4"/><rect x="888.2" y="305.7" width="2.6" height="52.3"/><rect x="893.5" y="296.2" width="2.6" height="61.8"/><rect x="898.8" y="281.8" width="2.6" height="76.2"/><rect x="904.5" y="293.0" width="2.6" height="65.0"/><rect x="910.1" y="267.6" width="2.6" height="90.4"/><rect x="915.4" y="282.8" width="2.6" height="75.2"/><rect x="921.0" y="275.2" width="2.6" height="82.8"/><rect x="926.6" y="300.5" width="2.6" height="57.5"/><rect x="932.1" y="312.0" width="2.6" height="46.0"/><rect x="937.3" y="332.4" width="2.6" height="25.6"/><rect x="942.5" y="324.2" width="2.6" height="33.8"/><rect x="948.3" y="296.6" width="2.6" height="61.4"/><rect x="954.0" y="314.9" width="2.6" height="43.1"/><rect x="959.5" y="313.0" width="2.6" height="45.0"/><rect x="965.1" y="282.6" width="2.6" height="75.4"/><rect x="970.8" y="294.3" width="2.6" height="63.7"/><rect x="976.2" y="271.9" width="2.6" height="86.1"/><rect x="981.9" y="285.7" width="2.6" height="72.3"/><rect x="987.7" y="303.8" width="2.6" height="54.2"/><rect x="993.5" y="285.8" width="2.6" height="72.2"/><rect x="999.0" y="297.1" width="2.6" height="60.9"/><rect x="1004.5" y="317.3" width="2.6" height="40.7"/><rect x="1010.0" y="265.1" width="2.6" height="89.6"/><rect x="1015.4" y="314.7" width="2.6" height="33.8"/><rect x="1020.8" y="241.2" width="2.6" height="101.3"/><rect x="1026.0" y="267.4" width="2.6" height="72.6"/><rect x="1031.8" y="258.1" width="2.6" height="81.9"/><rect x="1037.7" y="293.0" width="2.6" height="47.0"/><rect x="1042.9" y="255.1" width="2.6" height="84.9"/><rect x="1048.5" y="248.7" width="2.6" height="91.3"/><rect x="1053.8" y="304.7" width="2.6" height="35.3"/><rect x="1059.6" y="278.8" width="2.6" height="61.2"/><rect x="1065.0" y="266.6" width="2.6" height="73.4"/><rect x="1070.6" y="282.9" width="2.6" height="57.1"/><rect x="1076.1" y="294.9" width="2.6" height="45.1"/><rect x="1081.3" y="290.1" width="2.6" height="49.9"/><rect x="1087.2" y="272.2" width="2.6" height="68.3"/><rect x="1092.6" y="281.8" width="2.6" height="74.0"/><rect x="1097.8" y="278.7" width="2.6" height="78.2"/><rect x="1103.0" y="273.0" width="2.6" height="83.9"/><rect x="1108.2" y="277.6" width="2.6" height="79.3"/><rect x="1113.5" y="301.2" width="2.6" height="55.6"/><rect x="1119.0" y="272.4" width="2.6" height="84.3"/><rect x="1124.2" y="290.8" width="2.6" height="65.9"/><rect x="1129.4" y="315.9" width="2.6" height="40.8"/><rect x="1135.0" y="282.9" width="2.6" height="73.7"/><rect x="1140.5" y="306.6" width="2.6" height="50.0"/><rect x="1146.2" y="262.0" width="2.6" height="94.5"/><rect x="1152.1" y="314.1" width="2.6" height="42.4"/><rect x="1157.9" y="322.1" width="2.6" height="34.3"/><rect x="1163.5" y="323.2" width="2.6" height="33.2"/><rect x="1169.2" y="273.9" width="2.6" height="82.4"/><rect x="1174.5" y="281.9" width="2.6" height="74.4"/><rect x="1180.2" y="264.9" width="2.6" height="91.3"/><rect x="1185.4" y="310.2" width="2.6" height="46.0"/><rect x="1190.9" y="287.1" width="2.6" height="69.0"/><rect x="1196.2" y="291.9" width="2.6" height="64.2"/><rect x="1201.7" y="303.7" width="2.6" height="52.3"/><rect x="1207.1" y="307.5" width="2.6" height="40.8"/><rect x="1212.7" y="233.0" width="2.6" height="105.0"/><rect x="1218.4" y="241.9" width="2.6" height="88.1"/><rect x="1224.0" y="228.1" width="2.6" height="101.9"/><rect x="1229.3" y="268.9" width="2.6" height="61.1"/><rect x="1234.5" y="261.4" width="2.6" height="68.6"/><rect x="1240.3" y="270.6" width="2.6" height="59.4"/><rect x="1246.0" y="252.4" width="2.6" height="77.6"/><rect x="1251.9" y="290.2" width="2.6" height="39.8"/><rect x="1257.8" y="253.1" width="2.6" height="76.9"/><rect x="1263.6" y="294.2" width="2.6" height="39.2"/><rect x="1269.5" y="303.4" width="2.6" height="42.3"/><rect x="1275.0" y="275.3" width="2.6" height="75.7"/><rect x="1280.1" y="281.0" width="2.6" height="70.0"/><rect x="1285.7" y="296.1" width="2.6" height="54.9"/><rect x="1290.9" y="279.7" width="2.6" height="71.3"/><rect x="1296.3" y="318.3" width="2.6" height="32.7"/><rect x="1302.1" y="290.0" width="2.6" height="61.0"/><rect x="1307.5" y="300.9" width="2.6" height="50.1"/><rect x="1313.1" y="271.9" width="2.6" height="79.1"/><rect x="1319.0" y="315.5" width="2.6" height="35.5"/><rect x="1324.4" y="308.5" width="2.6" height="42.5"/><rect x="1329.6" y="312.8" width="2.6" height="38.2"/><rect x="1335.2" y="306.4" width="2.6" height="44.6"/><rect x="1340.5" y="299.6" width="2.6" height="51.4"/><rect x="1346.1" y="296.6" width="2.6" height="54.4"/><rect x="1351.9" y="303.2" width="2.6" height="42.6"/><rect x="1357.1" y="278.7" width="2.6" height="57.5"/><rect x="1362.9" y="298.1" width="2.6" height="32.9"/><rect x="1368.6" y="268.6" width="2.6" height="62.4"/><rect x="1374.3" y="302.8" width="2.6" height="28.2"/><rect x="1379.5" y="245.1" width="2.6" height="85.9"/><rect x="1385.2" y="245.8" width="2.6" height="85.2"/><rect x="1390.5" y="290.3" width="2.6" height="40.7"/><rect x="1396.4" y="240.5" width="2.6" height="90.5"/><rect x="1401.8" y="305.5" width="2.6" height="38.7"/><rect x="1407.7" y="306.4" width="2.6" height="45.6"/><rect x="1413.3" y="309.8" width="2.6" height="42.2"/><rect x="1419.1" y="300.7" width="2.6" height="51.3"/><rect x="1424.7" y="264.4" width="2.6" height="87.6"/><rect x="1430.0" y="316.1" width="2.6" height="35.9"/><rect x="1435.9" y="283.3" width="2.6" height="68.7"/><rect x="1441.4" y="293.9" width="2.6" height="58.1"/><rect x="1446.5" y="300.3" width="2.6" height="51.7"/><rect x="1451.8" y="269.4" width="2.6" height="82.6"/><rect x="1457.3" y="304.4" width="2.6" height="47.6"/><rect x="1463.1" y="290.7" width="2.6" height="61.3"/><rect x="1468.4" y="313.8" width="2.6" height="38.2"/><rect x="1474.1" y="303.7" width="2.6" height="45.6"/><rect x="1479.9" y="296.5" width="2.6" height="38.8"/><rect x="1485.4" y="232.1" width="2.6" height="90.9"/><rect x="1491.0" y="218.8" width="2.6" height="104.2"/><rect x="1496.1" y="255.0" width="2.6" height="68.0"/><rect x="1501.6" y="280.9" width="2.6" height="42.1"/><rect x="1507.2" y="249.9" width="2.6" height="73.1"/><rect x="1512.6" y="254.4" width="2.6" height="68.6"/><rect x="1518.3" y="273.8" width="2.6" height="49.2"/><rect x="1523.4" y="298.8" width="2.6" height="31.5"/><rect x="1529.0" y="255.7" width="2.6" height="93.3"/><rect x="1534.6" y="298.2" width="2.6" height="50.8"/><rect x="1539.8" y="308.8" width="2.6" height="40.2"/><rect x="1545.4" y="325.1" width="2.6" height="23.9"/><rect x="1550.8" y="277.2" width="2.6" height="71.8"/><rect x="1556.0" y="258.0" width="2.6" height="91.0"/><rect x="1561.4" y="268.3" width="2.6" height="80.7"/><rect x="1567.2" y="311.4" width="2.6" height="37.6"/><rect x="1572.8" y="294.2" width="2.6" height="54.8"/><rect x="1578.3" y="282.2" width="2.6" height="66.8"/><rect x="1584.1" y="273.9" width="2.6" height="75.1"/><rect x="1590.0" y="270.8" width="2.6" height="78.2"/><rect x="1595.1" y="244.5" width="2.6" height="102.3"/><rect x="1600.2" y="272.6" width="2.6" height="69.2"/><rect x="1605.9" y="271.3" width="2.6" height="64.8"/><rect x="1611.3" y="237.9" width="2.6" height="96.5"/><rect x="1616.4" y="254.2" width="2.6" height="83.1"/><rect x="1622.0" y="234.0" width="2.6" height="107.8"/><rect x="1627.4" y="289.0" width="2.6" height="60.0"/><rect x="1633.1" y="276.9" width="2.6" height="72.1"/><rect x="1638.5" y="302.0" width="2.6" height="47.0"/><rect x="1643.6" y="295.8" width="2.6" height="53.2"/><rect x="1649.0" y="282.3" width="2.6" height="66.7"/><rect x="1654.8" y="272.6" width="2.6" height="76.4"/><rect x="1660.0" y="296.8" width="2.6" height="52.2"/><rect x="1665.1" y="327.0" width="2.6" height="22.0"/><rect x="1670.4" y="305.6" width="2.6" height="43.4"/><rect x="1675.7" y="299.0" width="2.6" height="50.0"/><rect x="1681.2" y="289.2" width="2.6" height="59.8"/><rect x="1686.4" y="269.5" width="2.6" height="67.6"/><rect x="1691.8" y="246.0" width="2.6" height="72.7"/><rect x="1697.5" y="249.9" width="2.6" height="68.1"/><rect x="1703.4" y="251.8" width="2.6" height="66.2"/><rect x="1708.7" y="248.7" width="2.6" height="69.3"/><rect x="1714.3" y="246.2" width="2.6" height="71.8"/><rect x="1720.1" y="253.0" width="2.6" height="65.0"/><rect x="1725.4" y="276.6" width="2.6" height="62.7"/><rect x="1730.9" y="299.1" width="2.6" height="49.9"/><rect x="1736.6" y="298.8" width="2.6" height="50.2"/><rect x="1741.7" y="271.4" width="2.6" height="77.6"/><rect x="1747.4" y="285.9" width="2.6" height="63.1"/><rect x="1752.5" y="291.0" width="2.6" height="58.0"/><rect x="1758.2" y="270.9" width="2.6" height="78.1"/><rect x="1763.3" y="270.9" width="2.6" height="78.1"/><rect x="1768.7" y="276.9" width="2.6" height="72.1"/><rect x="1774.3" y="259.0" width="2.6" height="82.5"/><rect x="1779.8" y="226.9" width="2.6" height="96.6"/><rect x="1785.6" y="283.1" width="2.6" height="39.9"/><rect x="1790.9" y="256.9" width="2.6" height="66.1"/><rect x="1796.6" y="228.9" width="2.6" height="94.1"/><rect x="1802.0" y="288.8" width="2.6" height="34.2"/><rect x="1807.3" y="234.5" width="2.6" height="97.6"/><rect x="1813.0" y="311.7" width="2.6" height="35.3"/><rect x="1818.8" y="277.4" width="2.6" height="69.6"/><rect x="1824.2" y="312.3" width="2.6" height="34.7"/><rect x="1829.9" y="299.5" width="2.6" height="47.5"/><rect x="1835.3" y="258.3" width="2.6" height="88.7"/><rect x="1840.9" y="305.5" width="2.6" height="41.5"/><rect x="1846.6" y="276.1" width="2.6" height="70.9"/><rect x="1852.5" y="302.6" width="2.6" height="44.4"/><rect x="1857.8" y="264.8" width="2.6" height="79.2"/><rect x="1863.5" y="275.6" width="2.6" height="47.1"/><rect x="1868.9" y="224.0" width="2.6" height="97.0"/><rect x="1874.3" y="261.5" width="2.6" height="59.5"/><rect x="1879.8" y="260.6" width="2.6" height="60.4"/><rect x="4.5" y="367.0" width="2.9" height="60.7"/><rect x="9.9" y="367.0" width="2.9" height="57.8"/><rect x="15.5" y="367.0" width="2.9" height="63.8"/><rect x="20.8" y="366.9" width="2.9" height="52.4"/><rect x="26.2" y="366.9" width="2.9" height="71.7"/><rect x="32.0" y="366.9" width="2.9" height="57.7"/><rect x="37.1" y="366.9" width="2.9" height="64.7"/><rect x="42.9" y="366.9" width="2.9" height="64.9"/><rect x="48.2" y="366.8" width="2.9" height="54.6"/><rect x="53.4" y="366.8" width="2.9" height="57.9"/><rect x="59.2" y="366.8" width="2.9" height="86.7"/><rect x="64.7" y="366.8" width="2.9" height="60.2"/><rect x="70.2" y="366.8" width="2.9" height="80.8"/><rect x="75.6" y="366.8" width="2.9" height="46.6"/><rect x="80.7" y="366.7" width="2.9" height="68.9"/><rect x="86.1" y="366.7" width="2.9" height="64.2"/><rect x="91.9" y="366.7" width="2.9" height="54.4"/><rect x="97.7" y="366.7" width="2.9" height="68.2"/><rect x="103.4" y="366.7" width="2.9" height="77.8"/><rect x="108.6" y="366.6" width="2.9" height="69.8"/><rect x="114.4" y="366.6" width="2.9" height="52.0"/><rect x="119.9" y="366.6" width="2.9" height="80.6"/><rect x="125.4" y="366.6" width="2.9" height="85.0"/><rect x="131.1" y="366.6" width="2.9" height="81.1"/><rect x="136.7" y="366.5" width="2.9" height="70.7"/><rect x="142.1" y="366.5" width="2.9" height="54.7"/><rect x="147.3" y="366.5" width="2.9" height="78.0"/><rect x="152.9" y="366.5" width="2.9" height="65.0"/><rect x="158.4" y="366.5" width="2.9" height="54.7"/><rect x="163.9" y="366.5" width="2.9" height="65.9"/><rect x="169.4" y="366.4" width="2.9" height="77.7"/><rect x="175.2" y="366.4" width="2.9" height="49.1"/><rect x="181.0" y="366.4" width="2.9" height="53.5"/><rect x="186.2" y="366.4" width="2.9" height="80.0"/><rect x="191.5" y="366.4" width="2.9" height="60.9"/><rect x="197.0" y="366.3" width="2.9" height="55.1"/><rect x="202.3" y="366.3" width="2.9" height="58.1"/><rect x="207.5" y="366.3" width="2.9" height="67.1"/><rect x="212.6" y="366.3" width="2.9" height="74.4"/><rect x="217.8" y="366.3" width="2.9" height="52.7"/><rect x="223.1" y="366.3" width="2.9" height="60.0"/><rect x="228.3" y="366.2" width="2.9" height="61.3"/><rect x="233.6" y="366.2" width="2.9" height="54.3"/><rect x="238.9" y="366.2" width="2.9" height="69.9"/><rect x="244.2" y="366.2" width="2.9" height="67.2"/><rect x="249.3" y="366.2" width="2.9" height="55.4"/><rect x="254.4" y="366.2" width="2.9" height="60.9"/><rect x="260.1" y="366.1" width="2.9" height="54.0"/><rect x="265.9" y="366.1" width="2.9" height="54.3"/><rect x="271.6" y="366.1" width="2.9" height="52.7"/><rect x="277.4" y="366.1" width="2.9" height="59.9"/><rect x="282.9" y="366.1" width="2.9" height="53.4"/><rect x="288.2" y="366.0" width="2.9" height="55.3"/><rect x="293.8" y="366.0" width="2.9" height="54.5"/><rect x="299.4" y="366.0" width="2.9" height="56.0"/><rect x="304.7" y="366.0" width="2.9" height="64.7"/><rect x="310.0" y="366.0" width="2.9" height="52.5"/><rect x="315.5" y="366.0" width="2.9" height="60.7"/><rect x="320.8" y="365.9" width="2.9" height="45.7"/><rect x="326.0" y="365.9" width="2.9" height="49.8"/><rect x="331.4" y="365.9" width="2.9" height="53.4"/><rect x="336.9" y="365.9" width="2.9" height="69.0"/><rect x="342.5" y="365.9" width="2.9" height="61.0"/><rect x="347.7" y="365.9" width="2.9" height="70.9"/><rect x="353.1" y="365.9" width="2.9" height="59.4"/><rect x="358.6" y="365.9" width="2.9" height="42.1"/><rect x="364.3" y="365.8" width="2.9" height="48.5"/><rect x="369.5" y="365.8" width="2.9" height="44.9"/><rect x="375.2" y="365.8" width="2.9" height="66.8"/><rect x="381.1" y="365.8" width="2.9" height="40.9"/><rect x="386.9" y="365.8" width="2.9" height="53.9"/><rect x="392.6" y="365.8" width="2.9" height="59.7"/><rect x="398.0" y="365.8" width="2.9" height="49.4"/><rect x="403.8" y="365.7" width="2.9" height="63.5"/><rect x="409.2" y="365.7" width="2.9" height="38.0"/><rect x="414.5" y="365.7" width="2.9" height="59.6"/><rect x="420.2" y="365.7" width="2.9" height="41.7"/><rect x="425.4" y="365.7" width="2.9" height="37.2"/><rect x="431.2" y="365.7" width="2.9" height="41.8"/><rect x="436.3" y="365.7" width="2.9" height="41.3"/><rect x="441.5" y="365.6" width="2.9" height="62.9"/><rect x="447.4" y="365.6" width="2.9" height="43.4"/><rect x="452.5" y="365.6" width="2.9" height="53.4"/><rect x="458.4" y="365.6" width="2.9" height="42.9"/><rect x="464.0" y="365.6" width="2.9" height="60.6"/><rect x="469.4" y="365.6" width="2.9" height="59.1"/><rect x="475.0" y="365.6" width="2.9" height="41.9"/><rect x="480.1" y="365.5" width="2.9" height="66.0"/><rect x="485.8" y="365.5" width="2.9" height="54.7"/><rect x="491.0" y="365.5" width="2.9" height="53.2"/><rect x="496.8" y="365.5" width="2.9" height="54.6"/><rect x="502.7" y="365.5" width="2.9" height="63.2"/><rect x="508.6" y="365.5" width="2.9" height="51.6"/><rect x="513.8" y="365.5" width="2.9" height="39.2"/><rect x="519.0" y="365.5" width="2.9" height="41.3"/><rect x="524.2" y="365.4" width="2.9" height="37.1"/><rect x="530.1" y="365.4" width="2.9" height="56.2"/><rect x="535.7" y="365.4" width="2.9" height="55.2"/><rect x="540.9" y="365.4" width="2.9" height="46.8"/><rect x="546.4" y="365.4" width="2.9" height="63.5"/><rect x="552.2" y="365.4" width="2.9" height="56.5"/><rect x="557.5" y="365.4" width="2.9" height="38.9"/><rect x="562.8" y="365.3" width="2.9" height="55.1"/><rect x="568.4" y="365.3" width="2.9" height="47.4"/><rect x="574.0" y="365.3" width="2.9" height="50.2"/><rect x="579.4" y="365.3" width="2.9" height="46.1"/><rect x="584.9" y="365.3" width="2.9" height="43.6"/><rect x="590.6" y="365.3" width="2.9" height="58.5"/><rect x="596.4" y="365.3" width="2.9" height="52.8"/><rect x="602.3" y="365.2" width="2.9" height="35.7"/><rect x="607.9" y="365.2" width="2.9" height="44.4"/><rect x="613.5" y="365.2" width="2.9" height="56.4"/><rect x="619.0" y="365.2" width="2.9" height="49.5"/><rect x="624.9" y="365.2" width="2.9" height="32.9"/><rect x="630.7" y="365.2" width="2.9" height="32.4"/><rect x="636.3" y="365.2" width="2.9" height="39.0"/><rect x="641.5" y="365.1" width="2.9" height="41.2"/><rect x="647.1" y="365.1" width="2.9" height="53.6"/><rect x="652.2" y="365.1" width="2.9" height="43.2"/><rect x="658.0" y="365.1" width="2.9" height="50.8"/><rect x="663.1" y="365.1" width="2.9" height="48.9"/><rect x="668.5" y="365.1" width="2.9" height="44.1"/><rect x="674.0" y="365.1" width="2.9" height="52.7"/><rect x="679.8" y="365.1" width="2.9" height="40.0"/><rect x="685.5" y="365.0" width="2.9" height="56.0"/><rect x="691.0" y="365.0" width="2.9" height="51.6"/><rect x="696.4" y="365.0" width="2.9" height="52.8"/><rect x="701.8" y="364.8" width="2.9" height="50.7"/><rect x="707.0" y="364.3" width="2.9" height="59.5"/><rect x="712.3" y="363.8" width="2.9" height="41.2"/><rect x="718.0" y="363.2" width="2.9" height="57.0"/><rect x="723.7" y="359.5" width="2.9" height="56.2"/><rect x="729.0" y="354.5" width="2.9" height="54.0"/><rect x="734.4" y="349.5" width="2.9" height="47.3"/><rect x="739.5" y="346.7" width="2.9" height="56.8"/><rect x="744.7" y="346.1" width="2.9" height="67.6"/><rect x="750.0" y="345.6" width="2.9" height="68.0"/><rect x="755.6" y="344.9" width="2.9" height="66.6"/><rect x="760.9" y="344.3" width="2.9" height="54.6"/><rect x="766.1" y="343.8" width="2.9" height="52.0"/><rect x="772.0" y="343.1" width="2.9" height="61.3"/><rect x="777.4" y="342.5" width="2.9" height="62.8"/><rect x="783.3" y="341.9" width="2.9" height="53.3"/><rect x="788.9" y="341.2" width="2.9" height="56.6"/><rect x="794.6" y="340.6" width="2.9" height="66.3"/><rect x="799.8" y="340.0" width="2.9" height="78.0"/><rect x="805.7" y="339.9" width="2.9" height="71.0"/><rect x="811.2" y="339.8" width="2.9" height="62.9"/><rect x="816.6" y="339.7" width="2.9" height="54.7"/><rect x="821.9" y="339.7" width="2.9" height="68.6"/><rect x="827.6" y="339.6" width="2.9" height="73.4"/><rect x="833.4" y="339.5" width="2.9" height="68.0"/><rect x="838.7" y="339.4" width="2.9" height="60.0"/><rect x="844.3" y="339.3" width="2.9" height="54.3"/><rect x="850.0" y="339.2" width="2.9" height="43.7"/><rect x="855.3" y="339.2" width="2.9" height="63.0"/><rect x="860.5" y="339.1" width="2.9" height="79.2"/><rect x="865.8" y="339.0" width="2.9" height="75.0"/><rect x="871.3" y="351.9" width="2.9" height="55.6"/><rect x="876.8" y="356.0" width="2.9" height="49.6"/><rect x="882.4" y="356.0" width="2.9" height="53.4"/><rect x="888.2" y="356.0" width="2.9" height="60.1"/><rect x="893.5" y="356.0" width="2.9" height="51.2"/><rect x="898.8" y="356.0" width="2.9" height="51.9"/><rect x="904.5" y="356.0" width="2.9" height="41.9"/><rect x="910.1" y="356.0" width="2.9" height="57.4"/><rect x="915.4" y="356.0" width="2.9" height="40.9"/><rect x="921.0" y="356.0" width="2.9" height="47.5"/><rect x="926.6" y="356.0" width="2.9" height="38.8"/><rect x="932.1" y="356.0" width="2.9" height="71.6"/><rect x="937.3" y="356.0" width="2.9" height="45.1"/><rect x="942.5" y="356.0" width="2.9" height="47.3"/><rect x="948.3" y="356.0" width="2.9" height="54.4"/><rect x="954.0" y="356.0" width="2.9" height="45.2"/><rect x="959.5" y="356.0" width="2.9" height="56.7"/><rect x="965.1" y="356.0" width="2.9" height="66.1"/><rect x="970.8" y="356.0" width="2.9" height="67.9"/><rect x="976.2" y="356.0" width="2.9" height="50.6"/><rect x="981.9" y="356.0" width="2.9" height="66.6"/><rect x="987.7" y="356.0" width="2.9" height="49.2"/><rect x="993.5" y="356.0" width="2.9" height="45.0"/><rect x="999.0" y="356.0" width="2.9" height="51.6"/><rect x="1004.5" y="356.0" width="2.9" height="41.6"/><rect x="1010.0" y="352.6" width="2.9" height="43.2"/><rect x="1015.4" y="346.6" width="2.9" height="76.5"/><rect x="1020.8" y="340.5" width="2.9" height="60.8"/><rect x="1026.0" y="338.0" width="2.9" height="84.3"/><rect x="1031.8" y="338.0" width="2.9" height="76.1"/><rect x="1037.7" y="338.0" width="2.9" height="73.6"/><rect x="1042.9" y="338.0" width="2.9" height="55.4"/><rect x="1048.5" y="338.0" width="2.9" height="53.0"/><rect x="1053.8" y="338.0" width="2.9" height="56.7"/><rect x="1059.6" y="338.0" width="2.9" height="69.5"/><rect x="1065.0" y="338.0" width="2.9" height="53.7"/><rect x="1070.6" y="338.0" width="2.9" height="51.5"/><rect x="1076.1" y="338.0" width="2.9" height="54.7"/><rect x="1081.3" y="338.0" width="2.9" height="54.7"/><rect x="1087.2" y="338.5" width="2.9" height="62.3"/><rect x="1092.6" y="353.7" width="2.9" height="44.6"/><rect x="1097.8" y="355.0" width="2.9" height="38.1"/><rect x="1103.0" y="354.9" width="2.9" height="44.7"/><rect x="1108.2" y="354.9" width="2.9" height="55.1"/><rect x="1113.5" y="354.8" width="2.9" height="44.3"/><rect x="1119.0" y="354.8" width="2.9" height="50.3"/><rect x="1124.2" y="354.7" width="2.9" height="51.8"/><rect x="1129.4" y="354.7" width="2.9" height="42.0"/><rect x="1135.0" y="354.6" width="2.9" height="54.4"/><rect x="1140.5" y="354.6" width="2.9" height="48.6"/><rect x="1146.2" y="354.5" width="2.9" height="47.3"/><rect x="1152.1" y="354.5" width="2.9" height="47.0"/><rect x="1157.9" y="354.4" width="2.9" height="61.6"/><rect x="1163.5" y="354.4" width="2.9" height="49.6"/><rect x="1169.2" y="354.3" width="2.9" height="64.5"/><rect x="1174.5" y="354.3" width="2.9" height="47.7"/><rect x="1180.2" y="354.2" width="2.9" height="44.5"/><rect x="1185.4" y="354.2" width="2.9" height="37.6"/><rect x="1190.9" y="354.1" width="2.9" height="50.4"/><rect x="1196.2" y="354.1" width="2.9" height="41.1"/><rect x="1201.7" y="354.0" width="2.9" height="43.9"/><rect x="1207.1" y="346.4" width="2.9" height="62.6"/><rect x="1212.7" y="335.9" width="2.9" height="68.7"/><rect x="1218.4" y="328.0" width="2.9" height="66.8"/><rect x="1224.0" y="328.0" width="2.9" height="64.1"/><rect x="1229.3" y="328.0" width="2.9" height="72.7"/><rect x="1234.5" y="328.0" width="2.9" height="54.2"/><rect x="1240.3" y="328.0" width="2.9" height="55.4"/><rect x="1246.0" y="328.0" width="2.9" height="72.7"/><rect x="1251.9" y="328.0" width="2.9" height="61.5"/><rect x="1257.8" y="328.0" width="2.9" height="68.2"/><rect x="1263.6" y="331.5" width="2.9" height="76.2"/><rect x="1269.5" y="343.7" width="2.9" height="56.5"/><rect x="1275.0" y="349.0" width="2.9" height="45.3"/><rect x="1280.1" y="349.0" width="2.9" height="46.7"/><rect x="1285.7" y="349.0" width="2.9" height="40.3"/><rect x="1290.9" y="349.0" width="2.9" height="44.4"/><rect x="1296.3" y="349.0" width="2.9" height="59.7"/><rect x="1302.1" y="349.0" width="2.9" height="47.5"/><rect x="1307.5" y="349.0" width="2.9" height="65.8"/><rect x="1313.1" y="349.0" width="2.9" height="59.9"/><rect x="1319.0" y="349.0" width="2.9" height="50.1"/><rect x="1324.4" y="349.0" width="2.9" height="38.4"/><rect x="1329.6" y="349.0" width="2.9" height="60.4"/><rect x="1335.2" y="349.0" width="2.9" height="58.0"/><rect x="1340.5" y="349.0" width="2.9" height="52.2"/><rect x="1346.1" y="349.0" width="2.9" height="56.2"/><rect x="1351.9" y="343.8" width="2.9" height="52.9"/><rect x="1357.1" y="334.2" width="2.9" height="72.9"/><rect x="1362.9" y="329.0" width="2.9" height="73.6"/><rect x="1368.6" y="329.0" width="2.9" height="57.1"/><rect x="1374.3" y="329.0" width="2.9" height="55.4"/><rect x="1379.5" y="329.0" width="2.9" height="60.0"/><rect x="1385.2" y="329.0" width="2.9" height="52.5"/><rect x="1390.5" y="329.0" width="2.9" height="64.9"/><rect x="1396.4" y="329.0" width="2.9" height="80.0"/><rect x="1401.8" y="342.3" width="2.9" height="46.9"/><rect x="1407.7" y="350.0" width="2.9" height="43.5"/><rect x="1413.3" y="350.0" width="2.9" height="50.6"/><rect x="1419.1" y="350.0" width="2.9" height="56.7"/><rect x="1424.7" y="350.0" width="2.9" height="42.5"/><rect x="1430.0" y="350.0" width="2.9" height="49.0"/><rect x="1435.9" y="350.0" width="2.9" height="59.0"/><rect x="1441.4" y="350.0" width="2.9" height="64.4"/><rect x="1446.5" y="350.0" width="2.9" height="51.3"/><rect x="1451.8" y="350.0" width="2.9" height="42.2"/><rect x="1457.3" y="350.0" width="2.9" height="47.9"/><rect x="1463.1" y="350.0" width="2.9" height="43.1"/><rect x="1468.4" y="350.0" width="2.9" height="45.1"/><rect x="1474.1" y="347.2" width="2.9" height="55.8"/><rect x="1479.9" y="333.3" width="2.9" height="63.7"/><rect x="1485.4" y="321.0" width="2.9" height="95.4"/><rect x="1491.0" y="321.0" width="2.9" height="75.3"/><rect x="1496.1" y="321.0" width="2.9" height="69.0"/><rect x="1501.6" y="321.0" width="2.9" height="78.4"/><rect x="1507.2" y="321.0" width="2.9" height="68.6"/><rect x="1512.6" y="321.0" width="2.9" height="78.7"/><rect x="1518.3" y="321.0" width="2.9" height="79.9"/><rect x="1523.4" y="328.3" width="2.9" height="57.8"/><rect x="1529.0" y="347.0" width="2.9" height="48.7"/><rect x="1534.6" y="347.0" width="2.9" height="68.5"/><rect x="1539.8" y="347.0" width="2.9" height="63.5"/><rect x="1545.4" y="347.0" width="2.9" height="48.4"/><rect x="1550.8" y="347.0" width="2.9" height="64.0"/><rect x="1556.0" y="347.0" width="2.9" height="40.6"/><rect x="1561.4" y="347.0" width="2.9" height="61.6"/><rect x="1567.2" y="347.0" width="2.9" height="51.0"/><rect x="1572.8" y="347.0" width="2.9" height="46.2"/><rect x="1578.3" y="347.0" width="2.9" height="72.9"/><rect x="1584.1" y="347.0" width="2.9" height="46.3"/><rect x="1590.0" y="347.0" width="2.9" height="56.5"/><rect x="1595.1" y="344.9" width="2.9" height="51.1"/><rect x="1600.2" y="339.8" width="2.9" height="53.4"/><rect x="1605.9" y="334.1" width="2.9" height="70.3"/><rect x="1611.3" y="332.3" width="2.9" height="56.5"/><rect x="1616.4" y="335.3" width="2.9" height="54.4"/><rect x="1622.0" y="339.8" width="2.9" height="47.3"/><rect x="1627.4" y="347.0" width="2.9" height="61.7"/><rect x="1633.1" y="347.0" width="2.9" height="40.4"/><rect x="1638.5" y="347.0" width="2.9" height="40.5"/><rect x="1643.6" y="347.0" width="2.9" height="40.5"/><rect x="1649.0" y="347.0" width="2.9" height="57.9"/><rect x="1654.8" y="347.0" width="2.9" height="57.6"/><rect x="1660.0" y="347.0" width="2.9" height="52.8"/><rect x="1665.1" y="347.0" width="2.9" height="54.7"/><rect x="1670.4" y="347.0" width="2.9" height="54.1"/><rect x="1675.7" y="347.0" width="2.9" height="47.0"/><rect x="1681.2" y="347.0" width="2.9" height="62.7"/><rect x="1686.4" y="335.1" width="2.9" height="49.1"/><rect x="1691.8" y="316.7" width="2.9" height="79.2"/><rect x="1697.5" y="316.0" width="2.9" height="66.8"/><rect x="1703.4" y="316.0" width="2.9" height="91.7"/><rect x="1708.7" y="316.0" width="2.9" height="78.4"/><rect x="1714.3" y="316.0" width="2.9" height="91.1"/><rect x="1720.1" y="316.0" width="2.9" height="66.7"/><rect x="1725.4" y="337.2" width="2.9" height="52.8"/><rect x="1730.9" y="347.0" width="2.9" height="53.9"/><rect x="1736.6" y="347.0" width="2.9" height="37.5"/><rect x="1741.7" y="347.0" width="2.9" height="58.6"/><rect x="1747.4" y="347.0" width="2.9" height="55.5"/><rect x="1752.5" y="347.0" width="2.9" height="51.2"/><rect x="1758.2" y="347.0" width="2.9" height="54.6"/><rect x="1763.3" y="347.0" width="2.9" height="67.1"/><rect x="1768.7" y="347.0" width="2.9" height="59.1"/><rect x="1774.3" y="339.5" width="2.9" height="61.5"/><rect x="1779.8" y="321.5" width="2.9" height="55.3"/><rect x="1785.6" y="321.0" width="2.9" height="79.1"/><rect x="1790.9" y="321.0" width="2.9" height="68.7"/><rect x="1796.6" y="321.0" width="2.9" height="61.5"/><rect x="1802.0" y="321.0" width="2.9" height="67.6"/><rect x="1807.3" y="330.1" width="2.9" height="62.0"/><rect x="1813.0" y="345.0" width="2.9" height="50.2"/><rect x="1818.8" y="345.0" width="2.9" height="50.6"/><rect x="1824.2" y="345.0" width="2.9" height="54.0"/><rect x="1829.9" y="345.0" width="2.9" height="62.6"/><rect x="1835.3" y="345.0" width="2.9" height="62.9"/><rect x="1840.9" y="345.0" width="2.9" height="40.5"/><rect x="1846.6" y="345.0" width="2.9" height="56.3"/><rect x="1852.5" y="345.0" width="2.9" height="52.7"/><rect x="1857.8" y="342.0" width="2.9" height="54.1"/><rect x="1863.5" y="320.7" width="2.9" height="64.2"/><rect x="1868.9" y="319.0" width="2.9" height="56.4"/><rect x="1874.3" y="319.0" width="2.9" height="85.4"/><rect x="1879.8" y="319.0" width="2.9" height="57.4"/></g><path d="M3,359.0 L6,359.0 L9,359.0 L12,359.0 L15,359.0 L18,358.9 L21,358.9 L24,358.9 L27,358.9 L30,358.9 L33,358.9 L36,358.9 L39,358.9 L42,358.9 L45,358.9 L48,358.8 L51,358.8 L54,358.8 L57,358.8 L60,358.8 L63,358.8 L66,358.8 L69,358.8 L72,358.8 L75,358.8 L78,358.7 L81,358.7 L84,358.7 L87,358.7 L90,358.7 L93,358.7 L96,358.7 L99,358.7 L102,358.7 L105,358.7 L108,358.6 L111,358.6 L114,358.6 L117,358.6 L120,358.6 L123,358.6 L126,358.6 L129,358.6 L132,358.6 L135,358.6 L138,358.5 L141,358.5 L144,358.5 L147,358.5 L150,358.5 L153,358.5 L156,358.5 L159,358.5 L162,358.5 L165,358.5 L168,358.4 L171,358.4 L174,358.4 L177,358.4 L180,358.4 L183,358.4 L186,358.4 L189,358.4 L192,358.4 L195,358.4 L198,358.3 L201,358.3 L204,358.3 L207,358.3 L210,358.3 L213,358.3 L216,358.3 L219,358.3 L222,358.3 L225,358.3 L228,358.2 L231,358.2 L234,358.2 L237,358.2 L240,358.2 L243,358.2 L246,358.2 L249,358.2 L252,358.2 L255,358.2 L258,358.1 L261,358.1 L264,358.1 L267,358.1 L270,358.1 L273,358.1 L276,358.1 L279,358.1 L282,358.1 L285,358.1 L288,358.0 L291,358.0 L294,358.0 L297,358.0 L300,358.0 L303,358.0 L306,358.0 L309,358.0 L312,358.0 L315,358.0 L318,358.0 L321,357.9 L324,357.9 L327,357.9 L330,357.9 L333,357.9 L336,357.9 L339,357.9 L342,357.9 L345,357.9 L348,357.9 L351,357.9 L354,357.9 L357,357.9 L360,357.9 L363,357.8 L366,357.8 L369,357.8 L372,357.8 L375,357.8 L378,357.8 L381,357.8 L384,357.8 L387,357.8 L390,357.8 L393,357.8 L396,357.8 L399,357.8 L402,357.7 L405,357.7 L408,357.7 L411,357.7 L414,357.7 L417,357.7 L420,357.7 L423,357.7 L426,357.7 L429,357.7 L432,357.7 L435,357.7 L438,357.7 L441,357.6 L444,357.6 L447,357.6 L450,357.6 L453,357.6 L456,357.6 L459,357.6 L462,357.6 L465,357.6 L468,357.6 L471,357.6 L474,357.6 L477,357.6 L480,357.6 L483,357.5 L486,357.5 L489,357.5 L492,357.5 L495,357.5 L498,357.5 L501,357.5 L504,357.5 L507,357.5 L510,357.5 L513,357.5 L516,357.5 L519,357.5 L522,357.4 L525,357.4 L528,357.4 L531,357.4 L534,357.4 L537,357.4 L540,357.4 L543,357.4 L546,357.4 L549,357.4 L552,357.4 L555,357.4 L558,357.4 L561,357.3 L564,357.3 L567,357.3 L570,357.3 L573,357.3 L576,357.3 L579,357.3 L582,357.3 L585,357.3 L588,357.3 L591,357.3 L594,357.3 L597,357.3 L600,357.2 L603,357.2 L606,357.2 L609,357.2 L612,357.2 L615,357.2 L618,357.2 L621,357.2 L624,357.2 L627,357.2 L630,357.2 L633,357.2 L636,357.2 L639,357.2 L642,357.1 L645,357.1 L648,357.1 L651,357.1 L654,357.1 L657,357.1 L660,357.1 L663,357.1 L666,357.1 L669,357.1 L672,357.1 L675,357.1 L678,357.1 L681,357.0 L684,357.0 L687,357.0 L690,357.0 L693,357.0 L696,357.0 L699,357.0 L702,356.8 L705,356.5 L708,356.2 L711,355.9 L714,355.6 L717,355.3 L720,355.0 L723,352.2 L726,349.4 L729,346.5 L732,343.7 L735,340.9 L738,338.9 L741,338.6 L744,338.2 L747,337.9 L750,337.6 L753,337.2 L756,336.9 L759,336.6 L762,336.2 L765,335.9 L768,335.6 L771,335.2 L774,334.9 L777,334.6 L780,334.2 L783,333.9 L786,333.6 L789,333.2 L792,332.9 L795,332.6 L798,332.2 L801,332.0 L804,331.9 L807,331.9 L810,331.8 L813,331.8 L816,331.8 L819,331.7 L822,331.7 L825,331.6 L828,331.6 L831,331.5 L834,331.5 L837,331.4 L840,331.4 L843,331.3 L846,331.3 L849,331.3 L852,331.2 L855,331.2 L858,331.1 L861,331.1 L864,331.0 L867,333.4 L870,340.7 L873,348.0 L876,348.0 L879,348.0 L882,348.0 L885,348.0 L888,348.0 L891,348.0 L894,348.0 L897,348.0 L900,348.0 L903,348.0 L906,348.0 L909,348.0 L912,348.0 L915,348.0 L918,348.0 L921,348.0 L924,348.0 L927,348.0 L930,348.0 L933,348.0 L936,348.0 L939,348.0 L942,348.0 L945,348.0 L948,348.0 L951,348.0 L954,348.0 L957,348.0 L960,348.0 L963,348.0 L966,348.0 L969,348.0 L972,348.0 L975,348.0 L978,348.0 L981,348.0 L984,348.0 L987,348.0 L990,348.0 L993,348.0 L996,348.0 L999,348.0 L1002,348.0 L1005,348.0 L1008,346.9 L1011,343.5 L1014,340.1 L1017,336.8 L1020,333.4 L1023,330.0 L1026,330.0 L1029,330.0 L1032,330.0 L1035,330.0 L1038,330.0 L1041,330.0 L1044,330.0 L1047,330.0 L1050,330.0 L1053,330.0 L1056,330.0 L1059,330.0 L1062,330.0 L1065,330.0 L1068,330.0 L1071,330.0 L1074,330.0 L1077,330.0 L1080,330.0 L1083,330.0 L1086,330.0 L1089,335.7 L1092,344.2 L1095,347.0 L1098,347.0 L1101,346.9 L1104,346.9 L1107,346.9 L1110,346.8 L1113,346.8 L1116,346.8 L1119,346.8 L1122,346.7 L1125,346.7 L1128,346.7 L1131,346.7 L1134,346.6 L1137,346.6 L1140,346.6 L1143,346.5 L1146,346.5 L1149,346.5 L1152,346.5 L1155,346.4 L1158,346.4 L1161,346.4 L1164,346.4 L1167,346.3 L1170,346.3 L1173,346.3 L1176,346.2 L1179,346.2 L1182,346.2 L1185,346.2 L1188,346.1 L1191,346.1 L1194,346.1 L1197,346.1 L1200,346.0 L1203,346.0 L1206,340.4 L1209,334.9 L1212,329.3 L1215,323.7 L1218,320.0 L1221,320.0 L1224,320.0 L1227,320.0 L1230,320.0 L1233,320.0 L1236,320.0 L1239,320.0 L1242,320.0 L1245,320.0 L1248,320.0 L1251,320.0 L1254,320.0 L1257,320.0 L1260,320.0 L1263,322.1 L1266,328.4 L1269,334.7 L1272,341.0 L1275,341.0 L1278,341.0 L1281,341.0 L1284,341.0 L1287,341.0 L1290,341.0 L1293,341.0 L1296,341.0 L1299,341.0 L1302,341.0 L1305,341.0 L1308,341.0 L1311,341.0 L1314,341.0 L1317,341.0 L1320,341.0 L1323,341.0 L1326,341.0 L1329,341.0 L1332,341.0 L1335,341.0 L1338,341.0 L1341,341.0 L1344,341.0 L1347,341.0 L1350,339.2 L1353,333.7 L1356,328.3 L1359,322.8 L1362,321.0 L1365,321.0 L1368,321.0 L1371,321.0 L1374,321.0 L1377,321.0 L1380,321.0 L1383,321.0 L1386,321.0 L1389,321.0 L1392,321.0 L1395,321.0 L1398,321.0 L1401,331.5 L1404,342.0 L1407,342.0 L1410,342.0 L1413,342.0 L1416,342.0 L1419,342.0 L1422,342.0 L1425,342.0 L1428,342.0 L1431,342.0 L1434,342.0 L1437,342.0 L1440,342.0 L1443,342.0 L1446,342.0 L1449,342.0 L1452,342.0 L1455,342.0 L1458,342.0 L1461,342.0 L1464,342.0 L1467,342.0 L1470,342.0 L1473,342.0 L1476,334.8 L1479,327.5 L1482,320.2 L1485,313.0 L1488,313.0 L1491,313.0 L1494,313.0 L1497,313.0 L1500,313.0 L1503,313.0 L1506,313.0 L1509,313.0 L1512,313.0 L1515,313.0 L1518,313.0 L1521,313.0 L1524,323.4 L1527,339.0 L1530,339.0 L1533,339.0 L1536,339.0 L1539,339.0 L1542,339.0 L1545,339.0 L1548,339.0 L1551,339.0 L1554,339.0 L1557,339.0 L1560,339.0 L1563,339.0 L1566,339.0 L1569,339.0 L1572,339.0 L1575,339.0 L1578,339.0 L1581,339.0 L1584,339.0 L1587,339.0 L1590,339.0 L1593,339.0 L1596,336.0 L1599,333.0 L1602,330.0 L1605,327.0 L1608,324.0 L1611,324.2 L1614,325.9 L1617,327.7 L1620,329.4 L1623,333.6 L1626,339.0 L1629,339.0 L1632,339.0 L1635,339.0 L1638,339.0 L1641,339.0 L1644,339.0 L1647,339.0 L1650,339.0 L1653,339.0 L1656,339.0 L1659,339.0 L1662,339.0 L1665,339.0 L1668,339.0 L1671,339.0 L1674,339.0 L1677,339.0 L1680,339.0 L1683,339.0 L1686,328.7 L1689,318.3 L1692,308.0 L1695,308.0 L1698,308.0 L1701,308.0 L1704,308.0 L1707,308.0 L1710,308.0 L1713,308.0 L1716,308.0 L1719,308.0 L1722,308.0 L1725,326.6 L1728,339.0 L1731,339.0 L1734,339.0 L1737,339.0 L1740,339.0 L1743,339.0 L1746,339.0 L1749,339.0 L1752,339.0 L1755,339.0 L1758,339.0 L1761,339.0 L1764,339.0 L1767,339.0 L1770,339.0 L1773,335.8 L1776,326.0 L1779,316.2 L1782,313.0 L1785,313.0 L1788,313.0 L1791,313.0 L1794,313.0 L1797,313.0 L1800,313.0 L1803,313.0 L1806,317.0 L1809,329.0 L1812,337.0 L1815,337.0 L1818,337.0 L1821,337.0 L1824,337.0 L1827,337.0 L1830,337.0 L1833,337.0 L1836,337.0 L1839,337.0 L1842,337.0 L1845,337.0 L1848,337.0 L1851,337.0 L1854,337.0 L1857,337.0 L1860,325.9 L1863,314.7 L1866,311.0 L1869,311.0 L1872,311.0 L1875,311.0 L1878,311.0 L1881,311.0 L1884,311.0 L1884,327.0 L1881,327.0 L1878,327.0 L1875,327.0 L1872,327.0 L1869,327.0 L1866,327.0 L1863,330.7 L1860,341.9 L1857,353.0 L1854,353.0 L1851,353.0 L1848,353.0 L1845,353.0 L1842,353.0 L1839,353.0 L1836,353.0 L1833,353.0 L1830,353.0 L1827,353.0 L1824,353.0 L1821,353.0 L1818,353.0 L1815,353.0 L1812,353.0 L1809,345.0 L1806,333.0 L1803,329.0 L1800,329.0 L1797,329.0 L1794,329.0 L1791,329.0 L1788,329.0 L1785,329.0 L1782,329.0 L1779,332.2 L1776,342.0 L1773,351.8 L1770,355.0 L1767,355.0 L1764,355.0 L1761,355.0 L1758,355.0 L1755,355.0 L1752,355.0 L1749,355.0 L1746,355.0 L1743,355.0 L1740,355.0 L1737,355.0 L1734,355.0 L1731,355.0 L1728,355.0 L1725,342.6 L1722,324.0 L1719,324.0 L1716,324.0 L1713,324.0 L1710,324.0 L1707,324.0 L1704,324.0 L1701,324.0 L1698,324.0 L1695,324.0 L1692,324.0 L1689,334.3 L1686,344.7 L1683,355.0 L1680,355.0 L1677,355.0 L1674,355.0 L1671,355.0 L1668,355.0 L1665,355.0 L1662,355.0 L1659,355.0 L1656,355.0 L1653,355.0 L1650,355.0 L1647,355.0 L1644,355.0 L1641,355.0 L1638,355.0 L1635,355.0 L1632,355.0 L1629,355.0 L1626,355.0 L1623,349.6 L1620,345.4 L1617,343.7 L1614,341.9 L1611,340.2 L1608,340.0 L1605,343.0 L1602,346.0 L1599,349.0 L1596,352.0 L1593,355.0 L1590,355.0 L1587,355.0 L1584,355.0 L1581,355.0 L1578,355.0 L1575,355.0 L1572,355.0 L1569,355.0 L1566,355.0 L1563,355.0 L1560,355.0 L1557,355.0 L1554,355.0 L1551,355.0 L1548,355.0 L1545,355.0 L1542,355.0 L1539,355.0 L1536,355.0 L1533,355.0 L1530,355.0 L1527,355.0 L1524,339.4 L1521,329.0 L1518,329.0 L1515,329.0 L1512,329.0 L1509,329.0 L1506,329.0 L1503,329.0 L1500,329.0 L1497,329.0 L1494,329.0 L1491,329.0 L1488,329.0 L1485,329.0 L1482,336.2 L1479,343.5 L1476,350.8 L1473,358.0 L1470,358.0 L1467,358.0 L1464,358.0 L1461,358.0 L1458,358.0 L1455,358.0 L1452,358.0 L1449,358.0 L1446,358.0 L1443,358.0 L1440,358.0 L1437,358.0 L1434,358.0 L1431,358.0 L1428,358.0 L1425,358.0 L1422,358.0 L1419,358.0 L1416,358.0 L1413,358.0 L1410,358.0 L1407,358.0 L1404,358.0 L1401,347.5 L1398,337.0 L1395,337.0 L1392,337.0 L1389,337.0 L1386,337.0 L1383,337.0 L1380,337.0 L1377,337.0 L1374,337.0 L1371,337.0 L1368,337.0 L1365,337.0 L1362,337.0 L1359,338.8 L1356,344.3 L1353,349.7 L1350,355.2 L1347,357.0 L1344,357.0 L1341,357.0 L1338,357.0 L1335,357.0 L1332,357.0 L1329,357.0 L1326,357.0 L1323,357.0 L1320,357.0 L1317,357.0 L1314,357.0 L1311,357.0 L1308,357.0 L1305,357.0 L1302,357.0 L1299,357.0 L1296,357.0 L1293,357.0 L1290,357.0 L1287,357.0 L1284,357.0 L1281,357.0 L1278,357.0 L1275,357.0 L1272,357.0 L1269,350.7 L1266,344.4 L1263,338.1 L1260,336.0 L1257,336.0 L1254,336.0 L1251,336.0 L1248,336.0 L1245,336.0 L1242,336.0 L1239,336.0 L1236,336.0 L1233,336.0 L1230,336.0 L1227,336.0 L1224,336.0 L1221,336.0 L1218,336.0 L1215,339.7 L1212,345.3 L1209,350.9 L1206,356.4 L1203,362.0 L1200,362.0 L1197,362.1 L1194,362.1 L1191,362.1 L1188,362.1 L1185,362.2 L1182,362.2 L1179,362.2 L1176,362.2 L1173,362.3 L1170,362.3 L1167,362.3 L1164,362.4 L1161,362.4 L1158,362.4 L1155,362.4 L1152,362.5 L1149,362.5 L1146,362.5 L1143,362.5 L1140,362.6 L1137,362.6 L1134,362.6 L1131,362.7 L1128,362.7 L1125,362.7 L1122,362.7 L1119,362.8 L1116,362.8 L1113,362.8 L1110,362.8 L1107,362.9 L1104,362.9 L1101,362.9 L1098,363.0 L1095,363.0 L1092,360.2 L1089,351.7 L1086,346.0 L1083,346.0 L1080,346.0 L1077,346.0 L1074,346.0 L1071,346.0 L1068,346.0 L1065,346.0 L1062,346.0 L1059,346.0 L1056,346.0 L1053,346.0 L1050,346.0 L1047,346.0 L1044,346.0 L1041,346.0 L1038,346.0 L1035,346.0 L1032,346.0 L1029,346.0 L1026,346.0 L1023,346.0 L1020,349.4 L1017,352.8 L1014,356.1 L1011,359.5 L1008,362.9 L1005,364.0 L1002,364.0 L999,364.0 L996,364.0 L993,364.0 L990,364.0 L987,364.0 L984,364.0 L981,364.0 L978,364.0 L975,364.0 L972,364.0 L969,364.0 L966,364.0 L963,364.0 L960,364.0 L957,364.0 L954,364.0 L951,364.0 L948,364.0 L945,364.0 L942,364.0 L939,364.0 L936,364.0 L933,364.0 L930,364.0 L927,364.0 L924,364.0 L921,364.0 L918,364.0 L915,364.0 L912,364.0 L909,364.0 L906,364.0 L903,364.0 L900,364.0 L897,364.0 L894,364.0 L891,364.0 L888,364.0 L885,364.0 L882,364.0 L879,364.0 L876,364.0 L873,364.0 L870,356.7 L867,349.4 L864,347.0 L861,347.1 L858,347.1 L855,347.2 L852,347.2 L849,347.3 L846,347.3 L843,347.3 L840,347.4 L837,347.4 L834,347.5 L831,347.5 L828,347.6 L825,347.6 L822,347.7 L819,347.7 L816,347.8 L813,347.8 L810,347.8 L807,347.9 L804,347.9 L801,348.0 L798,348.2 L795,348.6 L792,348.9 L789,349.2 L786,349.6 L783,349.9 L780,350.2 L777,350.6 L774,350.9 L771,351.2 L768,351.6 L765,351.9 L762,352.2 L759,352.6 L756,352.9 L753,353.2 L750,353.6 L747,353.9 L744,354.2 L741,354.6 L738,354.9 L735,356.9 L732,359.7 L729,362.5 L726,365.4 L723,368.2 L720,371.0 L717,371.3 L714,371.6 L711,371.9 L708,372.2 L705,372.5 L702,372.8 L699,373.0 L696,373.0 L693,373.0 L690,373.0 L687,373.0 L684,373.0 L681,373.0 L678,373.1 L675,373.1 L672,373.1 L669,373.1 L666,373.1 L663,373.1 L660,373.1 L657,373.1 L654,373.1 L651,373.1 L648,373.1 L645,373.1 L642,373.1 L639,373.2 L636,373.2 L633,373.2 L630,373.2 L627,373.2 L624,373.2 L621,373.2 L618,373.2 L615,373.2 L612,373.2 L609,373.2 L606,373.2 L603,373.2 L600,373.2 L597,373.3 L594,373.3 L591,373.3 L588,373.3 L585,373.3 L582,373.3 L579,373.3 L576,373.3 L573,373.3 L570,373.3 L567,373.3 L564,373.3 L561,373.3 L558,373.4 L555,373.4 L552,373.4 L549,373.4 L546,373.4 L543,373.4 L540,373.4 L537,373.4 L534,373.4 L531,373.4 L528,373.4 L525,373.4 L522,373.4 L519,373.5 L516,373.5 L513,373.5 L510,373.5 L507,373.5 L504,373.5 L501,373.5 L498,373.5 L495,373.5 L492,373.5 L489,373.5 L486,373.5 L483,373.5 L480,373.6 L477,373.6 L474,373.6 L471,373.6 L468,373.6 L465,373.6 L462,373.6 L459,373.6 L456,373.6 L453,373.6 L450,373.6 L447,373.6 L444,373.6 L441,373.6 L438,373.7 L435,373.7 L432,373.7 L429,373.7 L426,373.7 L423,373.7 L420,373.7 L417,373.7 L414,373.7 L411,373.7 L408,373.7 L405,373.7 L402,373.7 L399,373.8 L396,373.8 L393,373.8 L390,373.8 L387,373.8 L384,373.8 L381,373.8 L378,373.8 L375,373.8 L372,373.8 L369,373.8 L366,373.8 L363,373.8 L360,373.9 L357,373.9 L354,373.9 L351,373.9 L348,373.9 L345,373.9 L342,373.9 L339,373.9 L336,373.9 L333,373.9 L330,373.9 L327,373.9 L324,373.9 L321,373.9 L318,374.0 L315,374.0 L312,374.0 L309,374.0 L306,374.0 L303,374.0 L300,374.0 L297,374.0 L294,374.0 L291,374.0 L288,374.0 L285,374.1 L282,374.1 L279,374.1 L276,374.1 L273,374.1 L270,374.1 L267,374.1 L264,374.1 L261,374.1 L258,374.1 L255,374.2 L252,374.2 L249,374.2 L246,374.2 L243,374.2 L240,374.2 L237,374.2 L234,374.2 L231,374.2 L228,374.2 L225,374.3 L222,374.3 L219,374.3 L216,374.3 L213,374.3 L210,374.3 L207,374.3 L204,374.3 L201,374.3 L198,374.3 L195,374.4 L192,374.4 L189,374.4 L186,374.4 L183,374.4 L180,374.4 L177,374.4 L174,374.4 L171,374.4 L168,374.4 L165,374.5 L162,374.5 L159,374.5 L156,374.5 L153,374.5 L150,374.5 L147,374.5 L144,374.5 L141,374.5 L138,374.5 L135,374.6 L132,374.6 L129,374.6 L126,374.6 L123,374.6 L120,374.6 L117,374.6 L114,374.6 L111,374.6 L108,374.6 L105,374.7 L102,374.7 L99,374.7 L96,374.7 L93,374.7 L90,374.7 L87,374.7 L84,374.7 L81,374.7 L78,374.7 L75,374.8 L72,374.8 L69,374.8 L66,374.8 L63,374.8 L60,374.8 L57,374.8 L54,374.8 L51,374.8 L48,374.8 L45,374.9 L42,374.9 L39,374.9 L36,374.9 L33,374.9 L30,374.9 L27,374.9 L24,374.9 L21,374.9 L18,374.9 L15,375.0 L12,375.0 L9,375.0 L6,375.0 L3,375.0 Z" fill="#92d800" opacity="0.9"/><path d="M3,361.5 L6,361.5 L9,361.5 L12,361.5 L15,361.5 L18,361.4 L21,361.4 L24,361.4 L27,361.4 L30,361.4 L33,361.4 L36,361.4 L39,361.4 L42,361.4 L45,361.4 L48,361.3 L51,361.3 L54,361.3 L57,361.3 L60,361.3 L63,361.3 L66,361.3 L69,361.3 L72,361.3 L75,361.3 L78,361.2 L81,361.2 L84,361.2 L87,361.2 L90,361.2 L93,361.2 L96,361.2 L99,361.2 L102,361.2 L105,361.2 L108,361.1 L111,361.1 L114,361.1 L117,361.1 L120,361.1 L123,361.1 L126,361.1 L129,361.1 L132,361.1 L135,361.1 L138,361.0 L141,361.0 L144,361.0 L147,361.0 L150,361.0 L153,361.0 L156,361.0 L159,361.0 L162,361.0 L165,361.0 L168,360.9 L171,360.9 L174,360.9 L177,360.9 L180,360.9 L183,360.9 L186,360.9 L189,360.9 L192,360.9 L195,360.9 L198,360.8 L201,360.8 L204,360.8 L207,360.8 L210,360.8 L213,360.8 L216,360.8 L219,360.8 L222,360.8 L225,360.8 L228,360.7 L231,360.7 L234,360.7 L237,360.7 L240,360.7 L243,360.7 L246,360.7 L249,360.7 L252,360.7 L255,360.7 L258,360.6 L261,360.6 L264,360.6 L267,360.6 L270,360.6 L273,360.6 L276,360.6 L279,360.6 L282,360.6 L285,360.6 L288,360.5 L291,360.5 L294,360.5 L297,360.5 L300,360.5 L303,360.5 L306,360.5 L309,360.5 L312,360.5 L315,360.5 L318,360.5 L321,360.4 L324,360.4 L327,360.4 L330,360.4 L333,360.4 L336,360.4 L339,360.4 L342,360.4 L345,360.4 L348,360.4 L351,360.4 L354,360.4 L357,360.4 L360,360.4 L363,360.3 L366,360.3 L369,360.3 L372,360.3 L375,360.3 L378,360.3 L381,360.3 L384,360.3 L387,360.3 L390,360.3 L393,360.3 L396,360.3 L399,360.3 L402,360.2 L405,360.2 L408,360.2 L411,360.2 L414,360.2 L417,360.2 L420,360.2 L423,360.2 L426,360.2 L429,360.2 L432,360.2 L435,360.2 L438,360.2 L441,360.1 L444,360.1 L447,360.1 L450,360.1 L453,360.1 L456,360.1 L459,360.1 L462,360.1 L465,360.1 L468,360.1 L471,360.1 L474,360.1 L477,360.1 L480,360.1 L483,360.0 L486,360.0 L489,360.0 L492,360.0 L495,360.0 L498,360.0 L501,360.0 L504,360.0 L507,360.0 L510,360.0 L513,360.0 L516,360.0 L519,360.0 L522,359.9 L525,359.9 L528,359.9 L531,359.9 L534,359.9 L537,359.9 L540,359.9 L543,359.9 L546,359.9 L549,359.9 L552,359.9 L555,359.9 L558,359.9 L561,359.8 L564,359.8 L567,359.8 L570,359.8 L573,359.8 L576,359.8 L579,359.8 L582,359.8 L585,359.8 L588,359.8 L591,359.8 L594,359.8 L597,359.8 L600,359.8 L603,359.7 L606,359.7 L609,359.7 L612,359.7 L615,359.7 L618,359.7 L621,359.7 L624,359.7 L627,359.7 L630,359.7 L633,359.7 L636,359.7 L639,359.7 L642,359.6 L645,359.6 L648,359.6 L651,359.6 L654,359.6 L657,359.6 L660,359.6 L663,359.6 L666,359.6 L669,359.6 L672,359.6 L675,359.6 L678,359.6 L681,359.5 L684,359.5 L687,359.5 L690,359.5 L693,359.5 L696,359.5 L699,359.5 L702,359.3 L705,359.0 L708,358.7 L711,358.4 L714,358.1 L717,357.8 L720,357.5 L723,354.7 L726,351.9 L729,349.0 L732,346.2 L735,343.4 L738,341.4 L741,341.1 L744,340.7 L747,340.4 L750,340.1 L753,339.7 L756,339.4 L759,339.1 L762,338.7 L765,338.4 L768,338.1 L771,337.7 L774,337.4 L777,337.1 L780,336.7 L783,336.4 L786,336.1 L789,335.7 L792,335.4 L795,335.1 L798,334.7 L801,334.5 L804,334.4 L807,334.4 L810,334.3 L813,334.3 L816,334.3 L819,334.2 L822,334.2 L825,334.1 L828,334.1 L831,334.0 L834,334.0 L837,333.9 L840,333.9 L843,333.8 L846,333.8 L849,333.8 L852,333.7 L855,333.7 L858,333.6 L861,333.6 L864,333.5 L867,335.9 L870,343.2 L873,350.5 L876,350.5 L879,350.5 L882,350.5 L885,350.5 L888,350.5 L891,350.5 L894,350.5 L897,350.5 L900,350.5 L903,350.5 L906,350.5 L909,350.5 L912,350.5 L915,350.5 L918,350.5 L921,350.5 L924,350.5 L927,350.5 L930,350.5 L933,350.5 L936,350.5 L939,350.5 L942,350.5 L945,350.5 L948,350.5 L951,350.5 L954,350.5 L957,350.5 L960,350.5 L963,350.5 L966,350.5 L969,350.5 L972,350.5 L975,350.5 L978,350.5 L981,350.5 L984,350.5 L987,350.5 L990,350.5 L993,350.5 L996,350.5 L999,350.5 L1002,350.5 L1005,350.5 L1008,349.4 L1011,346.0 L1014,342.6 L1017,339.2 L1020,335.9 L1023,332.5 L1026,332.5 L1029,332.5 L1032,332.5 L1035,332.5 L1038,332.5 L1041,332.5 L1044,332.5 L1047,332.5 L1050,332.5 L1053,332.5 L1056,332.5 L1059,332.5 L1062,332.5 L1065,332.5 L1068,332.5 L1071,332.5 L1074,332.5 L1077,332.5 L1080,332.5 L1083,332.5 L1086,332.5 L1089,338.2 L1092,346.7 L1095,349.5 L1098,349.5 L1101,349.4 L1104,349.4 L1107,349.4 L1110,349.3 L1113,349.3 L1116,349.3 L1119,349.3 L1122,349.2 L1125,349.2 L1128,349.2 L1131,349.2 L1134,349.1 L1137,349.1 L1140,349.1 L1143,349.0 L1146,349.0 L1149,349.0 L1152,349.0 L1155,348.9 L1158,348.9 L1161,348.9 L1164,348.9 L1167,348.8 L1170,348.8 L1173,348.8 L1176,348.7 L1179,348.7 L1182,348.7 L1185,348.7 L1188,348.6 L1191,348.6 L1194,348.6 L1197,348.6 L1200,348.5 L1203,348.5 L1206,342.9 L1209,337.4 L1212,331.8 L1215,326.2 L1218,322.5 L1221,322.5 L1224,322.5 L1227,322.5 L1230,322.5 L1233,322.5 L1236,322.5 L1239,322.5 L1242,322.5 L1245,322.5 L1248,322.5 L1251,322.5 L1254,322.5 L1257,322.5 L1260,322.5 L1263,324.6 L1266,330.9 L1269,337.2 L1272,343.5 L1275,343.5 L1278,343.5 L1281,343.5 L1284,343.5 L1287,343.5 L1290,343.5 L1293,343.5 L1296,343.5 L1299,343.5 L1302,343.5 L1305,343.5 L1308,343.5 L1311,343.5 L1314,343.5 L1317,343.5 L1320,343.5 L1323,343.5 L1326,343.5 L1329,343.5 L1332,343.5 L1335,343.5 L1338,343.5 L1341,343.5 L1344,343.5 L1347,343.5 L1350,341.7 L1353,336.2 L1356,330.8 L1359,325.3 L1362,323.5 L1365,323.5 L1368,323.5 L1371,323.5 L1374,323.5 L1377,323.5 L1380,323.5 L1383,323.5 L1386,323.5 L1389,323.5 L1392,323.5 L1395,323.5 L1398,323.5 L1401,334.0 L1404,344.5 L1407,344.5 L1410,344.5 L1413,344.5 L1416,344.5 L1419,344.5 L1422,344.5 L1425,344.5 L1428,344.5 L1431,344.5 L1434,344.5 L1437,344.5 L1440,344.5 L1443,344.5 L1446,344.5 L1449,344.5 L1452,344.5 L1455,344.5 L1458,344.5 L1461,344.5 L1464,344.5 L1467,344.5 L1470,344.5 L1473,344.5 L1476,337.2 L1479,330.0 L1482,322.8 L1485,315.5 L1488,315.5 L1491,315.5 L1494,315.5 L1497,315.5 L1500,315.5 L1503,315.5 L1506,315.5 L1509,315.5 L1512,315.5 L1515,315.5 L1518,315.5 L1521,315.5 L1524,325.9 L1527,341.5 L1530,341.5 L1533,341.5 L1536,341.5 L1539,341.5 L1542,341.5 L1545,341.5 L1548,341.5 L1551,341.5 L1554,341.5 L1557,341.5 L1560,341.5 L1563,341.5 L1566,341.5 L1569,341.5 L1572,341.5 L1575,341.5 L1578,341.5 L1581,341.5 L1584,341.5 L1587,341.5 L1590,341.5 L1593,341.5 L1596,338.5 L1599,335.5 L1602,332.5 L1605,329.5 L1608,326.5 L1611,326.7 L1614,328.4 L1617,330.2 L1620,331.9 L1623,336.1 L1626,341.5 L1629,341.5 L1632,341.5 L1635,341.5 L1638,341.5 L1641,341.5 L1644,341.5 L1647,341.5 L1650,341.5 L1653,341.5 L1656,341.5 L1659,341.5 L1662,341.5 L1665,341.5 L1668,341.5 L1671,341.5 L1674,341.5 L1677,341.5 L1680,341.5 L1683,341.5 L1686,331.2 L1689,320.8 L1692,310.5 L1695,310.5 L1698,310.5 L1701,310.5 L1704,310.5 L1707,310.5 L1710,310.5 L1713,310.5 L1716,310.5 L1719,310.5 L1722,310.5 L1725,329.1 L1728,341.5 L1731,341.5 L1734,341.5 L1737,341.5 L1740,341.5 L1743,341.5 L1746,341.5 L1749,341.5 L1752,341.5 L1755,341.5 L1758,341.5 L1761,341.5 L1764,341.5 L1767,341.5 L1770,341.5 L1773,338.2 L1776,328.5 L1779,318.8 L1782,315.5 L1785,315.5 L1788,315.5 L1791,315.5 L1794,315.5 L1797,315.5 L1800,315.5 L1803,315.5 L1806,319.5 L1809,331.5 L1812,339.5 L1815,339.5 L1818,339.5 L1821,339.5 L1824,339.5 L1827,339.5 L1830,339.5 L1833,339.5 L1836,339.5 L1839,339.5 L1842,339.5 L1845,339.5 L1848,339.5 L1851,339.5 L1854,339.5 L1857,339.5 L1860,328.4 L1863,317.2 L1866,313.5 L1869,313.5 L1872,313.5 L1875,313.5 L1878,313.5 L1881,313.5 L1884,313.5 L1884,324.0 L1881,324.0 L1878,324.0 L1875,324.0 L1872,324.0 L1869,324.0 L1866,324.0 L1863,327.7 L1860,338.9 L1857,350.0 L1854,350.0 L1851,350.0 L1848,350.0 L1845,350.0 L1842,350.0 L1839,350.0 L1836,350.0 L1833,350.0 L1830,350.0 L1827,350.0 L1824,350.0 L1821,350.0 L1818,350.0 L1815,350.0 L1812,350.0 L1809,342.0 L1806,330.0 L1803,326.0 L1800,326.0 L1797,326.0 L1794,326.0 L1791,326.0 L1788,326.0 L1785,326.0 L1782,326.0 L1779,329.2 L1776,339.0 L1773,348.8 L1770,352.0 L1767,352.0 L1764,352.0 L1761,352.0 L1758,352.0 L1755,352.0 L1752,352.0 L1749,352.0 L1746,352.0 L1743,352.0 L1740,352.0 L1737,352.0 L1734,352.0 L1731,352.0 L1728,352.0 L1725,339.6 L1722,321.0 L1719,321.0 L1716,321.0 L1713,321.0 L1710,321.0 L1707,321.0 L1704,321.0 L1701,321.0 L1698,321.0 L1695,321.0 L1692,321.0 L1689,331.3 L1686,341.7 L1683,352.0 L1680,352.0 L1677,352.0 L1674,352.0 L1671,352.0 L1668,352.0 L1665,352.0 L1662,352.0 L1659,352.0 L1656,352.0 L1653,352.0 L1650,352.0 L1647,352.0 L1644,352.0 L1641,352.0 L1638,352.0 L1635,352.0 L1632,352.0 L1629,352.0 L1626,352.0 L1623,346.6 L1620,342.4 L1617,340.7 L1614,338.9 L1611,337.2 L1608,337.0 L1605,340.0 L1602,343.0 L1599,346.0 L1596,349.0 L1593,352.0 L1590,352.0 L1587,352.0 L1584,352.0 L1581,352.0 L1578,352.0 L1575,352.0 L1572,352.0 L1569,352.0 L1566,352.0 L1563,352.0 L1560,352.0 L1557,352.0 L1554,352.0 L1551,352.0 L1548,352.0 L1545,352.0 L1542,352.0 L1539,352.0 L1536,352.0 L1533,352.0 L1530,352.0 L1527,352.0 L1524,336.4 L1521,326.0 L1518,326.0 L1515,326.0 L1512,326.0 L1509,326.0 L1506,326.0 L1503,326.0 L1500,326.0 L1497,326.0 L1494,326.0 L1491,326.0 L1488,326.0 L1485,326.0 L1482,333.2 L1479,340.5 L1476,347.8 L1473,355.0 L1470,355.0 L1467,355.0 L1464,355.0 L1461,355.0 L1458,355.0 L1455,355.0 L1452,355.0 L1449,355.0 L1446,355.0 L1443,355.0 L1440,355.0 L1437,355.0 L1434,355.0 L1431,355.0 L1428,355.0 L1425,355.0 L1422,355.0 L1419,355.0 L1416,355.0 L1413,355.0 L1410,355.0 L1407,355.0 L1404,355.0 L1401,344.5 L1398,334.0 L1395,334.0 L1392,334.0 L1389,334.0 L1386,334.0 L1383,334.0 L1380,334.0 L1377,334.0 L1374,334.0 L1371,334.0 L1368,334.0 L1365,334.0 L1362,334.0 L1359,335.8 L1356,341.3 L1353,346.7 L1350,352.2 L1347,354.0 L1344,354.0 L1341,354.0 L1338,354.0 L1335,354.0 L1332,354.0 L1329,354.0 L1326,354.0 L1323,354.0 L1320,354.0 L1317,354.0 L1314,354.0 L1311,354.0 L1308,354.0 L1305,354.0 L1302,354.0 L1299,354.0 L1296,354.0 L1293,354.0 L1290,354.0 L1287,354.0 L1284,354.0 L1281,354.0 L1278,354.0 L1275,354.0 L1272,354.0 L1269,347.7 L1266,341.4 L1263,335.1 L1260,333.0 L1257,333.0 L1254,333.0 L1251,333.0 L1248,333.0 L1245,333.0 L1242,333.0 L1239,333.0 L1236,333.0 L1233,333.0 L1230,333.0 L1227,333.0 L1224,333.0 L1221,333.0 L1218,333.0 L1215,336.7 L1212,342.3 L1209,347.9 L1206,353.4 L1203,359.0 L1200,359.0 L1197,359.1 L1194,359.1 L1191,359.1 L1188,359.1 L1185,359.2 L1182,359.2 L1179,359.2 L1176,359.2 L1173,359.3 L1170,359.3 L1167,359.3 L1164,359.4 L1161,359.4 L1158,359.4 L1155,359.4 L1152,359.5 L1149,359.5 L1146,359.5 L1143,359.5 L1140,359.6 L1137,359.6 L1134,359.6 L1131,359.7 L1128,359.7 L1125,359.7 L1122,359.7 L1119,359.8 L1116,359.8 L1113,359.8 L1110,359.8 L1107,359.9 L1104,359.9 L1101,359.9 L1098,360.0 L1095,360.0 L1092,357.2 L1089,348.7 L1086,343.0 L1083,343.0 L1080,343.0 L1077,343.0 L1074,343.0 L1071,343.0 L1068,343.0 L1065,343.0 L1062,343.0 L1059,343.0 L1056,343.0 L1053,343.0 L1050,343.0 L1047,343.0 L1044,343.0 L1041,343.0 L1038,343.0 L1035,343.0 L1032,343.0 L1029,343.0 L1026,343.0 L1023,343.0 L1020,346.4 L1017,349.8 L1014,353.1 L1011,356.5 L1008,359.9 L1005,361.0 L1002,361.0 L999,361.0 L996,361.0 L993,361.0 L990,361.0 L987,361.0 L984,361.0 L981,361.0 L978,361.0 L975,361.0 L972,361.0 L969,361.0 L966,361.0 L963,361.0 L960,361.0 L957,361.0 L954,361.0 L951,361.0 L948,361.0 L945,361.0 L942,361.0 L939,361.0 L936,361.0 L933,361.0 L930,361.0 L927,361.0 L924,361.0 L921,361.0 L918,361.0 L915,361.0 L912,361.0 L909,361.0 L906,361.0 L903,361.0 L900,361.0 L897,361.0 L894,361.0 L891,361.0 L888,361.0 L885,361.0 L882,361.0 L879,361.0 L876,361.0 L873,361.0 L870,353.7 L867,346.4 L864,344.0 L861,344.1 L858,344.1 L855,344.2 L852,344.2 L849,344.3 L846,344.3 L843,344.3 L840,344.4 L837,344.4 L834,344.5 L831,344.5 L828,344.6 L825,344.6 L822,344.7 L819,344.7 L816,344.8 L813,344.8 L810,344.8 L807,344.9 L804,344.9 L801,345.0 L798,345.2 L795,345.6 L792,345.9 L789,346.2 L786,346.6 L783,346.9 L780,347.2 L777,347.6 L774,347.9 L771,348.2 L768,348.6 L765,348.9 L762,349.2 L759,349.6 L756,349.9 L753,350.2 L750,350.6 L747,350.9 L744,351.2 L741,351.6 L738,351.9 L735,353.9 L732,356.7 L729,359.5 L726,362.4 L723,365.2 L720,368.0 L717,368.3 L714,368.6 L711,368.9 L708,369.2 L705,369.5 L702,369.8 L699,370.0 L696,370.0 L693,370.0 L690,370.0 L687,370.0 L684,370.0 L681,370.0 L678,370.1 L675,370.1 L672,370.1 L669,370.1 L666,370.1 L663,370.1 L660,370.1 L657,370.1 L654,370.1 L651,370.1 L648,370.1 L645,370.1 L642,370.1 L639,370.2 L636,370.2 L633,370.2 L630,370.2 L627,370.2 L624,370.2 L621,370.2 L618,370.2 L615,370.2 L612,370.2 L609,370.2 L606,370.2 L603,370.2 L600,370.2 L597,370.3 L594,370.3 L591,370.3 L588,370.3 L585,370.3 L582,370.3 L579,370.3 L576,370.3 L573,370.3 L570,370.3 L567,370.3 L564,370.3 L561,370.3 L558,370.4 L555,370.4 L552,370.4 L549,370.4 L546,370.4 L543,370.4 L540,370.4 L537,370.4 L534,370.4 L531,370.4 L528,370.4 L525,370.4 L522,370.4 L519,370.5 L516,370.5 L513,370.5 L510,370.5 L507,370.5 L504,370.5 L501,370.5 L498,370.5 L495,370.5 L492,370.5 L489,370.5 L486,370.5 L483,370.5 L480,370.6 L477,370.6 L474,370.6 L471,370.6 L468,370.6 L465,370.6 L462,370.6 L459,370.6 L456,370.6 L453,370.6 L450,370.6 L447,370.6 L444,370.6 L441,370.6 L438,370.7 L435,370.7 L432,370.7 L429,370.7 L426,370.7 L423,370.7 L420,370.7 L417,370.7 L414,370.7 L411,370.7 L408,370.7 L405,370.7 L402,370.7 L399,370.8 L396,370.8 L393,370.8 L390,370.8 L387,370.8 L384,370.8 L381,370.8 L378,370.8 L375,370.8 L372,370.8 L369,370.8 L366,370.8 L363,370.8 L360,370.9 L357,370.9 L354,370.9 L351,370.9 L348,370.9 L345,370.9 L342,370.9 L339,370.9 L336,370.9 L333,370.9 L330,370.9 L327,370.9 L324,370.9 L321,370.9 L318,371.0 L315,371.0 L312,371.0 L309,371.0 L306,371.0 L303,371.0 L300,371.0 L297,371.0 L294,371.0 L291,371.0 L288,371.0 L285,371.1 L282,371.1 L279,371.1 L276,371.1 L273,371.1 L270,371.1 L267,371.1 L264,371.1 L261,371.1 L258,371.1 L255,371.2 L252,371.2 L249,371.2 L246,371.2 L243,371.2 L240,371.2 L237,371.2 L234,371.2 L231,371.2 L228,371.2 L225,371.3 L222,371.3 L219,371.3 L216,371.3 L213,371.3 L210,371.3 L207,371.3 L204,371.3 L201,371.3 L198,371.3 L195,371.4 L192,371.4 L189,371.4 L186,371.4 L183,371.4 L180,371.4 L177,371.4 L174,371.4 L171,371.4 L168,371.4 L165,371.5 L162,371.5 L159,371.5 L156,371.5 L153,371.5 L150,371.5 L147,371.5 L144,371.5 L141,371.5 L138,371.5 L135,371.6 L132,371.6 L129,371.6 L126,371.6 L123,371.6 L120,371.6 L117,371.6 L114,371.6 L111,371.6 L108,371.6 L105,371.7 L102,371.7 L99,371.7 L96,371.7 L93,371.7 L90,371.7 L87,371.7 L84,371.7 L81,371.7 L78,371.7 L75,371.8 L72,371.8 L69,371.8 L66,371.8 L63,371.8 L60,371.8 L57,371.8 L54,371.8 L51,371.8 L48,371.8 L45,371.9 L42,371.9 L39,371.9 L36,371.9 L33,371.9 L30,371.9 L27,371.9 L24,371.9 L21,371.9 L18,371.9 L15,372.0 L12,372.0 L9,372.0 L6,372.0 L3,372.0 Z" fill="#a6f000"/></g>
<rect x="55" y="653" width="1829" height="4.5" fill="#b8a800"/><rect x="55" y="660.5" width="1829" height="4.5" fill="#7a6e00"/><g fill="#7e7200"><rect x="65" y="653.5" width="2" height="2.5"/><rect x="71" y="653.5" width="4" height="2.5"/><rect x="97" y="653.5" width="4" height="2.5"/><rect x="108" y="653.5" width="4" height="2.5"/><rect x="119" y="653.5" width="3" height="2.5"/><rect x="122" y="653.5" width="2" height="2.5"/><rect x="127" y="653.5" width="2" height="2.5"/><rect x="136" y="653.5" width="3" height="2.5"/><rect x="139" y="653.5" width="3" height="2.5"/><rect x="146" y="653.5" width="3" height="2.5"/><rect x="152" y="653.5" width="4" height="2.5"/><rect x="158" y="653.5" width="2" height="2.5"/><rect x="179" y="653.5" width="4" height="2.5"/><rect x="186" y="653.5" width="5" height="2.5"/><rect x="191" y="653.5" width="2" height="2.5"/><rect x="200" y="653.5" width="2" height="2.5"/><rect x="202" y="653.5" width="5" height="2.5"/><rect x="217" y="653.5" width="2" height="2.5"/><rect x="219" y="653.5" width="2" height="2.5"/><rect x="226" y="653.5" width="2" height="2.5"/><rect x="228" y="653.5" width="2" height="2.5"/><rect x="239" y="653.5" width="4" height="2.5"/><rect x="247" y="653.5" width="2" height="2.5"/><rect x="272" y="653.5" width="2" height="2.5"/><rect x="277" y="653.5" width="5" height="2.5"/><rect x="282" y="653.5" width="5" height="2.5"/><rect x="297" y="653.5" width="2" height="2.5"/><rect x="306" y="653.5" width="2" height="2.5"/><rect x="323" y="653.5" width="4" height="2.5"/><rect x="329" y="653.5" width="5" height="2.5"/><rect x="334" y="653.5" width="3" height="2.5"/><rect x="341" y="653.5" width="2" height="2.5"/><rect x="350" y="653.5" width="2" height="2.5"/><rect x="367" y="653.5" width="2" height="2.5"/><rect x="409" y="653.5" width="4" height="2.5"/><rect x="413" y="653.5" width="2" height="2.5"/><rect x="415" y="653.5" width="3" height="2.5"/><rect x="428" y="653.5" width="5" height="2.5"/><rect x="448" y="653.5" width="2" height="2.5"/><rect x="450" y="653.5" width="2" height="2.5"/><rect x="454" y="653.5" width="5" height="2.5"/><rect x="475" y="653.5" width="3" height="2.5"/><rect x="485" y="653.5" width="2" height="2.5"/><rect x="492" y="653.5" width="2" height="2.5"/><rect x="498" y="653.5" width="2" height="2.5"/><rect x="508" y="653.5" width="5" height="2.5"/><rect x="517" y="653.5" width="3" height="2.5"/><rect x="530" y="653.5" width="3" height="2.5"/><rect x="545" y="653.5" width="2" height="2.5"/><rect x="561" y="653.5" width="5" height="2.5"/><rect x="573" y="653.5" width="3" height="2.5"/><rect x="580" y="653.5" width="4" height="2.5"/><rect x="588" y="653.5" width="2" height="2.5"/><rect x="595" y="653.5" width="2" height="2.5"/><rect x="597" y="653.5" width="2" height="2.5"/><rect x="604" y="653.5" width="2" height="2.5"/><rect x="617" y="653.5" width="4" height="2.5"/><rect x="635" y="653.5" width="2" height="2.5"/><rect x="637" y="653.5" width="2" height="2.5"/><rect x="653" y="653.5" width="5" height="2.5"/><rect x="680" y="653.5" width="4" height="2.5"/><rect x="695" y="653.5" width="2" height="2.5"/><rect x="716" y="653.5" width="2" height="2.5"/><rect x="752" y="653.5" width="2" height="2.5"/><rect x="765" y="653.5" width="3" height="2.5"/><rect x="772" y="653.5" width="2" height="2.5"/><rect x="781" y="653.5" width="2" height="2.5"/><rect x="796" y="653.5" width="2" height="2.5"/><rect x="798" y="653.5" width="4" height="2.5"/><rect x="814" y="653.5" width="2" height="2.5"/><rect x="824" y="653.5" width="2" height="2.5"/><rect x="849" y="653.5" width="2" height="2.5"/><rect x="851" y="653.5" width="3" height="2.5"/><rect x="860" y="653.5" width="3" height="2.5"/><rect x="872" y="653.5" width="3" height="2.5"/><rect x="877" y="653.5" width="5" height="2.5"/><rect x="887" y="653.5" width="2" height="2.5"/><rect x="889" y="653.5" width="5" height="2.5"/><rect x="917" y="653.5" width="5" height="2.5"/><rect x="935" y="653.5" width="4" height="2.5"/><rect x="949" y="653.5" width="2" height="2.5"/><rect x="956" y="653.5" width="2" height="2.5"/><rect x="963" y="653.5" width="2" height="2.5"/><rect x="972" y="653.5" width="3" height="2.5"/><rect x="987" y="653.5" width="2" height="2.5"/><rect x="989" y="653.5" width="2" height="2.5"/><rect x="995" y="653.5" width="2" height="2.5"/><rect x="997" y="653.5" width="3" height="2.5"/><rect x="1013" y="653.5" width="2" height="2.5"/><rect x="1015" y="653.5" width="4" height="2.5"/><rect x="1019" y="653.5" width="2" height="2.5"/><rect x="1023" y="653.5" width="4" height="2.5"/><rect x="1027" y="653.5" width="5" height="2.5"/><rect x="1052" y="653.5" width="3" height="2.5"/><rect x="1066" y="653.5" width="3" height="2.5"/><rect x="1075" y="653.5" width="2" height="2.5"/><rect x="1086" y="653.5" width="2" height="2.5"/><rect x="1088" y="653.5" width="2" height="2.5"/><rect x="1094" y="653.5" width="2" height="2.5"/><rect x="1116" y="653.5" width="2" height="2.5"/><rect x="1140" y="653.5" width="2" height="2.5"/><rect x="1144" y="653.5" width="2" height="2.5"/><rect x="1171" y="653.5" width="5" height="2.5"/><rect x="1196" y="653.5" width="3" height="2.5"/><rect x="1201" y="653.5" width="5" height="2.5"/><rect x="1217" y="653.5" width="3" height="2.5"/><rect x="1233" y="653.5" width="3" height="2.5"/><rect x="1240" y="653.5" width="5" height="2.5"/><rect x="1250" y="653.5" width="3" height="2.5"/><rect x="1253" y="653.5" width="2" height="2.5"/><rect x="1255" y="653.5" width="2" height="2.5"/><rect x="1257" y="653.5" width="2" height="2.5"/><rect x="1261" y="653.5" width="3" height="2.5"/><rect x="1270" y="653.5" width="3" height="2.5"/><rect x="1273" y="653.5" width="5" height="2.5"/><rect x="1296" y="653.5" width="4" height="2.5"/><rect x="1308" y="653.5" width="4" height="2.5"/><rect x="1312" y="653.5" width="5" height="2.5"/><rect x="1317" y="653.5" width="4" height="2.5"/><rect x="1325" y="653.5" width="2" height="2.5"/><rect x="1335" y="653.5" width="3" height="2.5"/><rect x="1345" y="653.5" width="3" height="2.5"/><rect x="1348" y="653.5" width="2" height="2.5"/><rect x="1350" y="653.5" width="2" height="2.5"/><rect x="1364" y="653.5" width="2" height="2.5"/><rect x="1379" y="653.5" width="4" height="2.5"/><rect x="1383" y="653.5" width="2" height="2.5"/><rect x="1385" y="653.5" width="5" height="2.5"/><rect x="1390" y="653.5" width="5" height="2.5"/><rect x="1402" y="653.5" width="2" height="2.5"/><rect x="1406" y="653.5" width="3" height="2.5"/><rect x="1409" y="653.5" width="4" height="2.5"/><rect x="1419" y="653.5" width="2" height="2.5"/><rect x="1436" y="653.5" width="4" height="2.5"/><rect x="1450" y="653.5" width="3" height="2.5"/><rect x="1466" y="653.5" width="3" height="2.5"/><rect x="1495" y="653.5" width="2" height="2.5"/><rect x="1518" y="653.5" width="2" height="2.5"/><rect x="1522" y="653.5" width="3" height="2.5"/><rect x="1525" y="653.5" width="2" height="2.5"/><rect x="1545" y="653.5" width="5" height="2.5"/><rect x="1552" y="653.5" width="2" height="2.5"/><rect x="1562" y="653.5" width="5" height="2.5"/><rect x="1567" y="653.5" width="3" height="2.5"/><rect x="1575" y="653.5" width="4" height="2.5"/><rect x="1592" y="653.5" width="2" height="2.5"/><rect x="1608" y="653.5" width="5" height="2.5"/><rect x="1624" y="653.5" width="4" height="2.5"/><rect x="1633" y="653.5" width="2" height="2.5"/><rect x="1639" y="653.5" width="2" height="2.5"/><rect x="1641" y="653.5" width="5" height="2.5"/><rect x="1655" y="653.5" width="4" height="2.5"/><rect x="1670" y="653.5" width="3" height="2.5"/><rect x="1673" y="653.5" width="2" height="2.5"/><rect x="1690" y="653.5" width="5" height="2.5"/><rect x="1738" y="653.5" width="2" height="2.5"/><rect x="1751" y="653.5" width="3" height="2.5"/><rect x="1762" y="653.5" width="5" height="2.5"/><rect x="1770" y="653.5" width="4" height="2.5"/><rect x="1776" y="653.5" width="3" height="2.5"/><rect x="1779" y="653.5" width="3" height="2.5"/><rect x="1786" y="653.5" width="2" height="2.5"/><rect x="1794" y="653.5" width="2" height="2.5"/><rect x="1796" y="653.5" width="2" height="2.5"/><rect x="1798" y="653.5" width="2" height="2.5"/><rect x="1800" y="653.5" width="2" height="2.5"/><rect x="1808" y="653.5" width="4" height="2.5"/><rect x="1812" y="653.5" width="2" height="2.5"/><rect x="1823" y="653.5" width="5" height="2.5"/><rect x="1856" y="653.5" width="5" height="2.5"/><rect x="1861" y="653.5" width="2" height="2.5"/></g><g fill="#e0d000"><rect x="90" y="653" width="3" height="3"/><rect x="95" y="653" width="2" height="3"/><rect x="169" y="653" width="2" height="3"/><rect x="171" y="653" width="2" height="3"/><rect x="173" y="653" width="4" height="3"/><rect x="301" y="653" width="2" height="3"/><rect x="319" y="653" width="4" height="3"/><rect x="327" y="653" width="2" height="3"/><rect x="347" y="653" width="3" height="3"/><rect x="365" y="653" width="2" height="3"/><rect x="385" y="653" width="5" height="3"/><rect x="390" y="653" width="3" height="3"/><rect x="465" y="653" width="5" height="3"/><rect x="472" y="653" width="3" height="3"/><rect x="502" y="653" width="3" height="3"/><rect x="522" y="653" width="3" height="3"/><rect x="525" y="653" width="3" height="3"/><rect x="537" y="653" width="5" height="3"/><rect x="566" y="653" width="2" height="3"/><rect x="606" y="653" width="4" height="3"/><rect x="613" y="653" width="4" height="3"/><rect x="639" y="653" width="2" height="3"/><rect x="651" y="653" width="2" height="3"/><rect x="660" y="653" width="3" height="3"/><rect x="667" y="653" width="2" height="3"/><rect x="709" y="653" width="3" height="3"/><rect x="718" y="653" width="3" height="3"/><rect x="748" y="653" width="2" height="3"/><rect x="756" y="653" width="2" height="3"/><rect x="792" y="653" width="4" height="3"/><rect x="854" y="653" width="2" height="3"/><rect x="882" y="653" width="3" height="3"/><rect x="926" y="653" width="2" height="3"/><rect x="939" y="653" width="3" height="3"/><rect x="942" y="653" width="2" height="3"/><rect x="958" y="653" width="5" height="3"/><rect x="965" y="653" width="2" height="3"/><rect x="982" y="653" width="3" height="3"/><rect x="1011" y="653" width="2" height="3"/><rect x="1077" y="653" width="2" height="3"/><rect x="1079" y="653" width="3" height="3"/><rect x="1082" y="653" width="2" height="3"/><rect x="1101" y="653" width="2" height="3"/><rect x="1126" y="653" width="2" height="3"/><rect x="1146" y="653" width="2" height="3"/><rect x="1163" y="653" width="2" height="3"/><rect x="1181" y="653" width="4" height="3"/><rect x="1193" y="653" width="3" height="3"/><rect x="1214" y="653" width="3" height="3"/><rect x="1222" y="653" width="4" height="3"/><rect x="1231" y="653" width="2" height="3"/><rect x="1264" y="653" width="3" height="3"/><rect x="1267" y="653" width="3" height="3"/><rect x="1290" y="653" width="4" height="3"/><rect x="1294" y="653" width="2" height="3"/><rect x="1342" y="653" width="3" height="3"/><rect x="1366" y="653" width="2" height="3"/><rect x="1395" y="653" width="3" height="3"/><rect x="1458" y="653" width="5" height="3"/><rect x="1472" y="653" width="5" height="3"/><rect x="1492" y="653" width="3" height="3"/><rect x="1497" y="653" width="2" height="3"/><rect x="1527" y="653" width="4" height="3"/><rect x="1531" y="653" width="4" height="3"/><rect x="1560" y="653" width="2" height="3"/><rect x="1599" y="653" width="5" height="3"/><rect x="1622" y="653" width="2" height="3"/><rect x="1659" y="653" width="5" height="3"/><rect x="1666" y="653" width="4" height="3"/><rect x="1695" y="653" width="2" height="3"/><rect x="1697" y="653" width="2" height="3"/><rect x="1699" y="653" width="4" height="3"/><rect x="1712" y="653" width="4" height="3"/><rect x="1733" y="653" width="5" height="3"/><rect x="1746" y="653" width="2" height="3"/><rect x="1788" y="653" width="4" height="3"/><rect x="1802" y="653" width="2" height="3"/><rect x="1804" y="653" width="4" height="3"/><rect x="1845" y="653" width="3" height="3"/><rect x="1848" y="653" width="5" height="3"/><rect x="1868" y="653" width="3" height="3"/></g><g fill="#100e00"><rect x="95" y="661" width="2" height="4"/><rect x="164" y="661" width="2" height="4"/><rect x="177" y="661" width="2" height="4"/><rect x="200" y="661" width="2" height="4"/><rect x="221" y="661" width="2" height="4"/><rect x="249" y="661" width="2" height="4"/><rect x="260" y="661" width="2" height="4"/><rect x="262" y="661" width="2" height="4"/><rect x="311" y="661" width="2" height="4"/><rect x="365" y="661" width="2" height="4"/><rect x="382" y="661" width="2" height="4"/><rect x="399" y="661" width="2" height="4"/><rect x="533" y="661" width="2" height="4"/><rect x="580" y="661" width="2" height="4"/><rect x="599" y="661" width="2" height="4"/><rect x="646" y="661" width="2" height="4"/><rect x="660" y="661" width="2" height="4"/><rect x="695" y="661" width="2" height="4"/><rect x="697" y="661" width="2" height="4"/><rect x="702" y="661" width="2" height="4"/><rect x="704" y="661" width="2" height="4"/><rect x="718" y="661" width="2" height="4"/><rect x="738" y="661" width="2" height="4"/><rect x="742" y="661" width="2" height="4"/><rect x="754" y="661" width="2" height="4"/><rect x="758" y="661" width="2" height="4"/><rect x="768" y="661" width="2" height="4"/><rect x="781" y="661" width="2" height="4"/><rect x="792" y="661" width="2" height="4"/><rect x="809" y="661" width="2" height="4"/><rect x="824" y="661" width="2" height="4"/><rect x="840" y="661" width="2" height="4"/><rect x="877" y="661" width="2" height="4"/><rect x="887" y="661" width="2" height="4"/><rect x="912" y="661" width="2" height="4"/><rect x="917" y="661" width="2" height="4"/><rect x="935" y="661" width="2" height="4"/><rect x="946" y="661" width="2" height="4"/><rect x="954" y="661" width="2" height="4"/><rect x="963" y="661" width="2" height="4"/><rect x="967" y="661" width="2" height="4"/><rect x="997" y="661" width="2" height="4"/><rect x="1000" y="661" width="2" height="4"/><rect x="1004" y="661" width="2" height="4"/><rect x="1011" y="661" width="2" height="4"/><rect x="1043" y="661" width="2" height="4"/><rect x="1052" y="661" width="2" height="4"/><rect x="1105" y="661" width="2" height="4"/><rect x="1123" y="661" width="2" height="4"/><rect x="1126" y="661" width="2" height="4"/><rect x="1178" y="661" width="2" height="4"/><rect x="1187" y="661" width="2" height="4"/><rect x="1199" y="661" width="2" height="4"/><rect x="1233" y="661" width="2" height="4"/><rect x="1257" y="661" width="2" height="4"/><rect x="1270" y="661" width="2" height="4"/><rect x="1294" y="661" width="2" height="4"/><rect x="1335" y="661" width="2" height="4"/><rect x="1359" y="661" width="2" height="4"/><rect x="1376" y="661" width="2" height="4"/><rect x="1395" y="661" width="2" height="4"/><rect x="1440" y="661" width="2" height="4"/><rect x="1477" y="661" width="2" height="4"/><rect x="1502" y="661" width="2" height="4"/><rect x="1520" y="661" width="2" height="4"/><rect x="1522" y="661" width="2" height="4"/><rect x="1560" y="661" width="2" height="4"/><rect x="1594" y="661" width="2" height="4"/><rect x="1707" y="661" width="2" height="4"/><rect x="1759" y="661" width="2" height="4"/><rect x="1776" y="661" width="2" height="4"/><rect x="1838" y="661" width="2" height="4"/></g><rect x="55" y="657" width="1829" height="3.5" fill="#f2e200"/><g fill="#3a3400"><rect x="411.1" y="651" width="2" height="2"/><rect x="1145.4" y="650" width="2" height="3"/><rect x="1168.3" y="649" width="2" height="4"/><rect x="1373.4" y="651" width="2" height="2"/><rect x="304.1" y="650" width="2" height="3"/><rect x="331.1" y="650" width="2" height="3"/><rect x="1670.2" y="649" width="2" height="4"/><rect x="917.8" y="650" width="2" height="3"/><rect x="293.8" y="649" width="2" height="4"/><rect x="1276.0" y="651" width="2" height="2"/><rect x="214.8" y="650" width="2" height="3"/><rect x="524.3" y="650" width="2" height="3"/><rect x="634.0" y="650" width="2" height="3"/><rect x="509.1" y="649" width="2" height="4"/><rect x="1483.9" y="650" width="2" height="3"/><rect x="942.7" y="650" width="2" height="3"/><rect x="847.6" y="649" width="2" height="4"/><rect x="1811.8" y="651" width="2" height="2"/><rect x="1449.7" y="650" width="2" height="3"/><rect x="1557.4" y="650" width="2" height="3"/><rect x="245.7" y="650" width="2" height="3"/><rect x="761.7" y="649" width="2" height="4"/><rect x="1638.0" y="650" width="2" height="3"/><rect x="1563.6" y="651" width="2" height="2"/><rect x="923.0" y="651" width="2" height="2"/><rect x="303.4" y="651" width="2" height="2"/><rect x="525.9" y="649" width="2" height="4"/><rect x="1669.5" y="651" width="2" height="2"/><rect x="1415.1" y="650" width="2" height="3"/><rect x="1606.8" y="650" width="2" height="3"/><rect x="1809.2" y="651" width="2" height="2"/><rect x="1269.6" y="650" width="2" height="3"/><rect x="735.2" y="650" width="2" height="3"/><rect x="1722.0" y="650" width="2" height="3"/><rect x="973.3" y="650" width="2" height="3"/><rect x="586.1" y="651" width="2" height="2"/><rect x="535.8" y="650" width="2" height="3"/><rect x="1833.9" y="651" width="2" height="2"/><rect x="1244.9" y="649" width="2" height="4"/><rect x="520.4" y="649" width="2" height="4"/><rect x="1734.7" y="650" width="2" height="3"/><rect x="1333.5" y="649" width="2" height="4"/><rect x="554.6" y="649" width="2" height="4"/><rect x="985.4" y="650" width="2" height="3"/><rect x="1751.1" y="650" width="2" height="3"/><rect x="1054.3" y="651" width="2" height="2"/><rect x="1112.2" y="649" width="2" height="4"/><rect x="1692.6" y="650" width="2" height="3"/><rect x="1709.0" y="649" width="2" height="4"/><rect x="1006.7" y="650" width="2" height="3"/><rect x="1127.9" y="651" width="2" height="2"/><rect x="1112.0" y="650" width="2" height="3"/><rect x="433.6" y="651" width="2" height="2"/><rect x="789.5" y="651" width="2" height="2"/><rect x="1852.2" y="650" width="2" height="3"/><rect x="1016.2" y="650" width="2" height="3"/><rect x="1826.6" y="649" width="2" height="4"/><rect x="1153.1" y="650" width="2" height="3"/><rect x="696.3" y="651" width="2" height="2"/><rect x="703.2" y="649" width="2" height="4"/><rect x="367.6" y="650" width="2" height="3"/><rect x="941.0" y="650" width="2" height="3"/><rect x="1127.6" y="650" width="2" height="3"/><rect x="985.1" y="650" width="2" height="3"/><rect x="1093.3" y="650" width="2" height="3"/><rect x="776.8" y="650" width="2" height="3"/><rect x="672.8" y="650" width="2" height="3"/><rect x="1380.8" y="651" width="2" height="2"/><rect x="880.9" y="650" width="2" height="3"/><rect x="1110.5" y="650" width="2" height="3"/><rect x="1044.3" y="651" width="2" height="2"/><rect x="1456.8" y="650" width="2" height="3"/><rect x="1311.1" y="650" width="2" height="3"/><rect x="1757.1" y="650" width="2" height="3"/><rect x="1327.0" y="651" width="2" height="2"/><rect x="614.4" y="649" width="2" height="4"/><rect x="304.6" y="650" width="2" height="3"/><rect x="694.8" y="651" width="2" height="2"/><rect x="1044.8" y="650" width="2" height="3"/><rect x="1715.3" y="650" width="2" height="3"/><rect x="175.6" y="650" width="2" height="3"/><rect x="1863.5" y="650" width="2" height="3"/><rect x="329.0" y="651" width="2" height="2"/><rect x="616.0" y="650" width="2" height="3"/><rect x="1321.1" y="649" width="2" height="4"/><rect x="854.2" y="651" width="2" height="2"/><rect x="269.5" y="649" width="2" height="4"/><rect x="344.3" y="650" width="2" height="3"/><rect x="1043.4" y="649" width="2" height="4"/><rect x="783.5" y="651" width="2" height="2"/><rect x="1803.6" y="651" width="2" height="2"/><rect x="1872.9" y="649" width="2" height="4"/><rect x="431.9" y="650" width="2" height="3"/><rect x="1107.2" y="650" width="2" height="3"/><rect x="1744.0" y="650" width="2" height="3"/><rect x="594.5" y="650" width="2" height="3"/><rect x="434.4" y="650" width="2" height="3"/><rect x="411.6" y="651" width="2" height="2"/><rect x="430.0" y="651" width="2" height="2"/><rect x="1123.2" y="649" width="2" height="4"/><rect x="955.0" y="651" width="2" height="2"/><rect x="1412.2" y="650" width="2" height="3"/><rect x="884.6" y="650" width="2" height="3"/><rect x="1755.4" y="651" width="2" height="2"/><rect x="571.8" y="650" width="2" height="3"/><rect x="571.0" y="651" width="2" height="2"/><rect x="1598.1" y="649" width="2" height="4"/><rect x="896.2" y="649" width="2" height="4"/><rect x="1477.4" y="650" width="2" height="3"/><rect x="1841.6" y="651" width="2" height="2"/><rect x="936.5" y="650" width="2" height="3"/><rect x="1751.8" y="650" width="2" height="3"/><rect x="496.1" y="650" width="2" height="3"/><rect x="295.2" y="650" width="2" height="3"/><rect x="1459.0" y="650" width="2" height="3"/><rect x="1276.1" y="649" width="2" height="4"/><rect x="1459.0" y="651" width="2" height="2"/><rect x="1039.6" y="649" width="2" height="4"/><rect x="576.0" y="650" width="2" height="3"/><rect x="450.9" y="649" width="2" height="4"/><rect x="714.3" y="651" width="2" height="2"/><rect x="1375.4" y="649" width="2" height="4"/><rect x="1760.0" y="651" width="2" height="2"/><rect x="1014.6" y="650" width="2" height="3"/><rect x="1570.2" y="651" width="2" height="2"/><rect x="646.2" y="651" width="2" height="2"/><rect x="733.5" y="651" width="2" height="2"/><rect x="1054.7" y="650" width="2" height="3"/><rect x="1036.9" y="650" width="2" height="3"/><rect x="549.3" y="650" width="2" height="3"/><rect x="903.0" y="649" width="2" height="4"/><rect x="311.3" y="649" width="2" height="4"/><rect x="159.2" y="650" width="2" height="3"/><rect x="1298.7" y="651" width="2" height="2"/><rect x="496.4" y="651" width="2" height="2"/><rect x="1081.1" y="650" width="2" height="3"/><rect x="1873.4" y="650" width="2" height="3"/><rect x="582.6" y="650" width="2" height="3"/><rect x="538.3" y="649" width="2" height="4"/><rect x="874.1" y="649" width="2" height="4"/></g><rect x="755.0" y="472" width="2.6" height="183" fill="#857a00" opacity="1"/><rect x="1021.0" y="472" width="2.6" height="183" fill="#857a00" opacity="1"/><rect x="1204.3" y="472" width="2.6" height="183" fill="#857a00" opacity="1"/><rect x="1352.5" y="472" width="2.6" height="183" fill="#857a00" opacity="1"/><rect x="1475.4" y="472" width="2.6" height="183" fill="#857a00" opacity="1"/><rect x="1588.7" y="468" width="2.6" height="187" fill="#857a00" opacity="1"/><rect x="1681.4" y="472" width="2.6" height="183" fill="#857a00" opacity="1"/><rect x="1775.7" y="472" width="2.6" height="183" fill="#857a00" opacity="0.5"/><rect x="1858.1" y="472" width="2.6" height="183" fill="#857a00" opacity="0.4"/>
<g fill="#3c0818"><rect x="454.2" y="760" width="1.5" height="116"/><rect x="697.3" y="760" width="1.5" height="116"/><rect x="989.0" y="760" width="1.5" height="116"/><rect x="1106.5" y="760" width="1.5" height="116"/><rect x="1267.0" y="760" width="1.5" height="116"/><rect x="1347.5" y="760" width="1.5" height="116"/><rect x="1465.0" y="760" width="1.5" height="116"/><rect x="1531.5" y="760" width="1.5" height="116"/><rect x="1623.5" y="760" width="1.5" height="116"/><rect x="1674.5" y="760" width="1.5" height="116"/><rect x="1764.0" y="760" width="1.5" height="116"/><rect x="1810.0" y="760" width="1.5" height="116"/></g><g fill="#6e0c30"><rect x="372.3" y="747" width="1.5" height="5"/><rect x="196.4" y="744" width="1.5" height="8"/><rect x="331.5" y="767" width="1.5" height="4"/><rect x="44.9" y="767" width="1.5" height="5"/><rect x="144.0" y="746" width="1.5" height="6"/><rect x="263.4" y="767" width="1.5" height="8"/><rect x="288.8" y="748" width="1.5" height="4"/><rect x="106.2" y="748" width="1.5" height="4"/><rect x="266.4" y="744" width="1.5" height="8"/><rect x="301.3" y="767" width="1.5" height="5"/><rect x="112.5" y="767" width="1.5" height="12"/><rect x="248.3" y="746" width="1.5" height="6"/><rect x="177.8" y="767" width="1.5" height="8"/><rect x="21.7" y="742" width="1.5" height="10"/><rect x="97.8" y="747" width="1.5" height="5"/><rect x="30.2" y="748" width="1.5" height="4"/><rect x="403.6" y="746" width="1.5" height="6"/><rect x="202.9" y="742" width="1.5" height="10"/><rect x="39.4" y="767" width="1.5" height="5"/><rect x="304.2" y="767" width="1.5" height="8"/><rect x="73.5" y="739" width="1.5" height="13"/><rect x="140.3" y="742" width="1.5" height="10"/><rect x="150.5" y="748" width="1.5" height="4"/><rect x="24.7" y="748" width="1.5" height="4"/><rect x="391.0" y="739" width="1.5" height="13"/><rect x="130.1" y="747" width="1.5" height="5"/><rect x="124.7" y="747" width="1.5" height="5"/><rect x="370.6" y="739" width="1.5" height="13"/><rect x="408.8" y="767" width="1.5" height="5"/><rect x="272.1" y="767" width="1.5" height="8"/><rect x="346.8" y="746" width="1.5" height="6"/><rect x="441.4" y="767" width="1.5" height="12"/><rect x="110.9" y="767" width="1.5" height="12"/><rect x="154.9" y="746" width="1.5" height="6"/><rect x="10.8" y="744" width="1.5" height="8"/><rect x="355.8" y="767" width="1.5" height="6"/><rect x="228.7" y="767" width="1.5" height="5"/><rect x="138.9" y="767" width="1.5" height="6"/><rect x="256.5" y="746" width="1.5" height="6"/><rect x="370.5" y="767" width="1.5" height="8"/><rect x="42.2" y="767" width="1.5" height="12"/><rect x="398.2" y="742" width="1.5" height="10"/><rect x="315.4" y="767" width="1.5" height="6"/><rect x="228.1" y="739" width="1.5" height="13"/><rect x="251.7" y="767" width="1.5" height="8"/><rect x="445.4" y="747" width="1.5" height="5"/><rect x="151.2" y="767" width="1.5" height="6"/><rect x="135.9" y="767" width="1.5" height="5"/><rect x="290.3" y="739" width="1.5" height="13"/><rect x="284.7" y="767" width="1.5" height="6"/><rect x="244.8" y="767" width="1.5" height="5"/><rect x="447.8" y="748" width="1.5" height="4"/><rect x="48.0" y="739" width="1.5" height="13"/><rect x="91.6" y="744" width="1.5" height="8"/><rect x="332.9" y="742" width="1.5" height="10"/><rect x="71.2" y="746" width="1.5" height="6"/><rect x="345.7" y="739" width="1.5" height="13"/><rect x="401.2" y="767" width="1.5" height="6"/><rect x="347.8" y="767" width="1.5" height="12"/><rect x="159.0" y="767" width="1.5" height="4"/><rect x="104.6" y="747" width="1.5" height="5"/><rect x="362.4" y="746" width="1.5" height="6"/><rect x="15.7" y="767" width="1.5" height="6"/><rect x="131.4" y="746" width="1.5" height="6"/><rect x="66.6" y="739" width="1.5" height="13"/><rect x="169.6" y="747" width="1.5" height="5"/><rect x="196.5" y="744" width="1.5" height="8"/><rect x="228.6" y="742" width="1.5" height="10"/><rect x="352.0" y="767" width="1.5" height="6"/><rect x="193.6" y="767" width="1.5" height="6"/><rect x="256.8" y="746" width="1.5" height="6"/><rect x="413.8" y="746" width="1.5" height="6"/><rect x="277.7" y="747" width="1.5" height="5"/><rect x="402.6" y="739" width="1.5" height="13"/><rect x="239.6" y="739" width="1.5" height="13"/><rect x="668.3" y="855" width="1.5" height="13"/><rect x="534.6" y="863" width="1.5" height="5"/><rect x="645.8" y="864" width="1.5" height="4"/><rect x="566.5" y="883" width="1.5" height="6"/><rect x="692.4" y="883" width="1.5" height="4"/><rect x="455.7" y="860" width="1.5" height="8"/><rect x="584.2" y="883" width="1.5" height="6"/><rect x="584.2" y="858" width="1.5" height="10"/><rect x="518.8" y="883" width="1.5" height="6"/><rect x="472.8" y="883" width="1.5" height="8"/><rect x="666.7" y="864" width="1.5" height="4"/><rect x="538.7" y="862" width="1.5" height="6"/><rect x="516.6" y="858" width="1.5" height="10"/><rect x="469.4" y="883" width="1.5" height="12"/><rect x="612.5" y="862" width="1.5" height="6"/><rect x="472.4" y="883" width="1.5" height="6"/><rect x="478.8" y="883" width="1.5" height="8"/><rect x="563.5" y="863" width="1.5" height="5"/><rect x="678.6" y="862" width="1.5" height="6"/><rect x="680.8" y="855" width="1.5" height="13"/><rect x="569.6" y="883" width="1.5" height="6"/><rect x="553.8" y="883" width="1.5" height="5"/><rect x="475.7" y="883" width="1.5" height="12"/><rect x="584.7" y="883" width="1.5" height="5"/><rect x="647.6" y="883" width="1.5" height="6"/><rect x="499.8" y="858" width="1.5" height="10"/><rect x="526.5" y="855" width="1.5" height="13"/><rect x="477.5" y="883" width="1.5" height="5"/><rect x="486.1" y="858" width="1.5" height="10"/><rect x="662.9" y="883" width="1.5" height="5"/><rect x="627.5" y="883" width="1.5" height="4"/><rect x="599.6" y="864" width="1.5" height="4"/><rect x="469.7" y="863" width="1.5" height="5"/><rect x="597.0" y="883" width="1.5" height="5"/><rect x="679.9" y="883" width="1.5" height="5"/><rect x="481.2" y="860" width="1.5" height="8"/><rect x="596.2" y="860" width="1.5" height="8"/><rect x="531.4" y="863" width="1.5" height="5"/><rect x="646.9" y="863" width="1.5" height="5"/><rect x="533.3" y="883" width="1.5" height="5"/><rect x="858.3" y="746" width="1.5" height="6"/><rect x="809.2" y="742" width="1.5" height="10"/><rect x="961.3" y="767" width="1.5" height="5"/><rect x="840.0" y="744" width="1.5" height="8"/><rect x="931.4" y="767" width="1.5" height="12"/><rect x="983.4" y="767" width="1.5" height="6"/><rect x="940.0" y="747" width="1.5" height="5"/><rect x="772.0" y="746" width="1.5" height="6"/><rect x="859.1" y="767" width="1.5" height="12"/><rect x="896.9" y="742" width="1.5" height="10"/><rect x="846.2" y="748" width="1.5" height="4"/><rect x="802.0" y="767" width="1.5" height="12"/><rect x="716.2" y="767" width="1.5" height="5"/><rect x="930.9" y="748" width="1.5" height="4"/><rect x="969.9" y="767" width="1.5" height="6"/><rect x="778.4" y="748" width="1.5" height="4"/><rect x="726.9" y="742" width="1.5" height="10"/><rect x="843.6" y="767" width="1.5" height="5"/><rect x="803.7" y="748" width="1.5" height="4"/><rect x="906.9" y="767" width="1.5" height="5"/><rect x="718.2" y="767" width="1.5" height="5"/><rect x="811.0" y="742" width="1.5" height="10"/><rect x="805.4" y="767" width="1.5" height="6"/><rect x="957.6" y="748" width="1.5" height="4"/><rect x="926.3" y="767" width="1.5" height="12"/><rect x="719.8" y="739" width="1.5" height="13"/><rect x="803.7" y="748" width="1.5" height="4"/><rect x="754.8" y="767" width="1.5" height="4"/><rect x="790.6" y="742" width="1.5" height="10"/><rect x="743.9" y="767" width="1.5" height="6"/><rect x="937.6" y="767" width="1.5" height="6"/><rect x="905.9" y="739" width="1.5" height="13"/><rect x="927.3" y="767" width="1.5" height="6"/><rect x="718.3" y="739" width="1.5" height="13"/><rect x="924.7" y="742" width="1.5" height="10"/><rect x="715.4" y="746" width="1.5" height="6"/><rect x="909.4" y="767" width="1.5" height="5"/><rect x="802.2" y="748" width="1.5" height="4"/><rect x="852.7" y="767" width="1.5" height="8"/><rect x="856.8" y="767" width="1.5" height="12"/><rect x="778.6" y="744" width="1.5" height="8"/><rect x="987.9" y="742" width="1.5" height="10"/><rect x="845.1" y="767" width="1.5" height="8"/><rect x="710.8" y="747" width="1.5" height="5"/><rect x="946.6" y="767" width="1.5" height="12"/><rect x="740.6" y="744" width="1.5" height="8"/><rect x="729.7" y="739" width="1.5" height="13"/><rect x="819.5" y="742" width="1.5" height="10"/><rect x="1022.1" y="883" width="1.5" height="8"/><rect x="1020.5" y="855" width="1.5" height="13"/><rect x="1067.0" y="863" width="1.5" height="5"/><rect x="991.3" y="883" width="1.5" height="6"/><rect x="1095.4" y="883" width="1.5" height="5"/><rect x="1013.2" y="864" width="1.5" height="4"/><rect x="1008.6" y="883" width="1.5" height="4"/><rect x="1070.5" y="862" width="1.5" height="6"/><rect x="999.8" y="862" width="1.5" height="6"/><rect x="1041.2" y="858" width="1.5" height="10"/><rect x="1087.4" y="864" width="1.5" height="4"/><rect x="1093.3" y="883" width="1.5" height="12"/><rect x="1008.1" y="864" width="1.5" height="4"/><rect x="1015.4" y="858" width="1.5" height="10"/><rect x="992.8" y="862" width="1.5" height="6"/><rect x="1056.2" y="883" width="1.5" height="4"/><rect x="1031.6" y="862" width="1.5" height="6"/><rect x="1063.0" y="855" width="1.5" height="13"/><rect x="1098.7" y="883" width="1.5" height="12"/><rect x="1137.3" y="747" width="1.5" height="5"/><rect x="1160.6" y="747" width="1.5" height="5"/><rect x="1243.5" y="767" width="1.5" height="5"/><rect x="1247.9" y="742" width="1.5" height="10"/><rect x="1127.4" y="739" width="1.5" height="13"/><rect x="1123.1" y="767" width="1.5" height="8"/><rect x="1134.1" y="767" width="1.5" height="12"/><rect x="1186.4" y="748" width="1.5" height="4"/><rect x="1112.3" y="746" width="1.5" height="6"/><rect x="1212.6" y="767" width="1.5" height="12"/><rect x="1199.8" y="767" width="1.5" height="5"/><rect x="1199.5" y="767" width="1.5" height="5"/><rect x="1255.2" y="739" width="1.5" height="13"/><rect x="1229.6" y="767" width="1.5" height="8"/><rect x="1265.9" y="744" width="1.5" height="8"/><rect x="1251.7" y="748" width="1.5" height="4"/><rect x="1109.6" y="767" width="1.5" height="12"/><rect x="1250.7" y="739" width="1.5" height="13"/><rect x="1213.4" y="767" width="1.5" height="4"/><rect x="1249.9" y="767" width="1.5" height="4"/><rect x="1208.3" y="767" width="1.5" height="12"/><rect x="1161.8" y="747" width="1.5" height="5"/><rect x="1135.6" y="767" width="1.5" height="5"/><rect x="1219.6" y="767" width="1.5" height="12"/><rect x="1136.2" y="739" width="1.5" height="13"/><rect x="1211.7" y="744" width="1.5" height="8"/><rect x="1304.6" y="883" width="1.5" height="5"/><rect x="1309.6" y="855" width="1.5" height="13"/><rect x="1342.3" y="860" width="1.5" height="8"/><rect x="1276.3" y="883" width="1.5" height="5"/><rect x="1301.9" y="883" width="1.5" height="6"/><rect x="1343.3" y="883" width="1.5" height="12"/><rect x="1306.7" y="883" width="1.5" height="6"/><rect x="1295.1" y="862" width="1.5" height="6"/><rect x="1273.0" y="883" width="1.5" height="4"/><rect x="1319.9" y="883" width="1.5" height="12"/><rect x="1286.7" y="862" width="1.5" height="6"/><rect x="1285.5" y="855" width="1.5" height="13"/><rect x="1290.8" y="864" width="1.5" height="4"/><rect x="1432.0" y="767" width="1.5" height="8"/><rect x="1397.1" y="742" width="1.5" height="10"/><rect x="1449.8" y="767" width="1.5" height="5"/><rect x="1418.6" y="746" width="1.5" height="6"/><rect x="1439.5" y="767" width="1.5" height="8"/><rect x="1461.8" y="767" width="1.5" height="5"/><rect x="1376.0" y="742" width="1.5" height="10"/><rect x="1417.5" y="767" width="1.5" height="6"/><rect x="1383.2" y="767" width="1.5" height="6"/><rect x="1445.2" y="767" width="1.5" height="12"/><rect x="1422.8" y="767" width="1.5" height="6"/><rect x="1375.1" y="748" width="1.5" height="4"/><rect x="1409.1" y="767" width="1.5" height="8"/><rect x="1404.8" y="744" width="1.5" height="8"/><rect x="1432.4" y="767" width="1.5" height="6"/><rect x="1441.7" y="746" width="1.5" height="6"/><rect x="1366.3" y="739" width="1.5" height="13"/><rect x="1355.5" y="767" width="1.5" height="12"/><rect x="1407.2" y="767" width="1.5" height="5"/><rect x="1495.4" y="883" width="1.5" height="4"/><rect x="1522.3" y="858" width="1.5" height="10"/><rect x="1521.5" y="855" width="1.5" height="13"/><rect x="1472.6" y="883" width="1.5" height="8"/><rect x="1498.6" y="858" width="1.5" height="10"/><rect x="1520.9" y="863" width="1.5" height="5"/><rect x="1494.9" y="864" width="1.5" height="4"/><rect x="1501.9" y="883" width="1.5" height="5"/><rect x="1506.2" y="883" width="1.5" height="4"/><rect x="1470.9" y="883" width="1.5" height="8"/><rect x="1480.2" y="863" width="1.5" height="5"/><rect x="1622.3" y="767" width="1.5" height="4"/><rect x="1585.6" y="767" width="1.5" height="8"/><rect x="1544.2" y="767" width="1.5" height="4"/><rect x="1587.4" y="767" width="1.5" height="6"/><rect x="1569.1" y="767" width="1.5" height="12"/><rect x="1559.8" y="748" width="1.5" height="4"/><rect x="1565.7" y="767" width="1.5" height="6"/><rect x="1595.0" y="744" width="1.5" height="8"/><rect x="1604.1" y="747" width="1.5" height="5"/><rect x="1563.9" y="767" width="1.5" height="4"/><rect x="1565.6" y="767" width="1.5" height="4"/><rect x="1580.1" y="767" width="1.5" height="4"/><rect x="1611.0" y="744" width="1.5" height="8"/><rect x="1600.5" y="767" width="1.5" height="8"/><rect x="1610.3" y="767" width="1.5" height="12"/><rect x="1657.4" y="883" width="1.5" height="8"/><rect x="1649.4" y="855" width="1.5" height="13"/><rect x="1660.5" y="864" width="1.5" height="4"/><rect x="1639.1" y="862" width="1.5" height="6"/><rect x="1650.2" y="860" width="1.5" height="8"/><rect x="1669.2" y="864" width="1.5" height="4"/><rect x="1641.3" y="855" width="1.5" height="13"/><rect x="1659.7" y="860" width="1.5" height="8"/><rect x="1707.2" y="767" width="1.5" height="5"/><rect x="1688.2" y="742" width="1.5" height="10"/><rect x="1713.9" y="748" width="1.5" height="4"/><rect x="1693.0" y="767" width="1.5" height="4"/><rect x="1687.2" y="742" width="1.5" height="10"/><rect x="1730.7" y="746" width="1.5" height="6"/><rect x="1723.4" y="767" width="1.5" height="8"/><rect x="1732.8" y="767" width="1.5" height="12"/><rect x="1696.8" y="767" width="1.5" height="8"/><rect x="1737.1" y="767" width="1.5" height="12"/><rect x="1685.1" y="744" width="1.5" height="8"/><rect x="1679.4" y="767" width="1.5" height="6"/><rect x="1761.7" y="747" width="1.5" height="5"/><rect x="1732.1" y="744" width="1.5" height="8"/><rect x="1780.3" y="862" width="1.5" height="6"/><rect x="1797.0" y="858" width="1.5" height="10"/><rect x="1773.1" y="863" width="1.5" height="5"/><rect x="1793.5" y="855" width="1.5" height="13"/><rect x="1775.5" y="858" width="1.5" height="10"/><rect x="1789.1" y="883" width="1.5" height="8"/><rect x="1774.4" y="883" width="1.5" height="12"/><rect x="1849.3" y="767" width="1.5" height="8"/><rect x="1815.0" y="742" width="1.5" height="10"/><rect x="1864.5" y="747" width="1.5" height="5"/><rect x="1876.6" y="748" width="1.5" height="4"/><rect x="1835.5" y="767" width="1.5" height="8"/><rect x="1852.9" y="767" width="1.5" height="6"/><rect x="1831.3" y="767" width="1.5" height="12"/><rect x="1836.5" y="767" width="1.5" height="8"/><rect x="1829.1" y="747" width="1.5" height="5"/><rect x="1842.4" y="767" width="1.5" height="4"/><rect x="1836.9" y="742" width="1.5" height="10"/><rect x="1848.5" y="767" width="1.5" height="4"/></g><g fill="#9a1040"><rect x="5.0" y="752" width="2" height="4"/><rect x="5.0" y="763.5" width="2" height="4"/><rect x="7.0" y="750" width="3" height="6"/><rect x="7.0" y="763.5" width="3" height="5"/><rect x="10.0" y="751" width="2" height="5"/><rect x="10.0" y="763.5" width="2" height="6"/><rect x="12.0" y="750" width="2" height="6"/><rect x="12.0" y="763.5" width="2" height="4"/><rect x="14.0" y="750" width="3" height="6"/><rect x="14.0" y="763.5" width="3" height="3"/><rect x="17.0" y="750" width="2" height="6"/><rect x="19.0" y="763.5" width="3" height="5"/><rect x="22.0" y="752" width="2" height="4"/><rect x="22.0" y="763.5" width="2" height="6"/><rect x="24.0" y="763.5" width="3" height="5"/><rect x="27.0" y="763.5" width="2" height="4"/><rect x="29.0" y="751" width="2" height="5"/><rect x="31.0" y="750" width="3" height="6"/><rect x="31.0" y="763.5" width="3" height="4"/><rect x="34.0" y="751" width="2" height="5"/><rect x="34.0" y="763.5" width="2" height="5"/><rect x="36.0" y="763.5" width="3" height="4"/><rect x="39.0" y="750" width="2" height="6"/><rect x="39.0" y="763.5" width="2" height="5"/><rect x="41.0" y="751" width="3" height="5"/><rect x="41.0" y="763.5" width="3" height="4"/><rect x="44.0" y="750" width="3" height="6"/><rect x="44.0" y="763.5" width="3" height="6"/><rect x="47.0" y="763.5" width="2" height="4"/><rect x="49.0" y="751" width="2" height="5"/><rect x="49.0" y="763.5" width="2" height="5"/><rect x="53.0" y="750" width="3" height="6"/><rect x="53.0" y="763.5" width="3" height="3"/><rect x="56.0" y="752" width="2" height="4"/><rect x="56.0" y="763.5" width="2" height="5"/><rect x="58.0" y="751" width="2" height="5"/><rect x="58.0" y="763.5" width="2" height="4"/><rect x="60.0" y="751" width="2" height="5"/><rect x="60.0" y="763.5" width="2" height="4"/><rect x="62.0" y="763.5" width="2" height="6"/><rect x="64.0" y="752" width="3" height="4"/><rect x="64.0" y="763.5" width="3" height="3"/><rect x="67.0" y="752" width="2" height="4"/><rect x="69.0" y="751" width="2" height="5"/><rect x="69.0" y="763.5" width="2" height="3"/><rect x="71.0" y="750" width="2" height="6"/><rect x="73.0" y="751" width="2" height="5"/><rect x="73.0" y="763.5" width="2" height="5"/><rect x="75.0" y="752" width="2" height="4"/><rect x="75.0" y="763.5" width="2" height="4"/><rect x="77.0" y="752" width="3" height="4"/><rect x="77.0" y="763.5" width="3" height="4"/><rect x="80.0" y="750" width="2" height="6"/><rect x="80.0" y="763.5" width="2" height="5"/><rect x="82.0" y="750" width="2" height="6"/><rect x="82.0" y="763.5" width="2" height="6"/><rect x="84.0" y="751" width="2" height="5"/><rect x="86.0" y="751" width="2" height="5"/><rect x="86.0" y="763.5" width="2" height="6"/><rect x="88.0" y="752" width="2" height="4"/><rect x="88.0" y="763.5" width="2" height="5"/><rect x="90.0" y="752" width="2" height="4"/><rect x="90.0" y="763.5" width="2" height="6"/><rect x="92.0" y="750" width="3" height="6"/><rect x="95.0" y="752" width="2" height="4"/><rect x="97.0" y="752" width="3" height="4"/><rect x="97.0" y="763.5" width="3" height="4"/><rect x="100.0" y="752" width="2" height="4"/><rect x="100.0" y="763.5" width="2" height="3"/><rect x="102.0" y="750" width="3" height="6"/><rect x="102.0" y="763.5" width="3" height="5"/><rect x="105.0" y="750" width="2" height="6"/><rect x="105.0" y="763.5" width="2" height="5"/><rect x="107.0" y="751" width="2" height="5"/><rect x="107.0" y="763.5" width="2" height="5"/><rect x="109.0" y="751" width="3" height="5"/><rect x="109.0" y="763.5" width="3" height="5"/><rect x="112.0" y="750" width="2" height="6"/><rect x="112.0" y="763.5" width="2" height="4"/><rect x="114.0" y="751" width="2" height="5"/><rect x="114.0" y="763.5" width="2" height="5"/><rect x="116.0" y="763.5" width="2" height="6"/><rect x="118.0" y="750" width="2" height="6"/><rect x="118.0" y="763.5" width="2" height="5"/><rect x="120.0" y="752" width="2" height="4"/><rect x="122.0" y="751" width="2" height="5"/><rect x="122.0" y="763.5" width="2" height="4"/><rect x="124.0" y="750" width="2" height="6"/><rect x="124.0" y="763.5" width="2" height="4"/><rect x="126.0" y="751" width="2" height="5"/><rect x="126.0" y="763.5" width="2" height="4"/><rect x="128.0" y="752" width="3" height="4"/><rect x="128.0" y="763.5" width="3" height="5"/><rect x="131.0" y="763.5" width="3" height="4"/><rect x="134.0" y="763.5" width="3" height="5"/><rect x="140.0" y="750" width="2" height="6"/><rect x="140.0" y="763.5" width="2" height="4"/><rect x="144.0" y="750" width="2" height="6"/><rect x="144.0" y="763.5" width="2" height="4"/><rect x="146.0" y="750" width="2" height="6"/><rect x="146.0" y="763.5" width="2" height="3"/><rect x="148.0" y="763.5" width="2" height="3"/><rect x="150.0" y="751" width="2" height="5"/><rect x="152.0" y="763.5" width="2" height="5"/><rect x="154.0" y="763.5" width="2" height="4"/><rect x="156.0" y="750" width="3" height="6"/><rect x="156.0" y="763.5" width="3" height="4"/><rect x="159.0" y="751" width="3" height="5"/><rect x="162.0" y="750" width="2" height="6"/><rect x="164.0" y="751" width="2" height="5"/><rect x="164.0" y="763.5" width="2" height="3"/><rect x="166.0" y="750" width="2" height="6"/><rect x="166.0" y="763.5" width="2" height="5"/><rect x="168.0" y="750" width="2" height="6"/><rect x="170.0" y="752" width="2" height="4"/><rect x="170.0" y="763.5" width="2" height="4"/><rect x="172.0" y="752" width="3" height="4"/><rect x="172.0" y="763.5" width="3" height="4"/><rect x="175.0" y="751" width="2" height="5"/><rect x="175.0" y="763.5" width="2" height="6"/><rect x="177.0" y="763.5" width="3" height="3"/><rect x="180.0" y="752" width="2" height="4"/><rect x="180.0" y="763.5" width="2" height="4"/><rect x="182.0" y="752" width="2" height="4"/><rect x="182.0" y="763.5" width="2" height="6"/><rect x="184.0" y="763.5" width="2" height="6"/><rect x="186.0" y="750" width="2" height="6"/><rect x="188.0" y="763.5" width="3" height="4"/><rect x="191.0" y="763.5" width="3" height="4"/><rect x="194.0" y="752" width="3" height="4"/><rect x="194.0" y="763.5" width="3" height="4"/><rect x="197.0" y="750" width="3" height="6"/><rect x="197.0" y="763.5" width="3" height="5"/><rect x="200.0" y="750" width="3" height="6"/><rect x="200.0" y="763.5" width="3" height="5"/><rect x="205.0" y="750" width="2" height="6"/><rect x="207.0" y="752" width="2" height="4"/><rect x="207.0" y="763.5" width="2" height="5"/><rect x="209.0" y="751" width="2" height="5"/><rect x="209.0" y="763.5" width="2" height="6"/><rect x="211.0" y="752" width="3" height="4"/><rect x="214.0" y="751" width="2" height="5"/><rect x="214.0" y="763.5" width="2" height="4"/><rect x="216.0" y="751" width="2" height="5"/><rect x="216.0" y="763.5" width="2" height="6"/><rect x="218.0" y="750" width="2" height="6"/><rect x="218.0" y="763.5" width="2" height="6"/><rect x="220.0" y="763.5" width="3" height="4"/><rect x="223.0" y="752" width="2" height="4"/><rect x="223.0" y="763.5" width="2" height="6"/><rect x="225.0" y="763.5" width="2" height="3"/><rect x="227.0" y="763.5" width="2" height="6"/><rect x="229.0" y="752" width="2" height="4"/><rect x="231.0" y="752" width="3" height="4"/><rect x="231.0" y="763.5" width="3" height="6"/><rect x="234.0" y="751" width="3" height="5"/><rect x="234.0" y="763.5" width="3" height="5"/><rect x="237.0" y="752" width="2" height="4"/><rect x="237.0" y="763.5" width="2" height="3"/><rect x="239.0" y="750" width="2" height="6"/><rect x="241.0" y="751" width="3" height="5"/><rect x="241.0" y="763.5" width="3" height="5"/><rect x="244.0" y="750" width="3" height="6"/><rect x="244.0" y="763.5" width="3" height="3"/><rect x="247.0" y="751" width="2" height="5"/><rect x="247.0" y="763.5" width="2" height="6"/><rect x="249.0" y="763.5" width="2" height="6"/><rect x="251.0" y="752" width="3" height="4"/><rect x="251.0" y="763.5" width="3" height="6"/><rect x="254.0" y="750" width="2" height="6"/><rect x="254.0" y="763.5" width="2" height="4"/><rect x="256.0" y="751" width="2" height="5"/><rect x="258.0" y="752" width="2" height="4"/><rect x="258.0" y="763.5" width="2" height="5"/><rect x="260.0" y="752" width="2" height="4"/><rect x="260.0" y="763.5" width="2" height="3"/><rect x="262.0" y="752" width="3" height="4"/><rect x="265.0" y="752" width="2" height="4"/><rect x="265.0" y="763.5" width="2" height="4"/><rect x="267.0" y="750" width="2" height="6"/><rect x="267.0" y="763.5" width="2" height="4"/><rect x="269.0" y="752" width="2" height="4"/><rect x="269.0" y="763.5" width="2" height="3"/><rect x="271.0" y="750" width="2" height="6"/><rect x="271.0" y="763.5" width="2" height="3"/><rect x="273.0" y="750" width="2" height="6"/><rect x="273.0" y="763.5" width="2" height="5"/><rect x="275.0" y="751" width="2" height="5"/><rect x="275.0" y="763.5" width="2" height="6"/><rect x="277.0" y="750" width="2" height="6"/><rect x="277.0" y="763.5" width="2" height="3"/><rect x="279.0" y="751" width="2" height="5"/><rect x="279.0" y="763.5" width="2" height="5"/><rect x="281.0" y="750" width="2" height="6"/><rect x="281.0" y="763.5" width="2" height="4"/><rect x="283.0" y="750" width="2" height="6"/><rect x="285.0" y="750" width="3" height="6"/><rect x="285.0" y="763.5" width="3" height="5"/><rect x="288.0" y="750" width="2" height="6"/><rect x="288.0" y="763.5" width="2" height="4"/><rect x="290.0" y="752" width="2" height="4"/><rect x="290.0" y="763.5" width="2" height="3"/><rect x="292.0" y="751" width="3" height="5"/><rect x="292.0" y="763.5" width="3" height="4"/><rect x="295.0" y="751" width="2" height="5"/><rect x="295.0" y="763.5" width="2" height="5"/><rect x="297.0" y="751" width="3" height="5"/><rect x="297.0" y="763.5" width="3" height="4"/><rect x="300.0" y="763.5" width="2" height="3"/><rect x="302.0" y="752" width="2" height="4"/><rect x="304.0" y="763.5" width="2" height="5"/><rect x="308.0" y="752" width="3" height="4"/><rect x="308.0" y="763.5" width="3" height="4"/><rect x="311.0" y="752" width="2" height="4"/><rect x="311.0" y="763.5" width="2" height="4"/><rect x="313.0" y="763.5" width="2" height="3"/><rect x="315.0" y="763.5" width="2" height="6"/><rect x="317.0" y="752" width="2" height="4"/><rect x="319.0" y="752" width="2" height="4"/><rect x="319.0" y="763.5" width="2" height="6"/><rect x="321.0" y="751" width="3" height="5"/><rect x="321.0" y="763.5" width="3" height="3"/><rect x="324.0" y="763.5" width="2" height="3"/><rect x="326.0" y="763.5" width="3" height="4"/><rect x="329.0" y="763.5" width="2" height="5"/><rect x="331.0" y="750" width="2" height="6"/><rect x="331.0" y="763.5" width="2" height="5"/><rect x="333.0" y="763.5" width="2" height="5"/><rect x="335.0" y="752" width="2" height="4"/><rect x="335.0" y="763.5" width="2" height="5"/><rect x="337.0" y="751" width="2" height="5"/><rect x="337.0" y="763.5" width="2" height="6"/><rect x="339.0" y="763.5" width="2" height="4"/><rect x="341.0" y="750" width="2" height="6"/><rect x="343.0" y="751" width="2" height="5"/><rect x="343.0" y="763.5" width="2" height="5"/><rect x="345.0" y="752" width="2" height="4"/><rect x="345.0" y="763.5" width="2" height="4"/><rect x="347.0" y="752" width="2" height="4"/><rect x="347.0" y="763.5" width="2" height="3"/><rect x="349.0" y="752" width="3" height="4"/><rect x="349.0" y="763.5" width="3" height="4"/><rect x="352.0" y="751" width="3" height="5"/><rect x="352.0" y="763.5" width="3" height="6"/><rect x="355.0" y="750" width="2" height="6"/><rect x="355.0" y="763.5" width="2" height="3"/><rect x="357.0" y="751" width="2" height="5"/><rect x="359.0" y="763.5" width="2" height="6"/><rect x="361.0" y="750" width="2" height="6"/><rect x="361.0" y="763.5" width="2" height="6"/><rect x="363.0" y="752" width="2" height="4"/><rect x="363.0" y="763.5" width="2" height="6"/><rect x="365.0" y="751" width="2" height="5"/><rect x="365.0" y="763.5" width="2" height="3"/><rect x="369.0" y="751" width="2" height="5"/><rect x="369.0" y="763.5" width="2" height="5"/><rect x="373.0" y="751" width="2" height="5"/><rect x="373.0" y="763.5" width="2" height="3"/><rect x="375.0" y="750" width="3" height="6"/><rect x="375.0" y="763.5" width="3" height="3"/><rect x="378.0" y="750" width="3" height="6"/><rect x="381.0" y="750" width="2" height="6"/><rect x="381.0" y="763.5" width="2" height="5"/><rect x="383.0" y="750" width="2" height="6"/><rect x="385.0" y="763.5" width="2" height="5"/><rect x="387.0" y="750" width="2" height="6"/><rect x="387.0" y="763.5" width="2" height="5"/><rect x="389.0" y="763.5" width="2" height="3"/><rect x="391.0" y="763.5" width="2" height="6"/><rect x="393.0" y="763.5" width="2" height="5"/><rect x="395.0" y="763.5" width="2" height="3"/><rect x="397.0" y="750" width="3" height="6"/><rect x="397.0" y="763.5" width="3" height="5"/><rect x="400.0" y="763.5" width="2" height="3"/><rect x="402.0" y="763.5" width="2" height="4"/><rect x="404.0" y="752" width="2" height="4"/><rect x="408.0" y="751" width="2" height="5"/><rect x="410.0" y="751" width="2" height="5"/><rect x="410.0" y="763.5" width="2" height="6"/><rect x="412.0" y="752" width="3" height="4"/><rect x="412.0" y="763.5" width="3" height="5"/><rect x="415.0" y="752" width="2" height="4"/><rect x="415.0" y="763.5" width="2" height="3"/><rect x="417.0" y="752" width="2" height="4"/><rect x="417.0" y="763.5" width="2" height="6"/><rect x="419.0" y="752" width="3" height="4"/><rect x="419.0" y="763.5" width="3" height="6"/><rect x="422.0" y="752" width="2" height="4"/><rect x="422.0" y="763.5" width="2" height="6"/><rect x="424.0" y="751" width="2" height="5"/><rect x="424.0" y="763.5" width="2" height="3"/><rect x="426.0" y="751" width="2" height="5"/><rect x="426.0" y="763.5" width="2" height="6"/><rect x="431.0" y="752" width="2" height="4"/><rect x="431.0" y="763.5" width="2" height="5"/><rect x="433.0" y="763.5" width="2" height="6"/><rect x="438.0" y="751" width="3" height="5"/><rect x="438.0" y="763.5" width="3" height="5"/><rect x="441.0" y="750" width="2" height="6"/><rect x="441.0" y="763.5" width="2" height="6"/><rect x="445.0" y="752" width="2" height="4"/><rect x="445.0" y="763.5" width="2" height="3"/><rect x="447.0" y="751" width="3" height="5"/><rect x="447.0" y="763.5" width="3" height="5"/><rect x="450.0" y="750" width="2" height="6"/><rect x="450.0" y="763.5" width="2" height="4"/><rect x="452.0" y="752" width="3" height="4"/><rect x="452.0" y="763.5" width="3" height="3"/><rect x="455.2" y="867" width="2" height="5"/><rect x="455.2" y="879.5" width="2" height="3"/><rect x="457.2" y="867" width="2" height="5"/><rect x="457.2" y="879.5" width="2" height="5"/><rect x="459.2" y="868" width="2" height="4"/><rect x="459.2" y="879.5" width="2" height="4"/><rect x="461.2" y="866" width="3" height="6"/><rect x="461.2" y="879.5" width="3" height="6"/><rect x="464.2" y="867" width="3" height="5"/><rect x="464.2" y="879.5" width="3" height="6"/><rect x="467.2" y="867" width="2" height="5"/><rect x="467.2" y="879.5" width="2" height="6"/><rect x="469.2" y="866" width="2" height="6"/><rect x="471.2" y="868" width="3" height="4"/><rect x="471.2" y="879.5" width="3" height="4"/><rect x="474.2" y="867" width="3" height="5"/><rect x="474.2" y="879.5" width="3" height="6"/><rect x="477.2" y="866" width="2" height="6"/><rect x="477.2" y="879.5" width="2" height="6"/><rect x="479.2" y="866" width="2" height="6"/><rect x="481.2" y="867" width="2" height="5"/><rect x="481.2" y="879.5" width="2" height="6"/><rect x="483.2" y="879.5" width="2" height="3"/><rect x="485.2" y="867" width="2" height="5"/><rect x="485.2" y="879.5" width="2" height="5"/><rect x="487.2" y="879.5" width="2" height="3"/><rect x="489.2" y="868" width="2" height="4"/><rect x="489.2" y="879.5" width="2" height="3"/><rect x="491.2" y="867" width="3" height="5"/><rect x="491.2" y="879.5" width="3" height="6"/><rect x="494.2" y="866" width="2" height="6"/><rect x="494.2" y="879.5" width="2" height="3"/><rect x="496.2" y="879.5" width="3" height="3"/><rect x="499.2" y="867" width="2" height="5"/><rect x="499.2" y="879.5" width="2" height="6"/><rect x="501.2" y="867" width="2" height="5"/><rect x="501.2" y="879.5" width="2" height="3"/><rect x="503.2" y="868" width="3" height="4"/><rect x="506.2" y="866" width="3" height="6"/><rect x="506.2" y="879.5" width="3" height="3"/><rect x="509.2" y="868" width="2" height="4"/><rect x="509.2" y="879.5" width="2" height="3"/><rect x="511.2" y="879.5" width="2" height="4"/><rect x="513.2" y="866" width="2" height="6"/><rect x="513.2" y="879.5" width="2" height="6"/><rect x="515.2" y="866" width="2" height="6"/><rect x="517.2" y="867" width="2" height="5"/><rect x="517.2" y="879.5" width="2" height="5"/><rect x="519.2" y="868" width="3" height="4"/><rect x="522.2" y="868" width="3" height="4"/><rect x="522.2" y="879.5" width="3" height="6"/><rect x="525.2" y="866" width="2" height="6"/><rect x="525.2" y="879.5" width="2" height="6"/><rect x="527.2" y="868" width="2" height="4"/><rect x="527.2" y="879.5" width="2" height="5"/><rect x="529.2" y="867" width="2" height="5"/><rect x="529.2" y="879.5" width="2" height="6"/><rect x="531.2" y="867" width="2" height="5"/><rect x="531.2" y="879.5" width="2" height="3"/><rect x="533.2" y="867" width="3" height="5"/><rect x="533.2" y="879.5" width="3" height="3"/><rect x="536.2" y="879.5" width="2" height="5"/><rect x="538.2" y="868" width="2" height="4"/><rect x="538.2" y="879.5" width="2" height="5"/><rect x="540.2" y="867" width="3" height="5"/><rect x="543.2" y="868" width="2" height="4"/><rect x="543.2" y="879.5" width="2" height="6"/><rect x="545.2" y="866" width="2" height="6"/><rect x="545.2" y="879.5" width="2" height="3"/><rect x="547.2" y="866" width="2" height="6"/><rect x="547.2" y="879.5" width="2" height="3"/><rect x="549.2" y="866" width="2" height="6"/><rect x="551.2" y="866" width="2" height="6"/><rect x="551.2" y="879.5" width="2" height="3"/><rect x="553.2" y="867" width="3" height="5"/><rect x="553.2" y="879.5" width="3" height="4"/><rect x="556.2" y="879.5" width="2" height="5"/><rect x="558.2" y="879.5" width="2" height="4"/><rect x="560.2" y="866" width="3" height="6"/><rect x="560.2" y="879.5" width="3" height="6"/><rect x="563.2" y="866" width="2" height="6"/><rect x="563.2" y="879.5" width="2" height="4"/><rect x="565.2" y="868" width="2" height="4"/><rect x="565.2" y="879.5" width="2" height="4"/><rect x="567.2" y="867" width="2" height="5"/><rect x="569.2" y="866" width="2" height="6"/><rect x="569.2" y="879.5" width="2" height="5"/><rect x="573.2" y="879.5" width="3" height="4"/><rect x="576.2" y="879.5" width="2" height="5"/><rect x="578.2" y="868" width="3" height="4"/><rect x="581.2" y="867" width="2" height="5"/><rect x="581.2" y="879.5" width="2" height="5"/><rect x="583.2" y="866" width="2" height="6"/><rect x="583.2" y="879.5" width="2" height="3"/><rect x="585.2" y="867" width="2" height="5"/><rect x="587.2" y="879.5" width="3" height="6"/><rect x="590.2" y="867" width="2" height="5"/><rect x="590.2" y="879.5" width="2" height="3"/><rect x="592.2" y="866" width="2" height="6"/><rect x="592.2" y="879.5" width="2" height="3"/><rect x="594.2" y="866" width="3" height="6"/><rect x="594.2" y="879.5" width="3" height="5"/><rect x="597.2" y="879.5" width="2" height="6"/><rect x="599.2" y="867" width="2" height="5"/><rect x="601.2" y="879.5" width="3" height="5"/><rect x="604.2" y="868" width="3" height="4"/><rect x="604.2" y="879.5" width="3" height="6"/><rect x="607.2" y="879.5" width="2" height="3"/><rect x="609.2" y="867" width="2" height="5"/><rect x="611.2" y="867" width="2" height="5"/><rect x="613.2" y="868" width="2" height="4"/><rect x="613.2" y="879.5" width="2" height="6"/><rect x="615.2" y="867" width="3" height="5"/><rect x="615.2" y="879.5" width="3" height="6"/><rect x="618.2" y="867" width="2" height="5"/><rect x="618.2" y="879.5" width="2" height="5"/><rect x="620.2" y="868" width="2" height="4"/><rect x="620.2" y="879.5" width="2" height="6"/><rect x="622.2" y="866" width="2" height="6"/><rect x="622.2" y="879.5" width="2" height="3"/><rect x="624.2" y="867" width="3" height="5"/><rect x="624.2" y="879.5" width="3" height="6"/><rect x="627.2" y="867" width="2" height="5"/><rect x="627.2" y="879.5" width="2" height="5"/><rect x="629.2" y="867" width="2" height="5"/><rect x="629.2" y="879.5" width="2" height="5"/><rect x="631.2" y="867" width="3" height="5"/><rect x="631.2" y="879.5" width="3" height="3"/><rect x="634.2" y="868" width="2" height="4"/><rect x="634.2" y="879.5" width="2" height="3"/><rect x="636.2" y="866" width="3" height="6"/><rect x="639.2" y="867" width="3" height="5"/><rect x="639.2" y="879.5" width="3" height="3"/><rect x="642.2" y="866" width="2" height="6"/><rect x="642.2" y="879.5" width="2" height="6"/><rect x="644.2" y="866" width="2" height="6"/><rect x="644.2" y="879.5" width="2" height="3"/><rect x="646.2" y="866" width="2" height="6"/><rect x="646.2" y="879.5" width="2" height="3"/><rect x="648.2" y="866" width="2" height="6"/><rect x="648.2" y="879.5" width="2" height="4"/><rect x="650.2" y="866" width="2" height="6"/><rect x="652.2" y="867" width="3" height="5"/><rect x="655.2" y="866" width="3" height="6"/><rect x="655.2" y="879.5" width="3" height="6"/><rect x="658.2" y="868" width="2" height="4"/><rect x="658.2" y="879.5" width="2" height="6"/><rect x="660.2" y="866" width="3" height="6"/><rect x="660.2" y="879.5" width="3" height="6"/><rect x="663.2" y="867" width="3" height="5"/><rect x="663.2" y="879.5" width="3" height="6"/><rect x="666.2" y="868" width="2" height="4"/><rect x="668.2" y="867" width="2" height="5"/><rect x="668.2" y="879.5" width="2" height="6"/><rect x="672.2" y="866" width="2" height="6"/><rect x="672.2" y="879.5" width="2" height="5"/><rect x="674.2" y="867" width="3" height="5"/><rect x="674.2" y="879.5" width="3" height="3"/><rect x="677.2" y="867" width="3" height="5"/><rect x="680.2" y="879.5" width="2" height="4"/><rect x="682.2" y="868" width="2" height="4"/><rect x="682.2" y="879.5" width="2" height="6"/><rect x="684.2" y="867" width="3" height="5"/><rect x="684.2" y="879.5" width="3" height="5"/><rect x="687.2" y="866" width="3" height="6"/><rect x="687.2" y="879.5" width="3" height="6"/><rect x="690.2" y="868" width="2" height="4"/><rect x="690.2" y="879.5" width="2" height="5"/><rect x="694.2" y="867" width="2" height="5"/><rect x="694.2" y="879.5" width="2" height="3"/><rect x="696.2" y="867" width="2.099999999999909" height="5"/><rect x="696.2" y="879.5" width="2.099999999999909" height="3"/><rect x="698.3" y="750" width="3" height="6"/><rect x="698.3" y="763.5" width="3" height="6"/><rect x="701.3" y="751" width="2" height="5"/><rect x="703.3" y="751" width="2" height="5"/><rect x="703.3" y="763.5" width="2" height="4"/><rect x="705.3" y="751" width="2" height="5"/><rect x="705.3" y="763.5" width="2" height="3"/><rect x="707.3" y="751" width="3" height="5"/><rect x="707.3" y="763.5" width="3" height="4"/><rect x="710.3" y="751" width="2" height="5"/><rect x="710.3" y="763.5" width="2" height="4"/><rect x="712.3" y="751" width="2" height="5"/><rect x="712.3" y="763.5" width="2" height="4"/><rect x="717.3" y="752" width="2" height="4"/><rect x="717.3" y="763.5" width="2" height="4"/><rect x="719.3" y="751" width="3" height="5"/><rect x="719.3" y="763.5" width="3" height="4"/><rect x="722.3" y="751" width="3" height="5"/><rect x="722.3" y="763.5" width="3" height="3"/><rect x="725.3" y="750" width="2" height="6"/><rect x="725.3" y="763.5" width="2" height="5"/><rect x="727.3" y="751" width="2" height="5"/><rect x="729.3" y="752" width="3" height="4"/><rect x="732.3" y="750" width="3" height="6"/><rect x="732.3" y="763.5" width="3" height="6"/><rect x="735.3" y="750" width="2" height="6"/><rect x="735.3" y="763.5" width="2" height="5"/><rect x="737.3" y="752" width="2" height="4"/><rect x="739.3" y="752" width="2" height="4"/><rect x="739.3" y="763.5" width="2" height="6"/><rect x="741.3" y="752" width="2" height="4"/><rect x="741.3" y="763.5" width="2" height="6"/><rect x="743.3" y="752" width="3" height="4"/><rect x="743.3" y="763.5" width="3" height="4"/><rect x="746.3" y="750" width="3" height="6"/><rect x="746.3" y="763.5" width="3" height="4"/><rect x="752.3" y="751" width="2" height="5"/><rect x="752.3" y="763.5" width="2" height="3"/><rect x="754.3" y="751" width="3" height="5"/><rect x="754.3" y="763.5" width="3" height="5"/><rect x="757.3" y="751" width="2" height="5"/><rect x="757.3" y="763.5" width="2" height="6"/><rect x="759.3" y="751" width="2" height="5"/><rect x="759.3" y="763.5" width="2" height="4"/><rect x="761.3" y="752" width="3" height="4"/><rect x="761.3" y="763.5" width="3" height="5"/><rect x="764.3" y="750" width="2" height="6"/><rect x="764.3" y="763.5" width="2" height="3"/><rect x="766.3" y="763.5" width="2" height="4"/><rect x="768.3" y="751" width="2" height="5"/><rect x="768.3" y="763.5" width="2" height="5"/><rect x="770.3" y="750" width="2" height="6"/><rect x="770.3" y="763.5" width="2" height="5"/><rect x="772.3" y="750" width="2" height="6"/><rect x="772.3" y="763.5" width="2" height="5"/><rect x="774.3" y="763.5" width="3" height="4"/><rect x="777.3" y="752" width="3" height="4"/><rect x="780.3" y="751" width="2" height="5"/><rect x="780.3" y="763.5" width="2" height="4"/><rect x="782.3" y="751" width="2" height="5"/><rect x="782.3" y="763.5" width="2" height="5"/><rect x="784.3" y="750" width="2" height="6"/><rect x="786.3" y="750" width="2" height="6"/><rect x="786.3" y="763.5" width="2" height="6"/><rect x="788.3" y="763.5" width="2" height="4"/><rect x="790.3" y="752" width="2" height="4"/><rect x="790.3" y="763.5" width="2" height="4"/><rect x="792.3" y="750" width="3" height="6"/><rect x="792.3" y="763.5" width="3" height="6"/><rect x="795.3" y="750" width="3" height="6"/><rect x="798.3" y="763.5" width="2" height="6"/><rect x="800.3" y="751" width="2" height="5"/><rect x="800.3" y="763.5" width="2" height="4"/><rect x="802.3" y="752" width="2" height="4"/><rect x="802.3" y="763.5" width="2" height="6"/><rect x="804.3" y="751" width="2" height="5"/><rect x="804.3" y="763.5" width="2" height="4"/><rect x="806.3" y="752" width="3" height="4"/><rect x="806.3" y="763.5" width="3" height="4"/><rect x="809.3" y="751" width="2" height="5"/><rect x="809.3" y="763.5" width="2" height="5"/><rect x="811.3" y="763.5" width="2" height="3"/><rect x="813.3" y="750" width="3" height="6"/><rect x="813.3" y="763.5" width="3" height="3"/><rect x="816.3" y="763.5" width="2" height="5"/><rect x="818.3" y="751" width="3" height="5"/><rect x="818.3" y="763.5" width="3" height="4"/><rect x="824.3" y="763.5" width="2" height="4"/><rect x="826.3" y="763.5" width="2" height="6"/><rect x="828.3" y="751" width="2" height="5"/><rect x="828.3" y="763.5" width="2" height="5"/><rect x="830.3" y="751" width="2" height="5"/><rect x="830.3" y="763.5" width="2" height="6"/><rect x="832.3" y="751" width="2" height="5"/><rect x="832.3" y="763.5" width="2" height="6"/><rect x="834.3" y="751" width="2" height="5"/><rect x="834.3" y="763.5" width="2" height="4"/><rect x="836.3" y="751" width="2" height="5"/><rect x="836.3" y="763.5" width="2" height="6"/><rect x="838.3" y="750" width="2" height="6"/><rect x="838.3" y="763.5" width="2" height="5"/><rect x="840.3" y="751" width="2" height="5"/><rect x="840.3" y="763.5" width="2" height="3"/><rect x="842.3" y="751" width="2" height="5"/><rect x="842.3" y="763.5" width="2" height="6"/><rect x="844.3" y="763.5" width="3" height="4"/><rect x="847.3" y="752" width="2" height="4"/><rect x="847.3" y="763.5" width="2" height="3"/><rect x="849.3" y="750" width="2" height="6"/><rect x="849.3" y="763.5" width="2" height="6"/><rect x="851.3" y="750" width="2" height="6"/><rect x="853.3" y="750" width="2" height="6"/><rect x="853.3" y="763.5" width="2" height="4"/><rect x="855.3" y="763.5" width="2" height="5"/><rect x="857.3" y="752" width="2" height="4"/><rect x="857.3" y="763.5" width="2" height="4"/><rect x="859.3" y="752" width="2" height="4"/><rect x="861.3" y="763.5" width="3" height="4"/><rect x="864.3" y="751" width="2" height="5"/><rect x="864.3" y="763.5" width="2" height="4"/><rect x="866.3" y="752" width="3" height="4"/><rect x="869.3" y="750" width="2" height="6"/><rect x="869.3" y="763.5" width="2" height="4"/><rect x="871.3" y="750" width="3" height="6"/><rect x="874.3" y="750" width="2" height="6"/><rect x="874.3" y="763.5" width="2" height="5"/><rect x="878.3" y="751" width="2" height="5"/><rect x="878.3" y="763.5" width="2" height="3"/><rect x="880.3" y="763.5" width="2" height="3"/><rect x="882.3" y="752" width="2" height="4"/><rect x="882.3" y="763.5" width="2" height="5"/><rect x="884.3" y="750" width="2" height="6"/><rect x="884.3" y="763.5" width="2" height="3"/><rect x="886.3" y="763.5" width="2" height="3"/><rect x="888.3" y="752" width="2" height="4"/><rect x="888.3" y="763.5" width="2" height="5"/><rect x="890.3" y="763.5" width="2" height="3"/><rect x="892.3" y="751" width="3" height="5"/><rect x="892.3" y="763.5" width="3" height="5"/><rect x="895.3" y="751" width="2" height="5"/><rect x="895.3" y="763.5" width="2" height="5"/><rect x="900.3" y="751" width="2" height="5"/><rect x="902.3" y="750" width="2" height="6"/><rect x="902.3" y="763.5" width="2" height="4"/><rect x="904.3" y="752" width="3" height="4"/><rect x="904.3" y="763.5" width="3" height="4"/><rect x="907.3" y="763.5" width="2" height="5"/><rect x="912.3" y="750" width="3" height="6"/><rect x="912.3" y="763.5" width="3" height="3"/><rect x="915.3" y="750" width="3" height="6"/><rect x="915.3" y="763.5" width="3" height="5"/><rect x="918.3" y="751" width="2" height="5"/><rect x="918.3" y="763.5" width="2" height="3"/><rect x="920.3" y="751" width="2" height="5"/><rect x="922.3" y="751" width="2" height="5"/><rect x="924.3" y="751" width="2" height="5"/><rect x="924.3" y="763.5" width="2" height="3"/><rect x="926.3" y="763.5" width="2" height="6"/><rect x="928.3" y="763.5" width="2" height="3"/><rect x="930.3" y="752" width="2" height="4"/><rect x="930.3" y="763.5" width="2" height="6"/><rect x="932.3" y="751" width="2" height="5"/><rect x="934.3" y="750" width="2" height="6"/><rect x="934.3" y="763.5" width="2" height="3"/><rect x="936.3" y="751" width="2" height="5"/><rect x="936.3" y="763.5" width="2" height="5"/><rect x="938.3" y="750" width="2" height="6"/><rect x="938.3" y="763.5" width="2" height="3"/><rect x="940.3" y="763.5" width="2" height="6"/><rect x="942.3" y="751" width="3" height="5"/><rect x="942.3" y="763.5" width="3" height="5"/><rect x="945.3" y="763.5" width="2" height="3"/><rect x="947.3" y="752" width="2" height="4"/><rect x="947.3" y="763.5" width="2" height="6"/><rect x="949.3" y="752" width="2" height="4"/><rect x="949.3" y="763.5" width="2" height="5"/><rect x="951.3" y="750" width="3" height="6"/><rect x="951.3" y="763.5" width="3" height="3"/><rect x="954.3" y="763.5" width="3" height="3"/><rect x="957.3" y="763.5" width="3" height="4"/><rect x="960.3" y="751" width="2" height="5"/><rect x="960.3" y="763.5" width="2" height="4"/><rect x="962.3" y="752" width="3" height="4"/><rect x="962.3" y="763.5" width="3" height="6"/><rect x="965.3" y="751" width="2" height="5"/><rect x="965.3" y="763.5" width="2" height="5"/><rect x="967.3" y="750" width="2" height="6"/><rect x="969.3" y="750" width="2" height="6"/><rect x="969.3" y="763.5" width="2" height="5"/><rect x="971.3" y="752" width="2" height="4"/><rect x="971.3" y="763.5" width="2" height="4"/><rect x="973.3" y="751" width="2" height="5"/><rect x="973.3" y="763.5" width="2" height="6"/><rect x="975.3" y="750" width="2" height="6"/><rect x="975.3" y="763.5" width="2" height="4"/><rect x="977.3" y="751" width="3" height="5"/><rect x="977.3" y="763.5" width="3" height="3"/><rect x="980.3" y="752" width="2" height="4"/><rect x="980.3" y="763.5" width="2" height="5"/><rect x="982.3" y="750" width="3" height="6"/><rect x="982.3" y="763.5" width="3" height="4"/><rect x="985.3" y="751" width="2" height="5"/><rect x="987.3" y="763.5" width="2.7000000000000455" height="4"/><rect x="990.0" y="866" width="2" height="6"/><rect x="990.0" y="879.5" width="2" height="4"/><rect x="992.0" y="867" width="2" height="5"/><rect x="992.0" y="879.5" width="2" height="5"/><rect x="994.0" y="866" width="2" height="6"/><rect x="994.0" y="879.5" width="2" height="5"/><rect x="996.0" y="866" width="2" height="6"/><rect x="996.0" y="879.5" width="2" height="4"/><rect x="998.0" y="866" width="3" height="6"/><rect x="998.0" y="879.5" width="3" height="6"/><rect x="1001.0" y="868" width="2" height="4"/><rect x="1001.0" y="879.5" width="2" height="4"/><rect x="1003.0" y="868" width="2" height="4"/><rect x="1003.0" y="879.5" width="2" height="4"/><rect x="1005.0" y="866" width="3" height="6"/><rect x="1005.0" y="879.5" width="3" height="3"/><rect x="1008.0" y="866" width="3" height="6"/><rect x="1008.0" y="879.5" width="3" height="6"/><rect x="1011.0" y="867" width="2" height="5"/><rect x="1011.0" y="879.5" width="2" height="3"/><rect x="1013.0" y="866" width="2" height="6"/><rect x="1015.0" y="866" width="2" height="6"/><rect x="1015.0" y="879.5" width="2" height="5"/><rect x="1021.0" y="868" width="3" height="4"/><rect x="1021.0" y="879.5" width="3" height="4"/><rect x="1024.0" y="868" width="2" height="4"/><rect x="1024.0" y="879.5" width="2" height="6"/><rect x="1026.0" y="879.5" width="2" height="3"/><rect x="1028.0" y="879.5" width="2" height="5"/><rect x="1030.0" y="879.5" width="2" height="4"/><rect x="1032.0" y="868" width="3" height="4"/><rect x="1032.0" y="879.5" width="3" height="4"/><rect x="1035.0" y="867" width="3" height="5"/><rect x="1035.0" y="879.5" width="3" height="6"/><rect x="1038.0" y="868" width="2" height="4"/><rect x="1038.0" y="879.5" width="2" height="3"/><rect x="1040.0" y="867" width="3" height="5"/><rect x="1040.0" y="879.5" width="3" height="4"/><rect x="1043.0" y="879.5" width="3" height="3"/><rect x="1046.0" y="868" width="2" height="4"/><rect x="1046.0" y="879.5" width="2" height="4"/><rect x="1048.0" y="868" width="3" height="4"/><rect x="1051.0" y="879.5" width="2" height="4"/><rect x="1053.0" y="867" width="2" height="5"/><rect x="1053.0" y="879.5" width="2" height="3"/><rect x="1055.0" y="867" width="2" height="5"/><rect x="1055.0" y="879.5" width="2" height="6"/><rect x="1057.0" y="866" width="2" height="6"/><rect x="1057.0" y="879.5" width="2" height="5"/><rect x="1059.0" y="866" width="2" height="6"/><rect x="1061.0" y="867" width="3" height="5"/><rect x="1064.0" y="868" width="2" height="4"/><rect x="1064.0" y="879.5" width="2" height="6"/><rect x="1066.0" y="866" width="2" height="6"/><rect x="1068.0" y="868" width="2" height="4"/><rect x="1068.0" y="879.5" width="2" height="3"/><rect x="1070.0" y="866" width="2" height="6"/><rect x="1070.0" y="879.5" width="2" height="4"/><rect x="1072.0" y="879.5" width="3" height="3"/><rect x="1075.0" y="866" width="3" height="6"/><rect x="1075.0" y="879.5" width="3" height="4"/><rect x="1078.0" y="866" width="3" height="6"/><rect x="1078.0" y="879.5" width="3" height="3"/><rect x="1081.0" y="866" width="2" height="6"/><rect x="1081.0" y="879.5" width="2" height="4"/><rect x="1083.0" y="879.5" width="2" height="6"/><rect x="1085.0" y="866" width="3" height="6"/><rect x="1085.0" y="879.5" width="3" height="6"/><rect x="1088.0" y="867" width="2" height="5"/><rect x="1088.0" y="879.5" width="2" height="6"/><rect x="1090.0" y="866" width="2" height="6"/><rect x="1090.0" y="879.5" width="2" height="3"/><rect x="1092.0" y="867" width="2" height="5"/><rect x="1094.0" y="868" width="2" height="4"/><rect x="1096.0" y="866" width="2" height="6"/><rect x="1096.0" y="879.5" width="2" height="5"/><rect x="1098.0" y="866" width="3" height="6"/><rect x="1098.0" y="879.5" width="3" height="3"/><rect x="1101.0" y="879.5" width="2" height="4"/><rect x="1103.0" y="867" width="3" height="5"/><rect x="1103.0" y="879.5" width="3" height="4"/><rect x="1106.0" y="867" width="1.5" height="5"/><rect x="1106.0" y="879.5" width="1.5" height="3"/><rect x="1107.5" y="751" width="2" height="5"/><rect x="1109.5" y="750" width="2" height="6"/><rect x="1109.5" y="763.5" width="2" height="3"/><rect x="1111.5" y="750" width="2" height="6"/><rect x="1111.5" y="763.5" width="2" height="3"/><rect x="1113.5" y="750" width="2" height="6"/><rect x="1113.5" y="763.5" width="2" height="6"/><rect x="1115.5" y="763.5" width="2" height="3"/><rect x="1117.5" y="752" width="2" height="4"/><rect x="1119.5" y="751" width="2" height="5"/><rect x="1119.5" y="763.5" width="2" height="5"/><rect x="1121.5" y="752" width="3" height="4"/><rect x="1121.5" y="763.5" width="3" height="6"/><rect x="1124.5" y="752" width="2" height="4"/><rect x="1126.5" y="763.5" width="2" height="3"/><rect x="1128.5" y="751" width="3" height="5"/><rect x="1131.5" y="750" width="2" height="6"/><rect x="1131.5" y="763.5" width="2" height="6"/><rect x="1133.5" y="752" width="3" height="4"/><rect x="1136.5" y="763.5" width="2" height="3"/><rect x="1138.5" y="750" width="3" height="6"/><rect x="1138.5" y="763.5" width="3" height="6"/><rect x="1141.5" y="752" width="2" height="4"/><rect x="1141.5" y="763.5" width="2" height="5"/><rect x="1143.5" y="750" width="2" height="6"/><rect x="1143.5" y="763.5" width="2" height="4"/><rect x="1145.5" y="750" width="2" height="6"/><rect x="1147.5" y="752" width="3" height="4"/><rect x="1147.5" y="763.5" width="3" height="5"/><rect x="1150.5" y="763.5" width="2" height="4"/><rect x="1152.5" y="750" width="3" height="6"/><rect x="1155.5" y="750" width="2" height="6"/><rect x="1155.5" y="763.5" width="2" height="5"/><rect x="1157.5" y="752" width="3" height="4"/><rect x="1157.5" y="763.5" width="3" height="4"/><rect x="1160.5" y="752" width="2" height="4"/><rect x="1160.5" y="763.5" width="2" height="4"/><rect x="1162.5" y="750" width="2" height="6"/><rect x="1162.5" y="763.5" width="2" height="5"/><rect x="1164.5" y="763.5" width="3" height="6"/><rect x="1167.5" y="751" width="3" height="5"/><rect x="1167.5" y="763.5" width="3" height="5"/><rect x="1170.5" y="750" width="3" height="6"/><rect x="1176.5" y="750" width="3" height="6"/><rect x="1176.5" y="763.5" width="3" height="3"/><rect x="1179.5" y="751" width="2" height="5"/><rect x="1179.5" y="763.5" width="2" height="4"/><rect x="1181.5" y="751" width="3" height="5"/><rect x="1181.5" y="763.5" width="3" height="5"/><rect x="1184.5" y="752" width="3" height="4"/><rect x="1189.5" y="752" width="2" height="4"/><rect x="1191.5" y="751" width="3" height="5"/><rect x="1191.5" y="763.5" width="3" height="4"/><rect x="1194.5" y="752" width="3" height="4"/><rect x="1194.5" y="763.5" width="3" height="3"/><rect x="1197.5" y="751" width="3" height="5"/><rect x="1200.5" y="751" width="2" height="5"/><rect x="1200.5" y="763.5" width="2" height="3"/><rect x="1202.5" y="750" width="2" height="6"/><rect x="1202.5" y="763.5" width="2" height="3"/><rect x="1204.5" y="751" width="2" height="5"/><rect x="1204.5" y="763.5" width="2" height="4"/><rect x="1206.5" y="750" width="2" height="6"/><rect x="1206.5" y="763.5" width="2" height="4"/><rect x="1208.5" y="750" width="3" height="6"/><rect x="1208.5" y="763.5" width="3" height="5"/><rect x="1211.5" y="751" width="2" height="5"/><rect x="1211.5" y="763.5" width="2" height="4"/><rect x="1213.5" y="750" width="3" height="6"/><rect x="1213.5" y="763.5" width="3" height="6"/><rect x="1216.5" y="752" width="3" height="4"/><rect x="1216.5" y="763.5" width="3" height="3"/><rect x="1219.5" y="751" width="2" height="5"/><rect x="1219.5" y="763.5" width="2" height="5"/><rect x="1221.5" y="751" width="2" height="5"/><rect x="1221.5" y="763.5" width="2" height="5"/><rect x="1223.5" y="763.5" width="2" height="3"/><rect x="1225.5" y="751" width="2" height="5"/><rect x="1227.5" y="750" width="2" height="6"/><rect x="1227.5" y="763.5" width="2" height="6"/><rect x="1229.5" y="751" width="2" height="5"/><rect x="1229.5" y="763.5" width="2" height="3"/><rect x="1231.5" y="751" width="2" height="5"/><rect x="1231.5" y="763.5" width="2" height="6"/><rect x="1233.5" y="751" width="3" height="5"/><rect x="1233.5" y="763.5" width="3" height="4"/><rect x="1236.5" y="763.5" width="2" height="6"/><rect x="1238.5" y="752" width="2" height="4"/><rect x="1238.5" y="763.5" width="2" height="6"/><rect x="1240.5" y="750" width="3" height="6"/><rect x="1240.5" y="763.5" width="3" height="4"/><rect x="1243.5" y="752" width="3" height="4"/><rect x="1243.5" y="763.5" width="3" height="3"/><rect x="1246.5" y="752" width="3" height="4"/><rect x="1249.5" y="752" width="2" height="4"/><rect x="1249.5" y="763.5" width="2" height="4"/><rect x="1251.5" y="752" width="2" height="4"/><rect x="1251.5" y="763.5" width="2" height="5"/><rect x="1253.5" y="750" width="2" height="6"/><rect x="1253.5" y="763.5" width="2" height="4"/><rect x="1255.5" y="750" width="3" height="6"/><rect x="1255.5" y="763.5" width="3" height="4"/><rect x="1258.5" y="751" width="3" height="5"/><rect x="1258.5" y="763.5" width="3" height="3"/><rect x="1261.5" y="750" width="2" height="6"/><rect x="1261.5" y="763.5" width="2" height="4"/><rect x="1263.5" y="750" width="3" height="6"/><rect x="1263.5" y="763.5" width="3" height="6"/><rect x="1266.5" y="751" width="1.5" height="5"/><rect x="1266.5" y="763.5" width="1.5" height="6"/><rect x="1268.0" y="868" width="2" height="4"/><rect x="1270.0" y="866" width="3" height="6"/><rect x="1270.0" y="879.5" width="3" height="3"/><rect x="1273.0" y="866" width="2" height="6"/><rect x="1273.0" y="879.5" width="2" height="5"/><rect x="1275.0" y="868" width="2" height="4"/><rect x="1275.0" y="879.5" width="2" height="3"/><rect x="1277.0" y="866" width="2" height="6"/><rect x="1277.0" y="879.5" width="2" height="5"/><rect x="1279.0" y="866" width="3" height="6"/><rect x="1279.0" y="879.5" width="3" height="6"/><rect x="1282.0" y="879.5" width="2" height="3"/><rect x="1284.0" y="867" width="3" height="5"/><rect x="1287.0" y="866" width="2" height="6"/><rect x="1287.0" y="879.5" width="2" height="4"/><rect x="1289.0" y="866" width="2" height="6"/><rect x="1289.0" y="879.5" width="2" height="3"/><rect x="1291.0" y="879.5" width="3" height="6"/><rect x="1294.0" y="866" width="2" height="6"/><rect x="1294.0" y="879.5" width="2" height="5"/><rect x="1296.0" y="866" width="2" height="6"/><rect x="1296.0" y="879.5" width="2" height="6"/><rect x="1298.0" y="879.5" width="2" height="5"/><rect x="1303.0" y="868" width="3" height="4"/><rect x="1303.0" y="879.5" width="3" height="4"/><rect x="1306.0" y="867" width="2" height="5"/><rect x="1306.0" y="879.5" width="2" height="6"/><rect x="1308.0" y="867" width="2" height="5"/><rect x="1308.0" y="879.5" width="2" height="3"/><rect x="1310.0" y="866" width="2" height="6"/><rect x="1310.0" y="879.5" width="2" height="5"/><rect x="1312.0" y="879.5" width="3" height="5"/><rect x="1315.0" y="867" width="2" height="5"/><rect x="1315.0" y="879.5" width="2" height="3"/><rect x="1317.0" y="866" width="2" height="6"/><rect x="1317.0" y="879.5" width="2" height="4"/><rect x="1319.0" y="867" width="2" height="5"/><rect x="1319.0" y="879.5" width="2" height="5"/><rect x="1321.0" y="868" width="2" height="4"/><rect x="1321.0" y="879.5" width="2" height="3"/><rect x="1323.0" y="866" width="2" height="6"/><rect x="1323.0" y="879.5" width="2" height="6"/><rect x="1325.0" y="868" width="2" height="4"/><rect x="1327.0" y="868" width="2" height="4"/><rect x="1327.0" y="879.5" width="2" height="3"/><rect x="1329.0" y="866" width="2" height="6"/><rect x="1331.0" y="866" width="2" height="6"/><rect x="1331.0" y="879.5" width="2" height="4"/><rect x="1333.0" y="867" width="2" height="5"/><rect x="1333.0" y="879.5" width="2" height="4"/><rect x="1335.0" y="867" width="2" height="5"/><rect x="1335.0" y="879.5" width="2" height="4"/><rect x="1337.0" y="866" width="2" height="6"/><rect x="1337.0" y="879.5" width="2" height="4"/><rect x="1339.0" y="867" width="2" height="5"/><rect x="1339.0" y="879.5" width="2" height="3"/><rect x="1341.0" y="866" width="2" height="6"/><rect x="1341.0" y="879.5" width="2" height="3"/><rect x="1343.0" y="879.5" width="3" height="6"/><rect x="1346.0" y="867" width="2" height="5"/><rect x="1348.5" y="751" width="3" height="5"/><rect x="1348.5" y="763.5" width="3" height="5"/><rect x="1351.5" y="750" width="3" height="6"/><rect x="1351.5" y="763.5" width="3" height="6"/><rect x="1354.5" y="752" width="2" height="4"/><rect x="1356.5" y="752" width="3" height="4"/><rect x="1356.5" y="763.5" width="3" height="5"/><rect x="1359.5" y="752" width="2" height="4"/><rect x="1359.5" y="763.5" width="2" height="5"/><rect x="1361.5" y="763.5" width="3" height="4"/><rect x="1364.5" y="750" width="2" height="6"/><rect x="1364.5" y="763.5" width="2" height="5"/><rect x="1366.5" y="750" width="3" height="6"/><rect x="1366.5" y="763.5" width="3" height="6"/><rect x="1369.5" y="751" width="2" height="5"/><rect x="1369.5" y="763.5" width="2" height="4"/><rect x="1371.5" y="752" width="2" height="4"/><rect x="1371.5" y="763.5" width="2" height="3"/><rect x="1373.5" y="750" width="3" height="6"/><rect x="1373.5" y="763.5" width="3" height="4"/><rect x="1376.5" y="752" width="2" height="4"/><rect x="1376.5" y="763.5" width="2" height="6"/><rect x="1378.5" y="751" width="3" height="5"/><rect x="1378.5" y="763.5" width="3" height="4"/><rect x="1381.5" y="750" width="2" height="6"/><rect x="1381.5" y="763.5" width="2" height="5"/><rect x="1383.5" y="751" width="3" height="5"/><rect x="1383.5" y="763.5" width="3" height="3"/><rect x="1386.5" y="751" width="3" height="5"/><rect x="1389.5" y="750" width="2" height="6"/><rect x="1389.5" y="763.5" width="2" height="5"/><rect x="1391.5" y="752" width="3" height="4"/><rect x="1391.5" y="763.5" width="3" height="3"/><rect x="1394.5" y="763.5" width="3" height="4"/><rect x="1397.5" y="752" width="2" height="4"/><rect x="1397.5" y="763.5" width="2" height="5"/><rect x="1399.5" y="751" width="2" height="5"/><rect x="1399.5" y="763.5" width="2" height="5"/><rect x="1401.5" y="751" width="3" height="5"/><rect x="1401.5" y="763.5" width="3" height="3"/><rect x="1404.5" y="751" width="3" height="5"/><rect x="1407.5" y="750" width="2" height="6"/><rect x="1407.5" y="763.5" width="2" height="6"/><rect x="1409.5" y="750" width="2" height="6"/><rect x="1409.5" y="763.5" width="2" height="5"/><rect x="1411.5" y="751" width="3" height="5"/><rect x="1411.5" y="763.5" width="3" height="5"/><rect x="1414.5" y="751" width="3" height="5"/><rect x="1414.5" y="763.5" width="3" height="3"/><rect x="1417.5" y="763.5" width="2" height="4"/><rect x="1419.5" y="751" width="3" height="5"/><rect x="1419.5" y="763.5" width="3" height="3"/><rect x="1422.5" y="751" width="2" height="5"/><rect x="1422.5" y="763.5" width="2" height="4"/><rect x="1424.5" y="750" width="2" height="6"/><rect x="1426.5" y="752" width="2" height="4"/><rect x="1426.5" y="763.5" width="2" height="4"/><rect x="1428.5" y="752" width="2" height="4"/><rect x="1428.5" y="763.5" width="2" height="3"/><rect x="1430.5" y="751" width="2" height="5"/><rect x="1430.5" y="763.5" width="2" height="5"/><rect x="1432.5" y="751" width="2" height="5"/><rect x="1432.5" y="763.5" width="2" height="5"/><rect x="1434.5" y="751" width="2" height="5"/><rect x="1434.5" y="763.5" width="2" height="4"/><rect x="1436.5" y="751" width="2" height="5"/><rect x="1436.5" y="763.5" width="2" height="4"/><rect x="1438.5" y="752" width="2" height="4"/><rect x="1438.5" y="763.5" width="2" height="6"/><rect x="1440.5" y="750" width="2" height="6"/><rect x="1442.5" y="763.5" width="3" height="5"/><rect x="1445.5" y="752" width="2" height="4"/><rect x="1447.5" y="751" width="2" height="5"/><rect x="1447.5" y="763.5" width="2" height="3"/><rect x="1449.5" y="752" width="3" height="4"/><rect x="1449.5" y="763.5" width="3" height="6"/><rect x="1452.5" y="763.5" width="2" height="6"/><rect x="1454.5" y="750" width="3" height="6"/><rect x="1454.5" y="763.5" width="3" height="4"/><rect x="1457.5" y="763.5" width="3" height="3"/><rect x="1462.5" y="750" width="3" height="6"/><rect x="1462.5" y="763.5" width="3" height="4"/><rect x="1466.0" y="879.5" width="2" height="5"/><rect x="1468.0" y="866" width="3" height="6"/><rect x="1468.0" y="879.5" width="3" height="4"/><rect x="1471.0" y="867" width="2" height="5"/><rect x="1471.0" y="879.5" width="2" height="3"/><rect x="1473.0" y="867" width="2" height="5"/><rect x="1475.0" y="866" width="2" height="6"/><rect x="1477.0" y="866" width="3" height="6"/><rect x="1477.0" y="879.5" width="3" height="6"/><rect x="1480.0" y="867" width="3" height="5"/><rect x="1483.0" y="866" width="3" height="6"/><rect x="1483.0" y="879.5" width="3" height="4"/><rect x="1486.0" y="867" width="2" height="5"/><rect x="1486.0" y="879.5" width="2" height="3"/><rect x="1488.0" y="866" width="2" height="6"/><rect x="1488.0" y="879.5" width="2" height="5"/><rect x="1490.0" y="866" width="3" height="6"/><rect x="1490.0" y="879.5" width="3" height="5"/><rect x="1493.0" y="868" width="2" height="4"/><rect x="1495.0" y="868" width="2" height="4"/><rect x="1495.0" y="879.5" width="2" height="4"/><rect x="1497.0" y="868" width="3" height="4"/><rect x="1500.0" y="879.5" width="2" height="6"/><rect x="1502.0" y="867" width="3" height="5"/><rect x="1505.0" y="879.5" width="2" height="5"/><rect x="1509.0" y="868" width="2" height="4"/><rect x="1509.0" y="879.5" width="2" height="4"/><rect x="1511.0" y="866" width="3" height="6"/><rect x="1511.0" y="879.5" width="3" height="4"/><rect x="1514.0" y="867" width="3" height="5"/><rect x="1517.0" y="867" width="2" height="5"/><rect x="1517.0" y="879.5" width="2" height="6"/><rect x="1519.0" y="867" width="2" height="5"/><rect x="1519.0" y="879.5" width="2" height="5"/><rect x="1521.0" y="866" width="3" height="6"/><rect x="1521.0" y="879.5" width="3" height="6"/><rect x="1524.0" y="867" width="3" height="5"/><rect x="1524.0" y="879.5" width="3" height="5"/><rect x="1532.5" y="763.5" width="2" height="5"/><rect x="1534.5" y="763.5" width="2" height="5"/><rect x="1536.5" y="751" width="2" height="5"/><rect x="1538.5" y="750" width="2" height="6"/><rect x="1547.5" y="751" width="2" height="5"/><rect x="1549.5" y="751" width="2" height="5"/><rect x="1549.5" y="763.5" width="2" height="4"/><rect x="1551.5" y="751" width="2" height="5"/><rect x="1551.5" y="763.5" width="2" height="4"/><rect x="1553.5" y="750" width="2" height="6"/><rect x="1553.5" y="763.5" width="2" height="5"/><rect x="1555.5" y="750" width="2" height="6"/><rect x="1555.5" y="763.5" width="2" height="3"/><rect x="1557.5" y="752" width="2" height="4"/><rect x="1557.5" y="763.5" width="2" height="5"/><rect x="1559.5" y="751" width="2" height="5"/><rect x="1559.5" y="763.5" width="2" height="3"/><rect x="1561.5" y="752" width="2" height="4"/><rect x="1561.5" y="763.5" width="2" height="3"/><rect x="1563.5" y="752" width="2" height="4"/><rect x="1565.5" y="752" width="2" height="4"/><rect x="1565.5" y="763.5" width="2" height="6"/><rect x="1567.5" y="763.5" width="3" height="6"/><rect x="1573.5" y="763.5" width="2" height="3"/><rect x="1575.5" y="751" width="2" height="5"/><rect x="1575.5" y="763.5" width="2" height="3"/><rect x="1577.5" y="750" width="3" height="6"/><rect x="1577.5" y="763.5" width="3" height="6"/><rect x="1580.5" y="763.5" width="2" height="6"/><rect x="1582.5" y="763.5" width="2" height="3"/><rect x="1584.5" y="752" width="2" height="4"/><rect x="1584.5" y="763.5" width="2" height="5"/><rect x="1586.5" y="763.5" width="2" height="6"/><rect x="1590.5" y="752" width="2" height="4"/><rect x="1590.5" y="763.5" width="2" height="5"/><rect x="1592.5" y="752" width="3" height="4"/><rect x="1595.5" y="751" width="3" height="5"/><rect x="1595.5" y="763.5" width="3" height="6"/><rect x="1598.5" y="751" width="2" height="5"/><rect x="1598.5" y="763.5" width="2" height="5"/><rect x="1600.5" y="763.5" width="2" height="3"/><rect x="1602.5" y="750" width="2" height="6"/><rect x="1602.5" y="763.5" width="2" height="4"/><rect x="1604.5" y="750" width="3" height="6"/><rect x="1604.5" y="763.5" width="3" height="6"/><rect x="1607.5" y="751" width="3" height="5"/><rect x="1607.5" y="763.5" width="3" height="3"/><rect x="1610.5" y="751" width="3" height="5"/><rect x="1613.5" y="763.5" width="3" height="5"/><rect x="1616.5" y="752" width="2" height="4"/><rect x="1618.5" y="751" width="2" height="5"/><rect x="1618.5" y="763.5" width="2" height="5"/><rect x="1620.5" y="763.5" width="3" height="4"/><rect x="1624.5" y="868" width="2" height="4"/><rect x="1624.5" y="879.5" width="2" height="4"/><rect x="1626.5" y="867" width="2" height="5"/><rect x="1626.5" y="879.5" width="2" height="3"/><rect x="1628.5" y="867" width="3" height="5"/><rect x="1628.5" y="879.5" width="3" height="5"/><rect x="1631.5" y="868" width="2" height="4"/><rect x="1631.5" y="879.5" width="2" height="4"/><rect x="1633.5" y="868" width="2" height="4"/><rect x="1635.5" y="866" width="2" height="6"/><rect x="1635.5" y="879.5" width="2" height="3"/><rect x="1637.5" y="866" width="2" height="6"/><rect x="1639.5" y="866" width="2" height="6"/><rect x="1639.5" y="879.5" width="2" height="3"/><rect x="1641.5" y="867" width="2" height="5"/><rect x="1641.5" y="879.5" width="2" height="5"/><rect x="1643.5" y="867" width="3" height="5"/><rect x="1643.5" y="879.5" width="3" height="3"/><rect x="1646.5" y="866" width="2" height="6"/><rect x="1646.5" y="879.5" width="2" height="6"/><rect x="1648.5" y="879.5" width="3" height="3"/><rect x="1651.5" y="868" width="2" height="4"/><rect x="1651.5" y="879.5" width="2" height="4"/><rect x="1653.5" y="866" width="2" height="6"/><rect x="1655.5" y="867" width="2" height="5"/><rect x="1655.5" y="879.5" width="2" height="4"/><rect x="1657.5" y="866" width="3" height="6"/><rect x="1657.5" y="879.5" width="3" height="4"/><rect x="1660.5" y="866" width="2" height="6"/><rect x="1660.5" y="879.5" width="2" height="4"/><rect x="1662.5" y="867" width="3" height="5"/><rect x="1662.5" y="879.5" width="3" height="3"/><rect x="1665.5" y="868" width="2" height="4"/><rect x="1665.5" y="879.5" width="2" height="4"/><rect x="1667.5" y="866" width="3" height="6"/><rect x="1667.5" y="879.5" width="3" height="5"/><rect x="1670.5" y="866" width="2" height="6"/><rect x="1670.5" y="879.5" width="2" height="5"/><rect x="1672.5" y="866" width="2" height="6"/><rect x="1672.5" y="879.5" width="2" height="5"/><rect x="1675.5" y="763.5" width="2" height="6"/><rect x="1677.5" y="750" width="3" height="6"/><rect x="1677.5" y="763.5" width="3" height="6"/><rect x="1680.5" y="752" width="2" height="4"/><rect x="1680.5" y="763.5" width="2" height="5"/><rect x="1682.5" y="751" width="3" height="5"/><rect x="1682.5" y="763.5" width="3" height="6"/><rect x="1685.5" y="752" width="3" height="4"/><rect x="1688.5" y="751" width="2" height="5"/><rect x="1688.5" y="763.5" width="2" height="5"/><rect x="1690.5" y="751" width="2" height="5"/><rect x="1690.5" y="763.5" width="2" height="3"/><rect x="1692.5" y="751" width="3" height="5"/><rect x="1692.5" y="763.5" width="3" height="4"/><rect x="1695.5" y="751" width="2" height="5"/><rect x="1695.5" y="763.5" width="2" height="3"/><rect x="1697.5" y="752" width="2" height="4"/><rect x="1697.5" y="763.5" width="2" height="5"/><rect x="1699.5" y="750" width="2" height="6"/><rect x="1699.5" y="763.5" width="2" height="5"/><rect x="1701.5" y="751" width="3" height="5"/><rect x="1701.5" y="763.5" width="3" height="6"/><rect x="1704.5" y="763.5" width="3" height="4"/><rect x="1707.5" y="751" width="2" height="5"/><rect x="1707.5" y="763.5" width="2" height="4"/><rect x="1709.5" y="752" width="2" height="4"/><rect x="1711.5" y="750" width="2" height="6"/><rect x="1711.5" y="763.5" width="2" height="3"/><rect x="1713.5" y="752" width="3" height="4"/><rect x="1713.5" y="763.5" width="3" height="4"/><rect x="1716.5" y="750" width="2" height="6"/><rect x="1716.5" y="763.5" width="2" height="3"/><rect x="1718.5" y="751" width="3" height="5"/><rect x="1721.5" y="750" width="3" height="6"/><rect x="1721.5" y="763.5" width="3" height="3"/><rect x="1724.5" y="763.5" width="2" height="6"/><rect x="1726.5" y="751" width="2" height="5"/><rect x="1728.5" y="750" width="3" height="6"/><rect x="1728.5" y="763.5" width="3" height="6"/><rect x="1731.5" y="751" width="2" height="5"/><rect x="1733.5" y="752" width="2" height="4"/><rect x="1733.5" y="763.5" width="2" height="6"/><rect x="1735.5" y="750" width="2" height="6"/><rect x="1735.5" y="763.5" width="2" height="4"/><rect x="1737.5" y="751" width="2" height="5"/><rect x="1737.5" y="763.5" width="2" height="5"/><rect x="1739.5" y="752" width="2" height="4"/><rect x="1741.5" y="750" width="2" height="6"/><rect x="1741.5" y="763.5" width="2" height="4"/><rect x="1743.5" y="752" width="2" height="4"/><rect x="1745.5" y="752" width="3" height="4"/><rect x="1748.5" y="751" width="2" height="5"/><rect x="1748.5" y="763.5" width="2" height="3"/><rect x="1750.5" y="752" width="3" height="4"/><rect x="1750.5" y="763.5" width="3" height="6"/><rect x="1753.5" y="750" width="2" height="6"/><rect x="1753.5" y="763.5" width="2" height="4"/><rect x="1755.5" y="750" width="2" height="6"/><rect x="1755.5" y="763.5" width="2" height="5"/><rect x="1757.5" y="752" width="2" height="4"/><rect x="1757.5" y="763.5" width="2" height="4"/><rect x="1759.5" y="750" width="3" height="6"/><rect x="1759.5" y="763.5" width="3" height="4"/><rect x="1762.5" y="752" width="2" height="4"/><rect x="1762.5" y="763.5" width="2" height="4"/><rect x="1765.0" y="868" width="2" height="4"/><rect x="1765.0" y="879.5" width="2" height="6"/><rect x="1767.0" y="867" width="2" height="5"/><rect x="1767.0" y="879.5" width="2" height="5"/><rect x="1769.0" y="866" width="2" height="6"/><rect x="1771.0" y="866" width="2" height="6"/><rect x="1771.0" y="879.5" width="2" height="4"/><rect x="1773.0" y="868" width="2" height="4"/><rect x="1773.0" y="879.5" width="2" height="6"/><rect x="1775.0" y="868" width="2" height="4"/><rect x="1777.0" y="879.5" width="3" height="5"/><rect x="1780.0" y="868" width="2" height="4"/><rect x="1780.0" y="879.5" width="2" height="6"/><rect x="1782.0" y="866" width="2" height="6"/><rect x="1782.0" y="879.5" width="2" height="5"/><rect x="1784.0" y="866" width="2" height="6"/><rect x="1784.0" y="879.5" width="2" height="6"/><rect x="1786.0" y="866" width="2" height="6"/><rect x="1786.0" y="879.5" width="2" height="6"/><rect x="1788.0" y="868" width="2" height="4"/><rect x="1788.0" y="879.5" width="2" height="4"/><rect x="1790.0" y="867" width="3" height="5"/><rect x="1790.0" y="879.5" width="3" height="5"/><rect x="1793.0" y="866" width="2" height="6"/><rect x="1793.0" y="879.5" width="2" height="4"/><rect x="1795.0" y="868" width="3" height="4"/><rect x="1795.0" y="879.5" width="3" height="5"/><rect x="1798.0" y="879.5" width="2" height="6"/><rect x="1800.0" y="866" width="3" height="6"/><rect x="1800.0" y="879.5" width="3" height="4"/><rect x="1803.0" y="866" width="2" height="6"/><rect x="1805.0" y="868" width="2" height="4"/><rect x="1805.0" y="879.5" width="2" height="4"/><rect x="1807.0" y="866" width="3" height="6"/><rect x="1807.0" y="879.5" width="3" height="3"/><rect x="1811.0" y="750" width="2" height="6"/><rect x="1811.0" y="763.5" width="2" height="4"/><rect x="1813.0" y="752" width="2" height="4"/><rect x="1815.0" y="752" width="2" height="4"/><rect x="1815.0" y="763.5" width="2" height="4"/><rect x="1817.0" y="751" width="3" height="5"/><rect x="1817.0" y="763.5" width="3" height="6"/><rect x="1820.0" y="751" width="2" height="5"/><rect x="1820.0" y="763.5" width="2" height="4"/><rect x="1822.0" y="751" width="2" height="5"/><rect x="1822.0" y="763.5" width="2" height="4"/><rect x="1827.0" y="752" width="2" height="4"/><rect x="1827.0" y="763.5" width="2" height="5"/><rect x="1829.0" y="751" width="2" height="5"/><rect x="1829.0" y="763.5" width="2" height="4"/><rect x="1831.0" y="752" width="2" height="4"/><rect x="1831.0" y="763.5" width="2" height="6"/><rect x="1833.0" y="752" width="2" height="4"/><rect x="1833.0" y="763.5" width="2" height="6"/><rect x="1835.0" y="751" width="3" height="5"/><rect x="1835.0" y="763.5" width="3" height="3"/><rect x="1838.0" y="752" width="2" height="4"/><rect x="1840.0" y="750" width="2" height="6"/><rect x="1840.0" y="763.5" width="2" height="4"/><rect x="1842.0" y="751" width="3" height="5"/><rect x="1842.0" y="763.5" width="3" height="6"/><rect x="1845.0" y="752" width="2" height="4"/><rect x="1845.0" y="763.5" width="2" height="3"/><rect x="1847.0" y="751" width="3" height="5"/><rect x="1847.0" y="763.5" width="3" height="5"/><rect x="1850.0" y="750" width="2" height="6"/><rect x="1850.0" y="763.5" width="2" height="4"/><rect x="1852.0" y="752" width="3" height="4"/><rect x="1852.0" y="763.5" width="3" height="5"/><rect x="1855.0" y="750" width="2" height="6"/><rect x="1855.0" y="763.5" width="2" height="3"/><rect x="1857.0" y="751" width="3" height="5"/><rect x="1857.0" y="763.5" width="3" height="6"/><rect x="1860.0" y="750" width="2" height="6"/><rect x="1860.0" y="763.5" width="2" height="6"/><rect x="1862.0" y="750" width="2" height="6"/><rect x="1862.0" y="763.5" width="2" height="3"/><rect x="1864.0" y="752" width="2" height="4"/><rect x="1864.0" y="763.5" width="2" height="6"/><rect x="1866.0" y="751" width="3" height="5"/><rect x="1866.0" y="763.5" width="3" height="6"/><rect x="1869.0" y="751" width="3" height="5"/><rect x="1869.0" y="763.5" width="3" height="6"/><rect x="1872.0" y="750" width="3" height="6"/><rect x="1875.0" y="751" width="3" height="5"/><rect x="1875.0" y="763.5" width="3" height="3"/><rect x="1878.0" y="752" width="3" height="4"/><rect x="1878.0" y="763.5" width="3" height="6"/><rect x="1881.0" y="752" width="2" height="4"/><rect x="1881.0" y="763.5" width="2" height="4"/></g><g fill="#f41458"><rect x="5.0" y="756" width="450.2" height="7.5"/><rect x="455.2" y="872" width="243.1" height="7.5"/><rect x="698.3" y="756" width="291.7" height="7.5"/><rect x="990.0" y="872" width="117.5" height="7.5"/><rect x="1107.5" y="756" width="160.5" height="7.5"/><rect x="1268.0" y="872" width="80.5" height="7.5"/><rect x="1348.5" y="756" width="117.5" height="7.5"/><rect x="1466.0" y="872" width="66.5" height="7.5"/><rect x="1532.5" y="756" width="92.0" height="7.5"/><rect x="1624.5" y="872" width="51.0" height="7.5"/><rect x="1675.5" y="756" width="89.5" height="7.5"/><rect x="1765.0" y="872" width="46.0" height="7.5"/><rect x="1811.0" y="756" width="73.0" height="7.5"/></g><g fill="#a40c3a"><rect x="7.0" y="762" width="3" height="2"/><rect x="10.0" y="756" width="2" height="2"/><rect x="14.0" y="759" width="3" height="2"/><rect x="17.0" y="756" width="2" height="2"/><rect x="19.0" y="759" width="3" height="2"/><rect x="27.0" y="756" width="2" height="2"/><rect x="39.0" y="762" width="2" height="2"/><rect x="53.0" y="756" width="3" height="2"/><rect x="62.0" y="756" width="2" height="2"/><rect x="73.0" y="759" width="2" height="2"/><rect x="75.0" y="762" width="2" height="2"/><rect x="80.0" y="762" width="2" height="2"/><rect x="82.0" y="756" width="2" height="2"/><rect x="84.0" y="756" width="2" height="2"/><rect x="86.0" y="762" width="2" height="2"/><rect x="88.0" y="762" width="2" height="2"/><rect x="105.0" y="762" width="2" height="2"/><rect x="114.0" y="756" width="2" height="2"/><rect x="140.0" y="756" width="2" height="2"/><rect x="142.0" y="762" width="2" height="2"/><rect x="146.0" y="759" width="2" height="2"/><rect x="148.0" y="762" width="2" height="2"/><rect x="164.0" y="759" width="2" height="2"/><rect x="175.0" y="762" width="2" height="2"/><rect x="184.0" y="756" width="2" height="2"/><rect x="188.0" y="762" width="3" height="2"/><rect x="203.0" y="759" width="2" height="2"/><rect x="205.0" y="762" width="2" height="2"/><rect x="209.0" y="756" width="2" height="2"/><rect x="211.0" y="762" width="3" height="2"/><rect x="214.0" y="756" width="2" height="2"/><rect x="216.0" y="759" width="2" height="2"/><rect x="225.0" y="759" width="2" height="2"/><rect x="237.0" y="759" width="2" height="2"/><rect x="239.0" y="762" width="2" height="2"/><rect x="244.0" y="759" width="3" height="2"/><rect x="251.0" y="756" width="3" height="2"/><rect x="256.0" y="762" width="2" height="2"/><rect x="267.0" y="759" width="2" height="2"/><rect x="277.0" y="762" width="2" height="2"/><rect x="283.0" y="762" width="2" height="2"/><rect x="290.0" y="762" width="2" height="2"/><rect x="300.0" y="762" width="2" height="2"/><rect x="306.0" y="762" width="2" height="2"/><rect x="313.0" y="759" width="2" height="2"/><rect x="315.0" y="762" width="2" height="2"/><rect x="317.0" y="759" width="2" height="2"/><rect x="333.0" y="762" width="2" height="2"/><rect x="341.0" y="756" width="2" height="2"/><rect x="347.0" y="759" width="2" height="2"/><rect x="357.0" y="756" width="2" height="2"/><rect x="363.0" y="756" width="2" height="2"/><rect x="365.0" y="762" width="2" height="2"/><rect x="371.0" y="762" width="2" height="2"/><rect x="383.0" y="756" width="2" height="2"/><rect x="385.0" y="759" width="2" height="2"/><rect x="389.0" y="762" width="2" height="2"/><rect x="391.0" y="762" width="2" height="2"/><rect x="397.0" y="759" width="3" height="2"/><rect x="404.0" y="756" width="2" height="2"/><rect x="406.0" y="756" width="2" height="2"/><rect x="408.0" y="756" width="2" height="2"/><rect x="410.0" y="759" width="2" height="2"/><rect x="415.0" y="759" width="2" height="2"/><rect x="422.0" y="756" width="2" height="2"/><rect x="424.0" y="759" width="2" height="2"/><rect x="428.0" y="759" width="3" height="2"/><rect x="441.0" y="756" width="2" height="2"/><rect x="450.0" y="759" width="2" height="2"/><rect x="452.0" y="762" width="3" height="2"/><rect x="455.2" y="878" width="2" height="2"/><rect x="457.2" y="875" width="2" height="2"/><rect x="461.2" y="872" width="3" height="2"/><rect x="469.2" y="875" width="2" height="2"/><rect x="471.2" y="878" width="3" height="2"/><rect x="474.2" y="878" width="3" height="2"/><rect x="479.2" y="872" width="2" height="2"/><rect x="481.2" y="878" width="2" height="2"/><rect x="485.2" y="872" width="2" height="2"/><rect x="487.2" y="875" width="2" height="2"/><rect x="501.2" y="875" width="2" height="2"/><rect x="506.2" y="872" width="3" height="2"/><rect x="509.2" y="875" width="2" height="2"/><rect x="525.2" y="878" width="2" height="2"/><rect x="527.2" y="878" width="2" height="2"/><rect x="531.2" y="872" width="2" height="2"/><rect x="538.2" y="878" width="2" height="2"/><rect x="549.2" y="878" width="2" height="2"/><rect x="567.2" y="875" width="2" height="2"/><rect x="571.2" y="875" width="2" height="2"/><rect x="573.2" y="878" width="3" height="2"/><rect x="576.2" y="878" width="2" height="2"/><rect x="578.2" y="872" width="3" height="2"/><rect x="585.2" y="878" width="2" height="2"/><rect x="594.2" y="872" width="3" height="2"/><rect x="599.2" y="872" width="2" height="2"/><rect x="601.2" y="872" width="3" height="2"/><rect x="604.2" y="878" width="3" height="2"/><rect x="609.2" y="872" width="2" height="2"/><rect x="615.2" y="875" width="3" height="2"/><rect x="624.2" y="872" width="3" height="2"/><rect x="642.2" y="878" width="2" height="2"/><rect x="644.2" y="872" width="2" height="2"/><rect x="652.2" y="872" width="3" height="2"/><rect x="658.2" y="878" width="2" height="2"/><rect x="690.2" y="878" width="2" height="2"/><rect x="698.3" y="762" width="3" height="2"/><rect x="701.3" y="762" width="2" height="2"/><rect x="707.3" y="762" width="3" height="2"/><rect x="710.3" y="759" width="2" height="2"/><rect x="717.3" y="762" width="2" height="2"/><rect x="725.3" y="762" width="2" height="2"/><rect x="741.3" y="762" width="2" height="2"/><rect x="743.3" y="759" width="3" height="2"/><rect x="749.3" y="756" width="3" height="2"/><rect x="764.3" y="762" width="2" height="2"/><rect x="770.3" y="756" width="2" height="2"/><rect x="774.3" y="756" width="3" height="2"/><rect x="777.3" y="756" width="3" height="2"/><rect x="788.3" y="762" width="2" height="2"/><rect x="800.3" y="762" width="2" height="2"/><rect x="802.3" y="762" width="2" height="2"/><rect x="806.3" y="756" width="3" height="2"/><rect x="811.3" y="756" width="2" height="2"/><rect x="824.3" y="759" width="2" height="2"/><rect x="826.3" y="762" width="2" height="2"/><rect x="832.3" y="759" width="2" height="2"/><rect x="838.3" y="759" width="2" height="2"/><rect x="840.3" y="756" width="2" height="2"/><rect x="851.3" y="759" width="2" height="2"/><rect x="859.3" y="756" width="2" height="2"/><rect x="861.3" y="759" width="3" height="2"/><rect x="871.3" y="756" width="3" height="2"/><rect x="876.3" y="759" width="2" height="2"/><rect x="878.3" y="762" width="2" height="2"/><rect x="886.3" y="756" width="2" height="2"/><rect x="888.3" y="762" width="2" height="2"/><rect x="900.3" y="759" width="2" height="2"/><rect x="904.3" y="759" width="3" height="2"/><rect x="909.3" y="756" width="3" height="2"/><rect x="912.3" y="756" width="3" height="2"/><rect x="928.3" y="762" width="2" height="2"/><rect x="930.3" y="759" width="2" height="2"/><rect x="934.3" y="762" width="2" height="2"/><rect x="936.3" y="759" width="2" height="2"/><rect x="938.3" y="762" width="2" height="2"/><rect x="942.3" y="759" width="3" height="2"/><rect x="957.3" y="762" width="3" height="2"/><rect x="960.3" y="762" width="2" height="2"/><rect x="967.3" y="756" width="2" height="2"/><rect x="975.3" y="759" width="2" height="2"/><rect x="977.3" y="762" width="3" height="2"/><rect x="980.3" y="762" width="2" height="2"/><rect x="982.3" y="759" width="3" height="2"/><rect x="992.0" y="875" width="2" height="2"/><rect x="1011.0" y="872" width="2" height="2"/><rect x="1013.0" y="872" width="2" height="2"/><rect x="1017.0" y="872" width="2" height="2"/><rect x="1028.0" y="872" width="2" height="2"/><rect x="1032.0" y="872" width="3" height="2"/><rect x="1048.0" y="878" width="3" height="2"/><rect x="1051.0" y="875" width="2" height="2"/><rect x="1055.0" y="878" width="2" height="2"/><rect x="1083.0" y="875" width="2" height="2"/><rect x="1090.0" y="875" width="2" height="2"/><rect x="1092.0" y="872" width="2" height="2"/><rect x="1094.0" y="872" width="2" height="2"/><rect x="1096.0" y="875" width="2" height="2"/><rect x="1103.0" y="875" width="3" height="2"/><rect x="1113.5" y="756" width="2" height="2"/><rect x="1138.5" y="759" width="3" height="2"/><rect x="1143.5" y="759" width="2" height="2"/><rect x="1155.5" y="759" width="2" height="2"/><rect x="1160.5" y="762" width="2" height="2"/><rect x="1173.5" y="759" width="3" height="2"/><rect x="1184.5" y="759" width="3" height="2"/><rect x="1189.5" y="756" width="2" height="2"/><rect x="1200.5" y="759" width="2" height="2"/><rect x="1206.5" y="762" width="2" height="2"/><rect x="1208.5" y="762" width="3" height="2"/><rect x="1211.5" y="762" width="2" height="2"/><rect x="1221.5" y="762" width="2" height="2"/><rect x="1229.5" y="759" width="2" height="2"/><rect x="1231.5" y="759" width="2" height="2"/><rect x="1236.5" y="762" width="2" height="2"/><rect x="1246.5" y="756" width="3" height="2"/><rect x="1249.5" y="762" width="2" height="2"/><rect x="1255.5" y="756" width="3" height="2"/><rect x="1258.5" y="756" width="3" height="2"/><rect x="1268.0" y="875" width="2" height="2"/><rect x="1270.0" y="872" width="3" height="2"/><rect x="1279.0" y="875" width="3" height="2"/><rect x="1287.0" y="872" width="2" height="2"/><rect x="1289.0" y="875" width="2" height="2"/><rect x="1294.0" y="872" width="2" height="2"/><rect x="1296.0" y="878" width="2" height="2"/><rect x="1312.0" y="875" width="3" height="2"/><rect x="1319.0" y="872" width="2" height="2"/><rect x="1333.0" y="875" width="2" height="2"/><rect x="1335.0" y="878" width="2" height="2"/><rect x="1341.0" y="872" width="2" height="2"/><rect x="1343.0" y="872" width="3" height="2"/><rect x="1354.5" y="762" width="2" height="2"/><rect x="1364.5" y="762" width="2" height="2"/><rect x="1366.5" y="756" width="3" height="2"/><rect x="1386.5" y="759" width="3" height="2"/><rect x="1391.5" y="762" width="3" height="2"/><rect x="1409.5" y="759" width="2" height="2"/><rect x="1434.5" y="762" width="2" height="2"/><rect x="1440.5" y="762" width="2" height="2"/><rect x="1466.0" y="878" width="2" height="2"/><rect x="1473.0" y="878" width="2" height="2"/><rect x="1477.0" y="875" width="3" height="2"/><rect x="1488.0" y="872" width="2" height="2"/><rect x="1490.0" y="878" width="3" height="2"/><rect x="1507.0" y="878" width="2" height="2"/><rect x="1509.0" y="875" width="2" height="2"/><rect x="1527.0" y="875" width="2" height="2"/><rect x="1529.0" y="878" width="2" height="2"/><rect x="1534.5" y="756" width="2" height="2"/><rect x="1540.5" y="762" width="2" height="2"/><rect x="1584.5" y="756" width="2" height="2"/><rect x="1590.5" y="759" width="2" height="2"/><rect x="1598.5" y="762" width="2" height="2"/><rect x="1602.5" y="762" width="2" height="2"/><rect x="1637.5" y="878" width="2" height="2"/><rect x="1653.5" y="878" width="2" height="2"/><rect x="1665.5" y="878" width="2" height="2"/><rect x="1672.5" y="875" width="2" height="2"/><rect x="1685.5" y="756" width="3" height="2"/><rect x="1688.5" y="762" width="2" height="2"/><rect x="1695.5" y="762" width="2" height="2"/><rect x="1697.5" y="762" width="2" height="2"/><rect x="1750.5" y="762" width="3" height="2"/><rect x="1753.5" y="762" width="2" height="2"/><rect x="1777.0" y="878" width="3" height="2"/><rect x="1782.0" y="875" width="2" height="2"/><rect x="1784.0" y="875" width="2" height="2"/><rect x="1803.0" y="878" width="2" height="2"/><rect x="1807.0" y="878" width="3" height="2"/><rect x="1815.0" y="756" width="2" height="2"/><rect x="1820.0" y="759" width="2" height="2"/><rect x="1822.0" y="759" width="2" height="2"/><rect x="1827.0" y="756" width="2" height="2"/><rect x="1838.0" y="756" width="2" height="2"/><rect x="1840.0" y="762" width="2" height="2"/><rect x="1847.0" y="762" width="3" height="2"/><rect x="1855.0" y="762" width="2" height="2"/><rect x="1866.0" y="762" width="3" height="2"/></g>
<text transform="translate(1880.00,157.0) scale(0.9493,1)" x="0" y="0" font-size="20" fill="#8cc400" text-anchor="end" stroke="#000" stroke-width="2.2" paint-order="stroke" stroke-linejoin="round">1.03 A</text>
<text transform="translate(1880.99,273.5) scale(0.9941,1)" x="0" y="0" font-size="20" fill="#8cc400" text-anchor="end" stroke="#000" stroke-width="2.2" paint-order="stroke" stroke-linejoin="round">530 mA</text>
<text transform="translate(1880.00,390.0) scale(0.9730,1)" x="0" y="0" font-size="20" fill="#8cc400" text-anchor="end" stroke="#000" stroke-width="2.2" paint-order="stroke" stroke-linejoin="round">30.0 mA</text>
<text transform="translate(1881.03,506.5) scale(1.0270,1)" x="0" y="0" font-size="20" fill="#8cc400" text-anchor="end" stroke="#000" stroke-width="2.2" paint-order="stroke" stroke-linejoin="round">-470 mA</text>
<text transform="translate(1880.00,623.0) scale(1.0107,1)" x="0" y="0" font-size="20" fill="#8cc400" text-anchor="end" stroke="#000" stroke-width="2.2" paint-order="stroke" stroke-linejoin="round">-970 mA</text>
<text transform="translate(1880.97,739.5) scale(0.9677,1)" x="0" y="0" font-size="20" fill="#8cc400" text-anchor="end" stroke="#000" stroke-width="2.2" paint-order="stroke" stroke-linejoin="round">-1.47 A</text>
<text transform="translate(1880.00,856.0) scale(0.9526,1)" x="0" y="0" font-size="20" fill="#8cc400" text-anchor="end" stroke="#000" stroke-width="2.2" paint-order="stroke" stroke-linejoin="round">-1.97 A</text>
<path d="M743,35 L765.5,35 L754.3,46.5 Z" fill="#f7941d"/>
<path d="M744.5,50 H764 V71.5 H758 L754.3,79.5 L750.5,71.5 H744.5 Z" fill="#1c1e28" stroke="#f7941d" stroke-width="2.8"/>
<text x="754.5" y="67.8" font-size="18" fill="#f7941d" text-anchor="middle" font-weight="bold">T</text>
<path d="M1822.5,45.3 H1872.5 Q1875,45.3 1875,48 V96.5 Q1875,99.8 1871.8,97.6 L1821,48.2 Q1819,45.3 1822.5,45.3 Z" fill="#333849"/>
<circle cx="1863.2" cy="56.6" r="7.0" fill="none" stroke="#95a6c8" stroke-width="3.6"/>
<path d="M1848.3,71.6 L1857.2,63.2" stroke="#95a6c8" stroke-width="4.3" stroke-linecap="round"/>
<path d="M5.5,371.5 H41 L54.5,388 L41,404.5 H5.5 Z" fill="#86b300" stroke="#000" stroke-width="1.2"/>
<text transform="translate(12.72,395) scale(0.8677,1)" x="0" y="0" font-size="20" fill="#000" text-anchor="start" >C4</text>
<rect x="72" y="376" width="59" height="24" fill="#000"/>
<text transform="translate(73.74,395) scale(0.9195,1)" x="0" y="0" font-size="20" fill="#a6e000" text-anchor="start" >I_OUT</text>
<rect x="72" y="647" width="80" height="24" fill="#050500"/>
<path d="M6.5,643.5 H40.5 L54,659 L40.5,674.5 H6.5 Z" fill="#000" stroke="#c4bc3c" stroke-width="2"/>
<text transform="translate(12.26,666) scale(0.7423,1)" x="0" y="0" font-size="20" fill="#c4bc3c" text-anchor="start" >C1</text>
<text transform="translate(73.24,666) scale(0.9001,1)" x="0" y="0" font-size="20" fill="#c4bc3c" text-anchor="start" >RC_OUT</text>
<rect x="72" y="862" width="38" height="24" fill="#050003"/>
<path d="M6.5,859.5 H40.5 L53.5,874.8 L40.5,890 H6.5 Z" fill="#000" stroke="#df6a98" stroke-width="2"/>
<text transform="translate(12.17,882) scale(0.8299,1)" x="0" y="0" font-size="20" fill="#df6a98" text-anchor="start" >C3</text>
<text transform="translate(73.39,882) scale(0.7855,1)" x="0" y="0" font-size="20" fill="#df6a98" text-anchor="start" >ENC</text>
<circle cx="1905.5" cy="495.5" r="3.8" fill="#c0d3f2"/>
<circle cx="1905.5" cy="507.5" r="3.8" fill="#c0d3f2"/>
<circle cx="1905.5" cy="519.4" r="3.8" fill="#c0d3f2"/>
<path d="M1861,543.3 L1875.2,530 L1875.2,556.5 Z" fill="#aaa33e"/>
<rect x="1874" y="541.8" width="13" height="3.2" fill="#aaa33e"/>
<clipPath id="cp1"><rect x="5" y="972" width="134" height="103.5" rx="8"/></clipPath><g clip-path="url(#cp1)"><rect x="5" y="972" width="134" height="103.5" fill="#9baed2"/><rect x="5" y="972" width="134" height="27" fill="#4a4d40"/></g><rect x="5.5" y="972.5" width="133" height="102.5" rx="8" fill="none" stroke="#6f7775" stroke-width="1.3"/>
<text transform="translate(13.34,992.7) scale(0.9053,1)" x="0" y="0" font-size="21" fill="#c9c23a" text-anchor="start" >Ch 1</text>
<text transform="translate(15.92,1018.6) scale(1.0999,1)" x="0" y="0" font-size="20" fill="#0a0a0a" text-anchor="start" >2.00 V/div</text>
<g fill="none" stroke="#000" stroke-width="1.5"><path d="M18.7,1037.5 C19.0,1032 22.0,1029.5 25.7,1029.5 C29.3,1029.5 32.0,1032 32.3,1037"/><circle cx="25.7" cy="1033.3" r="3.1"/><path d="M17.4,1037.2 H20.1 V1042.3 L18.75,1043.8 L17.4,1042.3 Z" fill="#fff" stroke-width="1.3"/><rect x="29.9" y="1037.2" width="4.6" height="6.6" rx="0.6" fill="#fff" stroke-width="1.3"/></g>
<text transform="translate(15.89,1066.5) scale(1.0331,1)" x="0" y="0" font-size="20" fill="#0a0a0a" text-anchor="start" >500 MHz</text>
<clipPath id="cp2"><rect x="146" y="972" width="133.5" height="103.5" rx="8"/></clipPath><g clip-path="url(#cp2)"><rect x="146" y="972" width="133.5" height="103.5" fill="#9baed2"/><rect x="146" y="972" width="133.5" height="27" fill="#522339"/></g><rect x="146.5" y="972.5" width="132.5" height="102.5" rx="8" fill="none" stroke="#6f7775" stroke-width="1.3"/>
<text transform="translate(154.26,992.7) scale(0.8918,1)" x="0" y="0" font-size="21" fill="#e8609a" text-anchor="start" >Ch 3</text>
<text transform="translate(157.25,1018.6) scale(1.0924,1)" x="0" y="0" font-size="20" fill="#0a0a0a" text-anchor="start" >5.00 V/div</text>
<g fill="none" stroke="#000" stroke-width="1.5"><path d="M159.2,1037.5 C159.5,1032 162.5,1029.5 166.2,1029.5 C169.8,1029.5 172.5,1032 172.8,1037"/><circle cx="166.2" cy="1033.3" r="3.1"/><path d="M157.9,1037.2 H160.6 V1042.3 L159.25,1043.8 L157.9,1042.3 Z" fill="#fff" stroke-width="1.3"/><rect x="170.4" y="1037.2" width="4.6" height="6.6" rx="0.6" fill="#fff" stroke-width="1.3"/></g>
<text transform="translate(157.08,1066.5) scale(1.0412,1)" x="0" y="0" font-size="20" fill="#0a0a0a" text-anchor="start" >500 MHz</text>
<clipPath id="cp3"><rect x="287.5" y="972" width="133.0" height="103.5" rx="8"/></clipPath><g clip-path="url(#cp3)"><rect x="287.5" y="972" width="133.0" height="103.5" fill="#9baed2"/><rect x="287.5" y="972" width="133.0" height="27" fill="#7ab300"/></g><rect x="288.0" y="972.5" width="132.0" height="102.5" rx="8" fill="none" stroke="#6f7775" stroke-width="1.3"/>
<text transform="translate(295.12,992.7) scale(0.9323,1)" x="0" y="0" font-size="21" fill="#111" text-anchor="start" >Ch 4</text>
<text transform="translate(298.03,1018.6) scale(1.1000,1)" x="0" y="0" font-size="20" fill="#0a0a0a" text-anchor="start" >500 mA/div</text>
<text transform="translate(297.92,1042.5) scale(0.9792,1)" x="0" y="0" font-size="20" fill="#0a0a0a" text-anchor="start" >1 MΩ</text>
<text transform="translate(297.93,1066.5) scale(0.9744,1)" x="0" y="0" font-size="20" fill="#0a0a0a" text-anchor="start" >120 MHz</text>
<text x="382.8" y="1062.8" font-size="12.5" font-weight="bold" fill="#111" transform="translate(382.8,1062.8) scale(0.85,1) translate(-382.8,-1062.8)">B</text><text x="388.2" y="1066.8" font-size="11.5" font-weight="bold" fill="#111">w</text>
<clipPath id="cp4"><rect x="1106" y="972" width="59.5" height="103.5" rx="8"/></clipPath><g clip-path="url(#cp4)"><rect x="1106" y="972" width="59.5" height="103.5" fill="#32374b"/></g><rect x="1106.5" y="972.5" width="58.5" height="102.5" rx="8" fill="none" stroke="#6f7775" stroke-width="1.3"/>
<rect x="1115" y="984" width="42" height="3.2" fill="#16b8e0"/>
<text transform="translate(1138.22,1031.1) scale(0.9357,1)" x="0" y="0" font-size="20" fill="#dfe7f1" text-anchor="middle" >2</text>
<clipPath id="cp5"><rect x="1173" y="972" width="59.5" height="103.5" rx="8"/></clipPath><g clip-path="url(#cp5)"><rect x="1173" y="972" width="59.5" height="103.5" fill="#32374b"/></g><rect x="1173.5" y="972.5" width="58.5" height="102.5" rx="8" fill="none" stroke="#6f7775" stroke-width="1.3"/>
<text transform="translate(1203.91,1006.7) scale(1.0909,1)" x="0" y="0" font-size="20" fill="#dfe7f1" text-anchor="middle" >Math</text>
<text transform="translate(1203.60,1030.6) scale(1.0000,1)" x="0" y="0" font-size="20" fill="#dfe7f1" text-anchor="middle" >Ref</text>
<text transform="translate(1204.12,1054.5) scale(0.9098,1)" x="0" y="0" font-size="20" fill="#dfe7f1" text-anchor="middle" >Bus</text>
<clipPath id="cp6"><rect x="1245.5" y="972" width="143.0" height="103.5" rx="8"/></clipPath><g clip-path="url(#cp6)"><rect x="1245.5" y="972" width="143.0" height="103.5" fill="#9baed2"/><rect x="1245.5" y="972" width="143.0" height="27" fill="#3c4a66"/></g><rect x="1246.0" y="972.5" width="142.0" height="102.5" rx="8" fill="none" stroke="#6f7775" stroke-width="1.3"/>
<text transform="translate(1251.71,993) scale(0.9770,1)" x="0" y="0" font-size="22" fill="#dfe7f1" text-anchor="start" >Horizontal</text>
<text transform="translate(1254.94,1018.5) scale(1.0300,1)" x="0" y="0" font-size="20" fill="#0a0a0a" text-anchor="start" >10.0 ms/div</text>
<text transform="translate(1255.83,1042.5) scale(0.9720,1)" x="0" y="0" font-size="20" fill="#0a0a0a" text-anchor="start" >SR:1.00 MS/s</text>
<text transform="translate(1255.23,1066.3) scale(1.0383,1)" x="0" y="0" font-size="20" fill="#0a0a0a" text-anchor="start" >RL:100 kpts</text>
<clipPath id="cp7"><rect x="1401" y="972" width="143.5" height="103.5" rx="8"/></clipPath><g clip-path="url(#cp7)"><rect x="1401" y="972" width="143.5" height="103.5" fill="#9baed2"/><rect x="1401" y="972" width="143.5" height="27" fill="#3c4a66"/></g><rect x="1401.5" y="972.5" width="142.5" height="102.5" rx="8" fill="none" stroke="#6f7775" stroke-width="1.3"/>
<text transform="translate(1410.18,993) scale(0.9364,1)" x="0" y="0" font-size="22" fill="#dfe7f1" text-anchor="start" >Trigger</text>
<rect x="1501" y="976.8" width="33.2" height="18.5" rx="2.5" fill="#b5ab30" stroke="#2a2e3a" stroke-width="1"/>
<text x="1517.5" y="993" font-size="19" fill="#000" text-anchor="middle" >1</text>
<path d="M1413,1019.3 H1419 L1430.5,1005.6 H1435" fill="none" stroke="#000" stroke-width="2.6"/>
<text transform="translate(1532.88,1018.7) scale(1.0458,1)" x="0" y="0" font-size="20" fill="#0a0a0a" text-anchor="end" >2.00 V</text>
<path d="M1524.7,1035.7 L1524.7,1049 L1527.6,1046.3 L1530.3,1051.5 L1532.2,1050.5 L1529.6,1045.4 L1533.4,1045.2 Z" fill="#000" stroke="#fff" stroke-width="0.9"/>
<clipPath id="cp8"><rect x="1557.5" y="972" width="143.0" height="103.5" rx="8"/></clipPath><g clip-path="url(#cp8)"><rect x="1557.5" y="972" width="143.0" height="103.5" fill="#9baed2"/><rect x="1557.5" y="972" width="143.0" height="27" fill="#3c4a66"/></g><rect x="1558.0" y="972.5" width="142.0" height="102.5" rx="8" fill="none" stroke="#6f7775" stroke-width="1.3"/>
<text transform="translate(1566.70,993) scale(0.9658,1)" x="0" y="0" font-size="22" fill="#dfe7f1" text-anchor="start" >Acquisition</text>
<text transform="translate(1567.80,1018.3) scale(0.9730,1)" x="0" y="0" font-size="20" fill="#0a0a0a" text-anchor="start" >Sample</text>
<text transform="translate(1567.84,1042.2) scale(0.9570,1)" x="0" y="0" font-size="20" fill="#0a0a0a" text-anchor="start" >Single: 1/1</text>
<clipPath id="cp9"><rect x="1713" y="972" width="59.5" height="103.5" rx="8"/></clipPath><g clip-path="url(#cp9)"><rect x="1713" y="972" width="59.5" height="103.5" fill="#32374b"/></g><rect x="1713.5" y="972.5" width="58.5" height="102.5" rx="8" fill="none" stroke="#6f7775" stroke-width="1.3"/>
<rect x="1722" y="984" width="42" height="3.2" fill="#e87722"/>
<text transform="translate(1743.86,1030.6) scale(0.8252,1)" x="0" y="0" font-size="20" fill="#dfe7f1" text-anchor="middle" >RF</text>
<clipPath id="cp10"><rect x="1785" y="972.5" width="129.5" height="48.0" rx="8"/></clipPath><g clip-path="url(#cp10)"><rect x="1785" y="972.5" width="129.5" height="48.0" fill="#c8373a"/></g><rect x="1785.5" y="973.0" width="128.5" height="47.0" rx="8" fill="none" stroke="#6f7775" stroke-width="1.3"/>
<text transform="translate(1850.05,1003.6) scale(0.9583,1)" x="0" y="0" font-size="22" fill="#e8eef8" text-anchor="middle" >Preview</text>
<clipPath id="cp11"><rect x="1785" y="1027" width="129.5" height="48.5" rx="8"/></clipPath><g clip-path="url(#cp11)"><rect x="1785" y="1027" width="129.5" height="48.5" fill="#9baed2"/></g><rect x="1785.5" y="1027.5" width="128.5" height="47.5" rx="8" fill="none" stroke="#6f7775" stroke-width="1.3"/>
<text transform="translate(1851.45,1045.9) scale(1.0990,1)" x="0" y="0" font-size="20" fill="#0a0a0a" text-anchor="middle" >5 Apr 2024</text>
<text transform="translate(1851.80,1069.3) scale(0.9791,1)" x="0" y="0" font-size="20" fill="#0a0a0a" text-anchor="middle" >02:37:28</text>
</svg></body></html>
